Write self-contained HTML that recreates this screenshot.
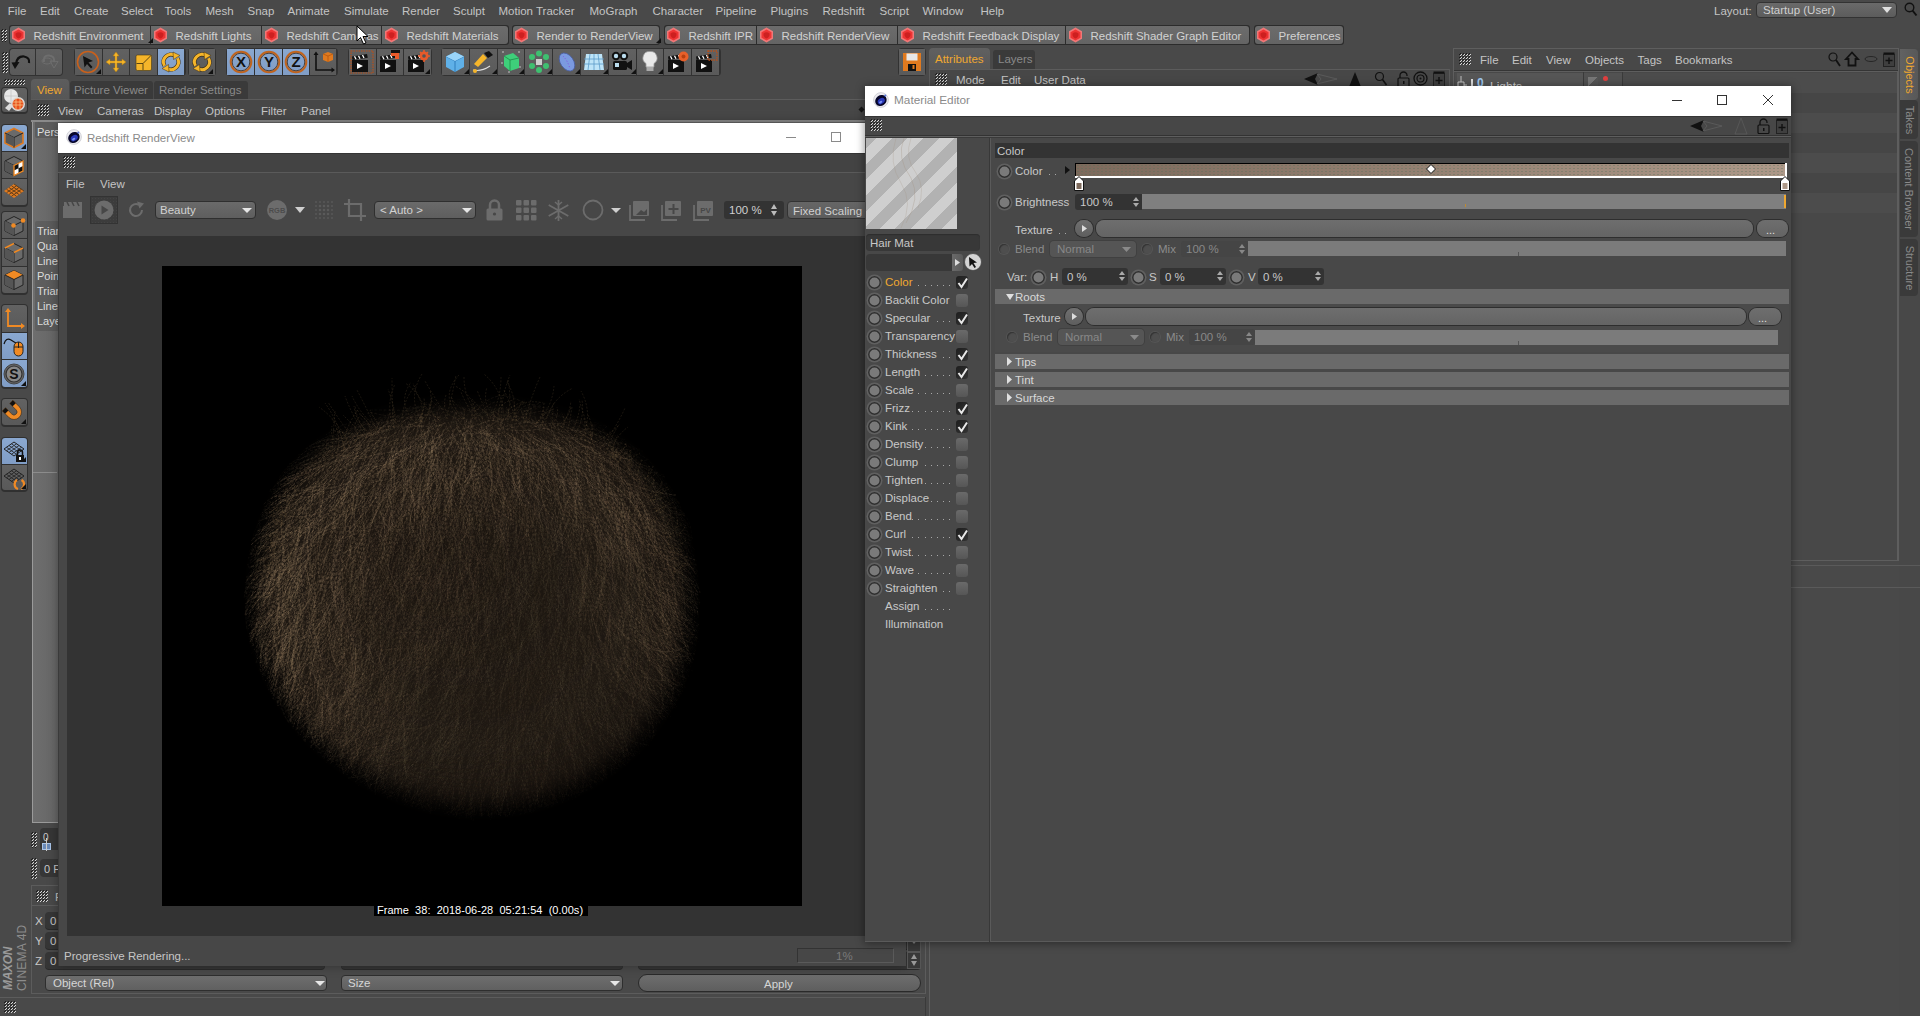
<!DOCTYPE html>
<html><head><meta charset="utf-8"><title>C4D</title><style>
*{margin:0;padding:0}
html,body{width:1920px;height:1016px;overflow:hidden;background:#494949;}
body{position:relative;font-family:"Liberation Sans",sans-serif;font-size:11.5px;color:#c4c4c4;}
.a{position:absolute;}
.t{position:absolute;line-height:1;white-space:pre;}
svg.a{overflow:visible;}
.grip{background-color:transparent;}
</style></head><body><svg width="0" height="0" style="position:absolute"><defs><pattern id="gp" width="3" height="3" patternUnits="userSpaceOnUse"><rect x="1" y="0" width="1" height="1" fill="#1c1c1c"/><rect x="0" y="1" width="1" height="1" fill="#1c1c1c"/><rect x="2" y="1" width="1" height="1" fill="#d8d8d8"/><rect x="1" y="2" width="1" height="1" fill="#d8d8d8"/></pattern></defs></svg>
<div class="t" style="left:7.800000000000001px;top:6.27px;font-size:11.5px;color:#c4c4c4;">File</div>
<div class="t" style="left:40.0px;top:6.27px;font-size:11.5px;color:#c4c4c4;">Edit</div>
<div class="t" style="left:74.0px;top:6.27px;font-size:11.5px;color:#c4c4c4;">Create</div>
<div class="t" style="left:121.0px;top:6.27px;font-size:11.5px;color:#c4c4c4;">Select</div>
<div class="t" style="left:164.5px;top:6.27px;font-size:11.5px;color:#c4c4c4;">Tools</div>
<div class="t" style="left:205.5px;top:6.27px;font-size:11.5px;color:#c4c4c4;">Mesh</div>
<div class="t" style="left:247.5px;top:6.27px;font-size:11.5px;color:#c4c4c4;">Snap</div>
<div class="t" style="left:287.5px;top:6.27px;font-size:11.5px;color:#c4c4c4;">Animate</div>
<div class="t" style="left:344.0px;top:6.27px;font-size:11.5px;color:#c4c4c4;">Simulate</div>
<div class="t" style="left:402.0px;top:6.27px;font-size:11.5px;color:#c4c4c4;">Render</div>
<div class="t" style="left:453.0px;top:6.27px;font-size:11.5px;color:#c4c4c4;">Sculpt</div>
<div class="t" style="left:498.5px;top:6.27px;font-size:11.5px;color:#c4c4c4;">Motion Tracker</div>
<div class="t" style="left:589.5px;top:6.27px;font-size:11.5px;color:#c4c4c4;">MoGraph</div>
<div class="t" style="left:652.5px;top:6.27px;font-size:11.5px;color:#c4c4c4;">Character</div>
<div class="t" style="left:715.5px;top:6.27px;font-size:11.5px;color:#c4c4c4;">Pipeline</div>
<div class="t" style="left:770.5px;top:6.27px;font-size:11.5px;color:#c4c4c4;">Plugins</div>
<div class="t" style="left:822.5px;top:6.27px;font-size:11.5px;color:#c4c4c4;">Redshift</div>
<div class="t" style="left:879.5px;top:6.27px;font-size:11.5px;color:#c4c4c4;">Script</div>
<div class="t" style="left:922.5px;top:6.27px;font-size:11.5px;color:#c4c4c4;">Window</div>
<div class="t" style="left:980.5px;top:6.27px;font-size:11.5px;color:#c4c4c4;">Help</div>
<div class="t" style="left:1714px;top:6.27px;font-size:11.5px;color:#c4c4c4;">Layout:</div>
<div class="a" style="left:1756px;top:2px;width:141px;height:16px;background:linear-gradient(#6a6a6a,#5c5c5c);border:1px solid #333;border-radius:4px;box-sizing:border-box;"></div>
<div class="t" style="left:1763px;top:5.27px;font-size:11.5px;color:#d0d0d0;">Startup (User)</div>
<svg class="a" style="left:1882px;top:7px;" width="10" height="6" viewBox="0 0 10 6"><path d="M0 0H10L5 6Z" fill="#e0e0e0"/></svg>
<svg class="a" style="left:1904px;top:2px;" width="14" height="16" viewBox="0 0 14 16"><circle cx="5.5" cy="5.5" r="4.3" fill="none" stroke="#111" stroke-width="1.4"/><path d="M8.5 8.5L12.5 13.5" stroke="#111" stroke-width="2"/></svg>
<svg class="a" style="left:1px;top:29px" width="6" height="13"><rect width="6" height="13" fill="url(#gp)"/></svg>
<div class="a" style="left:9px;top:25px;width:500px;height:20px;background:#2c2c2c;border-radius:3px;"></div>
<div class="a" style="left:10px;top:26px;width:140px;height:18px;background:linear-gradient(#6c6c6c,#646464);border-top-left-radius:3px;border-bottom-left-radius:3px;"></div>
<svg class="a" style="left:11px;top:27px" width="15" height="16" viewBox="0 0 15 16"><path d="M7.5 0.5L14 4.2V11.8L7.5 15.5L1 11.8V4.2Z" fill="#f07878"/><path d="M7.5 2.5L12.5 5.3V10.7L7.5 13.5L2.5 10.7V5.3Z" fill="#e33"/><path d="M4.5 6.5Q7.5 4 10.5 6.5Q11 10 7.5 11.5Q4 10 4.5 6.5Z" fill="#c41c1c" opacity="0.8"/></svg>
<div class="t" style="left:33.5px;top:31.27px;font-size:11.5px;color:#d2d2d2;">Redshift Environment</div>
<div class="a" style="left:151px;top:26px;width:110px;height:18px;background:linear-gradient(#6c6c6c,#646464);"></div>
<svg class="a" style="left:153px;top:27px" width="15" height="16" viewBox="0 0 15 16"><path d="M7.5 0.5L14 4.2V11.8L7.5 15.5L1 11.8V4.2Z" fill="#f07878"/><path d="M7.5 2.5L12.5 5.3V10.7L7.5 13.5L2.5 10.7V5.3Z" fill="#e33"/><path d="M4.5 6.5Q7.5 4 10.5 6.5Q11 10 7.5 11.5Q4 10 4.5 6.5Z" fill="#c41c1c" opacity="0.8"/></svg>
<div class="t" style="left:175.5px;top:31.27px;font-size:11.5px;color:#d2d2d2;">Redshift Lights</div>
<div class="a" style="left:262px;top:26px;width:119px;height:18px;background:linear-gradient(#6c6c6c,#646464);"></div>
<svg class="a" style="left:264px;top:27px" width="15" height="16" viewBox="0 0 15 16"><path d="M7.5 0.5L14 4.2V11.8L7.5 15.5L1 11.8V4.2Z" fill="#f07878"/><path d="M7.5 2.5L12.5 5.3V10.7L7.5 13.5L2.5 10.7V5.3Z" fill="#e33"/><path d="M4.5 6.5Q7.5 4 10.5 6.5Q11 10 7.5 11.5Q4 10 4.5 6.5Z" fill="#c41c1c" opacity="0.8"/></svg>
<div class="t" style="left:286.5px;top:31.27px;font-size:11.5px;color:#d2d2d2;">Redshift Cameras</div>
<div class="a" style="left:382px;top:26px;width:126px;height:18px;background:linear-gradient(#6c6c6c,#646464);border-top-right-radius:3px;border-bottom-right-radius:3px;"></div>
<svg class="a" style="left:384px;top:27px" width="15" height="16" viewBox="0 0 15 16"><path d="M7.5 0.5L14 4.2V11.8L7.5 15.5L1 11.8V4.2Z" fill="#f07878"/><path d="M7.5 2.5L12.5 5.3V10.7L7.5 13.5L2.5 10.7V5.3Z" fill="#e33"/><path d="M4.5 6.5Q7.5 4 10.5 6.5Q11 10 7.5 11.5Q4 10 4.5 6.5Z" fill="#c41c1c" opacity="0.8"/></svg>
<div class="t" style="left:406.5px;top:31.27px;font-size:11.5px;color:#d2d2d2;">Redshift Materials</div>
<div class="a" style="left:512px;top:25px;width:148px;height:20px;background:#2c2c2c;border-radius:3px;"></div>
<div class="a" style="left:513px;top:26px;width:146px;height:18px;background:linear-gradient(#6c6c6c,#646464);border-top-left-radius:3px;border-bottom-left-radius:3px;border-top-right-radius:3px;border-bottom-right-radius:3px;"></div>
<svg class="a" style="left:514px;top:27px" width="15" height="16" viewBox="0 0 15 16"><path d="M7.5 0.5L14 4.2V11.8L7.5 15.5L1 11.8V4.2Z" fill="#f07878"/><path d="M7.5 2.5L12.5 5.3V10.7L7.5 13.5L2.5 10.7V5.3Z" fill="#e33"/><path d="M4.5 6.5Q7.5 4 10.5 6.5Q11 10 7.5 11.5Q4 10 4.5 6.5Z" fill="#c41c1c" opacity="0.8"/></svg>
<div class="t" style="left:536.5px;top:31.27px;font-size:11.5px;color:#d2d2d2;">Render to RenderView</div>
<div class="a" style="left:664px;top:25px;width:586px;height:20px;background:#2c2c2c;border-radius:3px;"></div>
<div class="a" style="left:665px;top:26px;width:91px;height:18px;background:linear-gradient(#6c6c6c,#646464);border-top-left-radius:3px;border-bottom-left-radius:3px;"></div>
<svg class="a" style="left:666px;top:27px" width="15" height="16" viewBox="0 0 15 16"><path d="M7.5 0.5L14 4.2V11.8L7.5 15.5L1 11.8V4.2Z" fill="#f07878"/><path d="M7.5 2.5L12.5 5.3V10.7L7.5 13.5L2.5 10.7V5.3Z" fill="#e33"/><path d="M4.5 6.5Q7.5 4 10.5 6.5Q11 10 7.5 11.5Q4 10 4.5 6.5Z" fill="#c41c1c" opacity="0.8"/></svg>
<div class="t" style="left:688.5px;top:31.27px;font-size:11.5px;color:#d2d2d2;">Redshift IPR</div>
<div class="a" style="left:757px;top:26px;width:140px;height:18px;background:linear-gradient(#6c6c6c,#646464);"></div>
<svg class="a" style="left:759px;top:27px" width="15" height="16" viewBox="0 0 15 16"><path d="M7.5 0.5L14 4.2V11.8L7.5 15.5L1 11.8V4.2Z" fill="#f07878"/><path d="M7.5 2.5L12.5 5.3V10.7L7.5 13.5L2.5 10.7V5.3Z" fill="#e33"/><path d="M4.5 6.5Q7.5 4 10.5 6.5Q11 10 7.5 11.5Q4 10 4.5 6.5Z" fill="#c41c1c" opacity="0.8"/></svg>
<div class="t" style="left:781.5px;top:31.27px;font-size:11.5px;color:#d2d2d2;">Redshift RenderView</div>
<div class="a" style="left:898px;top:26px;width:167px;height:18px;background:linear-gradient(#6c6c6c,#646464);"></div>
<svg class="a" style="left:900px;top:27px" width="15" height="16" viewBox="0 0 15 16"><path d="M7.5 0.5L14 4.2V11.8L7.5 15.5L1 11.8V4.2Z" fill="#f07878"/><path d="M7.5 2.5L12.5 5.3V10.7L7.5 13.5L2.5 10.7V5.3Z" fill="#e33"/><path d="M4.5 6.5Q7.5 4 10.5 6.5Q11 10 7.5 11.5Q4 10 4.5 6.5Z" fill="#c41c1c" opacity="0.8"/></svg>
<div class="t" style="left:922.5px;top:31.27px;font-size:11.5px;color:#d2d2d2;">Redshift Feedback Display</div>
<div class="a" style="left:1066px;top:26px;width:183px;height:18px;background:linear-gradient(#6c6c6c,#646464);border-top-right-radius:3px;border-bottom-right-radius:3px;"></div>
<svg class="a" style="left:1068px;top:27px" width="15" height="16" viewBox="0 0 15 16"><path d="M7.5 0.5L14 4.2V11.8L7.5 15.5L1 11.8V4.2Z" fill="#f07878"/><path d="M7.5 2.5L12.5 5.3V10.7L7.5 13.5L2.5 10.7V5.3Z" fill="#e33"/><path d="M4.5 6.5Q7.5 4 10.5 6.5Q11 10 7.5 11.5Q4 10 4.5 6.5Z" fill="#c41c1c" opacity="0.8"/></svg>
<div class="t" style="left:1090.5px;top:31.27px;font-size:11.5px;color:#d2d2d2;">Redshift Shader Graph Editor</div>
<div class="a" style="left:1254px;top:25px;width:90px;height:20px;background:#2c2c2c;border-radius:3px;"></div>
<div class="a" style="left:1255px;top:26px;width:88px;height:18px;background:linear-gradient(#6c6c6c,#646464);border-top-left-radius:3px;border-bottom-left-radius:3px;border-top-right-radius:3px;border-bottom-right-radius:3px;"></div>
<svg class="a" style="left:1256px;top:27px" width="15" height="16" viewBox="0 0 15 16"><path d="M7.5 0.5L14 4.2V11.8L7.5 15.5L1 11.8V4.2Z" fill="#f07878"/><path d="M7.5 2.5L12.5 5.3V10.7L7.5 13.5L2.5 10.7V5.3Z" fill="#e33"/><path d="M4.5 6.5Q7.5 4 10.5 6.5Q11 10 7.5 11.5Q4 10 4.5 6.5Z" fill="#c41c1c" opacity="0.8"/></svg>
<div class="t" style="left:1278.5px;top:31.27px;font-size:11.5px;color:#d2d2d2;">Preferences</div>
<svg class="a" style="left:148px;top:38px;" width="5" height="5" viewBox="0 0 5 5"><path d="M5 0V5H0Z" fill="#111"/></svg>
<svg class="a" style="left:656px;top:38px;" width="5" height="5" viewBox="0 0 5 5"><path d="M5 0V5H0Z" fill="#111"/></svg>
<svg class="a" style="left:2px;top:52px" width="6" height="21"><rect width="6" height="21" fill="url(#gp)"/></svg>
<div class="a" style="left:9px;top:48px;width:54px;height:28px;background:#323232;border-radius:4px;"></div>
<div class="a" style="left:10px;top:49px;width:25px;height:26px;background:linear-gradient(#616161,#5a5a5a);border-radius:3px 0 0 3px;"></div>
<div class="a" style="left:36px;top:49px;width:26px;height:26px;background:linear-gradient(#616161,#5a5a5a);border-radius:0 3px 3px 0;"></div>
<div class="a" style="left:74px;top:48px;width:112px;height:28px;background:#323232;border-radius:4px;"></div>
<div class="a" style="left:75px;top:49px;width:26.5px;height:26px;background:linear-gradient(#616161,#5a5a5a);"></div>
<div class="a" style="left:102.5px;top:49px;width:26.5px;height:26px;background:linear-gradient(#616161,#5a5a5a);"></div>
<div class="a" style="left:130px;top:49px;width:26.5px;height:26px;background:linear-gradient(#616161,#5a5a5a);"></div>
<div class="a" style="left:157.5px;top:49px;width:26.5px;height:26px;background:linear-gradient(#8aa8d0,#809dc6);"></div>
<div class="a" style="left:188px;top:48px;width:28px;height:28px;background:#323232;border-radius:4px;"></div>
<div class="a" style="left:189px;top:49px;width:26px;height:26px;background:linear-gradient(#616161,#5a5a5a);"></div>
<div class="a" style="left:226px;top:48px;width:112px;height:28px;background:#323232;border-radius:4px;"></div>
<div class="a" style="left:227px;top:49px;width:27px;height:26px;background:linear-gradient(#8aa8d0,#809dc6);"></div>
<div class="a" style="left:255px;top:49px;width:27px;height:26px;background:linear-gradient(#8aa8d0,#809dc6);"></div>
<div class="a" style="left:283px;top:49px;width:26px;height:26px;background:linear-gradient(#8aa8d0,#809dc6);"></div>
<div class="a" style="left:310px;top:49px;width:26px;height:26px;background:linear-gradient(#616161,#5a5a5a);"></div>
<div class="a" style="left:348px;top:48px;width:84px;height:28px;background:#323232;border-radius:4px;"></div>
<div class="a" style="left:349.0px;top:49px;width:26.69999999999999px;height:26px;background:linear-gradient(#616161,#5a5a5a);"></div>
<div class="a" style="left:376.7px;top:49px;width:26.69999999999999px;height:26px;background:linear-gradient(#616161,#5a5a5a);"></div>
<div class="a" style="left:404.4px;top:49px;width:26.700000000000045px;height:26px;background:linear-gradient(#616161,#5a5a5a);"></div>
<div class="a" style="left:441px;top:48px;width:280px;height:28px;background:#323232;border-radius:4px;"></div>
<div class="a" style="left:442.0px;top:49px;width:26.80000000000001px;height:26px;background:linear-gradient(#616161,#5a5a5a);"></div>
<div class="a" style="left:469.8px;top:49px;width:26.80000000000001px;height:26px;background:linear-gradient(#616161,#5a5a5a);"></div>
<div class="a" style="left:497.6px;top:49px;width:26.799999999999955px;height:26px;background:linear-gradient(#616161,#5a5a5a);"></div>
<div class="a" style="left:525.4px;top:49px;width:26.800000000000068px;height:26px;background:linear-gradient(#616161,#5a5a5a);"></div>
<div class="a" style="left:553.2px;top:49px;width:26.799999999999955px;height:26px;background:linear-gradient(#616161,#5a5a5a);"></div>
<div class="a" style="left:581.0px;top:49px;width:26.799999999999955px;height:26px;background:linear-gradient(#616161,#5a5a5a);"></div>
<div class="a" style="left:608.8px;top:49px;width:26.800000000000068px;height:26px;background:linear-gradient(#616161,#5a5a5a);"></div>
<div class="a" style="left:636.6px;top:49px;width:26.799999999999955px;height:26px;background:linear-gradient(#616161,#5a5a5a);"></div>
<div class="a" style="left:664.4px;top:49px;width:26.800000000000068px;height:26px;background:linear-gradient(#616161,#5a5a5a);"></div>
<div class="a" style="left:692.2px;top:49px;width:26.799999999999955px;height:26px;background:linear-gradient(#616161,#5a5a5a);"></div>
<div class="a" style="left:898px;top:48px;width:28px;height:28px;background:#323232;border-radius:4px;"></div>
<div class="a" style="left:899px;top:49px;width:26px;height:26px;background:linear-gradient(#616161,#5a5a5a);"></div>
<svg class="a" style="left:10px;top:50px;" width="24" height="24" viewBox="0 0 24 24"><path d="M6 14 Q7 6 14 6.5 Q20 7.5 19 13" fill="none" stroke="#111" stroke-width="2.2"/><path d="M1.5 12.5L9.5 12L5 19Z" fill="#111"/></svg>
<svg class="a" style="left:37px;top:50px;" width="24" height="24" viewBox="0 0 24 24"><path d="M7 12 Q6 5 12 5.5 Q18 6 17 12" fill="none" stroke="#6e6e6e" stroke-width="2"/><path d="M13 11L21 11.5L17 18Z" fill="none" stroke="#6e6e6e" stroke-width="1"/><ellipse cx="10" cy="11" rx="5" ry="3" fill="none" stroke="#6e6e6e"/></svg>
<svg class="a" style="left:76px;top:50px;" width="24" height="24" viewBox="0 0 24 24"><circle cx="12" cy="12" r="10.5" fill="none" stroke="#c8601c" stroke-width="1.6"/><path d="M7 6L17 11L12.5 12.5L16.5 17L15 18.5L11 14L8.5 17.5Z" fill="#111"/></svg>
<svg class="a" style="left:104px;top:50px;" width="24" height="24" viewBox="0 0 24 24"><path d="M12 2L15 6H13V11H18V9L22 12L18 15V13H13V18H15L12 22L9 18H11V13H6V15L2 12L6 9V11H11V6H9Z" fill="#f5b52a" stroke="#b07a10" stroke-width="0.5"/></svg>
<svg class="a" style="left:132px;top:50px;" width="24" height="24" viewBox="0 0 24 24"><rect x="4" y="5" width="15.5" height="15.5" rx="1.5" fill="#f5b52a" stroke="#4a3a10" stroke-width="0.6"/><path d="M4.5 13.5H11V20" fill="none" stroke="#4a3a10" stroke-width="0.9"/><path d="M11 13.5L19 5.5" stroke="#4a3a10" stroke-width="0.9"/></svg>
<svg class="a" style="left:159px;top:50px;" width="24" height="24" viewBox="0 0 24 24"><path d="M18.5 8.25A7.5 7.5 0 0 1 8.25 18.5M5.5 15.75A7.5 7.5 0 0 1 15.75 5.5" fill="none" stroke="#3a2a10" stroke-width="4.2"/><path d="M18.5 8.25A7.5 7.5 0 0 1 8.25 18.5M5.5 15.75A7.5 7.5 0 0 1 15.75 5.5" fill="none" stroke="#f5b52a" stroke-width="3"/><path d="M14 2L21 5.5L14.5 9.5Z M10 22L3 18.5L9.5 14.5Z" fill="#f5b52a" stroke="#3a2a10" stroke-width="0.5"/></svg>
<svg class="a" style="left:190px;top:50px;" width="24" height="24" viewBox="0 0 24 24"><path d="M18.5 8.25A7.5 7.5 0 0 1 8.25 18.5M5.5 15.75A7.5 7.5 0 0 1 15.75 5.5" fill="none" stroke="#3a2a10" stroke-width="4.2"/><path d="M18.5 8.25A7.5 7.5 0 0 1 8.25 18.5M5.5 15.75A7.5 7.5 0 0 1 15.75 5.5" fill="none" stroke="#f5b52a" stroke-width="3"/><path d="M14 2L21 5.5L14.5 9.5Z M10 22L3 18.5L9.5 14.5Z" fill="#f5b52a" stroke="#3a2a10" stroke-width="0.5"/></svg>
<svg class="a" style="left:229px;top:50px;" width="24" height="24" viewBox="0 0 24 24"><circle cx="12" cy="12" r="10.3" fill="none" stroke="#c0641e" stroke-width="2"/><circle cx="12" cy="12" r="8.8" fill="none" stroke="#3a2a1a" stroke-width="0.8"/><text x="12" y="17.2" text-anchor="middle" font-family="Liberation Sans" font-weight="bold" font-size="15" fill="#111">X</text></svg>
<svg class="a" style="left:257px;top:50px;" width="24" height="24" viewBox="0 0 24 24"><circle cx="12" cy="12" r="10.3" fill="none" stroke="#c0641e" stroke-width="2"/><circle cx="12" cy="12" r="8.8" fill="none" stroke="#3a2a1a" stroke-width="0.8"/><text x="12" y="17.2" text-anchor="middle" font-family="Liberation Sans" font-weight="bold" font-size="15" fill="#111">Y</text></svg>
<svg class="a" style="left:284px;top:50px;" width="24" height="24" viewBox="0 0 24 24"><circle cx="12" cy="12" r="10.3" fill="none" stroke="#c0641e" stroke-width="2"/><circle cx="12" cy="12" r="8.8" fill="none" stroke="#3a2a1a" stroke-width="0.8"/><text x="12" y="17.2" text-anchor="middle" font-family="Liberation Sans" font-weight="bold" font-size="15" fill="#111">Z</text></svg>
<svg class="a" style="left:312px;top:50px;" width="24" height="24" viewBox="0 0 24 24"><path d="M4 4V20H21" fill="none" stroke="#111" stroke-width="1.6"/><path d="M4 1.5L6.5 5H1.5Z M23 20L19.5 22.5V17.5Z" fill="#111"/><path d="M11 4L16 2L21 4V10L16 12L11 10Z" fill="#e07a1f"/><path d="M11 4L16 6L21 4 M16 6V12" stroke="#b0500a" fill="none" stroke-width="0.7"/></svg>
<svg class="a" style="left:350px;top:50px;" width="24" height="24" viewBox="0 0 24 24"><rect x="2" y="10" width="16" height="12" fill="#111"/><path d="M2 6.5L17 4L17.8 7.8L2.5 10Z" fill="#111"/><path d="M4.5 6.3L6 9.3M8.5 5.7L10 8.7M12.5 5L14 8" stroke="#fff" stroke-width="1.3"/><path d="M7 13L13 16L7 19Z" fill="#fff"/><rect x="1" y="1" width="22" height="22" fill="none" stroke="#b8501a" stroke-width="1.2" stroke-dasharray="1.5 1"/></svg>
<svg class="a" style="left:378px;top:50px;" width="24" height="24" viewBox="0 0 24 24"><rect x="2" y="10" width="16" height="12" fill="#111"/><path d="M2 6.5L17 4L17.8 7.8L2.5 10Z" fill="#111"/><path d="M4.5 6.3L6 9.3M8.5 5.7L10 8.7M12.5 5L14 8" stroke="#fff" stroke-width="1.3"/><path d="M7 13L13 16L7 19Z" fill="#fff"/><path d="M13 1H21V9H17V6H13Z" fill="#e85a2a"/><rect x="13" y="0" width="9" height="3" fill="#111"/></svg>
<svg class="a" style="left:406px;top:50px;" width="24" height="24" viewBox="0 0 24 24"><rect x="2" y="10" width="16" height="12" fill="#111"/><path d="M2 6.5L17 4L17.8 7.8L2.5 10Z" fill="#111"/><path d="M4.5 6.3L6 9.3M8.5 5.7L10 8.7M12.5 5L14 8" stroke="#fff" stroke-width="1.3"/><path d="M7 13L13 16L7 19Z" fill="#fff"/><circle cx="18" cy="6" r="4.5" fill="#e85a2a"/><circle cx="18" cy="6" r="1.8" fill="#555"/><path d="M18 0V2M18 10V12M12 6H14M22 6H24M14 2L15.3 3.3M22 2L20.7 3.3" stroke="#e85a2a" stroke-width="1.6"/></svg>
<svg class="a" style="left:443px;top:50px;" width="24" height="24" viewBox="0 0 24 24"><path d="M12 2L21 6.5V17L12 22L3 17V6.5Z" fill="#5fb0e8"/><path d="M3 6.5L12 11L21 6.5M12 11V22" fill="none" stroke="#2a78b8" stroke-width="0.9"/><path d="M12 2L21 6.5L12 11L3 6.5Z" fill="#9ad4f8"/></svg>
<svg class="a" style="left:471px;top:50px;" width="24" height="24" viewBox="0 0 24 24"><path d="M3 14L12 4L16 8L7 17Z" fill="#f5b52a"/><path d="M13 3L18 1L22 5L17 8Z" fill="#111"/><path d="M2 20Q10 22 19 16" fill="none" stroke="#ddd" stroke-width="1.2"/><circle cx="4" cy="21" r="2" fill="#f5b52a"/></svg>
<svg class="a" style="left:499px;top:50px;" width="24" height="24" viewBox="0 0 24 24"><path d="M5 6L14 3L20 8V18L11 21L5 16Z" fill="#3ecf7a"/><path d="M5 6L11 10L20 8M11 10V21" fill="none" stroke="#1f8a48" stroke-width="0.8"/><rect x="3" y="2" width="18" height="20" fill="none" stroke="#ddd" stroke-width="0.8" stroke-dasharray="2 14"/></svg>
<svg class="a" style="left:527px;top:50px;" width="24" height="24" viewBox="0 0 24 24"><g fill="#3ec070"><circle cx="12" cy="3.5" r="3"/><circle cx="19" cy="7" r="3"/><circle cx="19" cy="16" r="3"/><circle cx="12" cy="20" r="3"/><circle cx="5" cy="16" r="3"/><circle cx="5" cy="7" r="3"/></g><rect x="9" y="9" width="6" height="6" fill="#ccc"/></svg>
<svg class="a" style="left:555px;top:50px;" width="24" height="24" viewBox="0 0 24 24"><ellipse cx="12" cy="12" rx="6.5" ry="10" transform="rotate(-35 12 12)" fill="#7b9ae0" stroke="#4a5ea0" stroke-width="0.8"/><path d="M8 6Q13 11 15 19" fill="none" stroke="#8a2be2" stroke-width="0.7" stroke-dasharray="1 2"/></svg>
<svg class="a" style="left:582px;top:50px;" width="24" height="24" viewBox="0 0 24 24"><path d="M4 4H20L22 20H2Z" fill="#bde4f8"/><path d="M2 9H22M2 14H22M8 4L6 20M12 4V20M16 4L18 20" stroke="#5a9ac8" stroke-width="0.8"/></svg>
<svg class="a" style="left:610px;top:50px;" width="24" height="24" viewBox="0 0 24 24"><circle cx="6" cy="6" r="4.2" fill="#111"/><circle cx="14" cy="6" r="4.2" fill="#111"/><circle cx="6" cy="6" r="2.2" fill="#bde"/><circle cx="14" cy="6" r="2.2" fill="#bde"/><rect x="3" y="11" width="14" height="9" rx="1.5" fill="#111"/><rect x="5" y="13" width="4" height="4" fill="#bde"/><path d="M17 13L22 10V20L17 17Z" fill="#111"/></svg>
<svg class="a" style="left:638px;top:50px;" width="24" height="24" viewBox="0 0 24 24"><path d="M12 1.5A6.5 6.5 0 0 1 16 13.5V17H8V13.5A6.5 6.5 0 0 1 12 1.5Z" fill="#e8e8e8" stroke="#999" stroke-width="0.8"/><rect x="8.5" y="17" width="7" height="4" fill="#aaa"/></svg>
<svg class="a" style="left:666px;top:50px;" width="24" height="24" viewBox="0 0 24 24"><rect x="2" y="10" width="16" height="12" fill="#111"/><path d="M2 6.5L17 4L17.8 7.8L2.5 10Z" fill="#111"/><path d="M4.5 6.3L6 9.3M8.5 5.7L10 8.7M12.5 5L14 8" stroke="#fff" stroke-width="1.3"/><path d="M7 13L13 16L7 19Z" fill="#fff"/><circle cx="17.5" cy="6.5" r="5" fill="#e8602a"/><circle cx="17.5" cy="6.5" r="2" fill="#b84010"/></svg>
<svg class="a" style="left:694px;top:50px;" width="24" height="24" viewBox="0 0 24 24"><rect x="2" y="10" width="16" height="12" fill="#111"/><path d="M2 6.5L17 4L17.8 7.8L2.5 10Z" fill="#111"/><path d="M4.5 6.3L6 9.3M8.5 5.7L10 8.7M12.5 5L14 8" stroke="#fff" stroke-width="1.3"/><path d="M7 13L13 16L7 19Z" fill="#fff"/><rect x="14" y="1" width="9" height="9" fill="none" stroke="#b8501a" stroke-width="1.3" stroke-dasharray="1.5 1"/></svg>
<svg class="a" style="left:463.8px;top:69px;" width="5" height="5" viewBox="0 0 5 5"><path d="M5 0V5H0Z" fill="#111"/></svg>
<svg class="a" style="left:491.6px;top:69px;" width="5" height="5" viewBox="0 0 5 5"><path d="M5 0V5H0Z" fill="#111"/></svg>
<svg class="a" style="left:519.4px;top:69px;" width="5" height="5" viewBox="0 0 5 5"><path d="M5 0V5H0Z" fill="#111"/></svg>
<svg class="a" style="left:547.2px;top:69px;" width="5" height="5" viewBox="0 0 5 5"><path d="M5 0V5H0Z" fill="#111"/></svg>
<svg class="a" style="left:575.0px;top:69px;" width="5" height="5" viewBox="0 0 5 5"><path d="M5 0V5H0Z" fill="#111"/></svg>
<svg class="a" style="left:602.8px;top:69px;" width="5" height="5" viewBox="0 0 5 5"><path d="M5 0V5H0Z" fill="#111"/></svg>
<svg class="a" style="left:630.6px;top:69px;" width="5" height="5" viewBox="0 0 5 5"><path d="M5 0V5H0Z" fill="#111"/></svg>
<svg class="a" style="left:658.4px;top:69px;" width="5" height="5" viewBox="0 0 5 5"><path d="M5 0V5H0Z" fill="#111"/></svg>
<svg class="a" style="left:96px;top:69px;" width="5" height="5" viewBox="0 0 5 5"><path d="M5 0V5H0Z" fill="#111"/></svg>
<svg class="a" style="left:208px;top:69px;" width="5" height="5" viewBox="0 0 5 5"><path d="M5 0V5H0Z" fill="#111"/></svg>
<svg class="a" style="left:425px;top:69px;" width="5" height="5" viewBox="0 0 5 5"><path d="M5 0V5H0Z" fill="#111"/></svg>
<svg class="a" style="left:900px;top:50px;" width="24" height="24" viewBox="0 0 24 24"><path d="M3 3H21V21H3Z" fill="#e07a1f"/><rect x="6.5" y="3.5" width="11" height="7" fill="#e8e8e8"/><rect x="8" y="14" width="8" height="7" fill="#111"/><rect x="12.5" y="15" width="2" height="4" fill="#e07a1f"/></svg>
<svg class="a" style="left:4px;top:79px" width="21" height="6"><rect width="21" height="6" fill="url(#gp)"/></svg>
<div class="a" style="left:1px;top:87px;width:27px;height:27px;background:#303030;border-radius:4px;"></div>
<div class="a" style="left:2px;top:88.0px;width:25px;height:24.0px;background:linear-gradient(#626262,#595959);border-top-left-radius:3px;border-top-right-radius:3px;border-bottom-left-radius:3px;border-bottom-right-radius:3px;"></div>
<svg class="a" style="left:2px;top:88px;" width="24" height="24" viewBox="0 0 24 24"><circle cx="9" cy="8" r="7" fill="#e8e8e8"/><path d="M2 8H16M9 1V15" stroke="#bbb" stroke-width="0.6"/><path d="M3 20L8 15L11 18L7 23Z" fill="#ddd"/><circle cx="16" cy="16" r="7" fill="#ddd"/><circle cx="16" cy="16" r="5.5" fill="#e8501c"/><path d="M11 14H21M11 17H21M14 10V22M18 10V22" stroke="#f8c080" stroke-width="0.8"/></svg>
<div class="a" style="left:1px;top:124px;width:27px;height:83px;background:#303030;border-radius:4px;"></div>
<div class="a" style="left:2px;top:125.0px;width:25px;height:26.0px;background:linear-gradient(#8aa8d0,#809dc6);border-top-left-radius:3px;border-top-right-radius:3px;"></div>
<div class="a" style="left:2px;top:152.0px;width:25px;height:26.0px;background:linear-gradient(#626262,#595959);"></div>
<div class="a" style="left:2px;top:179.0px;width:25px;height:26.0px;background:linear-gradient(#626262,#595959);border-bottom-left-radius:3px;border-bottom-right-radius:3px;"></div>
<svg class="a" style="left:2px;top:126px;" width="24" height="24" viewBox="0 0 24 24"><path d="M12 2.5L21 7V17L12 21.5L3 17V7Z" fill="#6a6a6a" stroke="#e07a1f" stroke-width="1.6"/><path d="M3 7L12 11.5L21 7M12 11.5V21.5" fill="none" stroke="#222" stroke-width="1"/><path d="M3.8 7.5L12 11.5V20.5L3.8 16.5Z" fill="#555"/></svg>
<svg class="a" style="left:21px;top:144px;" width="5" height="5" viewBox="0 0 5 5"><path d="M5 0V5H0Z" fill="#111"/></svg>
<svg class="a" style="left:2px;top:154px;" width="24" height="24" viewBox="0 0 24 24"><path d="M12 2.5L21 7V17L12 21.5L3 17V7Z" fill="#6a6a6a" stroke="#222" stroke-width="1"/><path d="M3 7L12 11.5L21 7M12 11.5V21.5" fill="none" stroke="#222" stroke-width="1"/><path d="M3 7L12 11.5V21.5L3 17Z" fill="#555"/><path d="M12 11.5L21 7V17L12 21.5Z" fill="#fff"/><path d="M12 11.5L16.5 9.25V14.25L12 16.5Z M16.5 14.25L21 12V17L16.5 19.25Z" fill="#111"/><path d="M12 11.5L21 7V17L12 21.5Z" fill="none" stroke="#f08a24" stroke-width="1.3"/></svg>
<svg class="a" style="left:2px;top:180px;" width="24" height="24" viewBox="0 0 24 24"><path d="M12 4L22 11L12 18L2 11Z" fill="#e07a1f"/><path d="M7 7.5L17 14.5M12 4L22 11M9.5 5.75L19.5 12.75M4.5 9.25L14.5 16.25M17 7.5L7 14.5M14.5 5.75L4.5 12.75M19.5 9.25L9.5 16.25" stroke="#5a3a1a" stroke-width="0.9"/></svg>
<div class="a" style="left:1px;top:211px;width:27px;height:84px;background:#303030;border-radius:4px;"></div>
<div class="a" style="left:2px;top:212.0px;width:25px;height:26.3px;background:linear-gradient(#626262,#595959);border-top-left-radius:3px;border-top-right-radius:3px;"></div>
<div class="a" style="left:2px;top:239.3px;width:25px;height:26.3px;background:linear-gradient(#626262,#595959);"></div>
<div class="a" style="left:2px;top:266.7px;width:25px;height:26.3px;background:linear-gradient(#626262,#595959);border-bottom-left-radius:3px;border-bottom-right-radius:3px;"></div>
<svg class="a" style="left:2px;top:214px;" width="24" height="24" viewBox="0 0 24 24"><path d="M12 2.5L21 7V17L12 21.5L3 17V7Z" fill="#6a6a6a" stroke="#222" stroke-width="1"/><path d="M3 7L12 11.5L21 7M12 11.5V21.5" fill="none" stroke="#222" stroke-width="1"/><path d="M3 7L12 11.5V21.5L3 17Z" fill="#555"/><circle cx="21" cy="6.5" r="2.3" fill="#f08a24"/><circle cx="11.5" cy="11.5" r="2.3" fill="#f08a24"/></svg>
<svg class="a" style="left:2px;top:241px;" width="24" height="24" viewBox="0 0 24 24"><path d="M12 2.5L21 7V17L12 21.5L3 17V7Z" fill="#6a6a6a" stroke="#222" stroke-width="1"/><path d="M3 7L12 11.5L21 7M12 11.5V21.5" fill="none" stroke="#222" stroke-width="1"/><path d="M3 7L12 11.5V21.5L3 17Z" fill="#555"/><path d="M3 7L12 2.5" stroke="#f08a24" stroke-width="1.8"/><path d="M12 11.5L21 7" stroke="#f08a24" stroke-width="1.8"/></svg>
<svg class="a" style="left:2px;top:268px;" width="24" height="24" viewBox="0 0 24 24"><path d="M12 2.5L21 7V17L12 21.5L3 17V7Z" fill="#6a6a6a" stroke="#222" stroke-width="1"/><path d="M3 7L12 11.5V21.5L3 17Z" fill="#555"/><path d="M12 2.5L21 7L12 11.5L3 7Z" fill="#f08a24"/><path d="M3 7L12 11.5L21 7M12 11.5V21.5" fill="none" stroke="#222" stroke-width="1"/></svg>
<div class="a" style="left:1px;top:304px;width:27px;height:85px;background:#303030;border-radius:4px;"></div>
<div class="a" style="left:2px;top:305.0px;width:25px;height:26.7px;background:linear-gradient(#626262,#595959);border-top-left-radius:3px;border-top-right-radius:3px;"></div>
<div class="a" style="left:2px;top:332.7px;width:25px;height:26.7px;background:linear-gradient(#8aa8d0,#809dc6);"></div>
<div class="a" style="left:2px;top:360.3px;width:25px;height:26.7px;background:linear-gradient(#8aa8d0,#809dc6);border-bottom-left-radius:3px;border-bottom-right-radius:3px;"></div>
<svg class="a" style="left:2px;top:307px;" width="24" height="24" viewBox="0 0 24 24"><path d="M6 4V19H20" fill="none" stroke="#f08a24" stroke-width="1.8"/><path d="M6 1L9 5H3Z M23 19L19 22V16Z" fill="#f08a24"/></svg>
<svg class="a" style="left:2px;top:334px;" width="24" height="24" viewBox="0 0 24 24"><path d="M2 10Q4 3 9 6Q12 8 14 9" fill="none" stroke="#111" stroke-width="1.2"/><rect x="12" y="8" width="9" height="14" rx="4.5" fill="#f08a24" stroke="#222" stroke-width="1"/><path d="M16.5 8V14M12 13H21" stroke="#222" stroke-width="1"/></svg>
<svg class="a" style="left:2px;top:362px;" width="24" height="24" viewBox="0 0 24 24"><circle cx="12" cy="12" r="10" fill="#666" stroke="#444" stroke-width="1"/><circle cx="12" cy="12" r="8" fill="#888" stroke="#333" stroke-width="1.2"/><text x="12" y="17" text-anchor="middle" font-family="Liberation Sans" font-weight="bold" font-size="14" fill="#111">S</text></svg>
<svg class="a" style="left:21px;top:381px;" width="5" height="5" viewBox="0 0 5 5"><path d="M5 0V5H0Z" fill="#111"/></svg>
<div class="a" style="left:1px;top:398px;width:27px;height:29px;background:#303030;border-radius:4px;"></div>
<div class="a" style="left:2px;top:399.0px;width:25px;height:26.0px;background:linear-gradient(#626262,#595959);border-top-left-radius:3px;border-top-right-radius:3px;border-bottom-left-radius:3px;border-bottom-right-radius:3px;"></div>
<svg class="a" style="left:2px;top:400px;" width="24" height="24" viewBox="0 0 24 24"><g transform="rotate(-45 12 12)"><path d="M4.5 3V12A7.5 7.5 0 0 0 19.5 12V3H15V12A3 3 0 0 1 9 12V3Z" fill="#f08a24" stroke="#3a2a1a" stroke-width="0.6"/><rect x="4.5" y="3" width="4.5" height="4" fill="#111"/><rect x="15" y="3" width="4.5" height="4" fill="#111"/></g></svg>
<svg class="a" style="left:21px;top:419px;" width="5" height="5" viewBox="0 0 5 5"><path d="M5 0V5H0Z" fill="#111"/></svg>
<div class="a" style="left:1px;top:437px;width:27px;height:55px;background:#303030;border-radius:4px;"></div>
<div class="a" style="left:2px;top:438.0px;width:25px;height:25.5px;background:linear-gradient(#8aa8d0,#809dc6);border-top-left-radius:3px;border-top-right-radius:3px;"></div>
<div class="a" style="left:2px;top:464.5px;width:25px;height:25.5px;background:linear-gradient(#626262,#595959);border-bottom-left-radius:3px;border-bottom-right-radius:3px;"></div>
<svg class="a" style="left:2px;top:439px;" width="24" height="24" viewBox="0 0 24 24"><path d="M12 3L22 10L12 17L2 10Z" fill="none" stroke="#222" stroke-width="1"/><path d="M7 6.5L17 13.5M9.5 4.75L19.5 11.75M4.5 8.25L14.5 15.25M17 6.5L7 13.5M14.5 4.75L4.5 11.75M19.5 8.25L9.5 15.25" stroke="#222" stroke-width="0.8"/><rect x="14" y="16" width="8" height="7" fill="#111"/><path d="M15.5 16V13.5A2.5 2.5 0 0 1 20.5 13.5V16" fill="none" stroke="#111" stroke-width="1.5"/><rect x="17" y="18" width="2" height="3" fill="#fff"/></svg>
<svg class="a" style="left:2px;top:466px;" width="24" height="24" viewBox="0 0 24 24"><path d="M12 3L22 10L12 17L2 10Z" fill="none" stroke="#222" stroke-width="1"/><path d="M7 6.5L17 13.5M9.5 4.75L19.5 11.75M4.5 8.25L14.5 15.25M17 6.5L7 13.5M14.5 4.75L4.5 11.75M19.5 8.25L9.5 15.25" stroke="#222" stroke-width="0.8"/><path d="M15 14A5 5 0 0 0 16 23M19.5 14A5 5 0 0 1 19 23" fill="none" stroke="#f08a24" stroke-width="2.2"/></svg>
<svg class="a" style="left:21px;top:457px;" width="5" height="5" viewBox="0 0 5 5"><path d="M5 0V5H0Z" fill="#111"/></svg>
<svg class="a" style="left:21px;top:484px;" width="5" height="5" viewBox="0 0 5 5"><path d="M5 0V5H0Z" fill="#111"/></svg>
<div class="a" style="left:31px;top:79px;width:38px;height:21px;background:linear-gradient(#5d5d5d,#565656);border-radius:4px 4px 0 0;"></div>
<div class="t" style="left:37px;top:85.27px;font-size:11.5px;color:#f0a830;">View</div>
<div class="a" style="left:70px;top:81px;width:83px;height:18px;background:#3a3a3a;border-radius:3px 3px 0 0;"></div>
<div class="t" style="left:74px;top:85.27px;font-size:11.5px;color:#8a8a8a;">Picture Viewer</div>
<div class="a" style="left:154px;top:81px;width:94px;height:18px;background:#3a3a3a;border-radius:3px 3px 0 0;"></div>
<div class="t" style="left:159px;top:85.27px;font-size:11.5px;color:#8a8a8a;">Render Settings</div>
<div class="a" style="left:31px;top:99px;width:898px;height:1px;background:#5c5c5c;"></div>
<div class="a" style="left:31px;top:100px;width:898px;height:21px;background:#474747;"></div>
<svg class="a" style="left:37px;top:104px" width="12" height="12"><rect width="12" height="12" fill="url(#gp)"/></svg>
<div class="t" style="left:58px;top:106.27px;font-size:11.5px;color:#c4c4c4;">View</div>
<div class="t" style="left:97px;top:106.27px;font-size:11.5px;color:#c4c4c4;">Cameras</div>
<div class="t" style="left:154px;top:106.27px;font-size:11.5px;color:#c4c4c4;">Display</div>
<div class="t" style="left:205px;top:106.27px;font-size:11.5px;color:#c4c4c4;">Options</div>
<div class="t" style="left:261px;top:106.27px;font-size:11.5px;color:#c4c4c4;">Filter</div>
<div class="t" style="left:301px;top:106.27px;font-size:11.5px;color:#c4c4c4;">Panel</div>
<div class="a" style="left:31px;top:120px;width:898px;height:2px;background:#8a8a8a;"></div>
<div class="a" style="left:32px;top:122px;width:896px;height:701px;background:linear-gradient(90deg,#6e6e6e 0px,#6a6a6a 12px,#676767 26px,#666);border-left:1px solid #9a9a9a;border-bottom:1px solid #9a9a9a;box-sizing:border-box;"></div>
<div class="a" style="left:33px;top:472px;width:24px;height:1px;background:#8c8c8c;"></div>
<div class="a" style="left:35px;top:122px;width:40px;height:16px;background:#5c5c5c;border-radius:0 0 2px 2px;"></div>
<div class="t" style="left:37px;top:127.19px;font-size:11px;color:#dedede;">Pers</div>
<div class="a" style="left:35px;top:221px;width:40px;height:110px;background:rgba(70,70,70,0.35);border-radius:2px;"></div>
<div class="t" style="left:37px;top:225.69px;font-size:11px;color:#dcdcdc;">Triangles</div>
<div class="t" style="left:37px;top:240.74px;font-size:11px;color:#dcdcdc;">Quads</div>
<div class="t" style="left:37px;top:255.79px;font-size:11px;color:#dcdcdc;">Lines</div>
<div class="t" style="left:37px;top:270.84px;font-size:11px;color:#dcdcdc;">Points</div>
<div class="t" style="left:37px;top:285.89px;font-size:11px;color:#dcdcdc;">Triangles</div>
<div class="t" style="left:37px;top:300.94px;font-size:11px;color:#dcdcdc;">Lines</div>
<div class="t" style="left:37px;top:315.99px;font-size:11px;color:#dcdcdc;">Layers</div>
<svg class="a" style="left:31px;top:832px" width="6" height="16"><rect width="6" height="16" fill="url(#gp)"/></svg>
<div class="a" style="left:40px;top:828px;width:30px;height:22px;background:#363636;border-radius:4px;"></div>
<div class="t" style="left:43px;top:832.53px;font-size:10px;color:#c8c8c8;">0</div>
<div class="a" style="left:42px;top:843px;width:9px;height:7px;background:#6a8ab8;border:1px solid #a8c4e8;box-sizing:border-box;"></div>
<div class="a" style="left:46px;top:838px;width:1px;height:13px;background:#ccc;"></div>
<svg class="a" style="left:31px;top:858px" width="6" height="21"><rect width="6" height="21" fill="url(#gp)"/></svg>
<div class="a" style="left:40px;top:859px;width:30px;height:18px;background:#363636;border-radius:4px;"></div>
<div class="t" style="left:44px;top:863.69px;font-size:11px;color:#c8c8c8;">0 F</div>
<div class="a" style="left:31px;top:885px;width:895px;height:109px;border:1px solid #5c5c5c;box-sizing:border-box;"></div>
<svg class="a" style="left:36px;top:890px" width="12" height="12"><rect width="12" height="12" fill="url(#gp)"/></svg>
<div class="a" style="left:32px;top:905px;width:893px;height:1px;background:#5c5c5c;"></div>
<div class="t" style="left:55px;top:892.27px;font-size:11.5px;color:#c4c4c4;">Position</div>
<div class="t" style="left:35px;top:916.27px;font-size:11.5px;color:#c8c8c8;">X</div>
<div class="a" style="left:45px;top:912px;width:280px;height:17px;background:#363636;border-radius:4px;box-shadow:0 1px 0 #2a2a2a;"></div>
<div class="t" style="left:50px;top:916.27px;font-size:11.5px;color:#c8c8c8;">0 cm</div>
<div class="a" style="left:341px;top:912px;width:282px;height:17px;background:#363636;border-radius:4px;box-shadow:0 1px 0 #2a2a2a;"></div>
<div class="a" style="left:638px;top:912px;width:283px;height:17px;background:#363636;border-radius:4px;box-shadow:0 1px 0 #2a2a2a;"></div>
<div class="t" style="left:35px;top:936.27px;font-size:11.5px;color:#c8c8c8;">Y</div>
<div class="a" style="left:45px;top:932px;width:280px;height:17px;background:#363636;border-radius:4px;box-shadow:0 1px 0 #2a2a2a;"></div>
<div class="t" style="left:50px;top:936.27px;font-size:11.5px;color:#c8c8c8;">0 cm</div>
<div class="a" style="left:341px;top:932px;width:282px;height:17px;background:#363636;border-radius:4px;box-shadow:0 1px 0 #2a2a2a;"></div>
<div class="a" style="left:638px;top:932px;width:283px;height:17px;background:#363636;border-radius:4px;box-shadow:0 1px 0 #2a2a2a;"></div>
<div class="t" style="left:35px;top:956.27px;font-size:11.5px;color:#c8c8c8;">Z</div>
<div class="a" style="left:45px;top:952px;width:280px;height:17px;background:#363636;border-radius:4px;box-shadow:0 1px 0 #2a2a2a;"></div>
<div class="t" style="left:50px;top:956.27px;font-size:11.5px;color:#c8c8c8;">0 cm</div>
<div class="a" style="left:341px;top:952px;width:282px;height:17px;background:#363636;border-radius:4px;box-shadow:0 1px 0 #2a2a2a;"></div>
<div class="a" style="left:638px;top:952px;width:283px;height:17px;background:#363636;border-radius:4px;box-shadow:0 1px 0 #2a2a2a;"></div>
<div class="a" style="left:45px;top:975px;width:282px;height:16px;background:linear-gradient(#6e6e6e,#606060);border:1px solid #2e2e2e;border-radius:4px;box-sizing:border-box;"></div>
<div class="t" style="left:53px;top:978.27px;font-size:11.5px;color:#d6d6d6;">Object (Rel)</div>
<svg class="a" style="left:315px;top:981px;" width="10" height="5" viewBox="0 0 10 5"><path d="M0 0H10L5 5Z" fill="#e8e8e8"/></svg>
<div class="a" style="left:341px;top:975px;width:282px;height:16px;background:linear-gradient(#6e6e6e,#606060);border:1px solid #2e2e2e;border-radius:4px;box-sizing:border-box;"></div>
<div class="t" style="left:348px;top:978.27px;font-size:11.5px;color:#d6d6d6;">Size</div>
<svg class="a" style="left:610px;top:981px;" width="10" height="5" viewBox="0 0 10 5"><path d="M0 0H10L5 5Z" fill="#e8e8e8"/></svg>
<div class="a" style="left:638px;top:974px;width:283px;height:18px;background:linear-gradient(#6e6e6e,#5e5e5e);border:1px solid #2a2a2a;border-radius:9px;box-sizing:border-box;"></div>
<div class="t" style="left:764px;top:979.27px;font-size:11.5px;color:#d6d6d6;">Apply</div>
<div class="a" style="left:-20.5px;top:947px;width:70px;height:26px;transform:rotate(-90deg);"><div class="t" style="left:5px;top:0px;font-size:12px;font-weight:bold;font-style:italic;color:#9a9a9a;line-height:12px;letter-spacing:-0.3px;">MAXON</div><div class="t" style="left:4px;top:14px;font-size:12px;color:#8c8c8c;line-height:12px;letter-spacing:0.2px;">CINEMA 4D</div></div>
<div class="a" style="left:0px;top:997px;width:926px;height:1px;background:#5c5c5c;"></div>
<div class="a" style="left:925px;top:997px;width:1px;height:19px;background:#3a3a3a;"></div>
<svg class="a" style="left:4px;top:1001px" width="12" height="12"><rect width="12" height="12" fill="url(#gp)"/></svg>
<svg class="a" style="left:858px;top:106px;" width="7" height="7" viewBox="0 0 7 7"><path d="M3.5 0.5L6.5 3.5L3.5 6.5L0.5 3.5Z" fill="#151515"/></svg>
<div class="a" style="left:58px;top:123px;width:848px;height:843px;background:#474747;border-left:1px solid #3a3a3a;box-sizing:border-box;box-shadow:0 0 10px rgba(0,0,0,0.35);"></div>
<div class="a" style="left:58px;top:123px;width:848px;height:30px;background:#fff;"></div>
<svg class="a" style="left:66px;top:129px;" width="16" height="16" viewBox="0 0 16 16"><circle cx="8" cy="8" r="7.4" fill="#ececf0" stroke="#c4c4cc" stroke-width="0.7"/><ellipse cx="7.6" cy="8.4" rx="6" ry="5.2" transform="rotate(-35 8 8)" fill="#06062a"/><ellipse cx="7.6" cy="9" rx="3.8" ry="2.8" transform="rotate(-35 8 8)" fill="#2838b8"/><ellipse cx="6.5" cy="9.5" rx="1.8" ry="1.1" transform="rotate(-35 8 8)" fill="#7a90f0"/><circle cx="12.3" cy="3.6" r="1.1" fill="#5a78d8"/></svg>
<div class="t" style="left:87px;top:132.77px;font-size:11.5px;color:#8a8a8a;">Redshift RenderView</div>
<div class="a" style="left:786px;top:137px;width:10px;height:1px;background:#8a8a8a;"></div>
<div class="a" style="left:831px;top:132px;width:10px;height:10px;border:1px solid #8a8a8a;box-sizing:border-box;"></div>
<div class="a" style="left:58px;top:153px;width:848px;height:20px;background:#434343;border-top:1px solid #353535;box-sizing:border-box;"></div>
<svg class="a" style="left:63px;top:156px" width="12" height="12"><rect width="12" height="12" fill="url(#gp)"/></svg>
<div class="a" style="left:58px;top:172px;width:848px;height:1px;background:#5a5a5a;"></div>
<div class="t" style="left:66px;top:178.77px;font-size:11.5px;color:#c4c4c4;">File</div>
<div class="t" style="left:100px;top:178.77px;font-size:11.5px;color:#c4c4c4;">View</div>
<svg class="a" style="left:62px;top:201px;" width="21" height="18" viewBox="0 0 21 18"><path d="M1 5H20V17H1Z" fill="#6c6c6c"/><path d="M2 1H20V5H2Z" fill="#6c6c6c"/><path d="M5 1L7 5M10 1L12 5M15 1L17 5" stroke="#474747" stroke-width="1.6"/></svg>
<div class="a" style="left:90px;top:196px;width:28px;height:28px;background:#3c3c3c;border:1px solid #333;box-sizing:border-box;background-image:radial-gradient(#444 0.6px, transparent 0.6px);background-size:3px 3px;"></div>
<svg class="a" style="left:94px;top:200px;" width="20" height="20" viewBox="0 0 20 20"><circle cx="10" cy="10" r="9.5" fill="#6c6c6c"/><path d="M7.5 5.5L14.5 10L7.5 14.5Z" fill="#474747"/></svg>
<svg class="a" style="left:127px;top:201px;" width="18" height="18" viewBox="0 0 18 18"><path d="M15 9A6 6 0 1 1 12 3.8" fill="none" stroke="#6c6c6c" stroke-width="2"/><path d="M10 0.5L17 2.5L12.5 7.5Z" fill="#6c6c6c"/></svg>
<div class="a" style="left:155px;top:201px;width:101px;height:18px;background:linear-gradient(#6a6a6a,#5e5e5e);border:1px solid #2f2f2f;border-radius:4px;box-sizing:border-box;"></div>
<div class="t" style="left:160px;top:205.27px;font-size:11.5px;color:#d2d2d2;">Beauty</div>
<svg class="a" style="left:242px;top:208px;" width="10" height="5" viewBox="0 0 10 5"><path d="M0 0H10L5 5Z" fill="#e6e6e6"/></svg>
<svg class="a" style="left:267px;top:200px;" width="20" height="20" viewBox="0 0 20 20"><circle cx="10" cy="10" r="10" fill="#6c6c6c"/><text x="10" y="13" text-anchor="middle" font-family="Liberation Sans" font-weight="bold" font-size="7.5" fill="#4c4c4c">RGB</text></svg>
<svg class="a" style="left:295px;top:207px;" width="10" height="6" viewBox="0 0 10 6"><path d="M0 0H10L5 6Z" fill="#cfcfcf"/></svg>
<svg class="a" style="left:314px;top:200px;" width="20" height="20" viewBox="0 0 20 20"><circle cx="2" cy="2" r="0.9" fill="#5a5a5a"/><circle cx="2" cy="6" r="0.9" fill="#5a5a5a"/><circle cx="2" cy="10" r="0.9" fill="#5a5a5a"/><circle cx="2" cy="14" r="0.9" fill="#5a5a5a"/><circle cx="2" cy="18" r="0.9" fill="#5a5a5a"/><circle cx="6" cy="2" r="0.9" fill="#5a5a5a"/><circle cx="6" cy="6" r="1.3" fill="#5a5a5a"/><circle cx="6" cy="10" r="1.3" fill="#5a5a5a"/><circle cx="6" cy="14" r="1.3" fill="#5a5a5a"/><circle cx="6" cy="18" r="0.9" fill="#5a5a5a"/><circle cx="10" cy="2" r="0.9" fill="#5a5a5a"/><circle cx="10" cy="6" r="1.3" fill="#5a5a5a"/><circle cx="10" cy="10" r="1.3" fill="#5a5a5a"/><circle cx="10" cy="14" r="1.3" fill="#5a5a5a"/><circle cx="10" cy="18" r="0.9" fill="#5a5a5a"/><circle cx="14" cy="2" r="0.9" fill="#5a5a5a"/><circle cx="14" cy="6" r="1.3" fill="#5a5a5a"/><circle cx="14" cy="10" r="1.3" fill="#5a5a5a"/><circle cx="14" cy="14" r="1.3" fill="#5a5a5a"/><circle cx="14" cy="18" r="0.9" fill="#5a5a5a"/><circle cx="18" cy="2" r="0.9" fill="#5a5a5a"/><circle cx="18" cy="6" r="0.9" fill="#5a5a5a"/><circle cx="18" cy="10" r="0.9" fill="#5a5a5a"/><circle cx="18" cy="14" r="0.9" fill="#5a5a5a"/><circle cx="18" cy="18" r="0.9" fill="#5a5a5a"/></svg>
<svg class="a" style="left:344px;top:199px;" width="23" height="23" viewBox="0 0 23 23"><path d="M5 0V17H22M0 5H17V22" fill="none" stroke="#6c6c6c" stroke-width="2.2"/></svg>
<div class="a" style="left:374px;top:201px;width:102px;height:18px;background:linear-gradient(#6a6a6a,#5e5e5e);border:1px solid #2f2f2f;border-radius:4px;box-sizing:border-box;"></div>
<div class="t" style="left:380px;top:205.27px;font-size:11.5px;color:#d2d2d2;">&lt; Auto &gt;</div>
<svg class="a" style="left:462px;top:208px;" width="10" height="5" viewBox="0 0 10 5"><path d="M0 0H10L5 5Z" fill="#e6e6e6"/></svg>
<svg class="a" style="left:486px;top:199px;" width="17" height="22" viewBox="0 0 17 22"><path d="M4 10V6A4.5 4.5 0 0 1 13 6V10" fill="none" stroke="#6c6c6c" stroke-width="2.5"/><rect x="0.5" y="9.5" width="16" height="12" rx="1.5" fill="#6c6c6c"/><circle cx="8.5" cy="15" r="1.6" fill="#474747"/></svg>
<svg class="a" style="left:516px;top:200px;" width="21" height="21" viewBox="0 0 21 21"><rect x="0.0" y="0.0" width="5.5" height="5.5" rx="1" fill="#6c6c6c"/><rect x="0.0" y="7.5" width="5.5" height="5.5" rx="1" fill="#6c6c6c"/><rect x="0.0" y="15.0" width="5.5" height="5.5" rx="1" fill="#6c6c6c"/><rect x="7.5" y="0.0" width="5.5" height="5.5" rx="1" fill="#6c6c6c"/><rect x="7.5" y="7.5" width="5.5" height="5.5" rx="1" fill="#6c6c6c"/><rect x="7.5" y="15.0" width="5.5" height="5.5" rx="1" fill="#6c6c6c"/><rect x="15.0" y="0.0" width="5.5" height="5.5" rx="1" fill="#6c6c6c"/><rect x="15.0" y="7.5" width="5.5" height="5.5" rx="1" fill="#6c6c6c"/><rect x="15.0" y="15.0" width="5.5" height="5.5" rx="1" fill="#6c6c6c"/></svg>
<svg class="a" style="left:548px;top:200px;" width="21" height="21" viewBox="0 0 21 21"><path d="M10.5 0V21M0.7 5L20.3 16M0.7 16L20.3 5" stroke="#6c6c6c" stroke-width="1.8"/><path d="M7 2L10.5 5L14 2M7 19L10.5 16L14 19" fill="none" stroke="#6c6c6c" stroke-width="1.5"/></svg>
<svg class="a" style="left:582px;top:199px;" width="22" height="22" viewBox="0 0 22 22"><circle cx="11" cy="11" r="9.5" fill="none" stroke="#6c6c6c" stroke-width="1.8"/></svg>
<svg class="a" style="left:611px;top:208px;" width="10" height="5" viewBox="0 0 10 5"><path d="M0 0H10L5 5Z" fill="#cfcfcf"/></svg>
<svg class="a" style="left:629px;top:200px;" width="21" height="21" viewBox="0 0 21 21"><path d="M1 5V20H16" fill="none" stroke="#6c6c6c" stroke-width="1.8"/><rect x="4" y="1" width="16" height="15" rx="1" fill="#6c6c6c"/><path d="M9 13L12 10L15 12L18 9V15H7Z" fill="#474747"/></svg>
<svg class="a" style="left:661px;top:200px;" width="21" height="21" viewBox="0 0 21 21"><path d="M1 5V20H16" fill="none" stroke="#6c6c6c" stroke-width="1.8"/><rect x="4" y="1" width="16" height="15" rx="1" fill="#6c6c6c"/><path d="M12.5 4V14M7.5 9H17.5" stroke="#474747" stroke-width="2"/></svg>
<svg class="a" style="left:693px;top:200px;" width="21" height="21" viewBox="0 0 21 21"><path d="M1 5V20H16" fill="none" stroke="#6c6c6c" stroke-width="1.8"/><rect x="4" y="1" width="16" height="15" rx="1" fill="#6c6c6c"/><text x="12.5" y="12.5" text-anchor="middle" font-family="Liberation Sans" font-weight="bold" font-size="8" fill="#474747">PV</text></svg>
<div class="a" style="left:724px;top:201px;width:60px;height:18px;background:#333;border-radius:3px;"></div>
<div class="t" style="left:729px;top:205.27px;font-size:11.5px;color:#d0d0d0;">100 %</div>
<svg class="a" style="left:771px;top:204px;" width="6" height="12" viewBox="0 0 6 12"><path d="M0 5L3 0L6 5Z M0 7L3 12L6 7Z" fill="#bbb"/></svg>
<div class="a" style="left:787px;top:201px;width:90px;height:18px;background:linear-gradient(#666,#5c5c5c);border:1px solid #333;border-radius:4px;box-sizing:border-box;"></div>
<div class="t" style="left:793px;top:205.77px;font-size:11.5px;color:#d0d0d0;">Fixed Scaling</div>
<div class="a" style="left:67px;top:236px;width:829px;height:700px;background:#333333;"></div>
<div class="a" style="left:162px;top:266px;width:640px;height:640px;background:#000;overflow:hidden;"><svg width="640" height="640" viewBox="0 0 640 640" style="position:absolute;left:0;top:0"><defs><radialGradient id="hb" cx="0.5" cy="0.5" r="0.55" fx="0.4" fy="0.35"><stop offset="0" stop-color="#19130e"/><stop offset="0.75" stop-color="#1e1812"/><stop offset="1" stop-color="#140f0b"/></radialGradient><filter id="hbl" x="-10%" y="-10%" width="120%" height="120%" color-interpolation-filters="sRGB"><feGaussianBlur stdDeviation="9"/></filter></defs><path d="M521 341L521 355L520 368L518 382L514 395L510 408L505 420L499 432L492 444L484 455L476 466L466 476L456 485L445 494L434 502L422 510L409 516L396 522L383 527L369 531L355 534L340 536L326 537L311 537L296 536L282 534L267 531L253 527L239 522L226 516L213 510L200 502L188 494L176 485L165 476L155 466L146 455L137 444L129 432L122 420L116 408L110 395L106 382L102 368L100 355L99 341L99 327L100 314L101 300L104 286L107 272L111 259L117 245L123 233L131 220L140 209L150 198L161 188L174 179L187 171L200 164L214 159L229 154L243 151L258 148L273 146L288 145L303 145L317 145L332 145L347 146L362 148L377 151L391 154L406 159L420 164L433 171L446 179L459 188L470 198L480 209L489 220L497 233L503 245L509 259L513 272L516 286L519 300L520 314L521 327Z" fill="url(#hb)" filter="url(#hbl)"/><path d="M87 326Q84 327 82 329M428 490Q425 507 420 523M304 440Q303 458 301 475M527 396Q529 396 530 397M443 499Q450 500 453 506M443 482Q444 497 444 513M361 330Q356 354 368 376M289 521Q279 527 274 537M402 312Q421 335 410 364M405 146Q418 164 437 175M346 445Q337 461 332 479M366 310Q368 324 368 337M248 530Q244 534 245 539M183 159Q188 178 176 192M391 531Q392 534 395 537M325 544Q325 547 326 550M301 506Q302 521 297 536M120 435Q119 437 117 440M396 498Q402 515 419 523M316 378Q312 395 300 407M395 351Q396 363 394 375M348 453Q337 478 341 505M399 487Q396 503 406 515M497 228Q499 246 502 263M308 541Q306 546 304 552M256 528Q253 533 248 537M374 141Q374 159 371 176M431 510Q434 514 432 519M362 467Q358 478 351 488M387 306Q373 320 380 337M317 521Q324 533 322 547M283 521Q282 529 283 537M402 440Q397 455 381 455M131 455Q132 458 131 460M383 452Q383 478 384 505M420 343Q413 369 429 391M447 458Q454 477 464 494M381 291Q380 307 386 322M384 376Q375 394 381 412M471 189Q485 208 499 227M334 538Q330 544 331 551M225 495Q216 502 212 513M107 416Q107 419 105 422M514 251Q528 274 534 301M359 380Q357 404 340 422M526 335Q526 347 536 354M371 423Q367 442 359 459M409 429Q421 449 412 471M295 531Q297 537 297 544M365 427Q344 441 329 460M275 519Q259 525 247 536M142 464Q140 467 138 469M391 350Q394 362 393 373M108 246Q87 261 91 287M447 432Q455 444 455 458M322 448Q323 469 328 489M361 518Q363 529 370 538M240 449Q223 471 223 498M516 267Q520 273 527 275M308 531Q309 539 312 546M305 532Q278 533 251 535M511 388Q520 392 525 401M510 406Q516 419 517 433M412 315Q414 337 434 346M409 529Q410 531 411 534M493 463Q493 465 495 465M265 136Q249 155 224 156M339 423Q323 433 317 451M410 490Q416 502 413 516M314 475Q312 497 310 519M230 143Q215 159 200 174M427 485Q426 503 442 514M349 523Q350 534 346 544M473 485Q476 486 478 488M411 305Q424 316 427 332M531 301Q534 305 535 309M346 520Q337 528 341 539M395 475Q413 492 425 514M524 322Q529 326 532 330M437 454Q443 480 442 506M419 524Q419 526 420 528M313 510Q303 519 298 532M522 259Q525 267 528 275M450 482Q456 484 459 491M433 402Q442 428 450 454M389 375Q377 393 382 414M331 545Q331 549 329 552M392 427Q396 448 391 470M360 444Q344 466 323 484M348 385Q346 402 335 414M364 261Q353 282 350 305M386 330Q385 350 372 366M499 444Q504 448 504 454M283 401Q276 427 283 453M348 544Q349 546 347 549M403 344Q397 369 377 385M326 476Q324 493 310 504M162 173Q156 177 150 179M486 444Q488 454 495 463M511 241Q517 256 524 272M434 498Q439 501 445 505M486 449Q492 453 499 455M495 416Q504 426 516 434M88 319Q86 327 85 335M328 536Q326 542 327 549M186 499Q183 500 181 503M414 154Q425 159 436 156M391 527Q391 533 389 538M491 442Q498 440 504 441M154 479Q154 482 156 486M255 476Q246 497 237 518M275 538Q274 542 272 546M447 470Q452 479 458 487M334 517Q337 530 344 542M480 454Q484 458 486 463M474 186Q474 213 501 212M496 451Q498 454 498 458M353 339Q346 362 332 382M317 527Q311 534 307 543M503 236Q497 253 507 268M411 422Q412 440 414 457M251 508Q258 523 264 538M150 466Q149 477 157 484M361 445Q362 468 354 490M435 380Q441 405 427 427M348 518Q351 530 352 542M266 494Q251 508 244 527M405 483Q403 496 409 508M361 529Q359 539 351 547M441 165Q457 173 458 190M162 478Q161 482 160 486M405 512Q406 518 409 524M446 168Q465 180 478 198M375 485Q383 501 369 512M280 541Q281 543 282 546M417 520Q420 523 420 526M341 525Q338 533 345 539M104 401Q103 404 100 406M356 464Q354 480 347 494M352 545Q353 546 353 548M293 539Q293 544 289 546M264 541Q264 542 265 544M424 445Q439 460 455 474M275 514Q267 525 269 538M272 420Q278 445 283 470M360 469Q364 486 374 500M287 501Q273 519 256 534M403 497Q409 509 405 522M510 416Q511 421 516 422M497 443Q501 447 502 452M476 455Q478 463 486 467M128 433Q125 446 130 458M188 499Q185 503 181 505M349 417Q344 428 340 441M101 388Q99 390 97 393M89 328Q86 328 85 331M462 473Q468 478 465 485M331 432Q323 455 332 478M384 141Q399 163 424 155M396 523Q401 527 401 532M297 497Q303 521 297 546M314 372Q306 391 313 410M367 415Q363 429 356 442M216 510Q213 515 209 519M355 500Q358 523 349 543M243 413Q224 430 221 455M373 398Q369 414 362 429M352 415Q351 428 354 440M512 240Q500 256 510 274M358 521Q358 537 350 550M172 484Q167 489 169 496M436 494Q436 504 436 513M87 311Q86 313 84 313M388 520Q375 531 366 544M377 524Q374 530 377 537M323 502Q325 527 319 551M420 380Q406 390 402 406M375 402Q382 421 385 440M455 490Q458 494 460 499M522 278Q527 283 529 289M525 317Q530 321 536 325M387 465Q406 472 403 492M382 370Q379 383 375 395M89 346Q86 347 86 351M191 498Q186 497 182 500M368 480Q368 507 371 534M297 536Q294 542 295 548M407 397Q409 423 420 446M506 440Q509 441 511 443M384 478Q377 488 376 500M497 426Q507 435 507 448M248 422Q246 434 240 444M409 315Q405 328 404 341M427 516Q427 519 429 522M507 436Q509 439 511 442M190 501Q191 505 190 509M197 496Q197 504 196 511M369 494Q366 507 375 516M502 224Q490 247 497 272M376 494Q373 519 378 544M430 467Q417 486 430 506M477 432Q481 444 488 455M468 415Q468 428 472 440M437 500Q441 503 443 507M269 519Q266 531 265 544M361 529Q359 535 358 541M463 449Q475 454 488 456M519 420Q520 421 522 423M122 211Q113 220 115 233M351 401Q337 424 319 444M364 517Q360 530 362 544M332 463Q327 475 324 488M222 516Q220 520 218 523M421 153Q444 167 443 194M284 475Q262 489 272 514M422 353Q419 378 425 402M440 504Q444 506 444 511M364 375Q364 402 360 429M514 407Q520 408 523 412M526 394Q528 395 530 396M384 452Q398 475 387 500M298 483Q293 495 282 501M246 521Q236 525 235 536M285 466Q287 477 286 489M377 376Q384 387 379 399M340 539Q339 544 339 549M434 487Q441 496 439 507M462 178Q469 181 476 184M321 508Q330 535 306 552M298 137Q300 162 291 186M381 419Q377 438 365 452M179 168Q160 179 150 197M516 394Q519 397 524 398M399 322Q404 346 393 367M333 351Q331 366 331 381M380 431Q382 450 379 470M260 524Q255 529 249 532M370 451Q373 462 377 472M332 477Q316 490 307 509M216 508Q215 516 212 523M401 500Q409 515 424 522M361 514Q358 525 355 537M265 389Q268 409 259 426M369 524Q374 530 370 538M343 416Q332 435 344 454M335 535Q336 541 333 547M273 531Q273 536 269 540M480 460Q484 465 485 471M326 507Q330 534 303 536M383 534Q383 538 385 541M341 528Q338 539 342 549M286 457Q279 478 289 498M510 421Q517 421 518 428M315 470Q310 489 306 508M174 480Q167 481 167 489M264 136Q257 153 238 157M398 512Q398 519 402 525M522 376Q527 382 532 388M514 377Q520 379 525 384M294 447Q280 452 266 457M462 473Q465 480 471 484M372 319Q377 346 393 368M426 390Q445 397 458 412M451 498Q452 502 456 503M372 138Q379 140 384 137M515 413Q517 417 519 421M255 527Q255 532 253 536M262 524Q260 532 255 539M294 521Q277 504 256 515M520 254Q522 256 525 257M445 406Q454 430 463 455M396 144Q407 156 419 168M343 497Q340 515 351 531M343 511Q357 520 348 534M169 493Q166 495 164 497M260 540Q260 541 259 543M484 205Q488 221 503 228M381 292Q400 306 405 329M227 519Q226 526 230 532M124 445Q129 449 129 456M427 509Q427 516 430 522M381 504Q393 516 392 534M511 414Q513 417 516 419M350 393Q354 417 347 440M526 390Q527 393 529 394M318 453Q321 468 311 480M522 334Q524 340 530 341M239 523Q236 528 230 531M262 535Q258 538 256 542M264 540Q263 542 264 545M293 382Q286 408 264 422M314 393Q323 417 320 441M309 408Q300 430 293 452M361 462Q373 485 385 508M99 257Q96 259 95 262M410 448Q417 470 407 492M175 486Q171 490 167 493M250 502Q233 510 220 524M272 382Q258 402 252 425M240 513Q237 520 236 528M503 238Q515 245 524 255M341 138Q341 158 356 171M115 424Q115 427 111 429M521 368Q524 371 529 370M333 313Q338 339 328 363M458 494Q460 495 461 498M410 443Q411 466 424 485M270 534Q267 537 266 542M335 399Q329 411 330 423M407 415Q401 440 399 465M425 504Q430 510 438 508M379 428Q376 440 379 453M393 434Q402 453 417 468M516 408Q515 414 519 419M222 512Q223 521 215 525M138 453Q134 459 137 465M294 485Q285 510 292 536M290 396Q287 407 284 418M519 405Q521 408 523 411M251 520Q240 525 241 537M386 418Q378 432 370 446M330 527Q332 539 339 550M441 445Q448 468 428 481M515 417Q518 418 521 419M350 414Q364 438 390 446M368 413Q356 417 345 426M312 548Q312 552 311 555M424 476Q433 495 434 516M337 504Q328 516 333 531M378 466Q370 486 376 506M356 406Q353 428 341 447M517 379Q520 389 531 391M306 470Q300 488 289 504M93 368Q94 374 90 379M361 517Q365 524 365 533M509 407Q514 415 518 424M444 428Q460 441 471 459M367 425Q367 441 351 444M303 365Q304 377 311 387M431 499Q438 501 441 508M319 306Q297 316 300 339M339 415Q336 437 321 453M275 521Q263 528 259 541M506 414Q512 412 517 417M376 507Q372 519 368 530M187 489Q188 499 182 507M375 464Q368 486 355 504M371 525Q367 531 370 537M444 498Q450 500 455 503M415 517Q415 521 416 524M322 497Q323 521 304 536M522 396Q525 396 528 396M377 281Q395 300 382 324M149 466Q143 466 140 470M279 455Q270 474 258 491M487 446Q490 458 494 469M358 395Q345 419 354 445M328 368Q310 370 298 383M392 419Q386 446 379 472M392 502Q399 514 404 526M306 522Q312 531 312 542M388 348Q388 361 387 373M195 155Q183 179 156 187M387 485Q395 493 399 504M145 464Q143 466 142 469M442 489Q439 498 442 507M455 496Q457 499 460 500M379 535Q384 537 386 542M457 492Q460 494 462 495M421 501Q419 514 422 528M412 381Q411 397 410 413M363 518Q359 529 363 541M488 435Q493 439 500 440M328 517Q325 528 319 538M324 512Q309 532 288 546M462 489Q463 492 464 496M458 448Q457 460 464 470M269 505Q251 514 234 526M368 512Q371 520 370 529M297 472Q298 490 292 506M488 449Q494 452 500 448M329 547Q327 549 326 551M390 377Q403 396 394 418M188 506Q186 507 184 509M193 496Q189 502 191 509M508 414Q512 419 518 422M433 501Q434 510 441 513M347 454Q360 462 366 476M150 470Q150 473 147 476M270 529Q266 534 261 538M506 243Q509 263 522 279M343 411Q331 429 339 449M391 482Q403 501 384 513M91 371Q97 387 101 404M458 423Q480 430 489 451M292 495Q286 507 281 520M399 517Q407 518 409 525M182 489Q181 494 177 496M412 471Q412 497 428 516M519 360Q528 366 535 374M416 504Q422 513 422 524M337 435Q327 443 316 451M528 296Q533 300 535 305M381 445Q371 463 364 483M326 386Q335 398 335 413M452 494Q448 500 450 506M281 135Q276 157 279 180M377 458Q380 469 383 481M350 500Q343 514 336 529M228 529Q226 530 226 533M165 478Q164 483 162 486M305 440Q286 448 273 464M464 489Q466 491 468 494M307 463Q296 488 298 516M473 463Q474 474 482 481M185 502Q185 506 182 507M425 518Q424 522 425 525M507 397Q521 403 518 418M432 514Q434 517 436 518M402 156Q420 158 430 173M312 532Q302 539 293 547M218 518Q216 521 215 524M268 412Q250 433 258 460M419 395Q409 419 415 445M326 540Q325 544 327 548M407 429Q423 439 416 457M442 510Q443 511 445 512M436 466Q435 481 447 489M436 511Q437 514 438 516M246 518Q244 528 243 537M197 154Q193 154 188 154M379 467Q377 487 374 507M463 187Q474 193 477 205M329 462Q334 482 339 503M320 434Q305 445 298 463M352 325Q350 340 363 347M403 356Q394 375 409 392M304 430Q294 438 281 437M339 446Q345 463 346 481M205 500Q202 504 200 510M374 401Q367 417 362 433M414 438Q416 458 429 474M88 353Q88 360 85 365M344 526Q349 537 349 548M376 324Q383 342 379 361M280 523Q276 532 273 542M443 475Q444 489 454 497M295 136Q324 139 341 162M388 535Q389 538 390 541M320 393Q337 411 330 435M206 514Q206 519 210 523M403 496Q404 507 407 517M309 386Q291 406 283 432M503 445Q505 447 507 449M247 524Q246 530 242 535M502 217Q511 244 500 270M383 425Q384 438 372 445M348 513Q345 531 333 547M487 204Q497 212 501 223M378 511Q380 527 387 542M315 526Q320 533 315 540M435 513Q436 515 437 516M339 533Q336 540 336 547M314 483Q317 495 313 507M527 294Q530 295 533 296M328 436Q330 448 326 459M101 250Q100 255 95 256M303 367Q313 388 315 412M339 517Q347 533 359 546M424 494Q434 501 439 513M355 497Q345 511 343 529M398 442Q404 467 423 485M276 523Q276 531 270 536M340 370Q347 386 340 403M275 528Q266 532 268 541M390 495Q392 507 392 519M355 409Q345 416 339 426M473 411Q477 424 490 426M481 435Q490 443 499 451M393 518Q398 524 401 531M296 433Q291 451 301 465M423 448Q429 466 440 482M189 492Q193 497 190 504M394 453Q408 474 402 498M326 135Q345 143 356 160M379 390Q367 404 351 413M270 541Q269 544 268 548M317 457Q295 461 285 480M499 422Q506 426 513 432M418 483Q420 508 403 526M362 539Q362 542 363 544M391 408Q385 421 374 432M351 311Q356 329 355 348M303 538Q306 544 304 550M297 484Q283 497 276 515M313 429Q305 444 289 451M476 444Q479 455 482 466M373 533Q374 537 377 539M282 466Q270 483 262 502M335 481Q363 506 338 534M530 310Q533 315 537 318M421 501Q422 513 426 524M488 206Q494 228 513 241M129 451Q130 456 131 462M496 433Q499 440 502 447M391 434Q388 448 394 462M492 448Q495 452 500 450M225 509Q225 516 223 522M390 441Q378 470 398 493M404 317Q391 339 394 365M296 416Q299 428 300 440M402 530Q402 533 402 535M376 398Q384 413 394 426M176 489Q173 493 173 498M396 374Q395 399 376 415M522 261Q526 262 529 261M518 270Q519 293 529 313M507 426Q512 430 515 436M416 521Q416 524 418 525M482 463Q486 466 489 469M390 536Q390 538 392 540M287 461Q275 469 264 477M386 464Q397 479 407 494M129 441Q126 444 126 447M183 497Q180 500 177 500M402 325Q401 352 389 377M286 528Q286 535 284 542M315 403Q317 423 305 439M530 335Q533 336 535 338M386 380Q387 398 392 414M323 444Q326 459 325 474M311 544Q310 546 311 549M406 476Q413 489 424 499M370 359Q377 381 368 401M367 471Q374 480 382 489M527 292Q529 295 532 295M371 413Q359 431 354 452M319 394Q342 420 319 446M386 281Q392 293 398 305M354 396Q339 417 323 436M441 484Q446 491 452 497M306 534Q303 539 300 544M265 540Q262 540 260 543M262 463Q247 469 239 483M409 407Q425 431 420 459M321 432Q324 458 333 481M532 362Q534 363 537 365M345 467Q336 488 332 511M98 258Q95 273 87 286M319 139Q297 148 291 171M162 487Q163 490 161 493M308 538Q304 544 299 550M350 449Q354 469 341 485M463 464Q465 475 476 480M397 525Q397 529 397 533M429 489Q438 498 444 508M521 411Q522 416 523 422M132 453Q131 455 130 456M391 536Q392 538 391 540M350 437Q340 444 336 456M213 522Q215 525 213 529M531 341Q533 342 535 343M373 466Q373 491 384 513M294 459Q293 476 280 487M412 352Q401 369 408 388M287 411Q285 422 282 433M392 527Q392 532 391 538M173 488Q171 493 166 495M396 339Q389 356 400 372M335 440Q320 456 313 477M90 312Q85 315 85 320M393 392Q391 407 387 422M233 494Q222 500 216 512M144 468Q142 470 140 473M254 434Q246 459 229 479M324 499Q315 524 319 551M245 525Q241 528 241 532M379 498Q374 521 365 542M92 325Q91 332 87 338M402 513Q405 518 409 523M407 528Q405 531 407 534M307 500Q293 511 298 529M320 531Q316 538 319 545M457 402Q449 429 461 454M146 451Q141 456 135 458M313 539Q312 545 312 550M214 146Q206 163 187 159M491 455Q494 457 495 460M526 279Q529 280 531 282M398 478Q401 496 401 513M380 482Q398 501 415 521M227 526Q226 529 225 532M267 478Q254 491 239 501M522 410Q524 413 523 416M492 209Q504 214 511 225M272 509Q274 521 272 533M391 414Q398 429 403 446M417 407Q431 428 428 453M518 265Q520 274 528 278M529 322Q534 325 534 331M519 292Q524 301 533 306M239 506Q237 521 223 528M351 298Q347 309 344 320M274 412Q266 426 266 442M380 530Q383 534 383 538M379 445Q377 462 384 477M368 384Q372 403 358 416M289 538Q290 544 292 550M199 155Q183 172 160 176M409 149Q426 167 426 191M347 535Q344 542 344 550M336 490Q329 505 317 515M379 391Q397 410 396 436M442 468Q447 485 457 499M358 447Q356 474 341 497M354 510Q359 519 364 529M479 443Q491 449 503 451M183 167Q177 167 171 165M493 438Q496 447 503 451M302 438Q293 456 290 477M466 180Q473 194 483 207M532 374Q534 375 537 376M288 497Q271 514 248 510M319 538Q319 543 317 547M210 504Q202 505 198 511M230 529Q228 531 225 531M441 486Q443 495 444 505M466 459Q474 461 480 467M437 487Q434 501 444 509M362 543Q363 545 363 547M373 511Q381 519 382 531M256 512Q247 522 235 527M506 430Q508 436 512 441M147 187Q128 194 117 212M427 446Q433 470 432 495M250 446Q244 465 235 482M398 366Q388 386 368 398M509 438Q511 440 513 442M376 528Q374 534 376 538M504 400Q511 408 516 418M326 485Q326 501 336 515M298 518Q292 525 289 534M464 179Q471 179 476 184M421 445Q436 456 452 467M404 372Q401 386 398 399M281 490Q260 505 238 517M280 513Q269 522 256 526M292 521Q281 527 280 540M285 516Q281 528 292 535M519 382Q523 388 525 395M334 485Q330 498 330 511M422 458Q412 481 416 506M317 139Q333 164 364 162M490 212Q498 233 511 252M359 295Q349 319 334 341M389 325Q373 347 379 375M490 212Q501 218 510 226M369 498Q359 512 360 529M141 459Q142 464 139 468M399 146Q411 155 419 167M512 434Q515 434 517 435M192 484Q191 497 184 506M284 518Q275 529 261 532M295 546Q295 549 293 551M317 340Q309 356 299 371M391 371Q381 395 371 419M302 508Q289 521 274 532M242 516Q245 525 238 532M315 515Q316 527 314 540M356 138Q367 138 378 141M320 532Q319 541 319 550M440 486Q446 493 448 502M309 429Q311 447 304 464M415 357Q416 384 401 407M401 330Q385 344 374 361M351 136Q358 134 365 134M406 494Q405 510 401 525M524 335Q528 341 532 347M332 495Q336 511 348 521M459 174Q474 193 495 207M404 428Q401 449 406 469M155 467Q150 471 144 474M530 333Q532 337 536 337M425 519Q427 520 430 523M340 321Q318 339 324 367M366 140Q381 145 394 153M337 533Q337 539 339 545M375 491Q371 514 351 526M490 434Q498 436 506 438M267 524Q262 534 251 538M287 414Q293 426 288 437M402 339Q392 360 397 383M373 380Q361 389 357 404M404 361Q405 380 407 400M410 432Q403 457 414 480M311 421Q307 439 298 456M368 494Q374 517 362 536M255 522Q252 527 250 532M500 219Q504 219 506 221M300 518Q302 530 299 542M428 511Q430 515 429 520M398 415Q404 429 401 445M254 139Q237 145 232 162M418 520Q420 523 421 526M341 526Q337 534 335 543M381 355Q369 362 365 375M294 510Q289 520 279 526M466 431Q477 445 487 459M407 468Q404 480 407 492M521 384Q524 386 527 389M335 523Q329 530 328 539M332 521Q333 529 337 537M237 143Q221 156 206 170M288 532Q283 537 282 544M514 413Q516 416 519 416M398 522Q399 528 404 533M527 286Q530 288 532 290M266 537Q261 540 256 543M294 503Q288 513 280 522M154 480Q153 482 153 484M432 409Q455 423 467 448M419 446Q414 465 412 484M369 486Q358 496 347 504M502 440Q504 446 506 452M350 338Q339 356 338 377M354 503Q341 504 332 514M316 499Q311 525 306 550M300 501Q302 516 291 527M335 434Q327 443 319 451M403 528Q402 531 402 534M513 396Q522 401 527 411M364 437Q361 458 355 479M290 535Q291 539 290 543M98 257Q97 264 93 269M335 484Q335 506 323 525M294 499Q278 508 276 525M463 185Q470 201 478 216M415 293Q423 302 424 314M343 467Q345 493 336 518M318 363Q323 383 332 401M429 377Q442 404 424 428M511 422Q514 427 520 428M502 402Q509 409 518 412M485 474Q484 477 487 480M386 536Q383 538 383 541M387 373Q389 385 385 396M349 386Q347 399 344 412M109 235Q103 240 101 246M309 519Q311 534 297 539M419 339Q422 350 425 362M343 404Q325 414 322 434M266 524Q256 530 249 539M165 176Q159 173 152 177M345 540Q347 546 345 551M310 494Q311 510 317 526M366 504Q364 515 362 527M407 462Q409 474 412 486M406 368Q408 389 426 399M179 497Q177 498 176 501M285 508Q265 518 261 541M220 516Q220 522 216 528M350 436Q352 455 354 474M459 176Q466 195 472 214M320 403Q301 417 304 441M331 541Q331 544 331 547M383 463Q371 481 373 503M421 488Q435 496 433 513M426 455Q426 467 432 477M205 511Q207 514 205 517M392 450Q388 464 392 478M301 516Q305 532 297 547M305 484Q296 500 289 518M238 511Q245 527 229 534M366 399Q366 422 360 444M392 514Q388 523 387 534M388 466Q384 480 386 495M412 525Q413 529 414 532M417 402Q425 419 438 432M397 405Q397 420 395 435M454 482Q453 491 457 499M389 502Q393 515 406 520M296 528Q298 538 298 548M411 501Q414 512 413 524M432 379Q448 402 453 429M433 459Q447 476 457 496M371 502Q365 524 347 539M378 144Q395 161 410 181M325 476Q300 488 279 505M446 494Q448 499 453 503M316 483Q319 510 295 524M368 388Q372 411 367 435M376 528Q374 533 376 539M117 421Q114 424 113 428M318 384Q309 406 302 430M516 400Q521 401 526 405M363 370Q359 386 375 390M385 510Q394 519 399 531M488 212Q496 225 507 234M284 441Q277 462 263 480M369 422Q384 439 375 460M366 522Q362 533 369 542M467 180Q472 184 478 183M143 470Q141 470 141 472M499 219Q514 227 515 244M454 489Q456 494 462 497M513 420Q517 423 521 425M353 382Q364 393 362 408M434 402Q448 415 453 432M394 519Q388 526 388 535M435 393Q439 419 454 441M441 490Q443 503 440 516M375 525Q375 532 377 538M457 483Q465 487 473 491M423 454Q434 466 433 481M382 485Q395 507 392 532M318 420Q307 434 304 452M408 352Q418 361 423 374M357 388Q346 410 327 425M384 538Q385 540 383 541M402 500Q410 508 417 516M456 184Q465 203 473 223M529 375Q532 377 534 380M523 401Q524 404 527 406M288 462Q291 489 275 511M258 506Q252 515 250 525M490 453Q493 455 495 458M226 526Q225 528 223 529M507 225Q517 234 520 246M177 483Q173 490 169 497M280 428Q278 448 270 465M88 346Q85 351 85 358M253 396Q239 415 234 438M362 388Q350 411 338 433M480 462Q484 468 484 476M339 476Q344 492 339 507M290 498Q280 513 292 527M383 486Q372 499 374 516M457 486Q460 492 463 497M360 453Q364 478 355 501M343 546Q344 548 344 550M100 254Q98 253 96 253M383 498Q372 509 374 525M102 407Q101 411 101 414M261 447Q243 471 257 498M181 495Q178 497 177 502M292 521Q290 529 286 536M120 215Q107 231 100 251M353 435Q334 456 327 483M291 508Q287 520 285 533M278 504Q272 525 291 535M526 277Q527 278 529 277M332 488Q343 507 339 529M527 365Q531 369 534 374M289 545Q286 546 282 548M235 516Q228 522 220 528M307 140Q299 149 290 154M356 444Q336 465 342 493M379 485Q381 501 385 517M404 426Q400 441 396 457M502 436Q506 440 509 446M292 404Q279 416 274 433M375 501Q382 512 388 523M94 384Q91 385 89 388M305 468Q283 481 276 506M124 211Q121 212 117 212M488 466Q491 468 491 472M502 405Q508 413 514 421M169 481Q165 486 160 490M364 499Q366 517 366 534M490 466Q491 467 492 467M295 435Q291 459 274 477M395 274Q393 286 390 298M256 482Q240 491 228 505M455 402Q457 413 462 423M407 363Q414 375 425 382M361 527Q362 533 361 538M364 522Q377 529 376 544M462 460Q474 461 486 460M316 403Q316 416 305 424M418 424Q422 445 439 458M360 412Q361 441 333 450M512 251Q518 255 523 258M320 412Q315 423 319 434M124 212Q119 215 115 217M311 530Q303 540 309 552M524 371Q528 370 531 372M414 155Q438 166 464 174M237 528Q236 531 233 532M106 412Q105 418 107 423M340 379Q325 395 308 410M313 371Q311 393 296 409M375 360Q368 382 370 405M352 540Q349 546 344 551M401 343Q403 358 394 370M242 405Q244 430 229 451M462 454Q466 465 474 475M505 446Q507 449 509 451M458 177Q464 202 483 220M208 512Q205 513 203 516M375 415Q367 429 380 438M467 486Q469 487 471 489M525 383Q530 390 527 399M268 516Q267 530 266 543M401 500Q405 513 413 523M465 442Q473 455 482 468M327 548Q327 552 329 554M124 440Q124 443 123 446M386 363Q381 381 379 399M423 347Q425 365 420 382M251 413Q233 421 223 439M381 387Q389 414 370 435M379 401Q367 420 347 430M259 498Q253 510 249 522M423 495Q426 502 428 510M441 471Q448 482 458 490M403 521Q401 525 402 530M110 410Q110 414 107 416M380 519Q387 523 391 531M348 441Q346 454 340 466M528 371Q531 371 532 373M90 366Q89 369 86 371M395 363Q393 375 386 386M316 534Q311 537 309 544M313 502Q304 510 292 513M475 483Q475 486 475 488M209 519Q208 523 205 523M196 512Q195 515 195 518M351 356Q349 367 345 378M510 234Q513 236 517 237M472 423Q484 437 493 453M271 521Q265 529 259 536M359 469Q372 494 370 522M349 487Q352 500 357 513M329 537Q339 541 344 550M525 370Q530 372 536 371M413 388Q413 399 418 410M296 535Q299 540 296 545M416 309Q425 326 430 344M377 532Q380 536 381 541M406 450Q415 466 408 484M514 243Q515 263 523 281M133 448Q131 452 132 456M119 430Q117 432 114 433M451 479Q463 483 469 494M425 431Q431 442 437 453M339 511Q325 519 330 534M350 538Q349 542 350 545M256 424Q251 442 253 461M338 496Q340 515 328 529M367 491Q361 511 364 533M318 534Q314 538 312 544M359 484Q350 496 347 511M172 482Q168 488 161 490M115 422Q115 427 113 432M326 371Q305 389 298 416M270 139Q261 139 253 134M528 306Q531 317 535 328M228 524Q229 528 226 529M334 521Q335 529 336 537M308 533Q304 541 307 550M172 166Q167 178 157 186M315 531Q317 539 314 548M519 252Q523 264 531 273M417 456Q416 476 432 486M393 144Q407 154 421 165M369 470Q348 483 341 506M399 501Q399 516 401 531M322 466Q297 488 310 519M401 494Q405 507 411 518M425 447Q428 463 440 475M417 433Q430 444 428 460M438 450Q448 468 458 485M444 479Q455 479 465 485M163 475Q161 478 159 482M471 462Q477 464 483 468M395 374Q402 393 412 410M441 506Q443 509 442 513M405 494Q399 509 390 524M321 412Q306 422 294 435M387 487Q399 504 384 517M90 367Q88 373 88 378M391 531Q390 533 391 536M323 478Q314 501 302 523M412 156Q432 176 459 168M292 136Q314 151 329 173M307 419Q302 444 306 470M424 517Q426 519 428 520M263 539Q262 541 262 545M90 337Q87 341 83 346M346 515Q341 530 349 544M495 443Q497 448 496 454M371 506Q371 518 377 527M423 505Q425 511 430 515M404 405Q385 423 369 443M363 379Q372 398 362 416M287 434Q277 448 279 465M208 515Q205 516 203 520M476 416Q470 438 484 456M378 427Q381 441 376 455M518 263Q524 275 533 284M472 485Q474 488 474 490M367 323Q362 341 363 359M499 418Q505 421 512 419M381 492Q372 508 372 527M284 503Q279 514 277 525M301 434Q309 445 308 458M446 493Q452 498 453 505M354 472Q358 486 355 499M320 440Q326 467 333 493M120 428Q118 439 126 448M505 244Q514 245 520 250M376 431Q384 446 387 462M245 496Q239 513 229 528M433 456Q441 477 445 499M208 506Q206 511 202 515M249 407Q228 415 222 438M162 475Q160 483 159 490M520 258Q527 277 523 296M463 464Q472 472 483 475M90 366Q89 372 90 379M249 484Q231 498 220 518M388 478Q388 501 372 518M334 338Q334 355 331 372M340 307Q332 329 325 352M319 419Q301 436 285 455M511 404Q515 407 519 410M398 301Q408 317 410 335M385 534Q386 536 387 539M368 427Q349 440 350 463M503 241Q512 247 522 249M478 478Q478 480 479 482M289 461Q287 476 280 490M393 372Q379 391 379 414M249 479Q251 504 261 526M523 388Q524 392 527 395M362 528Q363 537 365 547M377 520Q375 527 374 533M387 472Q387 487 399 497M252 513Q245 521 248 531M328 503Q332 520 333 537M367 448Q352 466 341 486M353 533Q355 538 354 543M326 506Q341 531 320 550M283 420Q279 449 258 468M167 170Q157 174 147 181M464 462Q472 473 478 486M378 521Q378 531 376 541M321 461Q328 475 322 489M328 527Q330 534 335 540M515 256Q521 267 515 278M370 523Q372 532 373 541M230 146Q215 155 199 161M289 472Q280 486 288 500M531 373Q532 374 533 376M496 213Q507 238 525 258M441 479Q441 493 454 498M183 503Q180 504 177 505M123 424Q122 430 121 435M442 383Q440 394 444 405M503 407Q507 415 514 419M281 503Q265 511 270 528M421 482Q429 491 440 494M278 447Q267 458 255 469M465 463Q471 473 473 485M398 513Q404 517 408 523M373 540Q372 543 371 546M350 392Q343 419 338 445M254 473Q234 481 236 503M368 489Q371 508 366 526M331 405Q325 419 316 430M412 387Q416 412 404 434M459 416Q459 432 463 447M305 427Q296 437 286 447M495 438Q496 445 499 452M446 466Q459 470 468 481M447 412Q461 425 472 441M509 434Q511 434 513 436M303 528Q303 534 303 541M410 486Q414 498 422 508M396 502Q405 511 407 523M333 523Q329 533 329 545M453 463Q465 478 466 497M228 526Q227 529 225 532M306 513Q311 525 307 537M287 422Q282 444 268 462M456 500Q456 503 456 505M440 506Q443 507 446 509M181 483Q175 487 174 493M250 523Q245 528 240 532M417 399Q414 425 408 451M131 451Q131 455 130 458M257 533Q256 536 254 539M290 422Q289 443 277 461M518 254Q526 260 526 269M367 503Q368 528 348 544M349 418Q340 443 321 464M371 142Q382 142 393 140M366 529Q371 537 366 544M390 480Q382 493 374 506M329 507Q352 523 342 549M343 544Q342 546 342 548M311 408Q311 429 298 446M256 525Q249 531 249 540M240 517Q235 525 229 533M460 175Q468 185 481 185M439 511Q440 513 439 514M190 488Q183 497 184 508M358 435Q359 452 361 469M342 417Q333 436 315 446M257 525Q252 529 249 535M533 346Q535 347 537 347M113 420Q111 439 126 450M457 466Q460 480 471 490M427 509Q429 515 428 521M326 474Q312 495 314 520M389 522Q396 527 400 534M337 536Q337 541 339 547M312 529Q315 538 308 545M369 414Q387 435 383 462M284 136Q274 163 288 188M406 511Q400 521 407 530M533 361Q535 362 538 363M418 505Q426 512 435 517M418 472Q432 480 429 496M376 290Q377 317 387 342M146 188Q136 195 127 203M316 479Q306 494 289 499M441 430Q442 447 450 463M460 466Q468 474 473 484M264 515Q267 529 277 538M274 536Q272 542 267 546M195 500Q190 504 190 509M134 448Q131 450 131 454M518 253Q523 257 527 261M300 411Q293 437 296 464M479 461Q487 464 491 471M416 524Q417 527 417 530M175 492Q172 493 170 495M439 351Q444 365 447 380M527 367Q533 370 535 376M382 484Q383 502 389 519M514 254Q519 257 523 262M376 504Q391 514 395 532M447 477Q449 488 454 499M313 544Q312 546 310 548M103 260Q99 276 89 288M328 430Q334 441 331 453M399 320Q388 341 382 364M314 513Q311 525 314 537M338 355Q337 371 329 386M356 472Q347 486 350 502M386 467Q389 494 381 520M208 508Q204 511 202 516M325 525Q320 536 311 544M261 524Q254 532 244 536M334 429Q339 443 335 458M499 451Q500 453 502 454M372 144Q390 157 412 157M356 532Q353 539 356 545M150 182Q142 191 140 203M353 531Q354 537 355 542M480 461Q488 463 486 471M377 410Q368 425 368 443M391 379Q384 392 390 405M246 530Q246 535 243 539M389 408Q401 423 401 443M330 346Q313 355 302 370M388 394Q383 406 379 419M438 469Q452 480 457 497M310 426Q302 442 291 456M286 134Q278 138 272 133M371 537Q372 540 374 541M495 444Q497 447 501 448M375 318Q382 342 390 367M396 450Q399 475 418 489M496 225Q495 240 503 253M325 419Q316 436 299 447M487 455Q484 463 492 466M501 405Q514 412 521 426M300 537Q300 542 297 546M358 363Q364 383 355 403M93 331Q88 332 85 336M141 192Q136 204 122 204M319 542Q319 545 319 548M499 218Q504 219 508 223M304 436Q288 460 303 484M290 509Q271 518 268 539M315 419Q299 429 296 447M418 162Q419 188 432 211M515 409Q517 410 521 411M339 518Q330 533 326 550M416 324Q420 335 423 346M270 428Q268 439 264 449M419 401Q419 427 435 449M509 435Q510 438 513 440M273 452Q267 462 259 469M160 482Q158 484 156 486M112 423Q111 425 109 428M321 518Q317 548 287 549M474 470Q477 477 476 483M130 455Q130 457 130 459M332 479Q331 497 314 504M213 520Q213 524 209 525M483 436Q493 444 498 457M380 437Q378 456 389 472M413 299Q402 308 394 319M385 480Q383 494 386 508M459 176Q463 186 469 196M294 514Q299 530 301 547M421 515Q425 520 432 522M206 518Q205 519 203 520M344 461Q333 470 328 483M182 481Q180 487 175 490M461 434Q469 447 473 461M313 537Q313 541 312 545M502 412Q513 418 518 429M341 469Q348 495 339 521M410 410Q411 429 419 445M529 297Q533 301 536 306M347 385Q347 398 343 411M454 417Q470 428 484 440M321 401Q330 418 333 436M377 493Q382 517 377 541M529 315Q530 340 531 365M350 135Q359 153 372 169M401 461Q408 475 409 490M361 460Q358 482 351 502M457 478Q464 485 473 490M254 520Q253 527 253 533M295 546Q295 549 293 551M369 510Q383 522 388 539M418 506Q415 515 411 524M415 502Q419 512 422 522M307 419Q333 436 329 467M100 396Q99 399 98 402M392 324Q409 345 410 372M249 467Q236 480 238 498M393 398Q400 412 399 429M320 505Q315 525 328 542M303 419Q285 421 269 427M419 347Q407 362 419 376M287 545Q286 546 285 547M507 241Q511 258 520 273M114 225Q110 226 107 225M102 399Q100 403 98 406M132 202Q123 201 121 211M333 396Q319 420 297 437M307 543Q304 547 302 550M311 533Q308 540 301 544M400 530Q401 532 402 534M412 518Q413 525 419 527M382 517Q385 526 388 536M500 418Q502 426 506 433M408 471Q399 490 406 509M339 529Q336 535 334 542M158 177Q149 179 141 184M263 526Q257 535 248 540M402 518Q409 525 418 529M286 403Q296 430 282 455M314 514Q314 529 320 542M306 518Q298 530 295 543M351 503Q372 527 347 547M413 521Q414 524 415 526M338 521Q342 535 332 546M225 517Q222 523 219 529M343 406Q354 427 349 451M375 500Q371 512 376 523M380 405Q388 427 391 451M410 499Q411 511 415 522M491 215Q486 234 495 251M151 181Q146 182 141 185M414 157Q430 156 444 165M393 394Q389 415 380 435M314 463Q310 474 312 486M272 487Q265 497 257 504M300 439Q294 451 293 464M345 270Q345 298 357 322M400 423Q414 443 437 448M303 527Q300 535 296 543M92 370Q90 376 89 381M367 444Q363 456 369 468M285 545Q286 547 284 549M415 506Q417 513 424 516M376 535Q379 538 379 543M487 207Q498 232 515 253M291 519Q286 530 278 538M417 488Q421 506 424 525M291 474Q274 491 278 514M111 233Q107 236 103 238M464 183Q484 198 496 221M223 143Q218 160 203 168M478 464Q482 468 484 474M267 479Q264 496 251 507M308 370Q296 388 290 409M113 424Q113 427 110 430M370 402Q365 420 369 438M330 546Q329 549 327 551M406 482Q414 501 416 521M175 494Q175 498 172 501M418 432Q429 437 440 442M341 530Q337 537 342 543M188 492Q182 497 184 505M524 364Q528 366 532 367M410 429Q402 447 409 465M292 434Q285 454 268 467M392 511Q396 519 399 527M354 531Q351 535 352 541M526 335Q532 335 535 341M412 505Q423 511 434 517M231 512Q226 522 214 523M311 540Q310 544 311 547M329 334Q330 353 321 369M512 410Q513 417 516 424M369 138Q381 145 395 146M351 427Q357 447 355 468M362 497Q381 511 393 532M473 193Q482 202 487 213M321 528Q322 540 320 551M376 379Q383 393 385 408M276 395Q277 416 262 431M338 460Q316 479 324 507M378 395Q372 413 365 431M397 341Q391 358 404 370M498 437Q502 441 507 441M303 409Q272 415 268 446M359 408Q352 418 350 431M392 436Q395 453 388 468M281 493Q282 513 282 532M504 422Q505 428 509 432M293 531Q287 535 284 541M488 449Q493 454 492 461M335 490Q326 503 327 519M526 313Q530 317 534 321M371 514Q366 527 374 538M316 404Q303 409 291 416M249 506Q239 515 232 526M410 517Q415 522 416 529M222 514Q219 519 216 524M129 443Q131 457 137 469M244 515Q238 522 234 530M307 134Q290 131 278 145M241 530Q239 532 240 535M393 409Q407 432 407 458M322 372Q311 387 294 397M419 414Q424 430 425 446M347 402Q347 421 333 434M302 401Q278 405 267 427M321 134Q326 146 328 160M436 161Q455 174 476 186M374 400Q379 414 385 428M331 521Q327 534 322 547M128 441Q125 443 123 446M367 456Q355 469 356 486M306 460Q293 472 283 486M473 452Q471 465 471 478M190 160Q177 163 166 171M486 454Q488 461 487 468M141 465Q136 466 136 470M216 501Q213 507 210 513M290 542Q289 545 290 548M286 134Q280 150 264 155M199 495Q196 501 192 506M278 137Q262 144 249 154M235 532Q235 533 234 535M531 328Q532 332 536 335M328 540Q332 544 335 549M334 383Q327 398 331 414M287 521Q281 530 283 540M270 442Q248 452 239 473M327 448Q304 457 299 480M343 544Q343 548 344 551M274 136Q276 161 280 186M508 415Q514 419 521 419M161 479Q160 484 159 488M271 397Q256 414 234 422M350 418Q357 428 358 441M216 499Q204 502 208 514M278 538Q275 543 269 545M310 547Q310 548 311 550M301 540Q296 545 291 549M369 359Q363 386 376 409M386 391Q384 411 382 431M422 455Q422 480 436 502M510 234Q517 248 527 260M433 478Q440 487 444 497M481 464Q488 463 494 467M387 474Q405 482 409 501M207 499Q203 504 198 509M295 543Q290 544 288 549M422 344Q430 357 441 367M491 433Q499 442 506 451M401 367Q393 386 401 405M258 392Q241 400 235 418M388 528Q397 529 401 537M355 447Q358 464 358 482M387 342Q389 364 382 386M185 503Q184 504 183 506M388 334Q396 353 388 370M379 445Q370 465 374 486M228 518Q222 521 216 523M241 414Q237 431 232 447M181 497Q179 500 177 502M289 529Q286 537 282 545M426 317Q418 340 427 363M450 498Q453 499 455 501M434 512Q439 512 442 515M279 420Q270 435 274 452M298 525Q298 538 294 551M406 340Q405 352 399 362M351 330Q348 348 345 365M276 515Q264 520 257 530M288 458Q279 470 269 479M504 425Q507 432 511 437M455 489Q461 492 460 498M510 407Q512 416 520 420M248 432Q243 444 243 457M387 524Q391 531 396 537M529 341Q533 345 537 349M447 165Q451 167 454 165M529 303Q533 306 535 310M201 500Q197 506 191 508M327 435Q325 458 325 481M256 502Q238 520 213 526M350 137Q351 133 355 134M226 504Q226 515 216 520M378 425Q365 437 365 455M402 147Q407 164 414 180M400 502Q411 510 414 524M419 441Q424 452 429 463M377 506Q372 520 376 533M229 147Q222 162 220 178M395 319Q403 333 411 347M307 542Q303 545 306 548M399 388Q399 413 406 438M286 527Q286 533 283 539M348 315Q349 334 351 353M382 509Q379 526 392 536M364 391Q359 405 357 420M451 468Q446 480 457 489M521 411Q523 412 525 413M397 360Q390 386 386 413M355 509Q350 524 350 539M359 477Q366 496 359 515M264 497Q259 523 269 546M99 393Q99 399 97 405M531 318Q534 320 537 321M469 452Q478 461 489 465M453 464Q462 471 471 476M399 391Q395 411 385 429M448 460Q456 477 463 494M370 384Q374 401 370 418M354 409Q340 434 353 459M509 440Q511 442 514 442M512 412Q516 415 519 418M441 166Q456 190 483 200M360 536Q364 540 365 546M365 140Q370 152 371 164M460 476Q460 483 466 486M447 483Q456 490 464 500M462 460Q463 469 472 471M344 525Q357 532 357 547M363 485Q387 504 380 534M353 536Q355 542 361 544M456 474Q467 481 467 495M484 470Q489 468 489 473M464 460Q471 467 480 471M469 450Q476 459 482 469M351 138Q366 146 382 148M192 501Q192 505 189 508M270 535Q269 539 269 542M391 345Q386 359 386 373M276 511Q280 522 276 534M251 531Q247 535 242 539M293 545Q294 547 295 550M530 331Q534 331 536 332M335 290Q340 314 341 338M268 542Q269 543 269 545M333 494Q335 507 326 515M531 310Q533 311 535 313M316 141Q325 166 350 175M89 304Q87 308 85 313M403 312Q395 337 380 358M406 377Q398 404 389 429M358 424Q352 447 334 462M369 405Q355 422 342 440M519 299Q525 303 532 302M469 489Q471 491 473 492M533 341Q537 346 536 352M497 433Q500 438 502 443M376 412Q363 429 346 442M313 335Q339 360 309 380M178 487Q175 491 170 494M497 397Q493 418 514 426M479 448Q475 461 479 475M442 486Q450 493 460 498M331 441Q318 453 310 469M330 394Q322 402 312 409M516 388Q521 393 526 395M359 272Q365 297 376 321M286 494Q281 519 258 529M307 509Q301 520 302 533M402 330Q409 356 408 383M409 510Q417 512 422 518M406 443Q412 465 410 487M251 448Q235 465 234 489M417 395Q421 406 423 418M302 518Q296 530 288 540M258 512Q257 524 260 537M428 157Q437 160 447 160M494 427Q499 439 499 452M354 325Q363 338 364 354M422 453Q431 472 423 490M311 342Q297 348 291 360M270 530Q261 533 255 540M408 514Q411 518 414 522M221 518Q218 521 219 526M481 463Q482 470 488 471M440 502Q443 507 445 513M324 511Q317 526 308 541M507 386Q510 394 518 395M405 511Q414 513 422 520M358 508Q354 530 335 541M486 205Q487 229 504 246M293 436Q297 462 281 483M325 502Q307 516 299 537M297 502Q280 514 275 534M508 428Q509 435 512 440M503 420Q507 427 509 435M318 427Q307 440 295 452M410 490Q424 499 416 514M268 524Q269 530 265 535M326 466Q310 488 322 512M166 484Q166 487 164 489M334 460Q344 480 345 503M506 232Q524 253 517 280M379 377Q370 398 365 419M393 308Q392 331 395 354M364 460Q355 478 336 483M316 140Q330 151 343 164M504 223Q509 232 518 238M372 300Q374 315 377 329M369 298Q378 316 367 333M478 446Q482 454 490 456M411 371Q411 400 391 422M385 410Q381 423 377 437M326 452Q309 459 297 473M527 356Q532 364 536 373M361 522Q369 532 370 545M275 366Q259 379 244 393M372 523Q373 534 374 545M88 337Q81 350 86 363M455 483Q458 488 462 493M242 506Q239 519 242 531M533 322Q533 331 538 339M528 358Q531 363 536 367M375 342Q374 358 383 371M378 412Q387 425 385 441M301 459Q291 483 293 510M108 242Q103 245 99 250M308 542Q307 545 306 548M450 469Q457 475 462 484M384 462Q374 488 366 514M439 486Q436 498 439 510M383 398Q379 423 372 446M410 389Q407 406 402 421M373 371Q376 396 365 418M332 536Q333 543 335 549M349 348Q348 360 344 372M521 260Q526 265 527 271M352 138Q365 162 360 189M388 469Q403 476 421 476M449 488Q448 499 450 509M105 240Q102 245 98 249M431 514Q433 516 435 519M313 500Q298 520 281 537M333 541Q332 546 333 551M261 532Q256 536 250 537M343 390Q343 418 330 443M389 346Q376 366 374 389M391 372Q391 395 376 414M265 494Q262 506 257 518M421 377Q429 403 413 426M525 403Q528 404 531 405M465 471Q468 477 472 482M406 511Q410 517 413 523M240 523Q237 526 233 529M211 503Q200 506 189 511M420 491Q416 511 406 530M411 510Q411 520 409 530M364 542Q364 545 362 548M401 460Q409 479 410 500M375 497Q376 512 388 522M338 535Q337 540 340 544M190 158Q185 183 160 190M407 147Q418 153 425 164M413 326Q445 327 449 358M327 472Q327 485 325 497M338 528Q340 538 338 548M198 509Q193 512 188 512M150 467Q149 471 146 473M525 296Q528 303 534 308M96 268Q94 271 90 273M363 399Q360 416 358 433M530 292Q532 302 536 311M158 179Q153 191 149 202M512 431Q515 431 516 435M133 203Q126 204 120 208M345 370Q313 383 318 416M413 432Q410 452 410 472M414 355Q417 380 431 401M408 428Q413 443 412 458M352 345Q347 367 340 388M307 537Q310 544 307 550M434 447Q457 449 452 471M463 462Q474 464 483 472M126 447Q126 450 127 453M510 236Q515 241 519 246M474 450Q488 449 498 457M411 517Q411 524 416 528M328 439Q342 463 320 480M253 529Q248 531 243 534M512 393Q516 406 523 417M351 362Q359 378 355 396M345 507Q348 524 361 537M146 185Q145 212 135 237M132 202Q127 201 124 205M455 479Q458 489 457 499M279 422Q269 444 250 459M413 373Q423 382 423 395M385 538Q386 540 387 542M511 404Q516 413 521 420M140 447Q141 458 139 469M402 506Q406 517 405 528M477 188Q483 192 489 195M259 536Q256 540 252 542M285 524Q288 533 283 542M324 445Q308 454 307 472M347 339Q349 357 339 373M500 430Q508 435 509 444M323 455Q324 470 323 485M527 351Q523 371 527 390M412 374Q409 399 388 414M420 503Q422 511 428 518M348 450Q348 478 337 502M309 510Q303 522 311 534M281 527Q270 532 266 545M420 519Q422 522 421 525M335 463Q336 478 331 493M495 446Q502 444 507 449M341 535Q341 541 339 545M510 422Q516 425 518 432M348 490Q357 510 347 530M348 487Q335 501 327 519M334 527Q335 533 336 540M329 432Q341 446 334 463M470 469Q471 485 464 500M409 526Q409 528 410 530M319 410Q315 428 300 440M348 430Q339 440 326 443M198 514Q200 518 196 520M313 406Q296 422 290 445M469 190Q482 206 502 209M407 354Q417 370 413 389M239 509Q226 510 217 520M403 506Q404 520 414 530M137 449Q136 453 134 458M417 150Q423 165 438 173M393 467Q392 479 391 491M447 166Q462 174 475 183M269 385Q255 383 246 395M314 524Q303 531 294 541M395 503Q387 512 387 525M530 360Q532 363 534 367M312 543Q313 546 313 549M325 401Q303 410 282 423M491 447Q494 453 498 458M369 449Q360 470 346 487M406 150Q403 175 422 191M355 270Q356 293 356 316M441 499Q445 506 440 513M350 443Q361 459 361 478M291 409Q276 420 260 431M483 428Q488 438 492 448M354 476Q354 502 340 525M396 144Q386 157 375 169M523 272Q524 288 532 302M267 496Q250 505 231 511M527 379Q530 377 533 378M213 497Q221 506 222 517M383 504Q380 515 388 524M188 159Q172 172 153 182M348 437Q360 457 370 479M266 533Q266 538 262 541M366 418Q369 443 361 468M431 495Q441 496 444 505M372 331Q370 348 360 363M401 528Q405 528 409 532M157 179Q152 180 148 177M315 547Q314 548 313 550M314 385Q315 404 311 423M518 376Q525 378 530 382M391 146Q395 167 407 184M389 519Q384 530 382 542M378 280Q382 301 387 323M87 312Q85 328 85 345M393 405Q395 431 384 454M370 533Q372 537 375 540M204 499Q198 507 197 517M423 495Q420 510 430 521M424 508Q426 512 428 515M389 521Q388 529 395 535M329 513Q332 527 321 535M486 205Q498 225 518 237M294 487Q283 496 285 510M275 415Q263 433 262 455M526 308Q530 314 537 314M505 435Q505 438 509 439M376 323Q386 348 397 373M370 299Q366 316 379 328M296 539Q295 542 293 545M342 448Q322 454 310 472M408 485Q418 497 423 512M148 188Q141 188 135 189M379 317Q367 341 377 366M352 398Q353 424 332 439M362 358Q348 376 329 388M355 407Q340 422 323 435M517 389Q518 399 525 406M385 493Q376 513 370 534M341 491Q338 514 340 537M265 528Q261 534 261 540M214 499Q204 509 206 523M165 481Q162 483 161 486M300 490Q294 506 295 523M298 547Q298 550 297 553M413 515Q415 519 417 523M320 459Q320 479 313 497M386 508Q383 524 370 534M192 505Q192 509 190 513M426 159Q431 159 437 157M305 499Q304 513 312 524M495 447Q498 451 503 453M394 342Q402 363 409 384M96 390Q103 401 108 413M269 467Q250 485 235 506M344 515Q349 527 350 540M499 217Q504 220 508 225M446 459Q444 474 454 485M328 135Q339 149 345 165M301 454Q298 473 297 492M289 523Q295 533 292 544M375 350Q365 376 373 402M397 474Q414 490 408 512M375 430Q381 449 383 470M332 522Q329 529 331 537M294 447Q292 467 275 477M263 495Q261 514 243 522M301 409Q300 435 278 447M304 453Q304 470 298 485M299 501Q284 515 277 535M251 406Q257 430 254 454M382 512Q387 524 395 534M219 509Q221 519 221 530M371 524Q373 530 374 536M407 510Q414 514 422 515M360 280Q355 296 360 312M497 430Q503 428 509 432M519 264Q525 268 528 275M469 454Q470 467 476 479M260 531Q257 537 253 541M340 526Q335 535 336 545M359 388Q353 401 350 415M509 432Q511 432 514 434M530 320Q539 328 537 340M252 535Q250 537 250 540M339 547Q336 548 337 550M366 535Q368 541 373 545M291 501Q281 512 276 527M303 523Q301 536 292 545M429 513Q431 515 435 516M343 416Q346 439 330 455M513 408Q517 413 522 417M421 452Q428 465 430 480M87 328Q88 335 84 342M529 290Q531 293 535 295M517 412Q520 414 520 417M415 327Q445 339 431 369M317 411Q308 423 298 435M192 493Q187 495 184 500M457 458Q462 471 464 485M340 531Q335 538 329 544M368 516Q367 525 369 533M309 446Q308 458 309 470M183 487Q181 493 177 499M530 324Q535 329 536 336M377 521Q373 529 373 537M402 327Q403 340 411 349M91 330Q86 332 84 337M476 188Q492 195 496 211M510 410Q515 416 521 422M265 136Q262 158 257 180M92 313Q87 315 86 320M324 471Q295 482 295 514M361 473Q349 480 349 495M145 454Q146 461 141 466M378 508Q388 518 387 532M130 203Q127 202 124 203M89 306Q86 307 85 310M254 527Q251 531 248 536M426 490Q429 503 441 508M499 428Q499 436 504 443M269 392Q257 408 244 423M511 240Q532 251 529 275M455 463Q464 471 472 478M303 487Q296 509 287 530M327 517Q319 533 317 551M425 447Q429 467 431 487M246 417Q235 425 225 436M294 527Q294 534 294 541M471 426Q478 435 486 444M382 531Q382 536 384 539M500 432Q499 440 506 442M200 507Q197 509 193 511M280 379Q264 395 243 403M396 449Q393 466 388 481M513 240Q515 246 520 249M178 163Q165 181 148 195M372 437Q377 455 376 473M525 396Q526 399 529 401M391 306Q396 322 396 338M156 478Q154 479 153 481M273 528Q264 535 253 540M379 317Q367 325 358 337M409 498Q420 507 426 519M321 367Q328 378 335 389M391 383Q377 398 364 415M452 497Q453 501 456 503M388 524Q393 530 393 538M289 513Q288 527 279 538M349 286Q355 298 347 310M297 533Q302 539 301 546M359 536Q361 542 364 547M448 504Q450 507 454 507M389 511Q389 524 386 537M382 537Q385 538 387 540M358 454Q350 472 332 478M212 505Q204 506 199 511M408 403Q410 429 407 454M292 537Q291 542 292 547M414 397Q416 412 413 427M403 488Q407 506 418 520M364 441Q355 449 346 457M309 430Q303 450 308 470M387 477Q379 487 384 500M529 340Q530 346 534 350M112 227Q110 230 108 230M305 547Q304 549 304 551M408 403Q406 428 404 454M365 530Q361 539 358 549M235 508Q223 516 213 525M295 434Q290 447 288 462M455 480Q461 482 466 484M397 507Q398 519 405 529M221 491Q215 501 206 510M362 336Q355 353 338 359M433 437Q449 454 445 477M417 472Q438 482 442 505M319 536Q318 543 320 551M326 504Q328 518 319 529M394 505Q400 515 405 525M526 294Q529 296 532 297M309 528Q308 536 308 545M487 441Q494 442 501 444M315 506Q310 523 320 538M349 454Q346 468 352 480M410 526Q411 528 412 530M90 294Q87 297 86 300M494 424Q502 432 512 436M228 495Q221 502 216 511M394 396Q404 417 426 421M513 392Q518 398 526 400M508 229Q513 233 518 237M262 460Q252 480 246 502M471 181Q485 207 465 229M523 301Q531 301 534 308M368 462Q352 467 349 484M506 408Q509 418 517 425M418 519Q420 523 421 527M110 409Q108 421 115 431M233 526Q228 529 225 533M241 506Q247 519 240 532M532 341Q536 364 521 383M99 394Q98 397 98 400M378 420Q372 442 351 450M184 480Q174 482 171 493M500 452Q502 453 504 454M512 434Q513 436 515 437M478 458Q483 463 487 469M325 538Q321 542 322 547M509 236Q506 266 528 284M377 330Q371 350 378 370M133 447Q132 452 132 457M501 430Q507 434 510 439M363 423Q345 442 351 467M352 464Q353 484 362 501M365 458Q364 472 369 484M440 420Q447 430 447 442M411 422Q429 439 443 460M247 435Q237 452 245 470M241 513Q228 515 223 527M291 441Q291 463 286 484M403 485Q413 493 419 505M342 317Q341 332 330 342M529 381Q531 384 533 386M380 375Q393 398 391 423M505 426Q512 427 517 430M472 474Q474 478 476 482M377 481Q391 507 374 532M330 259Q322 274 311 287M92 327Q93 349 99 369M245 493Q247 505 243 515M282 378Q278 398 273 418M392 442Q380 463 387 487M519 410Q523 411 525 415M260 522Q262 528 257 533M324 494Q318 507 314 520M353 418Q341 440 346 464M278 487Q301 501 288 525M393 494Q387 515 381 535M455 427Q475 445 500 452M484 444Q490 457 484 471M530 328Q534 329 536 333M125 443Q126 446 124 448M381 514Q379 525 375 535M526 393Q528 395 531 397M223 520Q223 525 222 530M316 530Q317 536 316 542M415 458Q428 479 448 494M384 465Q396 483 398 504M332 497Q309 515 310 546M415 150Q424 157 435 163M316 502Q303 522 296 545M299 134Q291 147 289 162M176 498Q176 501 175 503M458 481Q460 487 466 490M355 390Q345 416 348 443M95 275Q91 280 89 286M479 466Q483 472 490 475M265 390Q259 406 253 421M205 492Q193 495 181 490M427 500Q431 506 437 510M520 267Q524 268 527 270M351 267Q336 284 321 301M172 476Q166 482 168 490M510 437Q513 439 515 441M273 483Q266 498 259 515M200 491Q206 507 209 524M390 468Q383 491 380 514M502 419Q513 424 515 437M347 533Q345 539 346 546M266 538Q266 540 267 543M510 247Q523 249 527 261M441 504Q443 507 445 509M336 411Q332 427 335 444M383 141Q385 161 392 181M393 531Q394 534 396 537M501 428Q510 426 519 429M533 326Q536 325 539 326M377 503Q376 517 385 529M119 216Q114 219 109 224M308 548Q311 550 309 554M396 421Q399 435 393 448M395 481Q390 507 374 528M385 449Q412 458 402 484M221 148Q212 161 201 172M505 440Q505 443 508 445M264 526Q261 534 255 539M336 522Q331 535 337 547M350 420Q353 442 357 465M355 525Q356 537 360 548M368 542Q368 544 370 547M256 516Q254 529 245 539M249 505Q250 519 242 531M251 515Q248 522 243 527M205 505Q204 510 200 514M507 241Q516 242 522 247M94 282Q90 284 88 288M501 225Q503 237 513 244M368 532Q366 539 360 542M320 446Q299 464 278 481M401 387Q401 409 396 431M230 525Q227 528 228 532M395 465Q385 487 380 511M270 541Q267 543 267 546M308 540Q311 543 310 546M451 487Q455 493 453 499M432 490Q439 499 446 508M300 526Q302 537 304 548M294 521Q290 528 286 536M393 520Q392 526 393 532M402 500Q403 514 410 526M434 382Q450 396 468 407M378 429Q377 454 370 477M366 146Q371 163 366 180M293 458Q274 481 286 509M383 398Q380 419 368 438M521 267Q525 270 531 272M168 167Q158 189 142 206M523 319Q528 325 531 332M399 523Q400 530 402 536M386 538Q389 538 391 540M321 423Q313 442 302 460M135 449Q134 452 130 454M388 376Q381 390 390 403M253 505Q243 516 243 530M413 519Q418 522 419 527M323 539Q328 545 326 552M191 158Q176 178 152 187M364 278Q357 293 368 307M488 457Q493 466 490 475M359 531Q362 536 361 542M379 427Q375 440 369 452M372 494Q388 516 373 538M390 143Q410 159 435 160M506 408Q510 421 510 434M272 139Q264 156 246 162M401 524Q401 528 403 531M377 328Q361 346 365 371M506 237Q510 249 520 255M528 376Q530 381 534 385M496 437Q501 441 505 445M416 436Q429 447 440 461M374 142Q362 154 372 167M456 473Q458 485 465 494M314 468Q309 478 299 485M308 546Q308 549 310 552" fill="none" stroke="#9c8264" stroke-opacity="0.060" stroke-width="0.6" stroke-dasharray="3 1.5"/><path d="M368 445Q343 461 352 489M329 418Q331 446 304 455M496 254Q507 263 514 275M216 385Q203 396 190 406M461 333Q479 348 483 372M322 460Q310 483 286 493M331 260Q335 272 333 285M89 338Q85 342 83 348M372 465Q370 479 363 491M388 453Q400 464 401 481M437 423Q464 432 461 460M485 422Q477 440 474 460M517 331Q523 343 535 345M375 436Q370 454 364 471M363 380Q368 393 357 401M205 302Q199 320 181 327M461 306Q455 324 464 340M355 369Q334 371 316 384M251 312Q252 340 237 364M355 237Q349 254 344 271M293 281Q286 292 290 304M300 362Q300 376 300 389M182 479Q171 485 169 497M357 337Q350 346 345 357M198 363Q204 385 188 401M114 413Q112 418 109 423M179 175Q167 176 155 178M369 278Q375 300 367 320M251 292Q244 305 240 320M295 247Q287 261 295 275M268 145Q284 157 304 159M498 337Q505 351 513 364M261 151Q258 168 245 179M219 319Q212 330 210 343M461 260Q466 274 469 289M276 374Q271 396 260 416M429 365Q416 386 416 410M283 478Q268 502 286 524M200 476Q197 487 191 498M340 279Q334 296 337 313M475 392Q494 409 507 430M401 414Q410 429 423 440M412 156Q425 184 455 189M493 217Q511 229 521 249M418 305Q435 326 443 351M206 386Q200 396 194 406M340 386Q336 406 323 424M400 440Q396 464 385 487M224 492Q214 507 223 522M471 331Q476 344 477 358M454 433Q438 450 438 473M251 323Q244 336 251 348M331 287Q327 305 314 317M114 246Q109 246 104 248M259 461Q263 487 257 513M273 242Q278 264 281 285M378 287Q389 305 389 327M301 430Q286 439 270 447M423 367Q424 392 424 417M291 405Q279 409 272 420M255 400Q244 415 242 433M412 302Q411 318 411 334M497 344Q505 357 506 372M280 243Q291 258 308 266M477 411Q500 412 518 426M290 314Q276 330 276 351M450 456Q462 476 485 479M476 392Q472 419 463 445M105 272Q100 276 94 278M399 219Q414 230 422 246M289 456Q271 476 281 500M101 385Q97 390 97 396M508 388Q515 393 523 398M316 328Q317 343 315 359M229 421Q235 432 236 444M366 491Q369 508 361 523M427 439Q436 450 442 462M288 249Q276 267 258 280M310 376Q320 397 331 419M234 389Q231 403 216 405M414 337Q407 361 400 385M418 441Q411 457 412 475M259 262Q256 289 275 308M350 224Q348 238 346 253M388 377Q396 391 389 406M360 408Q363 427 356 445M309 252Q305 266 300 278M240 425Q233 438 228 452M389 436Q401 457 411 478M363 145Q371 142 379 139M382 358Q369 368 374 384M325 413Q316 438 332 458M224 341Q213 365 199 387M299 267Q302 278 297 289M212 397Q209 416 206 435M422 475Q423 494 423 512M522 330Q530 331 534 338M393 271Q399 290 394 309M98 309Q90 312 87 319M306 463Q293 491 264 491M423 450Q432 472 450 487M238 303Q248 323 235 341M96 323Q94 333 86 337M521 315Q519 328 532 333M243 313Q231 338 249 358M348 403Q361 425 345 445M296 368Q291 379 292 392M349 384Q330 400 313 419M308 307Q313 330 316 354M136 441Q135 447 133 453M419 313Q422 328 430 341M266 240Q263 252 267 264M243 421Q230 444 233 469M327 495Q314 516 308 540M309 451Q309 468 302 484M491 419Q505 423 509 438M372 146Q376 161 381 175M447 374Q454 399 475 414M496 388Q494 407 507 421M435 432Q446 445 455 459M419 292Q429 303 438 316M507 238Q513 244 518 250M245 486Q232 491 220 498M513 329Q515 349 528 366M432 284Q421 300 422 319M399 421Q415 448 444 439M108 272Q100 274 96 281M280 470Q273 483 269 497M255 367Q252 386 251 406M372 364Q377 382 370 399M423 285Q436 314 418 340M408 296Q396 319 385 343M369 290Q381 312 389 336M251 462Q258 478 252 494M359 255Q337 264 328 286M406 450Q413 465 416 483M220 315Q213 326 210 339M234 439Q238 458 236 478M266 143Q254 141 241 143M472 337Q484 340 497 343M429 355Q439 380 433 407M377 274Q374 297 383 320M315 284Q325 300 331 319M348 244Q346 268 359 288M291 455Q264 464 259 492M293 228Q281 236 286 250M398 404Q387 420 382 438M269 479Q259 492 252 507M377 444Q370 469 358 491M380 472Q388 485 384 499M370 394Q360 407 357 422M221 489Q223 510 206 521M194 434Q190 444 185 454M338 144Q317 149 304 166M261 448Q257 467 263 485M461 318Q462 346 486 360M341 306Q333 318 334 332M441 172Q448 181 449 194M345 268Q340 279 340 292M284 371Q285 396 261 404M511 324Q521 333 530 342M365 402Q343 412 328 431M332 349Q322 369 310 387M287 490Q297 514 288 539M328 240Q357 252 355 284M397 394Q400 409 398 424M432 307Q443 332 454 356M348 370Q370 388 379 414M469 378Q478 387 484 399M389 295Q386 309 391 323M262 385Q275 405 277 429M223 351Q226 368 227 385M379 278Q378 301 367 321M247 351Q240 364 233 376M421 309Q422 321 423 333M290 505Q274 508 265 523M188 314Q170 323 166 342M410 330Q419 352 439 362M489 402Q494 418 507 429M427 365Q425 390 432 414M342 356Q341 376 325 389M316 392Q297 408 275 421M369 288Q367 315 354 339M298 499Q290 518 280 537M497 400Q498 418 501 436M295 433Q271 454 281 484M521 306Q526 310 531 314M368 237Q374 260 373 284M292 320Q304 345 295 372M398 432Q415 452 401 474M372 274Q383 289 371 303M468 185Q488 198 501 217M282 268Q274 290 269 313M276 435Q252 446 228 456M240 424Q237 452 212 464M429 424Q416 450 437 471M395 395Q400 411 414 421M280 231Q286 252 293 273M274 447Q264 458 250 463M244 389Q231 403 231 423M396 419Q395 432 385 441M268 435Q251 445 249 464M420 330Q400 342 396 365M356 302Q348 321 338 339M409 154Q434 153 444 177M316 143Q335 155 351 169M372 293Q363 304 359 317M258 365Q246 382 247 403M394 416Q394 443 391 469M426 317Q438 337 441 360M332 322Q337 341 341 360M373 273Q374 285 370 298M356 143Q370 157 384 172M433 327Q439 337 445 347M240 493Q224 501 214 515M341 323Q329 335 317 347M470 327Q473 338 468 349M240 394Q242 424 217 440M354 361Q355 377 346 392M416 318Q409 344 427 364M237 382Q227 394 219 408M381 331Q386 347 389 364M223 470Q218 499 193 516M311 329Q317 343 318 357M197 455Q181 469 180 490M375 337Q377 358 367 377M521 309Q525 327 535 343M385 465Q394 485 398 507M444 362Q444 379 444 396M263 464Q249 478 231 485M375 255Q365 262 360 273M389 430Q396 457 387 484M412 282Q416 301 428 317M328 286Q333 303 343 319M356 372Q356 387 356 403M242 259Q243 276 239 293M295 316Q278 337 252 344M244 144Q231 166 207 176M471 421Q480 434 492 446M405 419Q407 431 407 444M347 435Q357 459 355 484M300 300Q292 326 275 348M292 409Q290 425 278 436M314 469Q295 491 294 520M384 446Q386 460 388 473M305 450Q289 466 270 480M155 448Q145 457 145 471M284 275Q283 298 283 322M463 183Q470 194 479 204M362 437Q357 463 338 481M476 426Q477 446 491 460M259 341Q257 369 272 392M287 291Q288 318 270 338M354 478Q367 500 358 524M273 379Q255 390 250 410M438 403Q436 430 418 450M431 267Q441 283 439 302M354 469Q358 487 368 503M514 367Q519 372 526 370M365 439Q361 458 362 478M127 218Q119 223 113 230M262 358Q272 380 287 399M429 448Q419 467 419 488M362 148Q383 163 407 173M450 405Q446 424 455 441M249 480Q244 490 240 501M484 289Q492 302 503 313M267 388Q262 410 252 430M362 454Q357 475 358 496M444 378Q437 406 459 425M254 402Q245 420 234 436M115 414Q110 417 110 423M348 276Q333 287 329 305M271 343Q259 362 244 378M388 333Q375 355 357 372M278 347Q270 364 267 383M367 464Q380 471 389 482M348 459Q324 470 312 495M333 255Q332 277 332 300M396 457Q421 467 437 489M399 373Q388 402 407 427M398 297Q381 306 377 325M407 408Q420 435 404 461M386 420Q380 437 385 455M326 401Q325 420 312 434M506 256Q518 268 528 280M287 476Q275 501 264 525M253 476Q247 499 226 509M321 341Q307 363 309 388M459 391Q456 405 456 419M336 367Q325 391 330 416M154 454Q151 466 141 474M424 338Q433 346 440 355M227 366Q223 382 227 398M234 301Q234 317 219 326M231 496Q227 509 218 518M241 419Q233 442 243 463M507 365Q518 369 528 373M377 368Q379 395 370 421M214 323Q220 342 234 357M457 429Q475 443 468 465M325 386Q313 398 306 413M296 145Q302 163 308 182M318 244Q318 256 317 267M446 389Q460 394 472 404M425 301Q431 327 438 354M404 446Q406 466 400 485M433 419Q438 432 429 443M386 157Q411 165 437 168M344 315Q338 335 331 355M285 404Q272 426 260 448M287 136Q296 157 297 179M344 389Q346 405 352 420M323 340Q308 363 302 390M382 315Q380 336 399 347M235 499Q234 514 230 528M270 370Q256 392 248 417M372 287Q374 298 376 309M342 373Q354 394 357 419M437 291Q440 318 440 344M307 510Q304 527 301 544M262 431Q252 456 257 483M230 244Q245 257 244 277M340 380Q316 384 299 401M423 326Q429 347 417 366M374 288Q382 304 387 320M459 387Q468 405 484 418M341 369Q343 388 332 405M284 387Q293 414 280 439M255 396Q228 394 213 417M233 462Q219 473 213 490M250 255Q250 279 251 302M315 318Q314 330 308 341M439 425Q456 451 437 475M281 406Q262 416 251 435M315 371Q312 386 312 402M265 348Q255 370 232 374M411 422Q401 450 416 475M201 439Q195 452 183 460M370 492Q377 513 375 536M521 329Q527 333 530 339M393 423Q399 448 405 472M242 460Q241 487 245 514M396 432Q388 448 377 462M376 469Q369 495 356 518M421 311Q421 328 418 346M517 280Q515 298 518 314M341 326Q330 341 331 360M341 479Q339 491 339 503M406 388Q405 407 397 425M357 335Q371 356 371 381M390 446Q381 472 369 496M332 269Q334 286 322 299M205 154Q189 166 174 178M455 341Q462 358 468 375M460 189Q477 202 486 221M499 231Q493 259 520 268M469 443Q471 455 478 464M392 314Q391 333 405 345M312 502Q308 530 286 549M357 361Q357 374 355 386M99 365Q103 390 115 412M367 340Q374 363 372 387M416 259Q431 270 444 284M301 384Q295 396 294 409M493 229Q498 252 511 270M268 364Q272 377 269 390M304 142Q295 152 288 164M420 446Q442 460 455 481M317 485Q303 508 309 535M291 421Q299 430 304 442M414 425Q436 440 459 452M450 407Q472 417 481 441M325 334Q332 364 304 377M330 503Q335 522 335 542M455 371Q448 394 465 411M244 405Q238 416 237 428M319 388Q317 408 307 426M352 374Q374 395 362 423M332 305Q336 323 319 332M465 379Q465 402 471 424M233 477Q215 501 225 529M400 356Q396 368 388 378M479 428Q481 440 486 451M517 386Q522 395 522 406M474 361Q488 375 505 382M176 474Q161 472 151 484M463 435Q464 447 466 460M398 458Q405 476 415 493M342 497Q342 524 348 550M351 508Q343 529 336 550M413 322Q403 344 423 358M293 278Q281 301 284 328M367 290Q366 315 352 335M293 237Q302 258 288 276M317 335Q293 354 299 385M458 427Q465 439 471 451M349 247Q344 257 337 266M292 274Q300 292 320 292M291 253Q282 272 272 292M128 430Q129 437 124 441M262 237Q262 254 264 270M438 406Q439 429 440 452M240 458Q235 470 224 475M455 297Q466 318 478 340M171 464Q164 472 156 478M354 256Q354 268 347 278M330 501Q342 516 332 532M331 478Q319 495 299 502M298 509Q280 512 275 529M195 309Q189 324 196 339M420 163Q443 170 458 189M352 356Q339 367 338 383M231 417Q206 432 204 461M228 148Q216 153 214 166M209 429Q202 441 189 447M332 407Q333 419 330 430M249 266Q251 284 236 295M254 399Q247 410 235 414M454 467Q461 475 462 485M268 139Q254 157 238 174M334 255Q322 268 319 287M516 311Q521 314 528 314M206 363Q195 370 188 380M419 361Q422 376 429 389M270 138Q235 141 231 176M257 379Q263 397 264 415M214 373Q193 389 179 412M244 473Q236 482 228 491M338 295Q330 305 335 317M227 433Q224 455 211 472M353 481Q351 507 341 530M253 435Q238 451 243 473M317 379Q301 394 301 415M271 486Q259 493 247 501M370 348Q370 371 385 388M283 376Q277 392 282 409M328 284Q328 307 329 330M390 278Q396 302 388 325M511 398Q517 398 522 400M245 361Q258 385 256 413M413 382Q426 405 430 430M279 141Q263 162 236 162M285 379Q291 393 295 408M514 383Q520 391 528 398M425 314Q438 330 435 349M307 401Q297 418 287 435M280 304Q268 326 258 348M345 261Q339 280 329 297M189 483Q190 497 177 502M394 148Q395 175 418 190M435 279Q439 295 446 309M396 310Q399 327 391 343M251 268Q267 277 274 294M265 437Q265 458 273 478M337 483Q333 497 331 511M380 295Q389 314 397 333M332 443Q334 464 323 483M355 252Q362 265 373 274M289 316Q286 328 284 340M260 395Q263 409 260 422M374 267Q353 290 360 320M318 254Q324 265 326 276M221 457Q216 472 207 484M478 356Q466 374 479 391M422 398Q422 411 425 423M450 312Q467 333 474 359M203 476Q195 483 191 494M378 249Q383 275 390 300M282 343Q271 360 256 373M516 305Q522 317 530 327M260 390Q255 417 238 438M241 264Q222 269 211 287M228 477Q207 489 183 493M221 274Q233 292 236 314M251 463Q239 484 244 509M324 305Q326 321 336 334M296 454Q294 473 279 484M485 209Q498 227 509 246M470 450Q465 461 464 473M267 330Q261 349 248 366M295 409Q272 435 298 459M388 281Q395 294 398 309M310 243Q300 261 303 281M352 481Q352 497 357 513M219 292Q198 308 179 326M217 425Q206 440 203 457M252 333Q237 355 226 380M416 318Q424 333 414 346M274 376Q260 394 253 416M353 258Q357 273 353 288M293 376Q296 393 280 401M439 325Q447 348 460 368M258 357Q252 368 247 379M420 303Q407 326 408 352M394 285Q395 297 401 308M363 337Q349 366 367 391M441 314Q420 328 412 353M326 329Q304 340 302 364M390 428Q401 442 407 459M235 327Q231 353 208 367M198 331Q178 346 175 371M454 183Q463 210 492 213M355 491Q365 497 370 508M380 343Q375 355 378 368M291 283Q284 302 296 317M302 428Q285 449 259 455M328 355Q318 367 311 381M383 280Q389 290 388 302M248 373Q252 391 246 410M433 289Q450 294 448 312M473 437Q490 439 501 454M282 368Q279 380 278 392M314 139Q302 163 305 190M341 234Q341 253 342 273M224 508Q218 515 215 524M466 248Q478 271 485 296M416 420Q428 442 436 465M352 475Q350 495 354 515M411 350Q411 376 425 398M414 279Q433 298 444 322M116 242Q118 267 93 269M222 361Q233 378 245 395M384 267Q389 292 381 316M520 315Q529 318 537 320M453 373Q454 386 460 397M420 465Q428 479 436 493M285 364Q277 384 266 403M305 324Q296 336 298 351M345 346Q339 361 337 377M379 337Q399 355 410 379M128 418Q124 429 120 441M347 312Q349 336 335 356M466 298Q461 317 471 333M311 353Q299 365 292 381M229 417Q210 431 188 439M353 434Q347 451 349 468M359 316Q367 333 363 352M361 421Q354 438 359 455M358 144Q375 137 391 145M241 409Q240 431 235 452M277 355Q257 377 271 403M167 454Q165 464 157 471M481 421Q492 435 506 448M299 443Q284 449 272 459M306 473Q311 496 298 515M266 301Q260 316 262 332M334 255Q333 266 329 277M283 468Q276 483 266 496M329 140Q321 148 311 153M363 247Q357 257 360 269M231 313Q238 330 236 349M395 315Q371 311 358 330M390 350Q397 378 384 403M322 373Q320 401 331 427M436 246Q439 271 451 294M258 289Q253 302 250 315M406 269Q410 287 411 305M270 375Q282 393 265 407M302 283Q285 302 272 323M332 432Q323 453 310 471M261 443Q246 461 233 480M470 372Q475 400 489 423M468 188Q475 217 505 218M205 377Q188 390 171 403M371 447Q372 469 380 490M107 397Q111 409 105 420M288 353Q289 370 274 379M254 445Q249 459 241 471M351 473Q356 500 348 525M181 474Q172 480 164 488M492 338Q500 360 518 376M459 316Q463 343 471 369M378 323Q370 338 358 351M260 512Q235 499 218 521M412 460Q410 473 419 483M432 396Q443 397 454 401M244 368Q251 386 240 401M458 390Q469 409 477 429M401 448Q385 465 384 489M466 430Q473 440 484 445M483 284Q480 306 486 327M326 462Q315 486 305 510M244 254Q259 270 266 290M239 446Q234 458 228 470M249 472Q239 485 240 502M248 401Q243 420 241 439M297 482Q298 503 298 523M494 419Q501 423 504 429M368 467Q367 482 368 497M285 317Q295 336 300 358M167 176Q153 200 137 221M499 414Q505 419 512 423M249 326Q268 341 256 362M423 404Q421 423 426 440M302 285Q298 297 296 310M313 257Q316 273 326 286M466 368Q470 383 484 389M299 290Q285 305 285 327M272 291Q277 305 279 319M235 406Q219 428 223 455M286 363Q282 381 273 397M359 287Q354 301 353 315M282 286Q281 300 292 309M110 400Q112 412 112 423M227 482Q227 496 226 509M202 331Q193 351 198 373M318 274Q312 297 307 321M367 269Q372 286 370 303M441 425Q457 445 465 469M259 400Q247 412 238 427M260 415Q250 433 251 453M388 272Q386 288 381 303M203 156Q181 155 164 169M264 424Q273 445 262 464M221 457Q209 463 204 475M183 477Q183 491 175 502M223 423Q219 442 214 460M492 220Q500 243 496 267M202 439Q192 448 193 461M201 421Q200 433 190 441M173 473Q171 479 165 482M429 465Q433 477 440 488M482 421Q494 424 502 433M217 492Q207 499 198 508M307 284Q299 304 290 324M457 190Q473 199 485 213M508 339Q512 356 527 366M359 221Q379 237 377 262M176 167Q166 191 141 195M479 369Q494 391 510 412M257 478Q241 489 223 493M350 356Q366 375 375 397M359 324Q326 321 317 353M405 265Q412 291 414 317M357 348Q354 362 343 371M258 317Q250 329 242 342M390 435Q384 459 368 479M463 200Q457 218 458 236M239 470Q229 491 206 493M228 481Q216 487 203 482M255 273Q241 294 221 311M247 273Q259 278 266 287M339 322Q342 348 346 375M461 182Q477 204 503 211M291 312Q304 329 299 350M317 297Q328 311 330 329M253 512Q257 520 255 528M372 334Q365 351 375 367M289 280Q292 300 286 320M252 290Q249 304 242 316M389 275Q383 292 378 309M291 408Q273 410 260 422M251 469Q247 486 236 499M303 256Q291 279 293 304M346 267Q344 281 337 293M379 411Q366 438 393 452M295 231Q297 245 305 257M319 373Q300 390 295 414M349 273Q347 294 330 306M97 330Q109 354 99 379M431 382Q422 397 429 413M101 372Q98 384 100 397M328 330Q331 350 318 364M328 317Q318 330 322 346M268 301Q258 309 253 321M373 366Q359 385 370 405M385 453Q387 472 389 491M429 353Q439 369 441 387M413 304Q422 327 416 352M409 278Q420 294 425 313M343 253Q341 264 341 276M362 463Q380 478 378 501M308 322Q315 342 312 362M412 326Q421 351 419 377M293 471Q296 488 284 502M240 354Q234 376 220 393M386 479Q387 504 376 527M335 414Q308 402 297 430M400 405Q414 428 417 454M493 370Q502 382 515 390M301 493Q296 506 296 520M165 464Q165 472 162 480M331 387Q327 405 314 420M441 291Q430 317 449 338M352 313Q372 327 374 350M258 313Q237 319 219 332M320 383Q330 403 322 423M510 251Q517 257 525 260M310 336Q296 353 303 373M462 367Q461 380 463 393M323 469Q321 486 312 502M313 514Q309 532 309 551M428 264Q436 274 445 283M250 413Q239 438 250 463M279 375Q274 387 263 394M263 300Q253 324 242 347M386 224Q392 244 399 264M276 309Q280 328 271 346M333 351Q331 365 329 379M184 168Q170 166 161 177M248 406Q239 432 217 449M321 336Q304 342 287 347M378 261Q404 264 412 288M316 301Q314 325 313 349M395 342Q391 360 396 377M395 384Q376 407 399 425M370 457Q375 477 386 495M296 409Q289 435 271 455M329 146Q345 147 348 162M361 256Q339 275 337 304M467 284Q480 305 476 330M248 395Q247 410 232 411M480 411Q480 425 490 436M313 245Q310 270 307 294M98 281Q92 284 88 288M302 387Q302 398 303 409M216 372Q185 384 191 417M250 482Q248 508 232 529M236 472Q220 482 203 487M414 382Q413 401 416 419M266 415Q252 433 245 456M279 313Q277 328 280 342M213 266Q208 277 211 289M326 350Q321 366 327 381M298 469Q294 494 279 515M480 422Q485 434 495 442M345 464Q354 492 333 513M251 500Q243 516 229 529M245 470Q243 484 240 498M495 405Q506 412 505 426M405 395Q401 407 403 420M96 291Q93 295 88 296M422 450Q434 463 442 480M332 334Q332 356 323 375M355 411Q353 431 354 451M339 357Q331 381 327 406M95 296Q92 300 88 301M438 287Q460 302 464 329M298 344Q277 354 290 373M347 301Q357 322 343 340M414 250Q420 267 413 283M516 282Q526 294 529 310M401 253Q391 276 386 301M119 429Q121 435 117 439M295 449Q282 466 270 484M297 492Q286 498 274 501M331 290Q304 299 287 322M253 471Q236 484 222 501M331 236Q322 249 325 265M521 366Q524 372 532 372M440 382Q452 386 457 398M277 505Q271 527 288 543M490 237Q504 260 519 282M146 190Q138 193 130 196M265 364Q258 383 240 390M412 402Q428 422 425 448M354 276Q351 288 350 300M235 491Q214 503 213 527M428 376Q415 393 405 411M456 408Q460 424 475 430M501 260Q515 260 522 271M438 264Q439 288 453 307M335 388Q321 405 330 426M255 433Q234 449 237 476M451 172Q462 185 469 199M313 254Q303 272 297 292M282 215Q269 229 272 248M491 234Q483 253 475 272M277 299Q274 322 272 345M460 386Q467 407 483 423M357 493Q349 509 355 526M361 324Q348 343 340 364M319 231Q323 244 329 257M96 298Q89 301 89 309M178 457Q161 454 145 462M203 408Q199 419 201 431M283 404Q264 417 250 436M247 500Q234 510 223 523M428 438Q441 457 462 465M365 285Q362 296 363 308M216 306Q214 324 208 340M294 451Q295 474 275 486M473 416Q488 430 499 448M384 307Q394 328 387 350M286 491Q294 516 290 543M437 451Q439 464 444 476M227 361Q215 366 208 376M451 300Q469 319 462 344M351 315Q367 329 357 348M240 420Q231 438 231 458M499 412Q508 418 519 420M318 382Q315 405 310 428M422 423Q436 435 450 445M391 346Q386 369 392 392M386 431Q413 446 406 477M303 357Q316 376 312 398M194 439Q205 453 200 470M390 257Q389 273 401 284M395 432Q391 455 397 478M294 501Q283 515 275 531M519 348Q502 365 497 389M234 464Q217 471 216 490M273 143Q273 157 269 171M235 501Q230 513 217 513M434 375Q429 396 428 417M136 441Q134 447 131 452M409 274Q397 297 409 321M259 258Q252 281 262 302M425 309Q419 319 412 329M344 470Q342 488 335 504M386 323Q387 345 373 362M460 415Q473 429 490 440M446 311Q450 333 464 351M330 328Q337 337 344 346M93 313Q89 318 84 323M446 321Q448 347 460 370M289 459Q294 474 289 489M241 511Q232 520 221 527M519 331Q525 333 530 338M381 253Q378 278 389 301M462 439Q462 453 472 462M261 292Q259 305 261 318M454 391Q462 404 462 419M441 427Q435 449 452 464M332 367Q331 379 327 391M251 148Q243 169 232 188M241 274Q243 289 234 301M349 461Q339 476 327 489M257 435Q247 454 255 473M359 327Q357 352 350 376M374 267Q376 286 388 299M325 366Q313 372 311 385M409 333Q402 344 409 355M434 369Q457 394 434 419M372 248Q380 262 390 274M422 316Q424 330 431 342M292 334Q284 353 279 373M151 456Q155 465 156 476M406 159Q418 166 424 179M387 370Q365 382 346 397M405 475Q414 484 416 498M276 266Q279 285 264 299M336 248Q335 273 334 299M458 379Q473 385 489 388M423 448Q440 466 465 473M468 365Q474 376 470 388M254 401Q244 407 241 420M388 310Q388 332 398 352M434 388Q441 411 435 435M402 236Q410 246 411 259M294 141Q293 169 268 184M240 264Q243 292 238 318M388 270Q408 282 425 298M253 349Q267 373 255 399M479 215Q490 233 502 251M259 358Q251 376 250 395M448 458Q451 469 452 480M368 363Q363 388 369 413M268 433Q243 440 228 461M350 282Q349 309 361 333M292 445Q288 456 290 468M222 263Q223 291 212 317M508 315Q514 332 518 350M476 403Q490 415 506 422M314 258Q296 272 296 295M280 406Q261 420 250 440M494 400Q509 414 512 434M261 505Q264 519 256 531M298 270Q298 286 298 301M503 319Q520 343 519 371M411 360Q411 374 415 389M355 443Q339 466 316 481M314 293Q318 305 314 317M388 150Q394 179 377 202M303 146Q294 169 281 190M243 362Q234 379 233 398M245 380Q239 391 227 393M261 478Q248 498 234 519M335 304Q329 319 319 332M337 325Q322 341 334 359M478 387Q491 405 485 427M368 300Q347 305 341 325M374 398Q378 410 388 418M245 142Q245 154 241 165M423 404Q433 420 436 438M337 142Q334 159 339 175M246 294Q260 319 253 347M358 293Q355 306 351 320M437 387Q449 412 469 431M325 339Q323 360 324 381M242 382Q227 386 216 397M303 336Q277 343 256 360M350 363Q338 386 325 409M407 291Q407 316 386 329M341 255Q345 281 359 302M487 369Q507 378 527 389M248 396Q246 423 244 451M270 329Q281 351 281 376M495 263Q509 266 514 280M347 284Q361 299 372 317M249 391Q233 410 234 435M214 497Q211 505 206 511M518 297Q523 317 518 338M428 340Q431 351 430 362M404 383Q388 409 407 433M292 416Q283 428 276 442M406 319Q394 336 396 356M259 267Q254 289 244 310M191 432Q179 453 184 477M338 396Q329 412 331 430M388 464Q406 479 393 498M408 483Q412 496 415 509M320 143Q332 151 343 160M414 330Q424 337 432 344M222 462Q190 462 176 491M404 397Q398 416 401 435M464 293Q473 313 475 335M488 236Q486 255 492 273M302 324Q290 343 287 365M415 480Q417 493 423 504M446 460Q460 466 468 479M289 379Q273 396 253 408M402 310Q402 335 393 359M338 231Q343 250 348 269M439 277Q458 286 477 297M369 421Q371 436 375 451M326 400Q322 413 319 426M231 474Q211 486 197 506M336 476Q336 498 336 521M295 455Q294 477 273 486M451 371Q457 393 464 414M465 359Q484 377 497 400M317 258Q321 274 312 289M367 276Q367 305 386 326M278 371Q263 393 264 419M291 485Q292 511 273 530M395 359Q382 382 394 406M397 274Q391 296 384 319M262 483Q255 503 234 505M97 313Q88 327 89 343M108 391Q107 398 100 400M493 360Q507 373 526 377M207 412Q211 437 212 462M349 308Q357 333 378 349M304 433Q301 454 281 464M417 440Q422 450 426 462M218 495Q212 505 203 513M274 230Q266 243 262 258M453 371Q461 387 466 403M333 426Q329 447 331 468M394 333Q385 344 389 358M143 440Q135 440 133 448M287 428Q284 444 278 459M349 426Q333 445 315 463M158 450Q158 462 153 472M206 449Q191 463 173 473M258 377Q275 391 286 409M406 252Q419 273 418 297M241 464Q227 481 211 495M328 364Q330 381 319 395M386 399Q400 421 403 447M285 397Q287 411 291 424M221 363Q218 384 219 405M390 359Q400 378 418 388M257 472Q236 471 222 486M157 465Q153 469 152 474M442 429Q447 441 443 454M243 500Q237 519 219 524M362 294Q349 312 344 334M305 139Q326 150 331 173M193 157Q183 171 169 181M373 286Q372 300 377 313M258 143Q250 164 248 187M408 478Q428 491 442 510M279 257Q273 266 269 277M176 181Q163 184 151 181M94 291Q94 298 88 303M414 216Q415 242 439 254M352 319Q358 330 358 342M460 424Q441 443 447 469M426 298Q442 319 455 343M293 489Q275 491 266 507M321 446Q319 473 308 497M371 350Q390 374 371 398M411 335Q414 348 407 361M252 302Q249 316 240 327M393 349Q407 375 386 395M319 475Q309 487 305 502M261 449Q238 466 243 495M420 368Q435 387 445 408M491 220Q517 229 515 257M203 480Q196 493 190 507M424 327Q440 340 458 349M439 352Q442 373 460 385M328 264Q308 282 296 306M446 414Q472 409 489 428M236 309Q233 322 239 334M225 294Q204 311 183 327M286 484Q277 492 275 504M209 396Q186 406 165 421M510 286Q525 296 533 312M303 265Q290 286 292 311M476 426Q484 435 488 447M180 475Q181 487 176 497M372 364Q349 381 354 410M439 299Q439 313 440 327M262 341Q266 352 266 364M514 264Q516 276 523 286M471 448Q475 459 474 470M200 485Q188 492 193 504M349 320Q345 343 336 364M352 440Q348 452 335 456M295 419Q286 441 279 465M358 430Q362 451 367 471M430 228Q425 257 442 281M301 313Q291 331 299 349M482 374Q497 384 503 401M368 415Q353 438 361 465M466 291Q470 312 477 333M306 446Q281 459 275 487M344 482Q347 501 337 518M389 215Q404 233 421 248M261 398Q256 424 255 450M274 457Q262 484 233 489M301 300Q292 319 294 339M517 274Q523 271 529 275M256 446Q237 443 223 457M214 477Q203 495 189 511M222 375Q226 395 214 412M299 456Q284 466 274 480M417 340Q407 365 430 380M437 428Q455 435 464 452M320 363Q314 382 300 396M361 339Q356 356 354 374M203 471Q193 480 183 489M493 229Q506 243 521 255M211 391Q191 404 171 415M94 300Q90 301 87 302M386 438Q390 450 396 461M382 403Q390 417 393 433M90 325Q99 344 108 363M260 474Q247 482 242 496M363 426Q368 450 347 459M411 296Q428 306 430 324M311 252Q307 272 293 287M375 420Q366 438 348 449M95 361Q93 364 90 367M244 244Q235 260 242 277M285 427Q279 440 284 454M283 363Q247 368 249 404M482 208Q494 226 513 235M373 304Q373 325 373 347M349 496Q347 512 341 526M410 304Q417 329 418 356M286 502Q255 496 247 527M225 410Q217 423 215 437M363 288Q381 311 364 336M419 394Q418 410 430 420M294 460Q288 472 282 482M489 213Q498 226 514 230M420 467Q409 491 414 517M401 483Q407 494 410 507M398 297Q388 314 389 335M235 357Q240 367 245 378M295 407Q285 428 276 451M325 149Q331 168 327 187M398 418Q408 427 409 440M238 324Q229 343 218 360M360 242Q361 260 356 277M397 382Q392 398 400 413M258 468Q247 486 231 500M319 396Q308 415 303 436M416 383Q399 401 393 425M377 337Q369 364 379 391M313 475Q294 493 280 515M493 361Q517 372 529 396M353 363Q344 379 350 396M218 493Q206 497 202 510M121 418Q112 423 112 434M367 359Q369 374 372 389M291 397Q284 406 279 417M501 375Q501 387 506 398M271 396Q273 409 276 422M399 363Q407 379 417 393M290 489Q272 502 255 515M379 327Q374 341 364 351M427 295Q443 305 448 324M418 334Q428 347 429 362M275 339Q266 350 274 361M371 357Q355 371 361 391M388 280Q397 291 404 303M240 297Q260 322 234 340M98 285Q95 294 85 299M463 185Q477 204 490 224M254 347Q264 361 251 371M344 338Q336 360 321 376M207 386Q208 404 197 419M428 399Q426 413 432 425M346 485Q341 498 342 511M289 251Q284 264 291 276M469 294Q474 308 473 324M336 332Q326 352 318 372M466 418Q441 430 431 456M499 231Q499 249 507 266M364 390Q369 417 357 442M501 387Q512 392 518 402M437 171Q457 185 454 210M340 247Q348 273 349 300M359 501Q367 512 366 525M381 439Q396 457 400 479M433 429Q425 448 441 460M332 318Q330 344 340 368M228 424Q213 435 197 446M279 149Q277 165 264 174M311 404Q299 415 301 430M257 344Q265 368 275 392M252 349Q259 368 257 388M423 391Q426 404 424 417M360 328Q374 349 373 374M462 358Q467 369 479 374M332 427Q323 446 330 466M446 393Q458 410 468 430M241 307Q257 312 260 329M439 415Q436 428 447 436M472 317Q490 318 501 333M410 313Q422 335 417 359M447 338Q465 352 481 368M169 480Q165 484 162 488M404 323Q381 338 388 364M429 427Q440 437 446 451M350 319Q366 333 373 353M368 431Q363 448 361 465M379 237Q379 256 390 271M249 264Q250 279 261 289M213 412Q206 430 205 449M382 302Q368 316 365 336M395 429Q386 443 387 460M355 453Q356 466 358 479M280 414Q276 441 263 463M303 307Q293 319 284 331M407 474Q413 489 422 501M347 330Q351 344 348 357M345 458Q336 472 328 486M347 504Q345 517 352 528M345 398Q337 420 339 443M312 235Q318 255 319 275M173 469Q171 481 170 494M401 321Q392 341 377 356M291 468Q282 477 274 486M266 354Q249 374 249 400M340 410Q328 429 333 451M460 450Q480 458 482 479M284 252Q257 262 244 287M241 442Q232 454 219 462M281 425Q278 439 269 449M441 426Q452 433 461 444M505 290Q507 315 527 331M473 398Q492 417 512 435M277 493Q257 514 250 541M481 415Q489 425 500 430M410 315Q405 330 408 345M448 332Q454 344 459 355M463 381Q464 401 471 421M332 308Q323 328 308 345M261 418Q256 431 243 438M326 257Q337 273 346 289M504 278Q515 293 530 303M254 354Q245 365 236 375M459 355Q478 366 500 368M419 370Q420 383 427 395M331 506Q326 518 326 531M259 482Q251 505 248 529M432 353Q440 369 439 387M128 207Q125 208 122 206M504 362Q490 375 489 393M384 353Q371 377 367 404M224 488Q215 501 219 516M292 363Q280 367 270 373M232 349Q214 361 214 382M443 411Q449 425 458 437M142 195Q137 201 129 200M376 350Q376 363 379 375M404 408Q394 426 382 442M343 248Q342 263 338 277M301 300Q310 323 310 348M459 412Q450 429 443 446M402 335Q390 360 404 385M143 200Q129 206 117 216M442 346Q443 361 450 375M489 398Q498 406 507 414M240 458Q233 478 245 495M347 349Q334 375 306 369M470 306Q497 318 505 346M313 380Q328 391 326 409M251 500Q239 513 236 530M330 429Q321 441 312 453M274 341Q253 361 259 390M371 273Q359 293 369 314M313 241Q307 263 309 286M503 332Q512 352 529 364M398 159Q423 167 450 173M276 425Q268 439 258 452M299 382Q290 403 285 425M347 296Q350 309 352 322M504 404Q515 408 525 413M206 434Q199 453 180 461M296 380Q297 394 296 409M501 403Q511 412 509 425M406 477Q394 503 398 531M229 488Q208 490 191 503M242 393Q225 399 212 411M317 406Q317 424 304 438M319 245Q306 262 293 280M346 142Q348 157 359 167M278 401Q267 412 260 425M243 357Q232 382 224 407M211 501Q202 513 187 511M460 448Q458 465 465 481M468 311Q481 309 489 320M477 425Q482 444 495 458M519 343Q523 350 530 353M385 324Q371 347 376 373M373 310Q367 325 364 342M466 421Q456 446 467 471M289 280Q291 300 304 316M389 344Q389 357 393 368M290 371Q292 384 289 396M324 227Q320 244 307 256M302 416Q291 427 278 435M93 356Q101 371 99 387M373 468Q363 479 351 483M385 295Q369 314 361 338M258 403Q247 419 246 439M134 442Q134 448 132 454M385 317Q382 337 382 358M476 411Q481 426 496 428M280 329Q278 342 267 349M297 463Q289 473 290 486M435 304Q441 323 455 337M357 471Q348 492 349 515M508 244Q516 246 523 248M98 376Q100 388 107 399M246 478Q239 489 231 499M375 355Q373 373 384 386M404 327Q417 329 421 342M177 171Q167 190 148 202M353 308Q354 324 361 339M374 462Q382 482 389 502M443 471Q449 482 458 491M182 434Q167 456 156 479M437 402Q439 428 430 453M313 261Q318 273 319 287M516 344Q523 351 530 357M404 380Q409 395 415 409M356 221Q357 241 351 261M415 246Q416 257 417 268M466 448Q479 450 490 459M391 321Q398 333 401 346M409 238Q415 254 432 261M254 298Q242 306 234 318M370 317Q377 343 361 364M259 140Q240 155 216 158M398 401Q399 423 399 444M330 239Q312 253 310 276M468 362Q484 375 504 383M277 259Q270 276 274 293M300 411Q293 426 280 436M367 391Q376 411 387 430M373 279Q375 301 365 321M218 449Q208 473 199 498M517 305Q520 319 531 328M505 304Q504 315 507 326M427 399Q426 411 421 421M409 415Q412 427 418 437M207 433Q203 445 193 452M393 264Q390 282 394 300M347 497Q338 510 337 526M443 344Q439 359 439 374M361 466Q354 483 352 501M241 478Q223 498 201 513M242 472Q222 475 208 489M325 403Q329 418 320 430M239 469Q227 481 213 491M496 243Q503 259 510 275M294 280Q305 301 297 324M440 323Q434 352 461 363M335 292Q340 316 349 338M394 294Q395 323 418 342M156 191Q143 192 133 202M399 328Q392 346 377 358M276 265Q254 278 237 297M284 149Q279 161 276 174M343 481Q331 484 321 492M381 355Q365 369 355 389M318 346Q320 366 315 386M279 359Q277 374 266 384M397 299Q379 312 366 329M324 326Q318 346 300 357M367 474Q370 488 369 502M518 345Q527 355 534 367M389 456Q394 482 404 507M515 323Q517 349 536 366M411 341Q417 352 426 359M288 452Q268 465 244 462M433 326Q434 347 444 366M259 390Q240 401 226 418M364 474Q358 487 364 499M295 261Q284 268 275 278M135 440Q143 453 136 467M274 416Q256 434 257 460M113 399Q109 406 103 410M347 144Q345 162 345 180M255 502Q242 505 233 516M213 151Q195 169 175 184M295 251Q289 266 290 283M358 310Q340 330 335 356M215 483Q203 489 205 503M364 422Q363 437 371 451M250 356Q258 373 260 392M441 427Q430 442 433 460M497 230Q501 255 516 274M371 159Q385 166 394 179M469 203Q478 223 498 234M260 301Q255 332 282 349M278 377Q266 397 246 406M457 255Q445 278 443 304M415 416Q429 440 435 467M219 496Q208 498 197 501M293 342Q266 352 260 379M502 409Q506 417 510 426M399 290Q418 291 434 302M453 454Q463 472 461 493M416 453Q417 471 430 485M417 321Q434 339 443 363M205 394Q198 417 196 440M374 390Q354 401 366 422M472 442Q474 454 479 465M380 416Q373 430 384 441M388 423Q390 444 399 465M250 493Q228 498 213 515M499 399Q509 401 514 409M440 448Q432 459 424 470M267 392Q264 405 256 414M379 386Q359 405 369 431M242 483Q233 497 231 514M415 314Q428 323 418 336M410 249Q405 261 399 272M403 449Q412 469 398 486M262 392Q249 399 236 406M291 426Q301 452 293 479M405 413Q402 435 415 453M313 392Q302 407 289 422M248 499Q235 503 226 513M401 468Q410 486 418 505M403 239Q399 254 408 266M487 436Q494 446 504 452M398 336Q409 348 416 364M297 471Q289 495 264 498M423 310Q421 326 415 340M371 154Q367 168 360 179M432 385Q429 396 430 408M224 152Q213 163 200 170M428 436Q447 454 427 472M312 322Q314 334 308 344M263 281Q242 293 247 316M357 450Q327 465 339 498M200 439Q186 448 176 461M304 284Q302 313 319 336M358 284Q345 296 344 313M241 494Q245 506 244 520M196 416Q196 432 184 442M354 387Q340 411 339 439M319 246Q321 273 298 286M371 355Q355 372 335 386M399 268Q407 286 400 305M152 460Q151 467 147 471M458 327Q460 349 462 371M464 315Q462 334 467 352M498 402Q485 426 478 452M432 377Q421 391 430 406M320 335Q298 350 281 371M204 306Q207 330 192 348M310 405Q302 423 287 437M343 385Q338 411 338 436M457 273Q454 288 457 302M355 317Q353 343 351 369M247 328Q235 354 207 360M263 494Q265 512 254 528M376 462Q378 475 368 483M238 397Q222 412 219 434M513 318Q522 321 526 330M298 474Q290 500 273 520M263 264Q271 290 257 314M382 300Q386 318 370 327M303 323Q297 334 299 347M216 309Q222 325 216 340M284 511Q258 512 235 523M465 368Q461 384 470 397M269 424Q245 437 223 452M417 265Q421 289 426 314M262 339Q261 362 253 382M410 282Q417 298 416 315M354 269Q352 293 334 310M96 295Q89 312 82 328M436 358Q454 376 453 400M394 431Q396 443 404 452M243 451Q223 466 222 492M299 302Q301 314 304 325M266 431Q263 455 253 476M347 238Q356 248 355 262M248 455Q235 478 212 489M233 309Q239 327 225 341M332 373Q334 389 329 404M135 422Q132 430 125 431M444 304Q435 328 439 353M254 423Q247 442 234 457M254 348Q244 373 223 391M359 401Q358 416 361 430M99 260Q96 266 92 271M244 469Q223 478 199 480M300 458Q303 473 293 484M383 201Q393 212 404 222M384 319Q366 333 370 354M506 402Q500 423 502 445M287 405Q283 416 282 428M403 250Q408 263 415 275M419 420Q413 443 419 466M208 423Q209 445 196 463M502 243Q503 269 516 291M489 413Q499 427 503 443M259 410Q252 431 262 451M413 377Q404 390 400 405M357 245Q369 255 382 265M374 323Q368 333 356 335M313 136Q304 148 304 162M500 414Q510 417 513 427M491 413Q501 427 514 439M329 477Q327 499 316 520M422 163Q436 177 454 182M501 386Q516 386 526 398M407 475Q411 488 413 502M275 474Q279 485 280 496M366 311Q352 334 332 350M211 149Q208 149 205 147M253 491Q242 501 231 512M402 329Q402 343 400 356M222 357Q222 372 220 386M520 375Q523 380 527 385M185 398Q180 409 175 419M283 374Q274 395 272 418M138 202Q127 207 119 216M364 472Q368 499 360 525M278 456Q281 470 275 483M317 394Q305 409 286 412M204 334Q182 340 176 362M421 369Q412 391 407 415M244 473Q236 483 223 484M447 316Q440 329 432 342M475 416Q480 435 492 451M455 186Q463 204 481 213M102 266Q97 279 95 293M520 330Q528 335 534 342M346 367Q349 393 341 418M449 183Q463 190 467 204M451 332Q454 347 461 361M283 300Q274 319 258 331M246 459Q230 461 230 477M509 400Q513 404 519 404M441 308Q441 332 449 355M170 169Q156 174 144 183M334 506Q336 520 335 534M319 450Q309 465 298 479M161 180Q147 197 125 201M154 186Q144 191 134 194M395 226Q392 237 387 247M382 262Q379 279 388 294M402 336Q394 359 386 381M404 326Q396 346 413 361M254 148Q231 160 214 179M286 462Q274 484 264 505M232 276Q226 290 219 303M381 393Q378 408 380 423M337 452Q342 477 335 502M465 309Q474 321 473 335M204 378Q186 392 179 413M404 418Q390 436 373 453M407 422Q406 444 413 464M486 421Q493 428 502 434M416 472Q425 486 434 500M380 486Q376 499 372 512M261 478Q257 493 246 503M409 303Q419 323 405 340M397 243Q406 256 395 266M370 340Q368 355 372 371M444 309Q434 336 452 359M108 241Q103 241 101 245M518 302Q525 316 530 330M94 279Q89 283 88 289M355 397Q346 410 342 426M511 392Q510 402 519 407M263 436Q258 448 248 456M354 228Q361 239 371 248M275 483Q266 497 258 512M256 506Q244 508 240 521M415 407Q424 424 421 443M219 489Q212 499 202 506M430 385Q429 397 430 408M206 327Q201 348 192 367M459 400Q466 413 471 429M451 460Q452 475 462 485M406 372Q397 388 406 404M256 506Q254 517 252 529M315 320Q299 333 284 346M416 282Q423 291 427 303M213 339Q211 361 211 383M141 453Q137 455 134 458M126 436Q125 440 123 443M199 479Q187 482 179 493M307 442Q284 460 282 488M198 457Q204 481 214 504M280 503Q267 509 263 522M292 366Q290 383 284 399M297 226Q293 247 297 268M389 253Q391 275 408 291M275 137Q266 150 252 159M510 386Q515 397 516 409M184 481Q188 494 180 506M301 246Q304 263 298 279M375 230Q382 244 383 260M403 429Q409 438 412 449M222 478Q219 502 197 513M251 489Q231 500 217 519M302 408Q282 421 275 444M485 212Q490 224 498 234M264 467Q260 486 253 504M225 405Q204 417 196 440M512 361Q522 361 531 367M123 232Q115 244 102 249M392 274Q403 293 395 315M184 474Q169 472 156 479M274 292Q278 320 267 345M281 270Q282 289 274 307M248 487Q234 511 206 514M518 346Q524 352 531 357M266 411Q257 420 257 433M217 484Q216 495 212 505M351 271Q354 284 356 298M236 476Q230 488 223 499M407 359Q398 374 403 391M500 245Q510 264 511 286M352 288Q358 300 363 311M419 408Q419 428 436 440M374 366Q364 374 353 380M322 469Q329 491 320 511M268 302Q266 320 269 338M245 248Q231 267 221 289M439 322Q444 345 446 370M391 414Q394 438 400 462M411 347Q417 363 425 378M382 422Q372 445 360 467M335 459Q319 466 317 483M279 468Q272 483 257 491M389 440Q377 459 358 471M291 458Q289 470 281 480M368 277Q364 291 373 303M432 420Q435 438 438 456M235 434Q227 445 214 449M349 387Q347 411 353 435M311 508Q299 516 296 530M301 404Q294 419 288 434M347 295Q354 322 356 349M238 412Q232 425 223 437M380 299Q358 305 357 328M119 240Q113 249 102 252M189 478Q195 491 188 504M247 259Q237 285 234 311M98 378Q106 405 122 427M266 352Q263 373 253 392M377 301Q357 315 346 337M150 203Q138 213 132 227M287 374Q274 382 258 382M453 331Q474 347 490 367M415 414Q420 434 420 455M397 330Q396 345 398 360M387 326Q385 342 393 356M249 448Q247 462 244 475M381 476Q388 496 396 514M472 389Q499 393 522 407M362 248Q377 271 399 286M419 440Q438 455 454 474M226 484Q212 502 207 524M445 472Q452 482 462 489M381 474Q372 483 374 495M313 451Q319 463 316 477M373 331Q377 352 375 374M311 423Q293 443 272 461M511 290Q522 297 529 309M333 397Q324 406 317 416M326 494Q336 512 336 534M201 480Q188 487 179 500M481 354Q488 376 503 393M364 142Q367 169 373 196M279 321Q268 337 266 356M330 284Q320 298 316 314M379 315Q374 332 370 350M423 424Q423 436 431 445M237 409Q225 433 228 460M231 360Q227 372 218 381M95 334Q97 348 103 361M467 378Q463 405 441 421M328 257Q325 284 340 307M427 444Q441 466 459 486M283 363Q287 375 281 385M395 339Q387 352 372 358M395 432Q393 451 399 469M425 390Q416 409 422 430M218 391Q234 407 233 430M366 350Q365 366 370 380M312 506Q306 518 299 528M370 446Q364 459 355 471M396 324Q403 351 393 377M286 444Q282 455 276 466M234 306Q236 330 239 353M211 490Q208 502 201 512M401 159Q415 180 416 204M325 378Q317 397 308 414M217 360Q188 364 176 391M414 314Q425 333 424 356M475 420Q492 435 495 457M431 457Q460 457 460 486M323 331Q322 345 322 359M332 331Q325 349 310 360M98 289Q100 315 83 334M455 273Q453 294 469 308M226 156Q218 164 209 170M250 156Q241 170 232 185M334 331Q320 351 299 363M217 158Q200 161 187 172M99 326Q96 331 90 333M300 453Q287 470 275 488M350 469Q360 487 356 506M232 452Q223 464 209 467M467 443Q461 469 473 491M365 420Q356 430 346 438M374 275Q372 293 385 306M465 454Q468 464 469 475M291 381Q295 403 273 411M303 434Q294 446 280 451M95 300Q84 315 82 333M282 316Q248 325 251 360M368 476Q370 499 388 514M396 361Q386 379 379 398M350 290Q366 303 365 324M507 260Q513 268 523 271M388 373Q398 397 381 418M277 267Q285 288 278 309M159 182Q142 190 127 201M273 480Q268 495 267 512M276 380Q262 402 279 420M299 322Q311 344 310 369M377 382Q391 398 385 418M254 404Q239 420 221 432M412 274Q410 294 420 312M245 247Q224 263 226 290M395 392Q391 408 399 422M463 187Q474 210 497 221M216 346Q198 357 188 376M392 393Q376 413 365 436M382 394Q390 419 404 442M402 284Q395 297 395 312M423 230Q415 253 421 276M232 313Q214 318 210 337M276 482Q256 489 249 508M237 293Q237 321 242 348M283 458Q276 472 287 483M448 445Q461 466 467 489M519 307Q521 314 528 315M98 372Q110 380 108 394M244 276Q238 292 227 303M386 366Q382 379 374 389M307 448Q312 467 300 483M232 493Q229 512 229 531M100 375Q94 374 90 378M413 438Q416 455 424 470M438 167Q457 184 478 199M345 488Q355 501 352 518M287 436Q266 437 261 457M404 377Q403 401 399 424M386 340Q385 366 389 393M372 446Q377 463 393 471M281 350Q281 361 279 373M328 289Q333 304 338 319M301 456Q293 473 274 472M253 288Q258 313 257 339M268 397Q250 414 252 439M494 384Q497 398 500 412M418 470Q421 486 433 498M333 493Q338 510 328 525M322 145Q332 171 353 189M253 338Q247 364 230 383M296 408Q284 427 277 449M353 292Q349 302 344 313M421 226Q426 242 429 259M399 312Q412 335 438 343M433 346Q419 363 421 385M106 386Q103 391 102 397M420 308Q430 329 428 352M455 458Q459 473 467 487M314 480Q320 498 325 517M350 306Q336 319 349 333M445 300Q457 318 445 336M375 253Q380 280 391 305M259 373Q257 393 238 396M415 344Q399 363 396 388M441 450Q453 458 464 466M302 452Q308 462 312 474M422 339Q399 359 408 389M162 473Q156 478 154 484M416 368Q431 380 432 399M178 484Q174 491 175 499M296 281Q305 297 307 316M465 189Q477 197 490 204M383 280Q391 302 410 315M407 313Q406 339 417 362M305 422Q303 434 310 444M510 279Q518 288 530 291M470 211Q464 225 469 239M342 396Q332 416 317 432M317 429Q299 438 283 449M305 384Q281 393 269 417M453 302Q462 309 469 318M471 374Q465 386 469 398M304 371Q291 394 285 420M466 344Q454 366 453 391M375 270Q376 296 366 319M259 438Q260 458 256 477M477 211Q489 219 491 233M427 301Q433 312 430 325M199 486Q189 494 180 503M296 430Q278 442 275 463M463 337Q468 360 491 369M426 309Q439 323 438 341M233 492Q229 504 217 509M488 423Q494 435 506 441M284 508Q270 515 261 528M264 476Q250 494 233 510M210 430Q193 444 188 466M498 226Q501 242 511 254M425 415Q425 427 421 437M357 253Q353 265 352 277M434 370Q442 385 452 400M194 380Q194 398 183 412M342 307Q329 311 322 323M405 267Q395 280 391 296M291 438Q280 447 277 460M323 210Q336 235 327 262M364 310Q367 335 355 357M351 391Q339 417 317 433M107 250Q102 252 99 255M274 419Q244 423 238 452M226 322Q215 340 211 361M364 298Q365 318 361 339M519 321Q529 326 533 336M425 397Q427 413 424 430M157 463Q155 468 153 473M477 199Q481 214 495 223M336 334Q331 348 333 363M273 141Q258 143 243 149M435 317Q436 345 423 369M265 413Q252 430 244 448M442 394Q443 411 439 428M468 391Q485 399 477 416M503 397Q508 405 516 402M242 303Q248 328 236 351M428 342Q434 359 436 376M474 400Q495 405 514 413M263 408Q265 427 250 438M249 506Q243 520 249 533M118 222Q114 225 109 226M351 385Q345 411 336 436M448 259Q415 271 426 304M407 162Q421 178 443 180M397 312Q388 326 387 344M281 266Q294 288 300 314M477 309Q496 324 501 348M398 261Q398 274 393 286M125 219Q122 240 114 259M344 326Q339 343 341 361M517 281Q518 306 536 322M313 319Q287 349 321 370M104 384Q100 391 98 399M299 327Q286 338 274 350M313 231Q329 247 337 268M225 478Q228 493 218 505M400 320Q400 344 381 360M441 426Q448 446 459 463M340 479Q320 493 299 505M257 255Q253 271 255 287M342 503Q339 518 343 534M384 357Q374 361 362 363M247 423Q262 444 245 463M321 250Q337 263 343 282M244 489Q241 505 239 521M313 286Q313 299 312 311M238 494Q236 508 240 522M393 253Q393 269 397 285M297 290Q312 305 298 320M286 329Q278 349 287 369M480 204Q483 216 493 223M420 371Q430 392 442 412M216 467Q209 496 228 519M485 372Q500 380 502 397M463 390Q478 415 469 443M355 264Q342 270 337 284M415 278Q423 304 411 330M193 464Q181 486 193 508M374 274Q383 300 363 319M432 413Q442 434 450 456M219 421Q210 430 205 442M451 345Q454 369 450 392M322 475Q320 490 315 505M379 322Q375 340 369 359M267 288Q262 313 251 337M450 392Q455 415 471 432M292 484Q286 496 277 506M443 380Q446 405 459 428M312 407Q304 433 324 452M216 365Q206 389 190 409M225 493Q223 503 214 508M401 433Q414 458 411 486M237 403Q233 415 225 425M435 391Q447 404 463 413M100 313Q98 326 93 337M269 454Q263 474 262 494M337 284Q340 299 336 314M421 316Q419 338 398 347M474 275Q473 300 464 323M162 454Q157 463 152 472M114 420Q122 429 115 438M474 258Q479 269 485 279M193 167Q187 179 182 191M504 390Q511 391 518 391M179 344Q179 367 182 390M249 140Q234 153 217 162M436 477Q446 486 454 497M368 347Q378 370 392 390M316 270Q337 285 349 309M167 472Q164 483 162 494M409 212Q416 241 443 253M317 391Q321 405 319 419M224 445Q202 455 195 478M515 392Q518 398 522 403M355 321Q351 339 343 357M416 260Q420 274 417 287M275 308Q264 319 262 334M417 398Q427 421 435 445M346 331Q345 344 345 357M400 406Q401 418 403 430M254 398Q244 404 232 409M408 336Q406 364 392 388M350 383Q342 395 334 407M242 471Q223 481 213 499M435 279Q430 294 435 309M380 285Q392 303 383 324M202 156Q188 175 166 184M391 209Q406 224 412 243M453 359Q469 372 474 392M355 333Q361 344 357 356M508 350Q500 364 506 379M445 403Q456 427 473 448M325 285Q338 296 337 314M251 322Q242 341 237 361M242 392Q223 409 232 434M295 287Q274 284 258 299M352 391Q354 406 361 420M307 318Q291 342 299 371M423 300Q419 317 421 336M218 404Q225 413 230 423M454 426Q471 445 496 453M431 342Q439 364 460 374M305 330Q298 347 297 364M188 492Q186 496 181 499M281 142Q262 149 243 158M365 297Q363 325 338 337M408 280Q418 291 417 306M355 481Q359 497 351 510M327 393Q311 416 311 445M376 370Q370 392 376 414M354 271Q356 293 363 313M223 420Q199 433 185 456M281 462Q270 484 249 497M379 449Q382 472 376 494M234 314Q226 328 222 343M207 332Q211 358 207 384M387 448Q377 461 374 477M341 247Q336 267 333 287M405 373Q402 389 401 406M492 395Q499 405 511 408M486 215Q492 225 503 228M277 474Q260 490 236 490M359 342Q355 357 361 372M293 419Q287 437 300 451M355 253Q355 279 346 304M488 427Q498 427 508 429M368 304Q359 314 361 328M416 398Q418 409 421 421M414 426Q404 454 423 477M316 484Q327 496 327 513M366 268Q372 282 371 297M305 346Q308 365 302 383M359 453Q348 478 332 500M437 299Q429 319 432 339M293 419Q271 438 268 467M271 496Q283 516 295 537M256 370Q254 389 249 407M388 211Q378 223 382 238M247 261Q242 279 237 298M289 426Q291 456 266 473M506 401Q510 406 516 409M100 388Q95 391 94 397M307 383Q285 393 281 417M334 255Q316 271 329 292M290 233Q288 248 278 261M133 431Q145 445 160 455M332 299Q339 316 344 333M479 404Q490 417 497 434M365 325Q362 336 355 346M442 326Q462 342 482 358M407 157Q420 163 433 167M191 168Q168 170 147 180M227 345Q221 359 221 375M206 354Q192 371 193 393M240 413Q228 428 218 444M304 275Q309 300 307 324M447 180Q457 190 463 202M361 285Q366 307 361 328M233 438Q242 461 241 484M242 417Q230 432 219 448M226 319Q211 338 215 361M374 305Q355 317 352 339M373 459Q335 468 345 506M301 463Q285 476 275 494M359 276Q358 299 359 322M378 470Q392 485 391 506M257 346Q244 350 236 361M269 380Q286 400 296 423M463 346Q462 361 458 375M276 141Q281 156 274 169M421 159Q435 181 448 204M470 439Q478 454 474 470M354 261Q346 278 345 296M355 273Q357 293 340 302M370 207Q368 222 379 233M286 292Q272 315 274 341M258 141Q242 144 231 157M307 343Q295 361 278 375M302 384Q280 393 263 409M416 327Q409 341 407 356M306 255Q306 267 310 278M347 386Q354 402 344 416M288 332Q274 349 268 370M402 266Q398 278 404 290M249 311Q241 325 239 340M443 431Q448 448 453 465M235 489Q237 505 231 519M402 391Q398 411 410 427M292 466Q286 480 285 496M385 365Q400 388 395 414M219 309Q234 332 238 359M307 378Q324 403 298 420M345 403Q345 422 351 441M349 256Q354 278 364 297M410 315Q415 333 432 342M238 385Q228 404 217 424M458 442Q453 465 450 488M102 270Q97 273 91 273M104 276Q98 299 109 319M315 391Q307 409 294 423M230 490Q211 500 216 521M418 378Q425 396 445 401M362 310Q352 335 348 361M420 303Q417 332 437 353M284 246Q297 264 292 285M447 414Q447 429 456 441M411 378Q415 400 411 421M464 393Q462 415 477 433M362 461Q355 470 347 477M468 444Q479 448 489 454M297 232Q308 253 309 277M468 329Q477 335 484 344M283 413Q269 435 266 461M414 436Q413 461 414 486M384 336Q392 349 383 362M161 184Q152 185 144 188M364 471Q361 500 378 524M245 381Q234 394 234 412M363 397Q377 417 372 442M126 419Q119 425 121 434M268 274Q260 288 261 304M307 396Q309 422 304 448M395 301Q400 320 389 337M416 324Q426 350 419 377M478 279Q491 304 513 320M266 401Q251 407 240 419M275 214Q255 230 247 254M243 395Q227 408 220 427M297 461Q280 478 280 502M244 468Q230 485 221 506M346 312Q352 340 338 365M293 451Q284 465 273 476M288 451Q282 469 268 483M277 421Q268 435 256 447M316 139Q299 154 283 172M301 361Q286 365 288 381M380 279Q382 305 382 331M313 283Q331 303 330 329M430 434Q441 452 451 471M375 377Q369 394 383 405M226 472Q213 474 205 485M514 387Q520 388 525 390M141 196Q123 204 112 221M450 335Q455 347 455 360M429 402Q440 414 447 428M458 434Q474 449 477 470M95 317Q90 322 87 328M429 486Q436 500 451 503M405 451Q394 458 393 471M308 350Q310 361 309 372M223 485Q221 499 213 510M214 345Q191 362 194 391M419 300Q445 301 453 326M307 365Q282 358 272 382M313 405Q294 417 299 438M289 434Q281 442 274 451M362 372Q355 390 342 404M256 145Q232 144 208 144M191 486Q187 497 177 504M171 430Q169 447 164 464M162 453Q154 463 152 475M465 344Q468 360 473 376M127 416Q120 425 124 437M211 346Q189 368 200 396M281 458Q276 475 269 491M344 246Q337 257 332 269M309 387Q302 412 322 429M407 382Q410 396 417 409M235 316Q237 346 214 366M415 329Q409 357 425 381M291 471Q285 483 280 496M209 458Q214 486 202 512M439 173Q450 182 460 190M393 393Q392 411 387 429M317 301Q318 327 309 352M490 229Q496 260 526 265M169 444Q159 459 144 468M254 360Q261 385 248 407M311 447Q297 468 286 489M403 397Q425 417 421 448M350 144Q368 167 363 196M343 372Q346 384 342 396M256 453Q239 468 231 489M207 362Q226 386 217 415M330 141Q331 155 340 165M305 452Q290 472 275 492M444 169Q464 180 471 201M201 479Q201 490 192 497M455 370Q454 394 456 417M428 355Q409 368 398 388M302 141Q301 156 306 169M311 242Q310 264 315 286M349 442Q340 451 333 462M129 218Q117 233 113 252M495 232Q501 251 520 259M490 403Q495 413 505 417M245 474Q238 485 231 496M298 440Q294 456 293 472M196 158Q187 167 176 172M338 493Q335 512 336 531M412 380Q408 395 416 408M363 291Q363 320 382 342M397 399Q394 427 378 450M161 469Q155 478 159 488M244 457Q221 474 230 502M403 273Q408 297 410 321M286 393Q284 411 280 428M168 476Q162 480 157 483M408 397Q429 411 447 430M249 449Q233 471 218 493M354 441Q340 461 326 480M240 398Q246 421 239 443M339 146Q351 152 362 159M126 435Q133 450 144 463M418 486Q418 497 421 507M223 360Q232 383 218 403M443 355Q448 380 438 402M148 449Q145 467 156 482M491 216Q499 219 505 225M209 437Q201 463 182 484M221 391Q204 395 199 412M257 468Q255 484 244 496M420 313Q426 329 417 344M259 400Q261 414 249 422M299 465Q289 481 278 496M508 375Q518 380 527 388M453 435Q465 447 461 463M95 312Q92 317 88 321M339 225Q348 249 339 273M391 322Q391 335 383 346M490 423Q500 433 512 439M245 457Q240 470 242 483M415 294Q409 311 401 327M176 475Q176 488 168 498M255 457Q249 467 249 479M342 417Q336 435 340 454M348 347Q342 362 343 378M458 462Q475 464 473 481M209 432Q189 448 164 456M320 269Q326 292 316 314M250 426Q245 449 237 472M342 421Q330 435 323 450M357 254Q359 266 355 277M352 370Q352 387 357 403M193 285Q185 294 179 305M297 486Q283 498 277 515M198 482Q201 502 207 521M506 240Q511 256 512 272M469 451Q469 464 468 476M105 402Q103 407 100 411M250 480Q240 489 230 500M371 356Q356 377 356 403M259 431Q255 442 254 453M270 392Q247 415 259 445M255 465Q249 481 243 498M500 385Q505 397 517 404M234 419Q223 432 207 439M219 361Q212 375 199 384M378 291Q393 313 402 338M326 461Q330 478 334 495M223 408Q217 424 212 439M340 316Q337 333 347 348M349 338Q358 349 356 363M433 482Q449 489 463 499M232 440Q230 465 209 479M511 397Q516 404 517 413M437 250Q435 262 436 274M392 366Q392 394 412 413M410 373Q410 388 417 400M326 463Q322 490 332 514M479 346Q476 362 478 378M349 267Q342 276 337 286M445 344Q454 363 453 383M344 478Q333 496 327 516M509 280Q524 303 519 330M385 437Q408 454 421 479M337 316Q322 323 313 338M293 509Q284 519 276 530M228 401Q220 428 193 433M476 429Q490 440 507 445M231 157Q239 185 218 205M489 225Q500 236 511 247M262 491Q258 504 258 518M316 399Q305 421 296 445M288 484Q273 497 268 516M439 375Q453 392 459 414M385 439Q371 449 361 463M276 282Q275 297 266 310M358 303Q345 328 362 351M418 348Q415 361 413 374M330 243Q327 266 319 288M282 361Q279 380 268 397M402 379Q412 404 405 430M235 475Q228 492 213 501M490 429Q498 435 505 442M136 450Q132 456 131 463M393 338Q403 355 398 374M460 331Q466 352 466 375M333 360Q344 377 348 397M253 453Q254 469 243 480M463 192Q470 201 474 212M263 412Q239 426 214 416M234 355Q226 378 218 401M383 213Q400 233 415 254M498 364Q512 380 519 400M154 450Q148 454 142 458M414 213Q418 226 431 230M401 291Q403 309 405 327M243 276Q242 300 247 324M423 278Q429 297 422 315M390 303Q398 322 404 342M367 350Q372 371 379 391M358 396Q358 420 372 439M327 388Q328 403 332 418M275 310Q278 332 263 348M450 242Q496 247 477 289M456 379Q469 398 461 420M501 291Q515 305 528 319M354 328Q342 350 350 373M259 336Q239 353 239 379M246 437Q256 455 249 474M436 417Q438 442 452 463M467 205Q470 230 494 242M239 340Q214 351 196 373M356 312Q355 330 357 348M371 454Q366 476 380 494M148 446Q143 458 149 469M258 387Q246 406 231 422M168 468Q172 479 174 490M422 390Q443 403 462 419M510 289Q525 313 538 337M254 281Q245 299 251 317M421 167Q410 185 412 205M396 435Q385 447 381 462M522 326Q523 341 524 356M315 434Q302 446 298 464M257 437Q241 445 228 456M333 219Q326 242 319 266M217 294Q205 317 200 343M437 415Q454 436 470 456M368 335Q361 363 377 387M283 472Q270 496 264 521M123 426Q121 432 117 437M199 163Q184 176 166 187M233 292Q230 304 229 316M310 137Q311 150 310 164M378 469Q368 486 356 502M504 347Q509 361 523 364M510 311Q519 329 536 339M267 421Q253 428 244 439M314 466Q323 486 313 506M430 385Q442 407 432 429M281 305Q269 326 272 350M387 417Q393 435 395 453M260 471Q245 490 233 512M310 504Q291 509 283 528M473 444Q486 444 499 448M231 440Q231 457 214 461M258 351Q255 375 236 389M313 233Q312 246 309 259M461 379Q476 387 486 401M399 449Q399 470 406 489M397 281Q402 293 409 303M285 400Q280 425 268 447M208 408Q201 425 195 443M367 147Q379 177 412 179M416 247Q435 275 414 301M355 304Q343 316 344 332M331 290Q322 313 313 335M326 430Q305 424 291 440M326 331Q320 344 323 358M259 423Q252 433 252 445M415 321Q418 346 430 368M368 453Q369 474 375 494M344 378Q345 393 332 400M265 422Q263 435 251 443M355 195Q362 219 351 240M408 239Q413 260 410 282M100 372Q94 384 95 397M429 469Q440 474 447 483M304 374Q297 384 291 396M391 304Q393 318 397 332M410 285Q419 305 428 324M221 439Q201 448 183 461M153 455Q148 464 141 472M224 470Q213 478 201 483M220 426Q229 453 204 465M328 456Q327 470 317 481M180 174Q151 177 139 204M326 314Q317 344 341 365M371 259Q388 273 410 278M175 473Q166 478 157 483M327 253Q341 263 342 280M420 327Q399 350 411 379M292 353Q286 378 290 405M364 347Q361 374 356 400M447 361Q450 373 448 385M469 287Q480 291 485 302M465 388Q482 406 504 415M231 489Q214 511 186 512M498 271Q516 280 514 300M256 430Q249 441 241 451M457 176Q451 194 460 209M403 238Q393 247 393 260M200 396Q197 408 187 417M339 479Q335 494 335 509M331 337Q327 361 323 386M363 338Q368 349 361 360M169 459Q166 468 158 473M396 290Q384 315 402 336M263 297Q270 314 266 332M153 189Q147 188 142 191M402 425Q398 442 391 457M478 194Q481 195 485 194M371 395Q362 403 352 410M252 427Q240 436 228 444M475 314Q476 329 480 343M430 389Q441 405 433 423M101 378Q95 392 106 403M297 282Q273 298 280 326M403 370Q403 385 393 397M314 314Q294 333 301 358M291 341Q289 365 283 388M292 362Q286 374 276 385M295 455Q307 476 308 501M427 343Q426 359 432 373M429 314Q425 333 439 346M425 370Q432 386 435 404M266 391Q265 406 268 420M451 400Q459 417 473 429M325 270Q325 285 332 298M94 312Q81 336 85 364M465 422Q478 440 490 459M358 335Q362 359 345 378M310 442Q317 462 307 480M380 361Q375 385 379 410M384 324Q376 343 382 361M201 160Q187 167 175 177M241 397Q224 411 223 433M281 411Q267 433 251 455M414 321Q427 349 409 375M304 396Q296 421 276 438M156 463Q153 470 150 477M231 353Q240 374 230 394M462 406Q475 427 480 452M97 295Q93 299 88 301M271 415Q250 435 221 429M413 164Q425 181 445 191M258 303Q253 319 251 334M269 319Q272 343 249 350M325 507Q334 528 329 550M280 443Q255 453 228 459M205 427Q203 439 199 451M425 285Q451 289 463 313M213 303Q206 316 203 331M465 425Q468 437 468 450M205 296Q214 319 214 343M220 443Q222 468 202 482M478 313Q486 333 486 354M323 411Q325 439 314 465M241 392Q238 410 225 422M322 307Q316 318 315 330M264 392Q262 411 260 429M139 202Q127 219 109 229M296 372Q293 391 281 406M256 361Q257 373 252 384M389 256Q390 282 394 307M428 443Q442 459 437 481M179 165Q169 175 160 187M92 305Q82 314 84 328M355 311Q355 335 352 359M318 480Q307 500 294 518M492 405Q504 417 519 426M397 370Q384 395 403 416M344 142Q350 157 352 173M352 359Q354 379 346 397M454 339Q459 359 455 379M285 290Q284 313 294 333M426 299Q413 311 415 329M239 505Q230 514 220 521M213 282Q201 296 209 313M245 470Q229 490 224 514M120 424Q119 428 116 432M323 355Q322 370 313 383M315 457Q299 462 296 479M348 485Q344 512 352 538M437 314Q416 329 423 355M395 494Q378 512 374 536M266 415Q264 428 263 442M410 310Q403 337 420 360M523 313Q527 320 532 324M236 420Q233 440 226 458M228 447Q217 459 204 469M419 165Q434 174 445 160M396 355Q408 371 419 386M351 352Q343 377 321 391M380 386Q380 403 387 418M445 316Q458 340 471 363M268 369Q280 387 267 404M249 280Q247 301 261 317M427 403Q445 414 461 426M483 418Q474 437 476 458M459 446Q462 458 469 468M375 312Q358 331 345 353M336 438Q339 466 317 483M509 315Q519 333 530 350M228 468Q219 483 212 499M399 311Q411 325 422 340M331 330Q314 341 298 353M273 278Q267 304 255 328M322 483Q313 496 308 511M324 339Q309 357 305 380M192 486Q195 498 191 510M410 438Q406 463 425 480M292 478Q282 496 264 507M384 440Q373 452 366 468M318 458Q304 473 288 483M320 232Q321 254 315 276M274 315Q261 333 248 350M342 374Q336 393 316 396M315 439Q300 448 292 463M264 326Q253 337 244 351M257 509Q250 522 240 534M246 423Q244 434 240 444M344 470Q340 485 339 501M274 477Q272 494 273 510M237 286Q238 308 241 330M297 457Q275 460 268 481M421 446Q429 455 430 468M217 443Q196 447 182 461M105 399Q105 405 102 410M297 370Q293 381 288 393M499 353Q502 376 518 394M253 389Q241 407 241 428M403 260Q408 276 415 291M274 352Q272 364 271 376M113 418Q118 426 113 434M194 387Q188 405 187 424M134 205Q127 212 117 214M225 151Q206 157 200 177M323 334Q304 346 282 348M374 479Q384 496 393 514M365 313Q361 327 368 340M457 408Q462 420 474 425M267 333Q253 336 248 348M322 408Q302 403 288 417M278 436Q258 447 245 466M139 448Q135 450 131 452M331 302Q311 318 317 343M341 334Q360 348 379 362M354 343Q333 360 309 373M507 264Q518 272 524 284M451 442Q463 458 466 478M256 431Q244 447 236 465M123 418Q115 427 115 438M306 421Q297 442 279 455M326 509Q326 521 321 533M363 450Q370 462 379 472M373 268Q375 280 375 291M303 382Q299 395 288 404M197 472Q185 476 173 483M306 341Q305 366 290 386M105 292Q100 297 94 298M477 421Q486 430 496 436M380 409Q378 422 369 431M377 351Q374 372 361 389M293 472Q291 483 289 494M236 442Q244 465 250 488M100 357Q98 374 99 392M488 234Q496 248 509 255M284 475Q272 497 272 522M370 286Q377 303 372 322M245 427Q257 439 252 455M259 148Q257 169 244 186M383 159Q393 182 403 205M211 291Q209 302 211 313M410 366Q414 386 430 399M317 409Q327 426 315 441M272 458Q253 467 235 476M321 420Q306 443 302 470M139 197Q133 196 127 198M424 455Q428 474 432 494M271 340Q262 348 252 355M448 353Q451 366 456 379M238 368Q242 384 234 398M425 287Q431 302 442 313M354 359Q350 371 348 383M356 472Q348 491 330 504M378 336Q371 353 366 371M508 390Q509 400 516 408M498 240Q508 253 509 269M335 378Q343 397 347 417M244 294Q245 310 233 321M277 406Q268 417 260 428M423 450Q417 475 402 494M310 229Q315 252 302 272M312 280Q302 300 313 319M279 498Q245 503 243 537M219 347Q222 361 218 374M275 365Q265 373 255 382M388 291Q362 296 362 322M105 382Q104 392 98 400M366 366Q354 385 354 408M351 453Q339 468 336 487M300 238Q300 261 311 280M247 448Q245 479 218 493M434 382Q448 398 466 407M221 489Q202 496 205 517M309 272Q297 294 291 318M359 264Q344 283 335 304M290 235Q271 252 254 271M397 260Q381 267 382 284M285 286Q279 310 272 334M214 468Q211 482 211 495M234 420Q226 433 212 438M437 463Q442 476 452 485M226 497Q221 504 219 513M490 403Q487 426 485 450M404 388Q391 410 378 431M435 400Q442 413 436 425M400 461Q409 482 412 504M330 304Q320 312 314 323M496 388Q503 402 514 412M342 148Q353 157 368 155M414 366Q413 383 413 400M278 272Q268 295 263 320M451 355Q458 382 460 410M488 412Q497 420 503 431M483 369Q479 396 484 423M263 321Q255 336 249 351M427 377Q423 389 429 401M225 465Q208 484 212 509M299 341Q288 354 287 370M135 427Q134 439 128 449M468 316Q458 330 461 348M442 420Q447 443 438 464M253 423Q278 436 275 465M408 420Q403 435 396 449M364 281Q359 296 368 310M254 482Q242 492 228 500M485 220Q500 242 518 261M300 424Q298 436 291 444M249 232Q245 249 246 268M416 301Q419 312 422 323M306 280Q308 297 307 314M399 266Q403 286 398 305M280 379Q281 399 289 418M221 476Q218 493 203 504M444 427Q459 438 478 443M184 470Q180 480 180 491M292 413Q287 438 292 462M390 406Q401 429 386 449M331 342Q300 348 293 380M419 337Q413 361 414 386M339 280Q330 292 332 306M92 352Q88 354 85 355M330 292Q340 314 337 338M270 442Q258 451 247 461M93 339Q87 344 86 353M241 381Q230 394 229 410M164 180Q156 180 148 181M250 498Q254 514 240 523M448 407Q461 423 478 437M237 449Q228 461 220 474M422 229Q447 232 446 258M455 443Q466 465 464 489M297 276Q298 292 298 308M452 287Q440 300 444 317M191 166Q177 185 159 199M358 505Q361 519 368 532M410 488Q412 501 416 514M386 473Q384 492 397 506M229 391Q215 410 202 430M294 147Q287 161 278 174M319 350Q304 365 291 382M324 383Q318 404 306 422M487 383Q500 384 511 389M342 235Q342 253 346 270M465 324Q463 336 468 347M400 260Q393 274 387 289M447 281Q459 298 447 314M406 168Q418 176 430 184M229 354Q234 370 230 387M303 421Q312 429 316 441M386 312Q380 324 387 335M315 463Q317 479 306 490M278 316Q279 344 264 367M359 324Q374 331 377 348M310 483Q308 506 295 525M357 475Q354 486 352 497M379 346Q367 357 376 369M435 450Q454 468 464 491M233 326Q225 349 224 374M299 483Q290 495 291 510M381 295Q394 309 396 327M360 483Q360 501 365 518M287 403Q287 417 276 426M126 430Q124 434 122 439M249 304Q269 325 268 354M476 383Q470 399 478 414M252 465Q244 476 244 489M222 398Q211 413 203 430M309 367Q318 393 297 410M261 487Q261 509 243 521M428 385Q411 406 402 432M512 281Q519 289 529 295M322 466Q317 489 296 500M356 450Q355 467 350 484M409 292Q397 305 393 322M372 443Q373 459 375 474M277 450Q264 461 271 476M331 347Q324 366 313 383M251 353Q225 361 210 384M158 463Q163 472 160 482M397 338Q391 355 381 370M479 214Q484 228 496 239M117 422Q126 439 131 458M215 434Q207 445 198 456M330 336Q327 349 327 362M370 445Q362 464 372 483M218 398Q209 412 208 429M367 142Q380 160 381 182M187 484Q179 493 167 490M499 277Q512 297 535 299M305 430Q311 454 300 477M363 378Q342 388 337 411M310 473Q303 484 295 494M426 392Q421 408 420 424M402 435Q402 454 408 471M438 457Q456 469 463 491M375 292Q386 306 384 323M452 300Q452 326 462 351M359 336Q362 347 361 359M289 257Q288 279 286 300M422 379Q420 403 436 422M340 485Q342 510 336 533M91 315Q90 320 86 322M277 479Q278 493 275 506M437 352Q453 373 472 391M233 386Q229 402 233 419M428 317Q437 332 428 348M420 478Q424 489 430 499M358 253Q373 275 371 301M228 382Q215 407 191 421M102 259Q99 282 94 304M264 460Q266 473 266 485M305 325Q299 341 282 345M452 431Q459 442 469 450M364 292Q357 318 336 334M277 379Q279 403 262 421M212 401Q191 410 181 431M327 409Q323 434 310 455M343 283Q333 296 330 311M244 147Q232 171 214 191M195 464Q192 475 185 484M324 446Q316 462 310 478M93 346Q92 353 86 356M285 291Q275 308 263 325M297 412Q280 430 274 454M300 381Q290 393 285 407M401 250Q415 270 408 294M401 408Q403 428 392 445M269 369Q254 393 225 397M233 398Q220 409 227 423M257 140Q234 145 224 166M337 263Q337 282 335 302M299 485Q303 507 297 529M388 239Q386 260 386 281M275 331Q242 342 245 376M128 423Q129 436 128 448M310 293Q304 319 282 335M279 454Q271 464 262 472M354 296Q362 306 370 315M172 432Q166 459 149 481M393 264Q382 284 371 305M358 315Q365 330 355 343M388 480Q393 491 401 499M345 437Q338 456 345 475M331 400Q327 417 331 433M260 506Q251 524 261 542M437 389Q445 416 434 442M162 473Q160 477 160 482M278 279Q252 291 241 317M300 277Q286 290 285 308M244 380Q228 397 230 421M413 367Q409 391 406 415M279 352Q276 365 273 378M332 149Q337 166 339 183M269 361Q267 374 262 387M416 363Q435 376 440 398M309 338Q305 356 302 374M227 416Q212 429 203 447M496 228Q508 237 509 252M304 390Q319 415 303 440M290 268Q292 291 288 314M289 434Q287 451 282 468M252 507Q249 516 243 522M331 391Q326 406 328 421M390 417Q384 442 373 464M376 213Q381 224 384 237M184 489Q181 495 177 499M298 297Q297 324 321 335M213 459Q209 485 195 507M257 351Q252 364 237 364M223 398Q226 418 242 431M464 308Q461 329 471 348M335 331Q334 352 340 372M251 382Q239 400 233 419M330 331Q330 356 325 381M437 469Q443 489 460 502M367 406Q343 420 348 447M360 280Q346 297 351 318M307 237Q303 249 301 262M449 448Q453 461 464 470M297 362Q300 375 300 388M378 300Q369 312 363 325M277 331Q289 351 279 371M447 282Q450 300 465 311M279 361Q277 373 272 385M278 444Q268 469 252 491M359 424Q358 443 353 462M357 360Q355 379 357 399M244 356Q241 385 256 409M416 414Q417 432 415 450M241 150Q227 170 214 191M327 333Q323 347 323 361M250 146Q238 163 217 168M350 443Q336 463 327 487M305 396Q292 406 292 422M337 464Q334 482 343 496M359 372Q362 398 367 423M309 423Q304 447 311 471M394 260Q407 280 419 300M492 336Q502 349 514 360M311 389Q321 398 321 411M235 361Q242 376 232 388M307 294Q309 320 301 346M239 326Q233 337 233 348M247 457Q244 479 237 501M135 425Q129 429 128 437M208 159Q199 173 184 183M263 254Q266 271 259 287M427 306Q442 324 447 347M295 316Q284 330 288 348M389 153Q399 166 413 175M383 255Q390 276 377 294M359 323Q349 345 370 358M408 407Q417 424 421 442M213 412Q196 425 179 436M265 327Q241 342 235 370M235 285Q224 302 223 322M475 421Q469 434 472 448M273 261Q255 266 242 280M333 487Q326 498 324 510M290 377Q276 390 260 402M223 352Q212 376 205 401M243 456Q232 466 217 470M450 371Q462 385 464 403M329 377Q308 397 315 424M389 496Q402 502 413 513M319 444Q301 461 294 483M455 458Q458 471 467 481M300 231Q297 244 295 256M238 472Q222 488 204 503M441 426Q448 450 445 475M326 275Q320 289 327 303M343 345Q339 363 335 382M418 297Q429 319 444 339M313 348Q320 384 286 396M275 308Q286 339 263 362M392 467Q387 479 392 491M131 205Q124 222 126 239M324 422Q321 443 331 462M246 403Q242 422 231 438M196 399Q196 417 191 435M446 184Q463 211 495 206M281 319Q277 344 263 365M286 382Q282 409 261 424M400 407Q399 425 388 439M98 379Q97 385 95 390M498 398Q506 409 510 422M125 224Q129 241 127 258M429 394Q418 423 437 448M393 253Q411 276 440 276M336 452Q340 473 324 487M322 367Q310 386 303 406M273 446Q275 473 299 485M222 473Q216 487 220 502M209 487Q199 499 195 514M405 295Q367 319 400 349M478 202Q492 214 505 228M334 456Q312 473 309 500M315 340Q330 360 335 385M256 472Q259 487 253 500M136 445Q138 452 132 455M306 381Q295 399 286 419M383 147Q400 151 416 157M357 385Q358 414 333 431M409 442Q408 466 406 490M502 341Q512 348 524 347M415 468Q427 475 432 487M342 273Q340 288 348 301M469 195Q492 210 496 237M289 457Q273 467 266 484M352 505Q341 523 327 539M188 349Q172 360 171 380M408 293Q415 316 428 337M309 312Q305 335 292 355M500 349Q483 382 516 400M237 391Q240 402 244 413M464 390Q481 405 493 424M431 265Q414 286 423 311M361 365Q357 386 360 406M294 334Q291 362 289 389M394 160Q406 154 419 155M296 264Q293 286 286 308M392 470Q393 489 392 509M303 407Q291 422 274 434M214 288Q197 298 196 317M442 358Q455 372 463 390M278 430Q252 437 247 464M260 372Q252 391 236 404M304 459Q306 487 286 507M428 258Q435 270 441 282M384 327Q370 349 363 373M385 249Q387 268 392 286M413 364Q426 380 423 401M513 372Q519 374 524 379M433 466Q446 475 458 487M299 221Q286 244 304 264M398 439Q393 450 389 462M327 352Q302 361 307 387M376 469Q384 488 388 508M180 477Q170 482 161 490M463 344Q474 356 477 372M240 425Q229 444 211 457M483 397Q489 419 481 439M416 296Q417 320 395 331M449 396Q456 426 485 437M506 394Q504 413 509 432M276 473Q267 485 254 495M518 310Q531 311 535 324M305 339Q298 352 295 366M421 418Q439 428 435 449M252 398Q246 419 236 439M402 442Q398 457 405 471M298 300Q296 316 295 333M475 341Q483 359 492 376M301 272Q288 288 281 306M219 505Q214 511 214 518M428 288Q437 306 443 326M254 405Q245 414 240 425M415 241Q414 264 417 287M309 276Q321 290 336 302M289 449Q285 460 275 468M425 315Q428 331 425 347M341 372Q333 387 333 404M258 287Q246 304 255 322M309 473Q281 475 271 501M439 443Q448 456 450 472M323 298Q322 317 329 335M181 483Q178 489 179 496M383 356Q378 369 381 383M346 314Q340 340 353 363M343 380Q351 399 346 418M240 427Q225 436 219 452M307 445Q281 460 274 489M225 475Q222 497 208 514M206 486Q191 488 176 487M520 333Q529 332 537 337M430 296Q448 316 447 343M342 418Q335 443 324 468M360 437Q340 455 343 481M422 404Q405 408 400 424M401 397Q411 405 414 418M246 404Q238 430 231 456M294 243Q285 252 277 261M252 439Q251 460 237 476M133 205Q124 218 111 228M436 426Q459 442 461 471M278 279Q269 301 275 324M256 501Q244 510 240 523M498 258Q511 281 529 300M406 285Q420 312 393 328M506 400Q498 412 500 427M267 418Q256 427 261 439M298 224Q304 237 316 247M343 455Q335 469 341 484M224 479Q212 485 209 498M410 415Q421 437 428 461M262 461Q251 468 241 476M340 410Q331 421 316 422M277 483Q273 493 265 502M479 345Q497 365 496 392M187 466Q175 484 154 487M247 360Q251 372 248 384M489 216Q495 229 503 241M510 373Q513 382 522 385M403 415Q415 425 421 441M379 272Q393 289 384 309M438 165Q459 177 467 200M292 150Q285 171 269 186M255 147Q269 164 256 182M490 422Q504 425 511 437M381 429Q379 445 380 461M324 461Q308 479 297 499M263 254Q266 278 246 293M127 438Q126 445 121 449M451 451Q455 462 459 472M370 472Q382 493 385 517M157 457Q153 462 151 468M399 292Q394 316 413 330M284 242Q280 265 276 289M389 315Q389 331 386 347M501 251Q515 262 529 272M493 229Q502 233 509 239M300 353Q273 371 283 402M153 448Q141 461 155 472M199 160Q183 165 183 182M271 145Q272 168 267 191M179 180Q152 179 144 205M123 435Q124 440 121 445M355 481Q349 494 335 501M366 146Q380 157 383 174M410 450Q428 474 418 502M439 421Q442 433 440 445M428 470Q427 487 428 505M242 462Q225 474 205 481M272 472Q262 493 256 517M491 213Q504 224 509 240M299 388Q290 414 297 441M408 302Q398 321 403 342M243 388Q236 401 238 416M366 313Q371 336 376 359M472 429Q484 436 494 445M375 503Q384 521 379 541M270 390Q268 402 259 409M244 496Q225 494 206 495M153 457Q150 463 145 468M300 359Q300 371 294 382M426 289Q425 312 422 334M305 274Q300 285 295 295M369 498Q380 519 369 540M297 410Q281 422 277 443M273 413Q257 426 253 446M351 388Q347 407 339 425M299 244Q302 263 289 278M449 374Q446 401 463 422M347 470Q336 490 319 506M202 461Q183 480 160 491M294 261Q296 287 281 308M422 369Q423 389 422 409M380 358Q374 370 378 384M382 146Q401 161 424 169M217 500Q215 506 210 511M478 376Q497 387 511 403M257 360Q248 385 258 409M91 328Q89 334 84 338M291 284Q275 307 285 333M231 255Q222 275 208 293M276 476Q270 489 272 502M299 380Q291 399 290 421M447 368Q466 382 486 395M404 466Q407 482 399 495M329 146Q333 157 334 169M286 444Q279 459 268 471M299 321Q291 344 272 359M205 452Q199 476 189 498M196 463Q186 473 185 488M129 213Q119 210 116 220M112 264Q110 278 116 290M362 331Q364 353 353 371M387 461Q392 477 385 492M242 479Q247 493 247 508M464 304Q476 320 474 340M420 334Q418 346 419 358M297 495Q302 511 299 527M511 384Q513 398 522 409M94 352Q92 357 86 360M257 233Q243 247 230 262M361 422Q343 434 327 448M254 230Q259 245 260 260M515 371Q511 385 521 395M267 396Q259 412 242 417M454 368Q458 379 464 389M478 202Q483 202 489 203M128 421Q123 433 124 446M218 418Q187 427 193 458M243 501Q232 507 225 518M270 277Q273 292 272 306M212 311Q207 332 198 351M334 501Q316 523 320 550M375 333Q376 344 374 355M291 329Q281 350 297 367M224 469Q225 485 214 498M342 355Q349 381 327 399M387 145Q409 155 431 162M382 367Q377 385 380 403M408 355Q397 365 400 380M335 441Q339 455 336 470M226 159Q229 174 230 189M290 314Q278 338 252 330M190 447Q203 473 193 500M312 434Q305 460 290 483M247 457Q237 471 222 480M516 317Q518 340 528 361M342 309Q325 330 336 355M267 330Q266 344 263 357M236 381Q233 403 213 413M269 420Q255 429 244 441M371 371Q351 382 343 403M412 343Q412 367 420 389M268 148Q274 164 281 180M299 273Q309 290 302 308M184 415Q180 437 174 460M344 369Q351 391 352 413M460 355Q484 355 485 379M400 293Q399 315 396 338M189 166Q174 171 167 185M372 315Q362 331 357 349M383 481Q380 495 391 504M343 337Q329 356 326 379M329 292Q332 312 316 323M341 280Q343 295 341 310M327 355Q313 362 300 369M292 474Q283 482 280 493M474 198Q472 220 486 238M342 373Q332 394 333 417M487 222Q509 240 517 267M421 317Q431 334 416 348M100 390Q98 395 98 400M299 280Q307 294 305 309M389 395Q382 421 384 447M382 445Q375 466 370 488M286 507Q280 525 277 543M401 329Q373 330 355 351M323 146Q335 153 348 156M358 337Q370 346 374 361M99 311Q99 324 91 332M303 423Q300 446 292 467M388 325Q402 342 412 362M346 450Q341 470 323 479M404 235Q395 258 400 282M403 291Q391 315 390 342M295 372Q295 392 300 411M356 463Q346 474 347 489M91 339Q87 342 84 346M247 474Q239 495 246 516M312 392Q320 423 298 445M348 387Q341 414 344 442M103 249Q100 256 94 259M489 217Q506 238 500 265M280 390Q267 406 265 426M322 391Q311 406 300 420M395 377Q377 397 368 421M238 308Q236 321 237 334M479 434Q488 452 488 472M402 495Q407 513 404 531M195 464Q191 478 177 486M246 352Q246 372 257 388M243 436Q240 456 243 477M405 375Q403 388 410 398M323 300Q315 313 326 323M281 258Q270 269 268 284M412 285Q426 293 423 309M246 411Q236 429 225 447M322 143Q313 153 303 162M314 386Q306 396 299 407M183 372Q182 385 177 397M243 463Q241 487 247 510M409 288Q415 301 423 313M443 371Q450 386 465 395M181 451Q187 468 183 486M331 250Q342 272 337 296M281 361Q277 380 258 385M173 484Q170 489 168 494M271 238Q256 256 263 279M265 480Q261 494 248 500M275 353Q285 372 279 393M378 370Q376 386 372 401M464 405Q472 416 483 423M166 459Q166 468 163 476M202 361Q200 373 196 385M341 284Q346 306 347 329M412 437Q406 455 412 473M290 415Q297 438 279 453M327 349Q324 375 308 396M406 409Q411 421 413 435M411 162Q432 167 453 176M360 302Q359 318 354 333M472 206Q483 209 494 213M460 446Q470 454 477 464M491 225Q494 241 507 250M321 321Q318 340 327 357M300 418Q281 430 279 452M223 413Q219 436 201 450M352 319Q350 335 349 351M228 479Q205 489 186 504M403 349Q391 376 417 391M257 406Q255 427 238 440M351 306Q347 323 337 339M338 510Q324 530 339 550M379 427Q377 438 375 449M294 438Q298 464 292 490M385 479Q386 491 385 504M288 420Q281 441 262 451M265 392Q261 414 267 434M412 334Q409 354 410 375M508 242Q515 248 522 255M511 276Q523 284 527 297M176 480Q173 486 166 487M418 291Q420 318 436 340M361 379Q345 403 354 429M397 400Q404 418 397 436M374 239Q377 263 370 286M117 414Q112 419 113 427M334 143Q347 145 358 152M336 322Q318 336 308 357M352 385Q366 396 369 413M251 418Q241 426 234 435M107 250Q103 254 96 255M460 320Q467 339 477 357M257 421Q254 442 256 463M473 204Q481 223 495 239M277 350Q269 370 267 391M324 492Q315 507 319 524M228 341Q235 361 230 381M220 336Q219 358 204 375M242 280Q249 301 261 320M221 503Q209 510 198 517M469 329Q469 342 472 354M346 510Q346 523 341 536M255 279Q250 297 253 315M261 382Q256 401 252 420M437 389Q442 401 455 406M274 475Q271 495 255 508M210 349Q209 368 209 388M387 270Q378 283 373 297M477 409Q492 414 494 429M347 143Q342 156 340 171M285 279Q280 298 287 315M495 425Q503 427 506 435M449 180Q460 199 481 207M226 283Q223 298 231 310M321 484Q324 497 330 508M371 267Q372 288 370 309M335 272Q329 283 329 296M186 469Q183 480 177 489M299 400Q298 411 295 423M277 246Q272 261 266 274M407 340Q396 364 380 386M333 307Q328 325 324 343M507 253Q523 267 527 287M369 273Q371 299 349 314M281 308Q259 323 252 349M361 333Q348 357 355 382M214 356Q217 370 211 382M265 288Q253 299 245 312M297 425Q296 445 296 464M264 402Q254 415 242 427M273 458Q276 483 259 502M254 309Q236 325 235 348M448 281Q457 290 464 301M482 407Q492 413 501 421M466 361Q467 381 467 401M371 298Q379 320 377 344M361 144Q360 182 398 184M357 486Q369 495 374 509M419 437Q424 459 427 481M304 313Q302 336 291 357M388 292Q385 307 387 322M219 297Q202 301 188 311M397 417Q406 433 410 451M480 366Q505 374 528 389M259 334Q248 350 249 369M447 337Q449 362 439 386M272 449Q256 457 243 469M423 437Q427 450 430 464M341 371Q337 386 337 402M381 279Q408 294 400 323M308 361Q303 377 292 390M499 378Q510 384 514 397M149 195Q138 202 131 213M400 469Q410 492 433 502M439 312Q451 323 468 324M352 502Q368 521 368 546M291 425Q266 433 245 449M379 425Q396 447 403 474M259 312Q249 327 237 340M307 478Q293 499 301 523M232 346Q222 358 211 369M373 400Q363 415 358 431M334 360Q334 374 333 388M224 349Q232 366 229 385M338 464Q336 491 321 514M241 388Q241 412 234 435M200 339Q182 359 182 385M300 283Q291 298 283 312M380 384Q375 409 357 426M457 355Q463 378 462 401M348 294Q359 318 374 339M200 441Q182 456 183 480M304 320Q296 335 297 351M270 478Q271 492 272 506M279 407Q284 422 285 437M278 298Q264 308 249 313M398 357Q389 367 389 381M349 224Q336 237 329 254M417 427Q418 443 424 459M182 466Q175 480 171 496M238 455Q224 474 211 495M343 471Q337 488 323 499M442 422Q457 440 463 462M202 157Q193 173 176 182M436 359Q437 372 439 384M432 372Q417 392 432 412M118 235Q122 264 104 288M452 340Q453 360 460 379M449 343Q453 362 467 377M214 347Q202 362 206 380M427 454Q433 477 435 499M308 458Q298 469 285 478M387 395Q384 414 374 430M276 372Q270 383 266 396M359 352Q346 380 363 404M364 324Q370 333 372 344M297 436Q293 457 288 477M494 401Q500 410 509 416M239 328Q259 345 265 370M493 241Q515 259 525 285M282 422Q259 441 265 470M346 319Q346 346 335 371M432 409Q438 421 437 435M337 315Q343 344 325 367M281 462Q267 468 253 474M432 418Q436 446 452 468M399 285Q399 307 408 328M423 326Q431 339 438 353M321 315Q326 333 329 351M336 370Q344 384 335 398M241 410Q237 424 245 437M383 386Q390 403 388 420M375 291Q364 309 364 330M268 341Q254 350 247 364M363 285Q376 305 386 328M336 307Q335 319 327 328M205 317Q181 326 167 349M408 366Q404 380 397 393M453 413Q460 440 474 464M408 399Q413 424 429 444M220 475Q214 486 205 495M284 455Q283 481 271 504M300 293Q311 315 316 339M425 296Q427 319 411 335M431 389Q450 397 459 415M369 319Q362 337 346 349M219 489Q217 502 210 512M351 374Q345 388 338 403M172 177Q162 181 155 173M169 178Q154 187 146 201M361 445Q372 473 353 496M282 439Q286 461 273 479M362 402Q360 425 339 434M434 308Q440 335 426 359M377 272Q376 287 378 302M460 425Q486 430 503 451M224 482Q209 487 210 502M205 486Q200 495 197 505M260 412Q253 435 232 446M241 369Q225 374 223 391M398 254Q397 268 402 281M323 478Q319 503 318 528M290 466Q278 486 262 502M396 317Q398 337 395 358M229 418Q218 437 220 459M429 335Q428 353 433 370M250 395Q240 401 228 400M235 330Q219 347 226 369M192 478Q179 485 174 499M474 262Q479 282 472 301M240 476Q233 486 225 495M95 324Q84 332 85 347M341 510Q343 529 339 547M394 236Q398 248 398 261M266 325Q267 340 267 355M473 412Q479 432 493 447M287 470Q274 491 260 512M495 221Q500 232 512 236M385 378Q380 395 381 412M482 407Q487 419 497 427M364 145Q372 145 379 140M281 441Q275 452 268 462M191 397Q195 418 193 440M509 352Q517 368 535 372M320 337Q330 356 324 377M368 353Q373 385 344 399M340 401Q321 417 312 440M445 344Q455 355 448 368M316 346Q323 364 332 382M229 360Q210 373 204 396" fill="none" stroke="#9c8264" stroke-opacity="0.118" stroke-width="0.6" stroke-dasharray="3 1.5"/><path d="M295 232Q299 242 305 252M436 194Q443 214 457 231M167 451Q149 451 135 463M266 228Q267 247 281 261M213 321Q190 336 168 351M238 403Q222 415 226 435M443 376Q446 398 462 414M177 421Q171 439 167 457M209 331Q203 350 188 361M443 231Q459 254 466 281M433 255Q441 269 451 281M276 374Q263 390 267 411M256 294Q248 308 245 324M476 349Q490 368 512 378M129 414Q134 426 126 436M304 372Q312 395 305 418M198 417Q192 440 182 461M276 282Q275 302 271 323M417 166Q437 178 457 188M254 251Q264 273 274 295M214 271Q204 279 202 291M186 413Q180 424 171 433M436 281Q435 300 433 318M318 148Q330 170 309 184M357 184Q385 202 374 234M188 371Q192 395 177 415M214 319Q208 339 223 353M324 293Q313 310 307 330M240 160Q244 182 238 203M438 270Q440 296 428 319M341 250Q339 278 324 300M294 170Q288 189 289 209M457 354Q466 379 470 405M195 328Q185 339 188 354M130 213Q126 212 123 212M421 286Q427 304 444 315M449 305Q452 332 475 349M177 412Q171 434 168 457M319 161Q333 182 358 179M473 371Q493 380 509 393M112 396Q116 408 108 418M249 463Q231 462 215 471M514 299Q533 307 538 327M444 235Q449 246 449 259M197 323Q193 337 186 351M237 330Q243 345 252 359M378 183Q392 187 404 195M497 316Q514 328 518 348M248 391Q239 418 249 444M307 338Q302 350 307 362M215 475Q213 498 193 510M218 161Q214 180 204 196M123 228Q118 229 113 230M211 433Q189 447 162 452M238 274Q236 294 225 311M217 387Q219 409 221 432M399 267Q401 278 401 290M209 392Q200 405 200 421M435 292Q437 308 427 321M403 243Q396 266 389 289M178 388Q167 397 159 407M293 216Q280 221 268 229M211 235Q205 253 195 268M201 305Q205 316 203 327M489 286Q506 300 525 311M142 419Q145 439 133 455M292 226Q276 247 288 271M306 296Q310 314 312 333M453 184Q462 200 481 201M494 233Q496 247 506 258M433 271Q425 293 430 316M444 344Q439 359 450 370M169 185Q150 187 144 205M478 379Q460 410 492 425M306 322Q302 342 311 360M350 150Q325 159 318 184M415 176Q431 186 448 193M107 313Q102 329 91 341M375 210Q384 218 391 226M324 364Q331 388 341 410M376 220Q370 240 375 259M467 330Q462 353 482 366M194 272Q201 298 202 326M210 358Q228 384 209 411M103 299Q94 304 90 313M208 445Q205 463 201 482M107 254Q99 265 93 276M332 270Q333 292 335 314M170 427Q169 440 167 453M230 284Q218 302 211 322M98 370Q93 372 93 377M160 450Q153 458 149 467M221 443Q204 452 185 453M205 466Q188 472 175 484M165 327Q168 349 154 368M467 375Q479 385 474 400M263 290Q247 316 259 343M195 389Q186 401 193 415M185 387Q188 399 189 412M190 464Q181 471 179 481M274 392Q282 416 299 434M469 335Q485 356 500 378M508 379Q516 381 523 384M206 378Q204 398 205 418M490 399Q506 408 511 425M231 364Q229 389 226 413M329 210Q347 219 342 239M515 315Q521 317 527 320M113 402Q107 407 107 415M269 459Q245 466 221 476M269 351Q276 374 261 393M436 382Q451 394 442 411M329 240Q341 249 354 256M247 343Q241 354 242 367M516 347Q523 358 536 360M373 158Q393 168 415 172M399 241Q406 253 418 261M492 341Q506 353 514 369M461 192Q484 198 476 221M410 161Q425 167 424 183M286 225Q285 243 285 261M431 365Q433 391 425 417M423 245Q433 270 453 287M343 171Q356 187 361 206M162 444Q149 460 156 480M209 387Q197 396 196 411M306 305Q295 321 292 340M498 353Q503 374 515 392M317 266Q326 286 321 308M220 157Q215 170 209 184M484 260Q481 279 479 298M97 307Q85 316 84 331M496 358Q506 362 516 366M444 268Q451 278 452 289M98 361Q95 366 91 370M186 182Q178 191 170 199M215 477Q195 489 181 508M276 192Q257 201 237 206M291 324Q292 338 288 351M372 247Q361 267 366 289M507 330Q512 341 522 348M240 449Q247 471 236 492M326 378Q320 402 304 420M152 248Q144 264 144 282M223 167Q209 184 209 206M341 258Q317 272 328 298M495 306Q500 323 507 339M258 149Q263 174 252 196M302 249Q299 262 307 272M246 428Q230 436 215 447M98 320Q91 320 84 324M290 235Q301 245 308 257M220 347Q214 371 223 394M300 334Q291 357 271 371M234 422Q229 446 217 467M469 256Q479 274 497 285M296 278Q278 297 252 302M461 206Q478 211 480 229M244 330Q229 346 216 363M474 384Q477 397 473 410M424 300Q430 317 442 330M463 247Q473 258 486 266M166 422Q159 434 154 447M464 330Q485 345 486 371M233 379Q216 393 216 415M305 379Q302 391 298 402M97 333Q89 341 87 352M277 195Q295 199 306 214M241 376Q240 387 235 397M227 166Q226 190 232 214M263 270Q253 296 240 320M188 284Q185 298 181 312M148 411Q149 427 140 441M358 245Q358 262 347 274M331 255Q320 274 315 295M458 342Q451 359 459 376M240 428Q227 433 218 443M214 464Q201 484 179 493M136 205Q126 224 124 245M462 278Q476 296 484 317M260 191Q250 204 236 212M472 205Q484 220 490 239M203 290Q187 291 170 296M183 457Q174 481 181 505M435 276Q457 284 479 290M482 228Q475 238 479 250M472 224Q449 250 469 277M411 212Q408 228 416 243M146 301Q124 316 116 342M346 268Q347 284 337 297M180 276Q194 293 189 315M465 241Q458 250 454 261M413 212Q418 224 426 236M478 395Q480 425 507 438M411 260Q407 273 410 285M513 329Q518 347 526 364M109 383Q102 394 106 406M140 304Q132 315 138 328M211 273Q223 302 200 323M172 453Q186 468 179 487M154 345Q150 368 130 380M99 349Q94 360 88 371M456 252Q465 272 474 292M222 427Q214 453 202 478M271 329Q254 350 240 374M279 211Q268 231 281 250M438 328Q439 344 439 360M225 194Q220 214 217 234M198 441Q174 452 149 458M181 310Q185 325 177 338M287 287Q287 299 284 311M436 335Q439 352 452 364M274 286Q267 308 259 329M352 150Q363 165 373 179M374 198Q387 226 370 252M213 307Q223 321 219 338M231 287Q217 289 210 301M485 356Q509 367 521 390M222 162Q202 170 181 178M366 275Q352 300 358 328M313 238Q314 251 316 264M103 275Q100 288 87 295M172 459Q166 472 154 480M414 259Q415 277 413 295M249 434Q251 456 230 462M259 310Q243 317 239 335M420 266Q424 282 427 298M356 197Q373 217 389 238M226 428Q215 449 204 469M249 315Q252 332 247 349M182 324Q167 343 166 368M371 167Q362 184 373 200M506 294Q503 310 509 326M261 316Q269 330 261 343M374 181Q390 201 412 217M366 250Q367 274 368 299M206 413Q206 442 179 452M485 362Q498 371 505 386M218 155Q208 179 191 199M268 296Q250 318 249 347M192 433Q179 454 161 471M457 251Q466 275 474 300M104 333Q96 353 89 374M298 338Q298 364 290 389M498 364Q512 372 519 387M433 322Q445 343 448 368M501 326Q515 343 510 364M318 322Q324 335 322 350M356 172Q364 182 372 192M294 341Q285 359 271 373M258 273Q262 287 273 297M176 396Q174 414 162 427M314 225Q326 236 325 253M486 382Q509 385 516 407M170 275Q156 283 159 299M426 250Q429 281 460 281M223 440Q215 454 212 469M482 266Q487 279 498 288M447 256Q460 272 468 291M140 433Q147 452 138 469M219 253Q208 264 206 280M292 249Q299 273 298 298M407 263Q415 289 397 310M454 403Q469 405 472 420M498 305Q511 313 517 328M496 399Q508 409 507 424M359 251Q368 271 358 290M209 214Q194 238 193 265M184 432Q174 449 171 468M185 406Q164 421 168 446M181 340Q179 352 178 364M317 186Q320 211 301 229M145 271Q150 295 136 315M231 456Q223 477 225 498M502 275Q503 293 502 311M319 186Q342 182 365 185M197 225Q191 239 184 254M490 267Q499 293 519 312M454 301Q468 312 473 329M389 156Q404 172 407 193M289 258Q295 269 304 278M191 308Q176 322 173 343M317 143Q298 149 289 131M292 366Q295 378 295 391M107 318Q98 322 94 332M108 329Q83 350 92 381M284 204Q264 223 246 244M181 259Q161 266 139 270M285 357Q280 371 275 385M455 399Q468 411 473 428M185 336Q181 363 169 387M142 438Q136 447 127 453M440 214Q458 231 461 256M245 473Q228 494 235 520M232 397Q221 414 220 435M153 434Q165 446 159 462M453 248Q472 264 470 288M480 351Q478 381 505 393M432 268Q442 280 447 294M248 367Q245 393 233 416M169 431Q161 443 167 457M193 377Q196 398 191 419M506 286Q524 290 533 307M222 480Q193 481 181 507M336 158Q347 171 362 179M476 346Q476 369 486 390M421 200Q419 219 420 237M238 263Q230 278 225 294M511 317Q517 328 529 332M274 311Q272 335 255 352M491 322Q498 344 509 363M224 423Q225 437 223 451M513 340Q510 358 503 376M446 178Q467 192 483 211M216 439Q204 462 196 487M434 270Q457 285 459 312M458 201Q463 227 456 251M210 239Q195 245 196 261M480 354Q485 366 483 379M182 462Q172 466 166 474M284 379Q285 394 292 407M302 154Q325 168 349 178M336 192Q361 203 371 228M445 272Q440 287 448 300M311 360Q290 382 299 411M270 385Q260 395 254 407M473 364Q485 379 495 394M290 237Q297 258 285 275M299 344Q290 365 272 379M181 407Q184 428 194 447M516 311Q529 318 530 332M490 372Q512 365 534 369M412 258Q410 280 415 302M247 441Q233 447 226 461M104 261Q97 268 89 275M344 248Q344 259 346 271M200 440Q200 451 199 462M440 210Q448 226 453 244M516 312Q520 321 527 327M479 303Q475 316 479 329M157 459Q154 465 150 470M225 155Q215 167 213 183M226 457Q212 459 198 462M194 416Q184 436 167 449M497 389Q518 408 509 435M256 345Q244 363 235 383M337 208Q333 230 331 252M440 266Q453 285 451 308M319 163Q335 182 339 206M184 345Q178 368 171 390M98 292Q99 304 100 315M434 387Q450 401 466 415M100 336Q96 339 90 342M261 332Q249 348 246 368M266 365Q264 382 258 398M171 459Q164 470 161 484M223 391Q202 410 176 418M193 315Q184 326 173 336M144 283Q141 295 137 306M143 298Q121 309 98 317M311 334Q309 355 311 376M312 222Q313 244 317 266M178 243Q176 268 169 291M203 422Q194 429 187 438M97 327Q92 332 90 339M331 322Q323 339 316 357M406 262Q408 287 405 311M237 409Q230 425 226 442M205 465Q196 483 189 502M221 424Q205 445 184 461M320 212Q334 229 347 247M230 427Q212 429 207 446M214 163Q203 172 188 170M444 241Q462 253 460 274M449 187Q467 207 481 227M426 340Q427 364 436 387M438 211Q464 217 489 224M393 213Q400 234 411 254M259 200Q252 211 248 223M263 306Q264 320 264 334M206 360Q224 384 214 412M306 204Q295 212 289 225M192 228Q192 240 185 250M109 306Q97 310 95 322M192 186Q192 201 202 212M450 403Q463 412 472 424M196 383Q194 398 192 413M344 286Q354 313 334 333M297 243Q290 262 271 270M245 306Q228 313 234 331M408 215Q413 233 417 251M196 334Q201 353 207 371M301 182Q299 200 291 217M161 459Q162 474 148 480M144 293Q149 320 140 347M447 350Q448 364 458 376M187 422Q178 429 172 438M429 316Q427 337 422 358M336 176Q332 203 345 227M436 217Q452 231 474 230M147 387Q155 397 161 409M512 353Q525 356 530 369M177 466Q167 473 165 485M462 194Q478 216 471 242M170 180Q158 198 146 216M236 290Q228 307 229 325M317 297Q310 307 305 318M121 414Q116 414 113 419M449 289Q445 307 448 325M256 284Q263 301 255 318M326 271Q344 289 338 314M499 333Q516 332 516 349M504 285Q509 311 523 334M246 258Q228 278 226 305M195 357Q190 369 177 374M109 375Q102 387 106 399M230 328Q215 345 200 362M242 218Q231 234 223 252M511 364Q526 375 526 393M276 210Q273 235 279 259M311 289Q328 299 344 310M153 345Q154 357 153 368M446 188Q458 211 456 237M479 365Q494 381 510 395M233 441Q217 452 219 471M181 351Q181 374 174 397M135 334Q140 352 142 372M295 243Q286 266 271 285M221 337Q217 354 213 371M191 264Q185 278 180 293M319 289Q330 301 336 316M178 395Q173 420 154 436M379 259Q372 276 384 291M165 410Q153 427 158 447M355 279Q358 292 363 305M236 329Q234 349 219 363M447 250Q447 269 452 288M420 273Q415 284 411 295M207 406Q189 422 182 444M229 291Q213 306 216 326M432 235Q443 259 456 282M372 237Q376 264 388 288M217 427Q216 453 195 468M428 282Q424 298 422 314M315 144Q336 119 363 138M217 424Q217 441 225 457M381 189Q394 206 409 220M474 249Q472 267 470 285M225 376Q223 388 219 399M287 238Q268 251 252 267M389 274Q416 279 419 307M399 173Q424 179 448 188M135 427Q138 441 147 453M293 252Q296 270 314 271M307 331Q293 345 283 362M120 388Q113 404 109 422M150 451Q143 460 133 464M227 322Q231 337 224 351M267 301Q262 315 260 329M235 363Q253 376 261 397M227 344Q216 354 212 368M282 365Q278 378 266 384M477 229Q490 230 497 240M463 355Q470 365 478 374M273 309Q267 331 268 355M429 168Q443 178 459 177M230 203Q220 212 208 219M301 236Q288 258 295 282M463 250Q472 267 472 286M282 229Q283 241 286 253M189 449Q175 456 174 472M477 375Q495 389 509 406M255 390Q253 413 261 433M325 282Q304 302 320 327M440 204Q445 226 461 240M159 448Q147 450 150 462M236 486Q230 496 224 506M505 362Q521 386 521 414M141 426Q131 439 125 454M96 357Q94 364 88 368M265 266Q264 281 265 296M439 296Q456 314 453 339M328 337Q323 361 328 386M263 394Q254 402 245 408M382 242Q369 258 359 276M198 463Q189 472 177 478M128 226Q120 240 105 243M197 419Q191 434 198 450M458 223Q458 235 457 248M416 214Q415 228 418 242M334 332Q337 354 335 377M304 323Q296 342 303 362M314 280Q321 299 323 320M445 364Q454 379 467 389M493 247Q496 259 509 263M464 275Q486 287 510 295M177 445Q178 457 172 467M496 236Q489 254 490 274M208 345Q203 367 208 389M334 144Q329 164 320 182M515 359Q527 366 531 379M157 445Q153 464 157 483M286 336Q289 363 281 388M288 229Q286 244 298 253M123 414Q118 420 115 428M281 331Q273 343 272 357M360 152Q366 149 367 142M483 247Q487 274 515 278M500 387Q512 392 524 390M434 365Q444 386 448 408M208 303Q219 324 202 339M253 343Q246 369 245 395M267 157Q279 179 269 202M252 427Q246 452 233 476M452 247Q456 277 484 288M259 151Q238 169 220 190M261 199Q273 217 268 237M180 474Q184 483 177 490M437 176Q455 191 472 206M497 404Q503 417 517 420M244 398Q234 403 227 412M449 349Q441 365 451 381M305 346Q283 348 265 359M426 369Q426 387 436 403M363 221Q365 234 369 247M448 272Q440 302 469 314M177 393Q189 416 188 442M237 334Q232 353 229 373M506 266Q510 278 521 286M376 233Q373 259 356 279M258 239Q263 257 267 275M124 228Q116 228 108 233M417 308Q431 329 444 351M498 332Q508 338 517 347M195 163Q185 188 169 209M116 410Q109 416 108 425M207 303Q198 327 190 352M463 392Q469 419 496 420M377 266Q379 280 377 293M143 428Q149 440 156 450M240 288Q226 309 218 333M191 289Q195 299 201 309M356 216Q364 242 371 269M274 365Q278 382 269 397M206 337Q180 346 176 372M174 179Q171 194 160 204M502 357Q509 367 510 379M359 196Q377 217 387 243M454 189Q467 203 482 216M461 245Q458 263 449 278M166 433Q172 449 163 462M343 271Q333 287 334 305M272 393Q253 411 256 436M215 336Q212 358 209 379M274 271Q283 294 276 318M130 425Q125 430 121 434M281 158Q268 173 266 191M250 357Q256 381 239 400M274 455Q266 463 257 469M263 353Q247 378 271 395M225 490Q230 513 208 519M308 245Q307 259 301 273M108 326Q112 348 108 370M487 394Q498 401 510 407M300 227Q311 252 316 278M190 365Q200 377 196 393M307 282Q302 308 282 325M466 324Q475 339 483 355M293 305Q280 325 290 346M227 366Q216 387 215 412M454 198Q461 213 471 225M491 284Q510 300 513 325M228 290Q225 310 221 330M433 289Q442 311 457 331M224 262Q218 284 198 296M253 443Q229 456 229 484M277 229Q268 244 273 261M193 225Q184 239 184 257M97 347Q94 358 93 369M194 391Q188 408 181 423M395 157Q400 173 391 187M318 301Q308 316 306 334M154 387Q137 394 132 412M167 385Q165 400 160 414M382 208Q390 224 399 239M498 277Q512 300 521 324M108 376Q105 382 100 386M444 277Q451 291 464 299M460 349Q452 365 462 380M336 208Q364 218 369 248M168 426Q157 449 131 449M289 240Q278 266 278 294M139 203Q129 223 109 233M439 340Q426 363 445 381M382 162Q403 168 422 179M292 242Q306 264 317 289M411 183Q423 197 429 214M496 268Q507 276 517 286M116 269Q100 291 91 317M194 474Q187 491 169 496M346 252Q343 267 337 282M192 408Q180 422 190 438M306 239Q307 268 333 281M287 309Q284 323 287 337M439 180Q435 193 443 205M437 284Q440 296 448 305M457 220Q466 228 475 236M283 299Q281 320 266 333M226 432Q225 450 225 468M284 291Q278 302 281 315M108 326Q99 338 101 353M299 146Q302 158 312 166M244 335Q236 356 234 379M186 364Q182 377 188 390M434 278Q455 297 455 325M453 269Q449 289 459 308M506 381Q513 384 521 386M232 459Q206 467 181 480M238 243Q228 252 217 258M128 348Q116 365 121 385M406 297Q404 325 417 349M436 203Q437 219 446 231M199 480Q189 493 185 509M405 271Q412 293 407 316M297 261Q318 279 316 307M513 299Q522 309 532 316M249 301Q242 316 245 333M273 250Q269 267 264 283M101 332Q97 344 90 354M236 472Q217 484 198 498M164 360Q155 373 145 386M227 310Q219 321 215 333M473 383Q462 405 480 422M268 355Q272 386 244 401M288 308Q288 330 290 353M295 306Q295 333 295 360M200 414Q186 427 172 439M470 308Q484 321 495 336M441 338Q427 360 442 381M437 191Q455 195 470 206M250 286Q246 315 226 335M298 277Q302 294 289 304M372 163Q396 167 410 186M382 197Q392 205 392 218M242 407Q240 435 226 459M491 415Q492 430 501 443M423 220Q425 237 438 248M292 158Q293 182 274 194M490 355Q500 376 507 399M267 243Q273 252 278 262M131 421Q125 430 121 441M156 448Q147 460 151 475M441 191Q456 182 471 190M295 353Q291 368 297 383M217 433Q221 459 230 484M185 383Q175 400 164 416M266 164Q257 177 248 191M321 176Q341 195 360 214M446 274Q439 289 444 305M292 348Q290 371 280 391M512 365Q518 375 527 383M210 454Q208 465 203 476M500 348Q508 361 521 369M314 340Q318 362 312 383M306 239Q312 260 298 276M195 419Q192 433 191 446M502 272Q512 293 529 308M211 328Q206 346 195 360M276 153Q286 161 289 175M247 226Q254 240 252 255M328 181Q346 190 366 187M198 259Q193 269 183 274M194 439Q196 452 188 462M392 153Q393 174 397 194M305 248Q313 265 308 283M427 246Q434 259 440 272M269 276Q268 291 276 303M267 275Q257 296 242 314M427 339Q434 360 438 382M424 204Q424 218 414 229M434 276Q445 295 465 302M447 353Q445 371 440 388M454 273Q466 289 483 300M439 242Q440 258 429 270M285 253Q264 264 253 286M377 252Q378 264 382 275M449 340Q444 357 454 371M513 337Q520 344 525 352M307 220Q345 227 336 264M273 374Q253 387 230 397M434 172Q450 186 468 194M234 148Q210 162 199 187M312 269Q311 289 295 301M221 458Q197 468 180 487M295 323Q298 349 315 369M227 423Q226 448 218 472M229 395Q206 408 194 430M340 310Q326 334 328 362M199 435Q185 439 182 452M141 337Q146 353 149 370M365 244Q357 266 362 289M219 261Q205 282 213 306M438 276Q445 297 440 319M514 345Q518 371 532 395M246 320Q227 338 237 362M327 249Q340 260 343 276M336 244Q342 262 345 280M243 367Q230 380 234 398M472 335Q457 349 451 370M288 203Q304 219 305 242M482 386Q497 407 521 419M228 258Q203 268 177 264M341 254Q336 270 346 283M515 349Q520 363 528 375M447 216Q464 230 486 229M400 191Q396 209 400 227M457 363Q470 374 462 389M101 294Q110 316 98 338M419 167Q434 179 451 187M270 270Q261 284 253 299M244 371Q250 391 242 410M312 378Q305 390 292 393M243 158Q249 171 256 184M484 253Q491 264 495 277M362 241Q369 261 365 282M489 349Q482 375 489 400M436 398Q448 419 470 426M119 415Q114 438 127 457M490 339Q502 349 502 365M512 297Q517 305 526 306M162 432Q156 448 153 464M362 252Q364 274 357 295M437 310Q444 324 440 339M275 346Q271 363 258 375M500 308Q515 332 536 349M165 277Q183 299 174 325M368 235Q371 258 359 277M449 186Q467 196 488 201M281 186Q286 202 279 217M191 379Q197 399 189 418M506 336Q514 345 524 354M425 245Q442 258 432 278M197 166Q187 176 175 183M221 287Q219 304 209 319M413 259Q425 281 428 307M306 240Q290 259 271 274M299 234Q299 247 301 261M256 377Q245 394 237 413M190 285Q194 299 188 312M198 465Q181 480 165 496M296 274Q298 291 292 306M185 473Q181 486 178 500M446 354Q449 373 443 391M488 402Q480 415 478 429M221 318Q232 337 224 358M138 443Q134 452 131 461M497 272Q507 288 507 308M284 158Q290 175 293 193M191 417Q176 437 173 463M299 369Q297 388 281 397M278 329Q266 343 270 360M477 377Q494 391 503 411M199 363Q198 391 201 418M287 281Q274 302 278 327M425 279Q421 303 421 327M97 351Q93 356 89 360M426 174Q434 199 454 215M291 383Q298 407 292 431M354 150Q367 152 375 162M464 275Q464 294 468 313M456 205Q468 215 481 222M350 318Q341 334 340 351M214 341Q208 363 193 380M210 419Q198 432 184 441M245 297Q240 314 249 328M178 435Q172 448 164 460M269 245Q256 263 234 264M246 338Q235 364 239 392M212 278Q206 287 203 298M275 402Q263 413 260 429M242 408Q232 429 217 444M447 261Q445 281 448 301M494 254Q490 266 495 278M171 180Q149 177 135 193M417 272Q415 298 431 319M398 184Q396 207 412 222M450 271Q436 284 422 296M272 372Q265 393 246 404M256 477Q236 492 248 514M179 340Q179 367 160 385M191 397Q189 420 167 427M190 458Q187 471 181 483M200 399Q197 415 185 427M284 199Q275 209 261 213M298 215Q287 232 286 252M444 203Q444 220 442 237M497 259Q506 272 513 287M491 253Q503 259 507 273M253 229Q241 248 227 266M285 318Q288 335 281 351M117 375Q111 397 114 419M151 317Q155 342 170 361M223 346Q206 367 199 393M267 240Q259 254 262 270M234 406Q214 423 191 436M180 278Q168 288 173 303M319 245Q307 260 292 272M515 332Q530 332 533 346M242 440Q232 459 230 480M255 364Q248 378 244 394M139 426Q137 435 132 443M403 209Q408 223 421 231M254 277Q254 301 239 320M406 255Q421 278 407 300M298 301Q299 325 315 342M446 298Q425 322 443 348M402 200Q415 212 420 229M177 428Q181 446 174 463M308 385Q302 412 278 423M200 361Q197 372 194 384M397 194Q397 219 411 240M315 170Q335 186 360 186M235 355Q226 371 219 388M182 318Q178 333 175 348M265 269Q271 286 263 301M177 298Q179 324 166 348M236 202Q222 233 249 254M206 411Q190 425 172 435M260 231Q268 254 276 278M259 351Q256 372 252 392M145 198Q136 200 128 204M318 218Q311 247 331 269M478 312Q487 328 500 339M255 377Q252 390 261 399M484 311Q475 324 477 339M166 300Q177 325 184 352M449 353Q456 363 459 375M486 272Q463 292 469 321M445 391Q466 395 481 411M123 238Q112 237 102 241M297 389Q285 408 283 430M148 197Q136 201 127 208M314 299Q313 326 301 350M219 420Q209 441 206 463M170 463Q160 470 147 471M448 338Q458 352 464 367M151 447Q147 461 142 475M393 186Q384 196 380 208M339 179Q340 197 343 216M477 417Q490 442 492 470M253 352Q269 360 283 371M477 262Q485 278 499 288M232 363Q221 374 218 388M198 413Q185 427 177 443M167 331Q161 347 152 362M170 464Q158 462 152 472M301 382Q298 401 307 417M202 331Q201 359 181 378M252 456Q246 473 238 488M198 220Q184 227 168 233M334 167Q326 191 325 216M203 360Q184 377 182 403M498 276Q515 286 531 298M182 381Q180 402 190 420M337 180Q326 185 318 193M284 252Q284 274 273 292M332 178Q344 191 350 209M252 275Q246 293 246 313M322 234Q324 252 329 270M337 262Q350 284 345 309M237 400Q220 415 212 437M207 383Q212 410 201 435M290 366Q272 381 249 387M161 443Q146 456 143 476M265 297Q251 315 266 333M244 362Q237 377 238 393M395 155Q404 170 419 178M283 271Q256 294 281 319M319 375Q318 390 321 404M271 285Q282 304 278 327M254 178Q254 190 252 202M147 432Q144 444 138 455M436 171Q450 174 465 179M431 242Q417 263 418 289M106 370Q98 383 103 397M466 202Q485 216 487 241M114 369Q115 388 100 400M460 280Q468 298 477 315M209 463Q202 475 202 489M236 149Q223 161 216 176M325 279Q311 297 295 313M264 476Q245 497 217 501M346 217Q354 243 333 262M128 232Q123 247 110 256M210 327Q208 351 188 366M184 465Q188 483 185 500M124 225Q111 247 98 268M287 241Q282 256 275 271M162 393Q162 408 163 423M493 386Q505 396 518 389M249 371Q237 379 235 393M164 383Q156 398 148 413M210 300Q200 325 222 342M240 315Q241 330 241 345M283 323Q259 336 254 363M102 346Q95 355 86 363M291 259Q291 286 308 307M209 435Q205 446 201 457M130 217Q123 218 117 219M444 272Q442 296 455 318M199 474Q195 485 195 497M192 390Q188 401 184 411M487 334Q490 357 505 374M461 204Q480 212 494 228M233 323Q228 335 224 347M140 400Q140 426 134 451M352 199Q364 203 371 215M98 354Q103 373 93 389M339 254Q343 268 336 281M459 392Q463 419 473 444M516 314Q522 328 527 343M450 186Q453 202 460 218M508 358Q517 363 525 369M110 401Q105 414 110 428M160 321Q145 336 152 356M502 279Q509 291 518 302M472 213Q489 222 506 230M245 213Q247 238 237 261M313 236Q303 249 306 264M249 282Q241 307 231 331M392 205Q392 224 399 240M323 142Q327 138 333 136M369 185Q388 203 396 228M173 180Q160 182 147 185M328 290Q317 310 325 333M195 454Q198 468 186 476M310 254Q304 269 294 282M151 412Q132 423 114 437M123 228Q113 230 108 240M424 254Q443 271 449 297M151 258Q129 272 115 294M434 320Q424 347 439 372M191 448Q164 454 148 477M208 456Q196 474 188 494M292 308Q289 325 278 337M340 241Q318 257 308 282M474 408Q469 435 470 461M184 289Q175 311 173 334M405 289Q402 316 407 342M465 209Q450 229 457 253M243 429Q227 446 213 464M258 144Q231 157 225 186M369 215Q366 231 376 245M173 453Q171 464 165 473M276 287Q277 312 293 332M258 426Q242 434 231 448M213 429Q222 438 223 450M465 380Q476 396 487 413M172 428Q167 450 156 471M349 225Q350 245 348 266M423 244Q439 261 444 283M318 202Q335 216 346 236M305 359Q298 384 300 410M221 369Q211 376 201 385M173 177Q154 193 153 218M332 233Q338 255 339 277M255 285Q248 305 233 320M348 234Q344 247 340 260M246 355Q257 372 255 392M263 291Q255 306 242 316M502 392Q509 403 512 415M272 343Q265 357 259 371M331 304Q333 317 326 328M428 168Q441 169 451 178M261 252Q263 264 262 276M304 264Q310 285 324 303M500 347Q508 369 530 377M422 243Q427 261 429 279M269 278Q265 302 244 318M448 355Q447 380 457 403M220 269Q216 287 204 300M207 298Q204 320 185 330M173 364Q165 374 162 386M498 369Q496 386 511 397M402 155Q414 162 416 175M320 314Q310 320 307 332M489 374Q505 383 511 400M325 143Q304 154 312 177M424 303Q425 319 420 334M182 434Q183 461 186 488M210 267Q211 296 190 316M296 338Q284 356 284 377M312 284Q299 315 328 334M178 294Q161 313 151 337M449 241Q469 256 464 280M292 361Q300 375 304 391M272 262Q263 279 256 296M223 455Q207 480 220 507M362 208Q352 226 364 243M508 298Q511 326 531 347M270 288Q250 300 250 324M489 379Q491 400 505 416M495 389Q507 397 522 395M441 377Q461 398 454 426M339 185Q339 197 345 208M513 281Q520 289 526 298M250 374Q244 395 228 409M498 338Q507 346 514 355M163 302Q156 317 167 329M423 167Q433 190 445 212M319 254Q314 279 305 303M203 408Q169 407 160 439M251 425Q245 436 234 441M440 175Q441 193 458 198M433 215Q441 233 443 253M416 216Q419 231 431 240M195 311Q215 326 205 350M282 344Q279 360 276 376M177 412Q167 429 159 446M362 215Q373 239 395 254M195 460Q174 470 165 491M200 455Q190 475 198 495M228 204Q220 221 207 235M204 304Q203 317 206 329M446 344Q436 368 431 394M414 234Q397 249 398 272M250 339Q260 346 264 357M273 223Q273 241 268 258M105 275Q99 283 91 290M489 388Q505 404 498 425M207 168Q195 172 183 178M273 273Q262 296 270 320M492 414Q502 416 511 412M388 225Q407 236 419 254M372 241Q381 253 390 265M453 184Q474 197 478 221M227 450Q227 475 214 496M310 358Q315 378 302 395M487 234Q504 249 519 268M260 151Q233 153 207 146M231 257Q219 282 197 299M106 383Q106 394 102 403M303 199Q299 220 298 242M311 270Q315 283 305 293M292 283Q282 302 288 323M218 193Q228 207 221 223M496 369Q508 386 520 404M294 350Q312 369 300 393M184 411Q180 438 190 465M382 233Q385 254 394 272M227 337Q231 353 225 369M183 469Q187 482 193 493M294 302Q280 319 277 340M196 170Q187 186 174 199M499 340Q510 347 513 360M469 395Q482 404 489 417M266 149Q254 156 255 170M259 146Q260 174 234 187M152 203Q146 213 148 225M346 282Q342 297 348 311M254 319Q228 327 201 334M312 297Q295 313 294 336M439 314Q438 331 450 344M423 298Q442 310 437 332M241 294Q250 315 258 336M267 376Q252 391 257 411M104 361Q99 371 97 382M345 237Q348 262 346 287M156 422Q143 421 131 424M331 330Q310 346 316 371M232 230Q240 254 235 278M436 332Q444 356 466 370M218 472Q211 491 195 504M324 168Q347 177 357 200M232 388Q226 404 222 420M268 278Q268 290 264 302M160 331Q166 355 163 380M199 319Q200 339 188 355M206 278Q187 295 179 319M150 441Q143 452 135 462M239 221Q241 243 240 265M268 462Q263 488 243 506M278 197Q282 217 273 235M451 410Q445 426 454 441M173 454Q165 461 164 471M281 294Q275 310 262 322M221 321Q224 348 206 369M275 297Q272 319 288 334M437 327Q446 344 454 360M510 349Q523 361 536 373M346 229Q349 243 350 257M241 306Q232 316 228 330M345 186Q364 203 380 221M326 154Q337 162 349 171M117 416Q135 427 127 447M196 424Q174 430 162 450M175 323Q180 350 156 363M252 147Q257 162 256 177M254 224Q251 238 262 248M423 315Q427 341 407 357M185 226Q173 233 163 243M409 203Q406 229 408 256M432 249Q427 277 430 304M393 243Q389 258 392 273M471 276Q473 302 486 323M320 150Q322 163 322 175M389 225Q401 247 416 267M163 459Q178 476 165 495M226 379Q224 391 216 401M292 307Q288 327 280 346M451 385Q458 405 473 420M356 236Q345 254 346 276M342 293Q345 309 336 322M207 231Q202 241 198 252M168 467Q172 481 164 493M302 196Q294 208 284 219M317 239Q320 254 329 266M276 347Q278 363 273 379M166 376Q186 391 191 416M202 360Q186 373 180 393M500 270Q509 286 526 295M200 374Q193 393 189 413M242 456Q231 471 225 489M207 378Q200 403 204 428M255 385Q246 401 234 414M456 316Q445 340 435 366M261 381Q236 382 213 391M414 184Q420 195 430 202M257 300Q239 322 238 350M120 239Q111 242 105 250M200 450Q192 468 193 487M206 384Q199 394 201 406M146 361Q155 385 145 409M214 345Q198 369 171 375M315 364Q305 386 320 405M171 407Q155 414 148 430M208 207Q211 224 207 242M386 233Q403 248 419 264M195 291Q177 311 152 317M390 218Q406 237 425 256M192 445Q188 459 191 474M237 458Q217 469 196 478M512 336Q524 343 530 356M95 308Q90 311 84 311M417 231Q414 247 430 252M460 346Q475 366 492 384M281 146Q265 163 273 184M164 390Q160 405 151 419M200 483Q205 496 196 508M235 240Q219 264 227 291M330 288Q345 296 343 312M431 230Q468 242 455 279M314 315Q300 321 296 336M99 355Q95 365 95 376M460 327Q464 342 464 358M212 282Q199 307 173 317M364 239Q360 262 352 283M155 423Q171 445 162 471M446 178Q454 188 456 201M236 207Q257 226 252 253M196 362Q204 376 194 389M306 334Q301 353 293 371M259 339Q271 360 259 380M244 382Q253 397 243 411M223 420Q213 442 203 465M310 252Q313 268 305 281M335 236Q329 256 319 275M200 421Q191 440 176 456M178 471Q178 495 195 512M171 376Q160 390 150 405M480 289Q491 303 497 319M485 396Q476 427 500 449M470 284Q483 293 493 304M403 259Q415 272 421 288M101 309Q94 310 90 315M276 296Q267 317 256 338M356 254Q360 266 368 274M222 471Q221 488 216 504M217 490Q214 507 202 518M431 209Q442 230 453 251M231 353Q231 368 241 380M243 154Q234 170 228 187M260 310Q263 335 253 358M331 253Q328 270 321 286M190 360Q172 379 173 406M285 293Q273 306 272 324M178 174Q174 196 171 217M428 186Q425 212 433 238M179 416Q161 425 163 445M493 255Q486 276 496 296M194 446Q182 450 173 459M143 385Q141 410 139 436M232 411Q228 433 214 451M351 236Q344 257 341 278M286 294Q300 314 296 337M491 321Q502 338 502 358M329 232Q320 247 327 262M132 407Q127 419 123 430M225 332Q223 347 230 361M351 238Q349 250 346 261M273 154Q277 167 268 177M206 401Q198 420 206 438M261 331Q260 343 258 355M427 187Q444 204 463 218M198 298Q218 316 217 343M251 298Q246 316 256 332M204 158Q190 162 176 167M348 204Q364 224 358 248M153 442Q140 454 142 471M506 378Q513 386 520 393M303 198Q316 222 341 230M211 301Q205 315 194 325M427 314Q443 324 444 343M342 267Q327 285 325 308M254 356Q258 380 253 405M488 269Q493 280 498 291M167 265Q155 292 164 320M302 372Q286 392 278 416M142 421Q129 431 133 447M364 199Q359 211 359 225M395 190Q419 196 438 211M224 247Q220 272 211 296M318 380Q312 399 321 416M239 370Q233 389 232 409M201 457Q187 465 187 481M219 459Q218 482 202 497M245 328Q230 347 210 360M426 317Q418 329 423 342M319 259Q323 279 317 299M227 444Q216 458 204 472M420 347Q420 370 408 390M295 230Q284 245 269 255M196 271Q187 284 180 298M109 256Q95 266 100 282M439 264Q448 274 446 286M203 344Q205 372 197 398M373 262Q373 282 381 299M234 153Q216 173 190 178M506 349Q519 356 520 371M499 251Q511 245 523 250M190 324Q186 352 171 375M281 381Q262 388 246 400M267 347Q246 348 230 361M447 185Q453 196 459 206M111 322Q99 326 94 338M485 251Q501 255 502 272M180 430Q171 448 182 465M297 284Q308 307 316 332M254 454Q250 467 242 476M326 327Q325 347 322 368M509 281Q506 294 514 306M183 468Q190 481 180 491M249 252Q239 270 252 285M231 371Q230 398 214 420M147 381Q139 399 127 416M210 465Q218 490 204 512M336 265Q344 290 343 316M122 273Q110 295 115 320M419 297Q421 313 427 327M268 315Q261 329 245 330M455 198Q450 217 448 235M390 267Q388 286 389 305M192 170Q180 181 173 196M313 157Q318 171 320 186M251 235Q255 253 249 270M268 458Q252 480 226 486M240 407Q243 433 240 459M199 255Q189 267 177 278M117 260Q108 286 92 308M126 224Q116 225 109 233M383 158Q396 176 413 190M293 300Q291 325 274 343M289 233Q304 245 309 264M425 264Q436 278 449 290M249 277Q256 296 245 312M268 307Q263 322 257 336M218 351Q221 369 212 385M171 389Q149 403 137 425M380 248Q389 270 387 293M230 389Q234 414 228 440M196 473Q185 476 177 483M394 272Q378 290 380 314M472 353Q490 366 503 384M490 354Q497 365 503 378M340 220Q343 237 347 253M441 367Q448 378 458 387M463 243Q462 263 466 283M287 280Q279 294 286 308M266 355Q281 374 274 397M196 222Q179 244 185 271M195 430Q171 438 159 461M302 240Q292 249 288 261M226 334Q210 356 188 372M193 243Q191 267 181 288M471 225Q489 241 514 242M149 200Q139 210 125 213M276 265Q277 276 276 288M307 293Q312 310 311 328M463 237Q465 250 474 259M401 213Q409 239 423 262M369 245Q390 258 391 283M454 326Q467 348 472 373M244 426Q233 432 223 439M426 216Q430 230 427 244M478 376Q492 388 511 385M256 236Q243 251 227 262M425 245Q436 270 440 297M497 336Q501 347 509 356M267 311Q256 323 247 336M448 321Q450 337 460 349M325 200Q332 218 319 231M96 298Q91 300 86 301M444 314Q457 319 467 329M509 319Q529 330 520 352M504 281Q512 292 523 301M424 317Q435 335 429 356M460 281Q452 291 451 304M448 347Q447 373 443 398M275 236Q259 252 248 272M200 318Q180 338 171 364M485 278Q497 283 507 292M271 339Q257 347 247 361M313 303Q307 314 301 324M170 292Q147 297 134 318M199 412Q206 436 189 453M131 386Q142 411 134 438M102 354Q93 361 87 370M122 250Q112 265 109 284M186 380Q196 404 184 427M244 363Q226 369 213 384M212 355Q218 382 206 406M484 384Q489 399 488 414M202 424Q195 435 195 448M316 256Q292 276 293 306M98 299Q90 307 83 317M256 283Q245 292 238 305M254 307Q260 320 270 330M225 416Q214 428 200 434M287 311Q284 322 279 333M257 146Q259 169 269 189M323 292Q314 303 302 309M488 362Q498 374 508 385M445 335Q451 347 465 348M314 315Q313 330 307 344M254 273Q248 283 249 295M293 202Q313 213 330 229M250 454Q243 469 229 480M304 305Q292 315 292 332M221 374Q212 394 203 414M231 423Q214 439 211 461M317 345Q308 354 304 367M440 327Q431 349 428 373M365 237Q375 264 367 292M378 150Q386 167 400 178M166 425Q161 441 175 451M194 178Q175 191 158 206M428 226Q426 241 436 253M451 262Q461 268 468 279M305 290Q301 311 291 329M149 278Q145 301 136 322M408 162Q432 181 429 211M185 364Q178 379 173 394M467 250Q478 257 488 264M301 363Q284 383 266 403M200 474Q192 483 189 495M191 321Q185 346 176 370M271 334Q268 361 293 372M218 331Q220 355 202 369M310 143Q308 158 315 171M407 244Q407 260 395 271M256 415Q250 431 251 449M132 432Q129 436 125 439M456 367Q479 377 502 385M350 188Q356 200 363 211M476 291Q478 302 483 312M269 369Q265 394 262 419M319 195Q342 208 361 225M244 231Q247 249 235 262M472 290Q462 299 466 312M167 253Q181 268 169 286M283 357Q273 364 264 371M278 349Q295 364 292 386M443 224Q452 236 450 251M206 365Q210 381 205 396M259 279Q254 295 259 311M218 482Q209 490 200 498M513 278Q506 293 518 304M182 296Q180 307 181 318M358 215Q345 233 340 255M504 315Q514 342 537 359M509 374Q518 387 533 388M498 352Q512 374 529 394M201 460Q188 480 190 504M194 331Q179 351 167 374M331 176Q345 202 330 228M228 408Q219 416 218 428M435 308Q459 323 472 349M286 322Q293 344 290 367M480 313Q500 327 522 339M439 192Q442 206 437 219M112 392Q111 404 104 413M345 303Q347 324 339 344M476 224Q479 241 493 253M316 240Q301 261 289 283M274 406Q260 412 256 426M200 392Q201 409 188 421M94 307Q89 311 84 314M260 254Q263 275 263 296M138 227Q126 240 110 249M283 308Q274 322 263 335M459 217Q471 237 493 243M248 245Q250 269 239 290M291 145Q273 161 249 160M224 229Q208 242 200 261M500 398Q500 415 506 431M310 220Q302 240 298 260M469 384Q478 404 478 427M350 334Q349 353 352 371M335 225Q331 240 327 255M172 443Q170 466 165 488M303 269Q308 287 303 305M249 276Q245 304 269 319M120 235Q110 242 100 249M500 355Q502 378 516 396M198 415Q187 425 181 439M407 173Q414 187 424 200M213 266Q216 277 213 288M256 206Q259 226 256 246M501 333Q495 363 518 385M202 372Q189 386 194 405M449 380Q450 393 453 405M345 157Q367 170 358 194M452 316Q453 328 452 339M396 229Q400 246 403 264M422 304Q406 319 412 340M184 313Q184 332 179 349M252 381Q246 397 245 414M460 391Q475 413 486 438M465 333Q455 347 448 363M477 225Q471 244 485 258M346 246Q339 261 333 277M416 305Q427 325 418 345M486 372Q490 398 483 424M240 282Q242 304 245 325M239 316Q237 329 241 341M344 302Q365 320 372 347M329 300Q318 323 314 349M367 148Q382 142 396 150M462 327Q474 352 466 378M445 249Q453 274 473 290M267 371Q267 391 252 406M292 369Q277 389 283 413M250 235Q238 260 210 261M167 446Q164 461 175 470M236 400Q229 418 223 436M298 227Q289 246 288 267M440 382Q425 396 431 416M209 356Q204 379 214 401M275 146Q278 168 278 190M336 202Q340 219 341 235M232 299Q229 318 220 336M287 342Q281 356 273 369M233 396Q234 420 222 439M260 377Q255 401 254 425M266 445Q256 453 253 465M374 221Q372 239 372 257M386 244Q370 251 359 262M265 198Q266 220 272 242M248 296Q262 318 244 336M173 437Q157 453 160 476M497 273Q507 283 513 296M214 393Q213 407 213 422M294 200Q282 206 278 219M103 298Q100 317 97 335M497 279Q502 293 514 299M515 288Q523 294 530 302M195 396Q184 411 170 423M515 336Q524 344 533 351M446 233Q441 248 441 264M404 173Q421 182 432 198M215 480Q206 489 201 499M196 319Q198 331 190 341M281 346Q272 366 261 385M176 247Q182 261 175 275M287 301Q277 316 275 334M158 369Q152 389 141 407M286 308Q262 325 256 353M338 186Q348 194 360 199M487 251Q501 275 500 303M353 348Q351 374 327 385M322 203Q317 217 317 232M335 174Q356 186 379 183M427 232Q432 244 441 255M111 276Q104 279 96 283M340 174Q333 191 326 209M245 211Q237 219 230 228M440 292Q436 317 449 338M492 240Q504 253 520 260M221 459Q200 477 188 501M229 465Q221 486 216 508M352 212Q360 223 355 235M386 245Q385 261 382 276M359 147Q370 143 378 136M293 261Q281 277 262 274M474 313Q483 324 495 329M183 183Q176 201 161 215M370 154Q385 163 395 177M228 236Q220 248 213 261M490 405Q504 424 499 448M425 221Q433 236 450 239M200 447Q189 463 175 478M487 343Q503 364 520 384M493 225Q499 236 508 246M254 289Q246 305 240 321M225 470Q223 482 218 493M194 457Q188 470 197 481M250 307Q248 323 242 339M264 186Q258 215 230 225M484 387Q494 394 499 403M271 265Q270 281 271 297M335 217Q330 230 318 239M204 456Q200 483 174 492M189 350Q184 363 184 376M136 387Q141 400 133 411M213 442Q198 460 180 475M133 212Q123 222 108 224M135 411Q125 430 127 451M120 411Q132 432 129 456M141 316Q127 331 123 353M455 321Q471 336 481 355M182 413Q164 433 139 440M481 358Q507 373 511 401M487 253Q489 271 496 287M193 284Q219 294 228 321M254 301Q259 316 245 324M178 349Q172 367 172 386M464 221Q477 226 489 233M209 218Q220 226 223 240M505 326Q512 335 524 335M239 382Q225 383 211 387M275 309Q263 330 247 347M480 318Q494 336 508 354M177 453Q163 464 153 479M415 273Q431 295 423 322M297 264Q294 280 279 287M109 378Q106 390 101 400M111 328Q123 351 102 365M256 331Q250 350 251 370M267 304Q270 322 267 341M420 319Q401 343 408 373M465 371Q477 383 493 392M470 370Q485 388 500 405M248 219Q246 230 248 242M375 263Q364 281 355 301M476 204Q478 226 487 247M232 397Q207 408 185 423M442 328Q460 341 458 363M444 327Q455 351 442 374M437 220Q439 234 435 247M451 288Q449 300 453 312M171 401Q167 416 164 432M229 426Q222 442 216 459M456 352Q462 363 473 369M267 292Q268 304 269 315M447 354Q448 369 449 384M504 289Q510 316 531 336M475 410Q473 437 499 445M159 437Q161 451 161 465M216 293Q214 306 211 318M445 258Q458 281 466 306M477 396Q504 391 530 395M439 264Q436 286 454 299M206 330Q194 346 185 363M311 204Q316 222 315 240M189 173Q164 184 145 204M208 458Q205 475 207 493M232 270Q226 290 222 310M172 465Q158 468 150 479M309 297Q294 316 271 322M474 288Q489 310 498 336M309 238Q301 264 302 291M460 239Q470 247 475 259M455 256Q453 271 461 284M128 343Q133 357 137 371M239 473Q237 484 229 493M429 266Q448 277 467 290M332 143Q332 158 327 171M97 344Q92 353 91 364M260 330Q258 344 260 358M105 353Q99 363 98 375M432 207Q446 212 454 224M370 253Q370 266 361 275M245 366Q236 384 226 402M419 302Q421 319 420 335M360 239Q362 260 357 280M234 272Q226 291 212 306M476 281Q475 302 487 320M151 452Q151 459 146 463M157 330Q157 344 160 359M381 238Q395 261 403 287M198 351Q193 375 190 400M429 236Q455 246 481 254M169 312Q161 324 151 334M296 321Q294 334 299 347M446 368Q448 388 446 407M467 387Q454 403 446 423M230 338Q232 352 218 359M258 280Q252 300 249 320M220 340Q203 357 185 372M438 309Q447 317 454 328M260 168Q245 173 237 187M234 377Q228 405 239 431M140 318Q107 327 105 360M485 229Q492 254 502 278M221 304Q211 319 215 336M310 327Q299 342 299 362M271 376Q252 402 223 391M231 454Q225 476 219 498M231 296Q232 313 222 326M438 187Q454 209 480 215M229 317Q218 337 208 358M481 376Q498 385 505 402M273 258Q274 272 265 281M305 322Q298 348 319 364M435 236Q429 256 427 277M322 199Q318 218 324 236M178 324Q163 326 154 339M418 332Q416 355 419 377M100 330Q96 335 91 339M452 185Q460 210 465 236M236 230Q229 243 227 257M215 381Q217 393 220 405M461 293Q481 308 477 332M510 272Q522 290 534 309M364 234Q385 251 380 278M173 348Q170 367 170 386M368 154Q351 177 355 206M208 275Q202 294 186 306M180 389Q178 407 173 426M519 352Q526 354 532 358M427 371Q433 387 422 400M205 258Q197 281 191 304M166 394Q155 412 139 425M134 211Q126 222 118 233M255 303Q243 313 235 327M193 319Q213 331 219 354M172 393Q161 412 162 434M219 326Q215 339 226 348M429 170Q444 193 468 208M227 423Q215 434 205 447M445 307Q439 328 432 348M319 230Q327 243 319 257M455 398Q467 414 472 434M167 267Q158 285 150 304M280 293Q266 302 255 314M221 251Q207 273 200 298M483 348Q492 359 505 367M258 211Q258 237 264 262M230 276Q237 292 234 309M225 294Q221 306 219 318M165 442Q165 455 162 469M236 307Q230 331 209 346M462 295Q465 309 466 323M255 315Q245 333 226 340M279 361Q272 382 261 400M458 260Q478 262 480 282M302 309Q291 322 296 339M151 329Q155 358 135 379M292 243Q278 264 290 287M377 154Q385 168 393 182M400 223Q409 233 411 245M490 410Q497 416 504 423M257 326Q251 345 262 362M505 276Q511 295 527 305M484 328Q487 341 483 354M449 323Q442 346 417 345M240 279Q237 303 227 326M229 456Q218 474 199 480M224 330Q220 345 218 360M151 440Q147 452 146 466M337 270Q323 291 338 312M199 327Q196 349 176 360M242 340Q234 349 231 361M250 221Q247 246 248 272M290 263Q308 282 324 303M413 239Q415 251 417 263M118 404Q117 417 106 424M239 257Q248 274 232 286M266 335Q261 355 245 370M282 272Q260 290 261 319M162 239Q167 258 151 268M365 146Q359 156 353 165M221 154Q203 163 202 183M230 408Q216 427 229 446M122 265Q111 269 102 276M497 312Q501 325 505 338M213 386Q227 405 219 427M367 194Q363 213 379 224M453 227Q454 250 457 274M341 213Q341 229 347 244M181 398Q192 412 200 427M111 273Q115 286 107 296M189 220Q180 242 158 251M120 229Q109 230 101 239M323 224Q316 234 314 246M237 472Q219 492 214 519M301 323Q304 347 316 369M221 377Q218 396 209 413M461 397Q450 414 465 427M467 250Q466 271 465 293M370 254Q375 281 363 305M442 180Q450 178 460 179M217 258Q213 270 209 282M372 242Q373 258 365 272M116 233Q111 238 104 238M342 194Q331 214 327 237M253 364Q245 387 221 383M346 220Q337 239 335 260M412 164Q433 174 452 188M395 237Q417 248 441 255M195 337Q186 352 182 369M489 244Q489 258 493 270M217 369Q201 388 212 411M243 184Q221 200 210 223M438 255Q454 275 450 301M347 213Q340 231 342 251M334 246Q351 268 354 295M162 294Q153 308 157 324M196 214Q194 230 188 245M176 473Q175 486 165 492M189 428Q176 440 176 458M127 416Q117 426 119 441M283 282Q265 299 264 324M243 453Q234 466 235 482M279 334Q268 357 247 371M339 275Q334 292 337 310M248 274Q224 295 236 325M498 314Q495 335 501 355M202 412Q188 426 191 446M428 314Q422 333 408 349M196 307Q197 321 201 334M439 259Q441 286 455 310M468 237Q477 261 482 287M393 245Q398 263 407 281M211 209Q198 219 188 233M243 328Q231 346 220 366M226 409Q233 430 237 451M439 312Q446 321 449 332M402 230Q405 257 415 282M262 209Q244 221 235 241M278 271Q259 290 257 316M404 161Q431 172 435 201M235 361Q240 378 238 396M250 216Q239 238 225 257M359 337Q349 345 350 358M174 284Q184 302 196 318M321 287Q307 312 313 341M181 430Q170 444 166 460M242 441Q236 451 225 456M318 283Q316 294 314 306M433 214Q452 231 471 248M460 253Q464 277 447 294M104 326Q102 344 100 362M459 287Q457 318 481 336M252 202Q233 215 233 237M325 308Q331 328 314 340M143 203Q132 218 121 232M450 353Q456 364 465 372M449 182Q466 192 468 211M451 185Q449 211 445 237M446 289Q440 301 446 312M452 393Q478 403 473 431M334 341Q329 359 317 373M109 347Q100 353 92 360M477 269Q471 292 471 315M279 354Q272 379 274 404M311 371Q306 397 320 419M211 225Q199 242 196 263M300 329Q283 343 297 361M247 348Q245 366 240 383M336 235Q329 255 334 277M282 256Q283 271 291 285M296 259Q301 274 304 290M161 340Q175 350 167 365M431 253Q425 265 421 277M226 311Q208 331 205 357M201 475Q191 482 192 494M327 335Q304 350 304 377M249 314Q232 332 217 353M199 302Q198 314 201 325M492 314Q505 317 518 318M396 231Q403 247 404 264M294 230Q284 239 270 243M268 327Q279 338 284 354M462 197Q474 210 475 229M228 320Q217 324 208 330M350 261Q368 285 360 314M306 165Q306 185 303 205M377 226Q382 237 385 249M257 333Q257 354 254 374M223 393Q220 410 223 426M411 304Q426 329 423 357M94 325Q81 335 84 350M236 403Q218 408 217 426M267 301Q273 322 275 343M229 159Q210 168 198 151M343 230Q361 253 351 281M471 394Q473 417 491 433M503 335Q494 363 514 386M219 162Q210 179 197 193M255 367Q243 366 231 367M363 233Q368 246 364 260M426 280Q428 301 418 319M297 255Q286 277 283 301M113 242Q109 248 102 246M291 285Q302 310 302 338M236 320Q235 341 232 362M272 187Q260 202 245 215M302 224Q311 246 328 264M253 225Q246 251 236 276M297 271Q301 292 301 312M334 146Q344 158 335 171M479 373Q481 400 479 427M180 326Q196 350 179 373M262 380Q268 405 251 423M209 457Q203 468 193 475M462 286Q470 307 457 326M447 255Q453 273 470 282M204 403Q195 419 183 431M276 271Q266 292 265 315M263 370Q263 382 262 394M418 239Q435 254 444 275M478 375Q476 402 490 425M199 438Q201 458 202 478M436 185Q458 203 467 229M310 208Q311 228 317 247M224 420Q219 436 203 441M429 360Q423 380 440 392M507 377Q513 390 527 391M301 252Q302 276 305 300M379 215Q398 235 414 258M375 207Q363 224 375 242M249 442Q231 454 219 471M339 191Q344 204 354 214M305 208Q286 222 288 245M450 242Q452 271 437 295M395 158Q409 166 419 180M402 232Q423 250 425 277M162 182Q151 203 128 210M109 284Q94 304 90 330M420 226Q425 240 423 255M196 229Q178 249 182 276M480 381Q491 406 515 419M252 308Q265 316 272 328M189 448Q194 474 197 501M439 280Q429 307 442 332M190 298Q178 312 169 328M210 299Q203 312 193 322M465 279Q477 301 468 323M369 153Q387 167 386 190M340 264Q338 280 348 294M231 239Q222 247 219 258M259 240Q269 254 268 271M488 411Q500 417 508 429M266 257Q255 277 256 299M259 345Q243 361 228 379M450 323Q458 333 457 345M365 166Q387 176 407 189M420 286Q443 300 465 313M222 271Q222 299 236 323M103 363Q97 385 99 408M262 273Q260 286 248 292M465 379Q455 405 435 425M483 294Q476 321 502 330M484 405Q484 422 496 434M263 355Q263 372 257 388M341 352Q350 360 354 372M151 272Q141 285 144 301M454 351Q462 377 487 384M192 477Q188 485 189 495M423 234Q434 246 439 261M439 333Q439 350 446 364M287 329Q274 350 269 374M472 334Q480 348 486 363M118 241Q108 245 99 251M264 202Q264 218 270 233M219 151Q202 160 183 166M248 447Q234 455 225 467M300 146Q281 148 269 134M317 206Q322 234 342 255M476 311Q500 325 496 352M254 244Q257 257 255 271M199 349Q193 365 181 378M450 186Q460 193 471 198M517 304Q533 323 536 349M383 244Q385 260 395 273M99 285Q93 290 86 292M423 163Q441 163 454 174M237 259Q233 281 228 303M287 277Q298 293 310 308M197 304Q202 318 199 332M229 194Q233 218 221 240M292 183Q297 200 306 216M212 475Q210 489 204 502M352 328Q335 341 321 357M309 243Q304 270 309 297M213 481Q189 483 167 493M185 435Q192 458 177 475M304 227Q297 237 298 249M238 347Q222 364 218 388M127 250Q146 288 106 300M384 247Q391 276 374 299M316 307Q312 322 315 337M266 304Q262 327 259 350M263 214Q260 242 238 260M334 264Q329 283 316 298M157 439Q156 450 151 460M300 251Q308 268 304 287M506 298Q511 321 515 344M257 427Q239 441 223 456M263 311Q266 322 267 333M269 218Q274 231 279 244M349 152Q366 164 380 180M304 279Q308 292 321 297M291 277Q286 302 306 317M246 454Q235 462 225 472M459 350Q469 368 485 381M277 307Q276 321 288 327M188 180Q165 194 139 200M457 391Q469 400 483 406M173 318Q162 327 163 341M346 284Q342 296 342 309M200 337Q201 349 206 360M277 250Q266 261 267 277M456 300Q459 312 459 325M212 306Q213 334 224 359M407 172Q418 188 435 179M307 255Q313 278 309 301M268 143Q259 164 251 186M220 363Q212 380 195 388M442 178Q455 183 468 184M279 236Q253 260 276 286M257 279Q255 297 255 316M160 353Q147 370 161 386M204 310Q189 330 186 354M326 267Q305 284 302 310M507 367Q509 383 516 398M317 335Q318 355 307 371M206 376Q214 402 206 428M380 248Q397 268 417 284M313 285Q308 295 305 306M452 268Q453 286 458 304M467 332Q455 352 456 375M169 443Q164 457 149 463M276 259Q282 280 281 302M193 475Q198 486 193 498M433 185Q432 203 437 221M515 350Q521 356 530 354M263 212Q264 227 256 241M314 212Q309 227 312 242M266 272Q245 292 247 321M175 368Q162 381 150 395M100 362Q95 365 90 369M173 437Q171 460 176 483M232 264Q228 281 214 291M362 239Q360 258 355 278M334 223Q345 231 347 245M169 450Q180 464 176 481M382 200Q403 212 409 235M220 291Q224 306 231 321M433 179Q425 194 432 210M177 327Q186 336 194 345M338 228Q352 241 363 256M240 276Q242 291 239 305M234 198Q240 224 239 250M199 477Q194 489 188 500M351 245Q367 260 369 282M240 304Q251 333 229 355M472 211Q474 238 496 253M124 410Q116 417 111 426M369 192Q358 210 369 228M437 321Q416 337 402 360M420 169Q419 187 430 202M294 309Q303 320 306 333M457 272Q465 283 463 297M498 268Q509 281 522 293M395 257Q413 276 400 299M169 268Q160 278 149 286M450 274Q460 286 453 299M511 344Q517 353 528 354M215 308Q207 321 203 334M437 181Q455 190 472 202M409 289Q411 318 426 341M448 255Q465 260 474 277M404 197Q412 214 415 233M278 142Q267 165 247 180M293 147Q287 170 270 186M284 288Q282 306 271 322M322 378Q322 393 324 407M139 281Q131 307 111 326M224 253Q226 268 224 283M308 179Q321 203 343 221M200 262Q199 279 191 295M340 321Q346 336 350 351M179 447Q178 461 173 474M272 316Q257 317 251 332M286 306Q279 328 274 351M279 365Q300 385 298 413M342 282Q361 305 356 333M238 433Q218 448 201 466M347 217Q346 233 334 245M347 298Q324 313 313 338M141 403Q138 416 136 430M113 407Q116 420 115 434M492 370Q503 384 520 385M477 283Q492 295 493 313M397 181Q406 189 408 201M172 451Q161 465 151 480M434 266Q438 280 433 293M293 347Q295 359 299 370M448 346Q459 366 447 385M258 365Q266 391 265 419M244 451Q231 466 222 483M304 311Q280 319 282 344M199 378Q197 392 197 406M199 262Q195 284 197 306M281 331Q283 357 290 383M223 446Q215 460 200 469M240 433Q226 446 209 457M467 370Q461 383 462 397M374 194Q386 214 409 218M492 250Q504 253 512 263M443 304Q447 324 453 343M228 233Q222 258 211 281M115 243Q108 243 102 244M437 371Q439 389 449 403M176 372Q178 396 155 405M452 419Q453 435 451 451M365 258Q364 271 361 283M476 339Q479 362 486 383M299 230Q298 252 289 272M250 344Q263 365 256 388M349 147Q340 155 333 164M514 348Q519 368 526 386M222 291Q204 311 177 313M431 336Q439 347 434 361M255 227Q246 252 247 277M164 325Q154 349 143 372M314 287Q318 308 316 329M235 454Q227 467 220 479M243 369Q243 389 242 410M323 189Q328 216 346 236M196 276Q192 287 192 299M222 227Q222 250 206 268M294 208Q296 221 297 234M327 206Q340 213 348 225M209 287Q209 299 210 311M258 257Q248 271 258 284M200 299Q201 323 203 347" fill="none" stroke="#9c8264" stroke-opacity="0.176" stroke-width="0.6" stroke-dasharray="3 1.5"/><path d="M192 415Q202 435 205 456M269 195Q267 208 266 220M488 333Q501 336 505 348M158 345Q163 357 161 369M221 290Q229 306 234 323M146 349Q135 356 126 365M424 238Q417 256 426 273M190 239Q168 254 155 277M352 176Q356 199 376 211M430 237Q438 259 446 281M196 280Q182 296 175 317M207 269Q198 285 192 302M215 440Q211 466 200 491M463 224Q476 229 478 243M203 352Q191 377 175 399M487 262Q496 286 506 310M477 334Q486 358 492 383M258 179Q248 202 244 227M108 367Q99 386 101 407M170 221Q161 245 157 271M321 235Q314 261 320 286M192 180Q181 192 166 191M419 241Q431 253 439 269M447 226Q460 240 462 260M259 153Q246 180 262 205M167 316Q152 326 149 344M228 360Q226 380 228 400M403 240Q404 258 418 271M189 257Q187 271 184 286M421 252Q435 250 446 258M357 196Q366 221 392 228M200 301Q191 326 180 350M367 211Q380 225 391 241M166 191Q154 201 139 198M263 207Q256 221 257 237M139 379Q131 390 124 401M141 435Q136 441 128 444M167 351Q171 367 159 378M159 314Q148 332 150 353M195 321Q176 341 153 355M99 307Q96 313 89 314M277 178Q276 191 268 202M344 218Q346 234 334 245M376 218Q376 244 380 270M450 227Q452 238 459 247M340 219Q354 237 361 259M166 286Q165 298 164 310M362 167Q360 186 363 204M192 459Q185 469 182 480M413 186Q410 201 418 214M305 213Q302 224 303 235M267 185Q266 200 268 214M404 190Q415 195 418 207M224 239Q220 255 219 271M258 287Q246 313 217 312M191 420Q179 438 177 459M190 313Q194 341 183 366M406 232Q412 254 426 272M216 226Q211 237 212 249M421 190Q416 212 411 234M180 280Q182 303 175 324M282 199Q278 216 263 226M169 397Q162 408 166 420M203 178Q185 191 166 179M257 195Q245 212 232 229M509 301Q515 328 512 355M123 385Q116 412 131 435M247 161Q232 184 228 211M206 447Q198 465 184 479M118 254Q107 263 94 265M132 360Q125 380 126 401M470 316Q479 334 485 353M402 223Q402 245 417 261M159 371Q151 392 147 414M477 371Q493 378 510 378M400 194Q404 208 412 219M196 401Q188 419 192 437M471 373Q492 379 509 394M243 324Q234 347 251 364M189 298Q162 309 159 338M456 197Q458 221 461 245M323 221Q325 235 330 248M169 411Q161 428 174 440M198 331Q180 350 177 376M162 295Q160 314 147 328M192 395Q195 408 190 421M201 169Q182 182 160 187M353 180Q356 206 355 233M207 170Q193 182 188 200M155 445Q156 462 143 474M475 351Q467 375 485 392M333 173Q337 189 338 204M145 301Q130 310 120 324M201 223Q198 246 180 259M314 215Q320 232 320 250M242 202Q243 222 240 243M121 280Q121 300 120 320M485 312Q491 332 501 350M136 209Q125 213 117 221M117 349Q120 361 117 373M447 242Q459 251 455 266M445 191Q461 206 463 229M464 283Q481 301 481 325M457 261Q459 274 469 284M211 200Q211 213 212 225M244 288Q233 308 230 331M204 218Q196 233 204 247M292 173Q275 195 291 219M178 431Q168 438 166 451M458 311Q475 333 474 360M174 263Q164 283 163 305M194 376Q192 392 199 406M433 229Q444 241 453 255M110 287Q102 298 89 301M204 195Q195 220 179 241M265 204Q261 222 255 239M244 156Q226 168 230 190M160 216Q164 234 156 250M484 268Q494 281 502 294M112 291Q114 322 89 341M131 219Q117 234 100 247M464 301Q473 320 481 340M484 260Q498 271 515 275M202 313Q198 324 193 334M312 200Q332 203 341 221M423 181Q427 193 428 206M491 318Q505 333 516 352M375 224Q377 240 384 255M119 399Q126 412 120 425M127 308Q119 332 98 346M238 234Q217 240 216 261M440 253Q456 271 471 289M433 255Q434 275 437 294M246 163Q237 177 220 183M194 292Q174 315 191 341M202 325Q185 348 198 373M404 179Q404 192 403 206M266 212Q268 232 258 249M175 404Q172 426 165 448M188 427Q191 438 189 450M198 217Q200 230 192 240M181 175Q167 170 154 178M164 388Q155 413 155 440M394 230Q409 252 391 271M404 172Q415 174 427 174M222 278Q223 306 232 332M276 231Q266 239 263 252M165 309Q153 327 147 347M302 233Q301 246 311 254M495 327Q508 348 506 372M222 410Q237 429 250 449M319 195Q316 216 328 233M265 230Q272 247 268 265M195 219Q182 240 174 262M155 370Q147 387 147 407M216 405Q195 417 180 436M467 275Q468 289 468 303M244 238Q243 261 256 280M483 304Q497 322 483 341M241 238Q246 252 244 266M265 217Q276 229 273 245M496 307Q507 317 517 328M450 202Q465 223 490 230M444 217Q445 234 449 250M187 461Q182 473 175 485M208 392Q201 414 206 437M246 253Q232 272 220 292M200 170Q187 180 175 189M311 214Q323 239 347 252M167 182Q157 188 146 194M344 197Q344 210 346 221M180 175Q190 197 171 211M473 352Q487 369 510 371M132 421Q134 431 132 442M342 198Q352 203 358 214M174 288Q160 291 157 305M463 223Q458 239 463 254M272 243Q280 269 282 296M283 215Q303 233 306 259M418 209Q414 228 420 246M484 301Q502 307 505 326M128 244Q121 255 110 261M291 197Q288 224 290 252M248 280Q248 292 246 303M149 307Q141 323 134 339M194 328Q188 350 205 365M195 331Q191 344 190 358M462 358Q452 387 479 400M505 324Q510 336 515 349M253 217Q249 229 242 240M133 328Q138 338 139 350M191 368Q171 378 151 388M181 453Q168 463 157 476M156 319Q138 318 122 324M110 387Q105 389 101 392M237 312Q227 324 221 338M220 262Q218 273 212 283M163 346Q159 360 160 374M179 221Q168 228 160 240M456 242Q469 255 471 275M460 249Q470 271 479 293M118 313Q106 332 99 353M397 246Q392 262 400 276M454 292Q440 310 437 332M162 192Q163 216 141 226M159 288Q164 299 163 311M117 350Q104 367 92 384M352 180Q337 195 321 210M329 200Q332 216 326 231M469 282Q474 306 498 312M138 398Q126 408 110 410M199 339Q196 354 202 368M330 166Q340 177 349 188M160 413Q165 439 152 462M324 172Q343 181 350 201M266 177Q245 183 234 203M500 372Q511 385 526 393M486 384Q485 401 485 417M229 230Q222 241 217 253M476 320Q491 335 497 355M177 188Q156 202 138 220M360 223Q371 245 382 267M199 386Q191 409 176 428M211 310Q204 328 204 347M483 348Q485 360 490 370M490 260Q487 272 486 285M271 243Q287 270 271 296M425 254Q443 267 440 289M459 329Q475 348 469 372M468 317Q480 331 488 347M485 382Q498 392 505 407M249 262Q244 279 229 290M242 184Q240 198 250 209M440 268Q448 277 451 288M297 190Q292 207 279 221M222 316Q211 336 210 358M414 207Q430 225 453 229M460 253Q474 263 481 279M458 322Q467 343 485 358M216 196Q209 205 207 216M206 383Q199 399 187 411M115 386Q116 403 111 420M227 186Q227 198 234 208M220 268Q238 278 247 297M412 229Q423 247 421 267M260 150Q261 167 253 182M450 277Q442 296 432 314M474 248Q487 256 497 267M301 227Q314 241 308 260M343 195Q357 199 361 213M481 370Q489 394 502 415M212 422Q214 437 212 453M428 208Q441 220 459 226M314 147Q319 158 328 165M199 424Q196 448 184 469M339 200Q346 222 359 241M213 186Q236 201 233 229M227 259Q237 279 244 299M193 271Q190 283 178 290M108 340Q100 359 87 374M391 158Q402 179 425 181M180 248Q170 258 159 267M394 205Q386 227 377 248M338 212Q323 233 336 255M154 222Q134 237 112 250M187 457Q178 468 178 483M189 266Q191 288 182 308M175 413Q170 429 166 446M261 172Q267 186 266 201M116 256Q105 263 99 275M303 223Q315 236 329 247M474 287Q487 301 498 315M438 210Q437 228 438 245M181 323Q173 338 173 354M218 232Q215 259 223 286M461 368Q471 382 482 396M186 284Q174 293 166 306M478 272Q479 296 484 320M267 209Q262 227 260 246M488 348Q496 368 507 386M236 291Q238 313 240 335M182 222Q177 248 168 272M472 207Q470 223 479 235M418 232Q414 245 410 258M263 165Q264 189 260 212M150 448Q141 452 135 460M123 233Q130 251 121 268M103 311Q93 318 90 330M444 260Q446 272 452 282M479 341Q486 362 507 369M199 421Q190 441 167 438M409 225Q412 247 433 257M325 158Q325 171 322 183M466 273Q456 284 449 296M451 221Q483 237 469 270M387 192Q394 213 397 234M239 249Q239 264 235 279M365 215Q359 227 360 241M211 435Q201 445 190 453M296 164Q307 178 324 181M131 350Q107 354 101 377M163 289Q153 301 162 314M367 236Q367 253 364 270M234 232Q218 253 225 278M215 407Q198 426 180 444M149 436Q135 443 126 456M423 196Q441 198 447 215M301 167Q298 188 299 209M157 245Q134 260 108 268M222 160Q212 185 204 211M347 194Q355 209 359 226M403 189Q419 199 433 212M206 302Q202 315 199 329M259 257Q257 276 255 295M192 386Q189 399 181 411M196 349Q191 368 207 382M205 338Q191 350 189 368M160 430Q154 439 147 448M253 243Q253 258 245 272M180 383Q187 397 180 411M177 446Q176 460 173 474M135 423Q130 434 125 445M233 159Q217 168 211 186M384 222Q402 237 405 261M442 194Q444 224 473 230M205 239Q188 241 182 257M406 199Q423 220 434 245M228 276Q213 299 199 322M389 232Q391 246 389 259M387 178Q400 179 413 183M463 352Q456 376 469 397M330 204Q314 222 305 245M164 458Q149 465 149 482M174 328Q164 346 152 363M209 292Q202 315 203 339M405 200Q417 213 415 231M268 164Q263 180 250 191M497 382Q505 390 512 399M210 408Q206 425 200 440M115 312Q112 332 94 343M179 354Q180 373 180 391M469 283Q479 302 498 310M135 390Q144 417 126 440M363 156Q377 158 390 164M176 340Q194 365 181 393M437 201Q463 214 474 241M420 261Q398 273 386 295M322 184Q310 208 323 232M451 223Q456 240 462 256M133 228Q119 245 122 267M254 195Q239 204 247 219M326 156Q305 158 296 177M208 380Q202 405 194 429M170 428Q170 440 168 451M150 309Q151 325 138 334M110 361Q116 384 116 407M208 366Q194 385 171 385M127 237Q119 252 108 266M202 411Q218 420 226 438M335 180Q328 201 341 219M144 350Q149 363 157 375M339 174Q347 184 350 196M138 240Q117 249 108 270M481 374Q486 395 501 410M389 160Q395 180 409 196M462 339Q475 352 476 370M222 316Q206 336 208 362M161 436Q161 454 149 467M206 285Q201 297 195 310M316 221Q304 242 299 266M181 396Q180 421 170 443M203 434Q197 449 203 463M205 200Q189 218 176 238M359 226Q357 244 358 262M471 339Q458 357 457 379M433 203Q444 210 456 213M180 368Q168 385 181 401M386 239Q376 243 367 250M301 212Q299 237 296 262M447 250Q453 262 466 265M150 261Q136 270 123 279M257 204Q245 211 244 224M216 238Q210 264 192 285M139 353Q128 367 121 383M211 244Q210 259 206 274M120 277Q115 306 92 324M475 317Q486 335 498 352M203 409Q189 418 187 435M152 254Q137 276 113 286M226 218Q227 240 240 258M233 256Q234 277 229 298M195 239Q187 255 170 259M357 238Q345 244 344 257M194 173Q196 190 179 193M113 386Q104 394 98 404M229 366Q227 384 211 392M161 449Q149 461 155 477M125 361Q119 390 141 411M184 456Q195 479 186 503M421 245Q423 265 432 283M167 181Q159 196 142 198M431 256Q446 265 455 280M479 217Q482 230 493 237M143 355Q133 375 130 398M115 363Q107 372 99 382M339 169Q344 182 350 195M253 245Q244 267 228 284M228 192Q214 213 214 238M202 407Q194 417 184 426M488 345Q494 359 501 372M461 210Q476 228 485 249M162 225Q152 233 154 247M241 233Q238 254 228 271M211 169Q203 189 186 201M294 240Q293 257 288 272M332 220Q326 236 335 250M183 280Q193 293 194 309M196 305Q168 306 147 325M211 227Q200 249 203 273M114 326Q109 353 95 377M353 177Q369 188 367 208M271 237Q272 254 262 268M429 214Q446 234 471 242M247 202Q238 223 247 245M257 254Q262 278 262 303M432 253Q453 271 463 297M215 297Q194 314 186 339M290 246Q301 257 291 270M393 228Q394 243 393 258M270 212Q270 225 263 238M475 223Q481 244 494 262M143 385Q153 398 156 415M225 288Q210 301 208 321M294 218Q303 237 312 256M344 208Q354 223 368 236M507 352Q520 359 533 365M393 180Q422 196 413 226M173 370Q157 376 147 390M164 393Q163 406 153 415M414 188Q430 201 449 206M172 271Q177 283 174 295M102 342Q95 359 89 376M218 414Q221 438 211 459M484 232Q490 246 494 261M191 321Q195 332 200 342M486 279Q487 299 493 317M440 191Q439 218 459 236M252 212Q253 232 246 251M483 245Q484 272 493 297M157 427Q152 448 146 469M205 261Q215 286 212 313M500 318Q510 323 519 331M474 286Q481 296 485 308M189 181Q173 194 162 212M178 271Q174 288 164 302M211 356Q209 374 207 391M477 261Q481 273 491 282M427 277Q443 300 443 327M185 375Q163 384 145 399M429 219Q443 244 470 253M473 294Q479 318 496 336M107 331Q112 349 100 362M181 385Q177 406 163 421M348 202Q353 217 349 231M213 293Q226 313 237 334M500 349Q510 362 508 378M167 357Q153 376 141 396M262 211Q256 223 256 237M477 248Q497 259 515 272M180 322Q169 337 155 348M419 212Q428 224 426 239M186 236Q165 241 145 248M497 296Q512 308 521 326M267 146Q267 167 275 185M448 272Q455 284 460 296M497 315Q511 317 518 329M177 185Q158 187 141 197M483 299Q468 321 471 347M299 209Q285 226 272 243M207 280Q203 293 201 307M375 218Q374 239 384 257M188 459Q177 470 165 479M353 181Q376 197 389 221M143 388Q141 408 137 428M432 248Q448 261 449 281M317 153Q328 176 334 201M153 287Q132 303 117 324M159 327Q150 337 150 351M160 259Q156 273 153 287M362 155Q363 173 353 189M284 252Q279 263 273 273M427 176Q433 190 445 201M141 231Q124 241 111 256M243 228Q231 251 235 277M117 275Q119 298 100 311M283 226Q289 245 289 265M369 211Q360 224 353 238M306 215Q316 234 315 255M373 231Q376 248 382 264M461 284Q471 290 475 301M236 195Q214 204 203 224M323 202Q323 219 337 229M191 237Q191 254 181 266M167 228Q158 254 150 280M384 162Q394 170 405 177M130 221Q122 224 116 227M270 170Q272 193 284 212M392 166Q388 194 404 217M437 200Q445 224 464 242M398 214Q406 238 431 241M279 235Q269 261 286 283M388 201Q410 205 420 226M385 238Q399 260 401 287M478 245Q471 263 481 280M141 271Q119 284 98 297M444 183Q462 182 473 195M191 270Q195 297 192 324M430 183Q439 191 450 197M197 194Q184 217 167 236M411 256Q404 272 401 288M140 407Q134 417 125 425M335 220Q323 238 310 254M360 219Q360 233 372 242M190 436Q195 461 182 482M118 388Q123 410 122 433M118 254Q101 259 91 273M206 442Q210 454 204 465M108 315Q103 326 92 329M150 434Q136 445 135 463M186 191Q173 207 172 227M431 256Q435 280 447 302M228 159Q218 175 208 190M138 291Q153 315 144 342M473 276Q478 292 476 309M336 177Q348 192 361 206M340 178Q341 190 350 198M297 201Q297 227 283 248M278 170Q269 185 262 202M234 245Q222 252 214 262M206 341Q199 353 209 363M190 281Q184 304 196 326M493 270Q497 288 488 305M185 402Q174 421 180 442M349 208Q352 225 361 241M475 351Q480 363 482 377M224 359Q219 386 200 406M499 335Q500 364 527 376M322 230Q307 243 303 262M271 213Q280 226 271 239M427 235Q436 243 441 254M224 233Q206 253 188 273M186 423Q196 431 198 444M112 392Q106 401 100 409M443 292Q445 318 432 341M287 235Q275 254 284 275M422 205Q416 222 420 238M453 248Q460 272 455 295M506 328Q508 351 515 374M240 199Q250 210 242 224M186 273Q166 293 171 320M275 187Q270 202 259 213M208 162Q201 181 186 195M398 160Q414 171 427 185M215 224Q201 240 187 256M212 311Q208 331 216 350M284 242Q279 264 267 284M222 230Q212 255 200 278M207 273Q198 294 193 316M193 451Q184 466 171 479M479 364Q489 370 496 379M500 322Q522 325 536 343M379 220Q379 233 385 244M485 331Q492 339 497 349M131 404Q136 415 137 427M231 154Q218 157 206 159M205 403Q196 413 194 426M199 204Q180 213 170 231M118 251Q107 257 96 265M135 365Q117 368 103 379M127 293Q126 308 133 322M200 406Q190 420 191 437M287 202Q297 217 308 232M199 464Q184 476 166 480M219 280Q217 293 212 304M109 295Q102 322 103 349M107 346Q95 354 89 368M241 241Q227 255 228 274M219 161Q205 171 202 188M492 319Q500 330 507 341M200 219Q186 228 188 245M403 236Q405 256 425 261M157 197Q157 222 145 244M250 194Q240 218 224 239M383 220Q405 231 415 253M249 229Q256 252 256 275M227 281Q214 298 224 316M446 221Q438 233 442 248M459 246Q476 252 493 246M147 428Q143 448 146 469M492 270Q508 280 506 299M230 158Q222 181 207 201M317 201Q310 215 297 223M216 291Q225 305 226 321M198 275Q190 299 187 325M185 449Q168 464 167 486M107 359Q104 369 98 377M207 250Q201 267 183 272M161 400Q142 408 131 426M125 241Q113 250 105 263M404 205Q420 220 421 241M268 164Q261 178 248 187M455 266Q471 276 477 294M493 274Q488 291 500 304M218 270Q201 278 197 296M401 226Q407 244 419 258M185 298Q187 314 193 330M115 257Q105 265 100 275M405 219Q415 229 420 244M279 208Q285 230 291 252M210 271Q193 293 193 322M417 250Q420 275 427 299M152 207Q137 215 131 231M359 210Q369 235 394 245M468 241Q464 265 473 288M480 360Q498 376 503 401M204 163Q185 165 179 184M424 209Q431 232 447 250M457 246Q463 257 467 269M422 187Q433 195 439 206M241 324Q246 340 233 351M249 151Q238 171 225 190M312 243Q318 254 310 265M100 357Q97 371 94 386M177 326Q186 341 177 356M207 270Q212 289 205 308M450 281Q453 292 450 303M190 440Q179 457 174 476M196 354Q177 372 154 386M400 200Q407 219 419 235M285 243Q281 261 288 277M213 268Q234 292 223 321M314 196Q303 208 292 220M216 179Q212 193 215 208M163 347Q160 367 147 382M124 346Q122 371 123 396M190 242Q171 256 154 270M146 430Q143 456 154 480M158 437Q157 456 161 475M340 230Q331 256 346 280M369 226Q364 244 365 263M393 212Q420 220 427 247M361 152Q378 164 398 171M158 226Q161 250 161 274M396 187Q403 201 408 216M107 301Q107 319 93 331M393 239Q392 252 386 263M471 360Q482 382 492 404M144 369Q145 388 137 404M507 335Q516 343 525 352M415 248Q411 267 427 279M108 367Q107 379 95 378M164 356Q151 357 140 363M105 280Q93 282 93 294M297 153Q290 178 267 187M208 391Q188 408 183 433M279 261Q303 272 297 299M363 180Q373 188 380 199M154 439Q154 456 146 471M183 376Q180 395 189 413M168 459Q161 466 156 474M443 267Q452 282 457 299M168 184Q155 198 139 207M386 230Q374 249 373 270M136 358Q137 371 139 384M207 236Q196 254 187 274M187 322Q168 329 164 350M479 272Q491 284 490 301M464 204Q475 212 479 224M211 366Q216 385 202 398M467 228Q476 255 498 271M184 207Q174 216 167 228M279 245Q266 262 275 281M469 353Q476 372 495 380M110 288Q106 305 92 314M176 307Q184 328 176 349M297 196Q291 217 286 237M173 182Q161 195 146 203M501 289Q514 306 532 316M231 153Q214 163 206 180M387 159Q410 166 408 189M459 288Q458 307 475 314M213 232Q203 247 197 264M126 293Q133 313 136 333M174 319Q158 339 149 362M236 257Q239 276 246 293M369 224Q380 245 402 254M204 377Q218 401 205 426M448 190Q448 206 447 223M109 261Q101 266 95 274M369 202Q379 213 390 223M238 245Q224 268 213 292M193 359Q188 383 198 406M468 297Q472 315 482 330M123 236Q110 253 101 271M360 229Q368 251 377 273M397 165Q416 169 420 189M304 218Q318 238 299 253M310 190Q312 202 315 214M226 157Q202 173 191 199M282 233Q282 245 281 256M247 159Q224 178 230 206M201 394Q195 415 181 431M452 280Q464 301 482 319M194 429Q187 455 211 468M505 322Q510 346 517 369M202 163Q192 169 187 180M461 249Q448 268 466 282M355 171Q357 187 370 197M401 193Q400 211 396 229M367 187Q383 207 373 231M221 352Q214 379 226 404M336 179Q316 175 296 178M495 281Q507 299 529 298M200 423Q184 430 175 444M236 173Q228 190 212 201M97 342Q92 347 88 352M483 298Q498 305 504 319M447 219Q464 229 477 243M239 185Q227 194 221 207M412 258Q417 276 424 294M170 391Q150 397 129 400M191 292Q181 315 185 340M176 175Q165 177 155 181M199 417Q192 445 168 462M102 285Q96 288 90 288M194 305Q196 322 197 339M252 194Q249 211 252 228M197 399Q195 420 179 434M365 217Q372 239 371 262M496 369Q498 380 506 389M180 445Q168 454 155 462M312 175Q303 192 299 209M199 375Q200 400 202 425M180 415Q197 432 209 455M169 316Q173 335 174 355M144 425Q143 441 136 456M179 348Q183 361 175 371M219 318Q216 344 206 369M386 184Q386 211 408 227M145 248Q127 264 110 282M327 217Q332 236 350 243M477 293Q487 314 505 331M370 185Q361 208 377 226M339 171Q331 198 313 219M114 382Q120 406 110 428M157 455Q158 468 163 481M187 338Q189 364 200 388M237 336Q229 351 230 368M402 192Q409 208 422 219M174 255Q160 261 160 277M161 353Q151 363 155 377M278 235Q271 246 263 254M233 249Q230 263 220 273M334 230Q350 246 367 261M349 215Q355 241 354 268M115 288Q109 311 88 322M490 269Q503 288 511 310M349 176Q366 190 386 200M270 259Q273 271 271 283M184 293Q174 302 169 315M403 257Q436 260 444 292M308 201Q304 215 306 230M260 224Q275 232 278 249M162 330Q141 345 124 364M167 292Q169 311 171 330M346 202Q348 229 349 256M503 277Q510 294 517 312M204 297Q208 315 196 329M231 163Q214 165 198 175M166 227Q148 241 137 262M160 409Q156 430 143 448M312 198Q317 222 324 244M466 335Q487 351 506 369M492 308Q499 326 506 344M203 399Q192 409 178 411M134 224Q126 239 111 246M246 280Q242 299 252 316M185 183Q165 202 150 224M268 151Q265 163 267 176M192 318Q190 334 198 349M468 243Q462 266 464 291M173 230Q159 245 147 262M461 275Q483 289 477 315M140 339Q132 365 130 393M382 178Q384 198 380 218M150 303Q153 320 154 337M476 227Q477 239 485 249M168 405Q156 422 153 442M143 226Q127 241 124 263M465 277Q471 302 469 329M267 249Q262 261 270 271M290 176Q284 195 271 210M202 325Q196 350 187 374M149 317Q150 333 143 347M280 208Q275 231 253 242M211 172Q196 180 179 185M373 218Q398 227 417 246M203 164Q190 185 183 209M195 378Q188 402 178 425M457 349Q476 364 481 388M414 192Q422 208 433 221M152 225Q135 235 124 253M167 389Q163 405 154 418M448 192Q474 196 484 221M462 244Q462 259 475 265M382 215Q387 228 389 241M476 264Q451 283 457 314M310 239Q305 257 309 275M154 339Q138 355 149 374M312 223Q301 248 279 264M430 230Q439 241 434 254M125 290Q102 309 107 339M267 227Q237 245 255 276M436 209Q442 231 444 253M476 299Q474 320 482 340M155 235Q143 243 133 252M170 463Q163 468 155 470M181 244Q189 269 169 287M334 223Q330 238 344 243M168 198Q160 207 159 219M184 398Q189 420 176 438M123 338Q109 352 97 368M200 231Q205 264 173 274M257 149Q244 172 217 172M371 164Q376 182 385 197M429 228Q439 251 462 262M451 320Q462 344 462 371M243 170Q237 188 242 207M344 227Q353 254 335 276M201 416Q178 426 171 451M390 251Q396 269 395 289M443 264Q461 281 446 301M321 221Q327 248 336 273M379 229Q385 248 385 266M147 362Q154 383 157 404M425 263Q432 279 433 297M102 339Q95 338 88 340M458 343Q476 352 487 367M227 253Q231 277 226 300M190 357Q187 373 181 388M314 191Q332 211 339 237M238 165Q228 180 212 190M414 236Q415 252 411 267M105 360Q100 372 90 380M235 283Q239 293 240 305M438 254Q463 270 465 300M456 352Q457 373 476 377M479 313Q486 323 493 332M209 445Q197 456 190 470M487 272Q501 282 515 292M183 261Q175 280 165 298M173 413Q174 430 158 435M233 156Q223 165 221 178M136 381Q126 388 125 400M191 432Q184 446 183 461M119 333Q126 344 128 357M156 261Q159 279 163 296M386 245Q388 261 397 273M148 254Q149 279 131 297M289 186Q268 204 264 232M145 332Q129 347 108 355M198 306Q189 330 170 346M491 339Q501 349 508 361M135 259Q125 276 126 295M178 306Q161 330 178 354M476 300Q488 311 504 316M430 214Q453 226 464 249M259 255Q264 270 260 285M213 240Q203 246 195 255M432 190Q453 196 466 215M105 371Q98 383 99 396M314 217Q311 243 322 267M266 212Q280 219 276 233M179 386Q186 398 194 410M396 215Q392 240 406 262M103 312Q113 338 110 365M211 378Q188 388 176 409M283 233Q282 261 293 287M231 323Q219 334 222 350M140 310Q133 328 130 347M503 290Q513 297 523 304M487 315Q502 323 518 330M105 330Q96 339 87 348M458 219Q471 232 487 239M289 225Q296 248 313 264M196 196Q187 211 183 228M108 318Q95 338 87 360M191 308Q177 312 166 323M254 225Q259 238 252 250M120 334Q121 355 119 375M444 273Q454 280 462 290M257 214Q244 226 236 242M488 370Q500 391 500 415M469 207Q483 210 494 221M140 211Q129 216 119 221M160 318Q178 340 161 362M219 246Q228 272 218 298M237 241Q236 257 242 272M179 374Q172 395 175 416M188 297Q186 313 190 329M242 223Q242 238 242 254M499 327Q519 334 536 346M185 370Q172 376 177 390M417 236Q425 255 419 275M355 224Q361 237 365 250M391 195Q392 215 403 230M367 212Q349 226 337 246M498 306Q511 310 522 318M199 301Q207 328 194 352M124 293Q109 307 99 327M191 220Q192 236 181 247M337 206Q346 221 355 236M464 269Q471 278 479 285M100 317Q95 319 89 323M148 290Q143 303 132 311M225 218Q224 241 210 260M487 320Q490 332 492 345M243 221Q256 240 264 263M441 226Q456 236 448 253M212 423Q208 440 192 448M262 228Q257 241 255 254M162 345Q140 364 112 367M406 254Q400 275 388 292M253 229Q232 238 219 256M478 258Q487 270 502 275M368 216Q365 234 361 251M300 147Q306 158 312 170M451 207Q463 217 462 233M297 215Q299 233 313 244M339 175Q364 182 377 205M444 217Q444 231 449 244M133 217Q125 217 118 218M202 278Q202 296 194 313M190 207Q179 213 166 216M273 240Q274 259 270 279M465 313Q465 331 465 350M416 192Q434 197 437 216M163 322Q170 347 151 366M474 321Q481 337 486 353M177 328Q176 352 169 376M251 320Q238 345 243 373M147 272Q138 289 122 300M456 262Q464 285 461 309M497 257Q507 262 517 268M171 409Q161 430 155 453M285 215Q282 229 277 242M116 263Q107 269 100 276M262 206Q259 229 262 252M443 241Q462 257 450 279M216 220Q202 228 188 237M482 380Q505 392 526 379M185 365Q190 383 190 402M354 152Q358 137 373 139M467 358Q480 367 485 383M166 366Q143 376 144 401M221 233Q221 254 224 275M196 197Q187 229 153 230M134 385Q124 405 124 427M426 209Q453 212 466 235M304 214Q313 225 312 240M103 299Q90 304 84 317M494 253Q505 268 520 281M140 298Q131 322 134 348M269 234Q258 242 260 255M481 356Q489 366 494 378M502 374Q507 386 519 390M147 338Q123 344 103 360M249 191Q255 218 258 245M160 442Q166 454 155 463M143 264Q124 277 102 285M290 168Q295 186 313 193M455 230Q478 249 470 277M194 411Q183 432 183 456M199 268Q192 283 179 293M466 265Q468 288 484 305M408 194Q422 204 423 221M122 233Q114 242 104 250M362 229Q365 242 364 256M236 242Q250 254 253 272M262 252Q252 278 266 301M133 222Q127 249 102 263M322 195Q331 209 340 224M288 234Q301 253 290 274M323 213Q322 234 328 255M188 342Q182 363 171 383M127 389Q138 405 129 422M255 250Q263 267 254 283M188 346Q173 361 172 382M396 199Q416 204 435 213M207 178Q196 196 183 212M224 284Q230 301 218 315M156 285Q140 285 127 294M221 239Q213 258 195 269M159 340Q150 360 133 375M482 344Q498 343 504 359M418 235Q445 222 472 235M177 353Q176 369 170 383M482 323Q481 343 477 362M189 189Q175 190 161 189M256 178Q231 189 206 200M197 311Q171 321 158 346M157 239Q152 251 141 257M169 229Q148 242 124 247M205 363Q199 378 190 391M204 378Q217 397 208 419M142 405Q144 421 140 437M154 428Q141 439 137 455M458 247Q443 271 452 298M121 368Q126 382 125 398M493 340Q504 350 513 362M481 303Q483 327 506 332M454 249Q452 279 481 287M206 296Q191 314 194 337M494 283Q497 304 499 325M444 277Q454 291 470 298M113 385Q112 397 108 407M295 146Q293 162 277 166M428 228Q445 237 447 256M218 316Q203 335 209 357M198 246Q194 259 183 267M165 266Q147 276 148 298M400 236Q396 254 401 272M435 276Q454 298 450 326M476 336Q480 355 487 374M289 216Q282 231 285 247M248 232Q240 242 238 255M312 149Q322 170 322 194M485 252Q497 266 504 283M443 256Q431 277 443 297M368 213Q376 232 378 252M141 438Q132 439 125 446M203 294Q192 316 185 340M109 269Q102 276 96 282M216 265Q196 283 170 290M393 218Q423 236 411 270M354 224Q365 250 365 278M190 243Q178 261 177 283M179 291Q172 302 165 313M475 222Q485 235 482 250M270 257Q277 267 276 280M275 261Q261 284 240 300M211 234Q211 258 201 279M193 288Q203 310 203 334M425 171Q437 179 450 177M202 342Q218 361 209 384M423 182Q429 198 444 203M99 296Q95 300 91 304M111 368Q115 388 124 407M171 202Q162 218 146 223M275 219Q266 242 249 259M447 259Q444 278 438 296M469 288Q477 302 488 314M103 317Q97 329 86 335M259 230Q251 241 241 250M213 292Q218 307 223 321M379 178Q401 194 426 205M104 370Q99 381 98 393M319 199Q308 224 304 251M250 224Q233 234 229 252M386 223Q394 237 401 253M322 196Q309 219 284 223M315 164Q315 178 316 193M465 294Q466 321 468 348M166 338Q142 351 121 367M165 255Q154 272 137 281M352 160Q359 175 356 190M472 374Q482 382 487 393M479 314Q485 342 508 360M487 335Q490 347 494 360M218 388Q206 409 197 431M397 185Q418 192 434 205M208 428Q224 453 209 479M179 466Q173 476 168 487M374 185Q378 199 376 213M230 271Q227 288 220 304M340 215Q323 237 325 264M216 191Q201 198 198 215M128 323Q116 349 88 356M474 360Q480 372 486 385M263 224Q271 244 261 263M468 235Q476 245 486 252M320 205Q315 218 322 230M227 208Q204 214 196 236M259 196Q258 222 246 245M108 347Q102 360 88 358M210 371Q205 393 199 414M174 309Q181 332 190 355M211 307Q218 317 219 330M495 252Q507 263 510 279M304 191Q301 211 300 231M121 354Q118 373 103 383M447 191Q459 216 439 236M212 379Q216 393 224 407M165 437Q154 444 144 452M165 274Q159 301 152 327M165 452Q164 465 158 476M157 318Q146 333 139 350M177 229Q168 253 159 277M160 265Q144 280 141 301M142 435Q133 445 128 457M227 229Q232 257 229 284M201 391Q234 403 223 436M171 363Q172 375 175 387M140 438Q134 440 129 444M371 238Q380 263 399 281M167 387Q170 405 162 421M308 231Q299 244 298 260M195 387Q192 403 187 418M131 287Q125 307 107 318M413 241Q432 258 446 280M194 443Q198 461 194 479M190 344Q187 360 186 376M221 194Q207 207 196 223M476 347Q472 363 474 379M197 364Q201 378 194 391M493 343Q506 368 529 383M224 172Q209 191 199 213M465 240Q475 256 485 273M459 287Q456 314 449 339M489 351Q500 371 510 391M176 332Q162 354 146 374M464 358Q467 383 465 409M128 367Q119 380 112 393M359 212Q350 227 356 243M421 221Q424 232 430 241M220 402Q216 425 204 445M99 325Q95 338 86 349M331 237Q335 257 336 278M452 236Q441 255 456 272M469 226Q491 239 484 264M396 205Q403 217 405 231M429 210Q439 231 446 254M295 176Q302 196 292 214M314 194Q310 205 305 215M114 347Q105 355 99 364M434 285Q443 302 443 321M169 191Q159 208 142 216M400 232Q396 252 392 272M114 279Q110 291 104 302M223 272Q215 289 223 306M98 351Q96 370 99 390M370 180Q378 196 386 213M433 186Q431 201 438 215M400 205Q399 230 417 248M188 409Q184 435 170 458M189 416Q180 434 173 453M191 281Q182 294 185 310M261 151Q252 177 240 202M206 325Q175 337 174 370M253 202Q266 218 250 230M441 242Q432 259 420 274M481 301Q495 303 507 312M358 236Q351 256 340 274M312 217Q300 235 319 246M266 247Q263 265 261 282M109 298Q100 310 98 324M153 267Q129 264 109 277M209 209Q203 223 188 229M275 233Q263 246 256 263M256 233Q241 253 256 273M181 294Q169 305 157 315M460 245Q455 260 447 273M317 169Q307 196 328 215M371 207Q372 219 380 230M217 332Q230 345 236 362M258 212Q248 227 247 246M510 295Q516 313 531 324M102 291Q102 316 90 338M442 281Q442 302 453 320M108 390Q107 400 99 406M158 285Q147 309 132 331M143 401Q131 421 121 441M173 365Q170 376 165 388M340 216Q343 239 337 262M154 208Q148 222 132 224M405 234Q411 251 402 266M158 203Q152 215 144 225M217 311Q203 327 210 348M134 424Q127 431 128 439M314 235Q321 254 320 274M251 260Q262 279 270 300M178 312Q173 331 155 339M150 278Q147 292 141 304M257 153Q258 170 268 184M135 261Q104 260 94 288M192 174Q200 188 188 199M166 381Q167 404 157 425M191 298Q188 309 188 320M142 214Q133 211 124 216M436 200Q443 213 440 228" fill="none" stroke="#9c8264" stroke-opacity="0.234" stroke-width="0.6" stroke-dasharray="3 1.5"/><path d="M224 204Q217 221 207 237M410 183Q427 184 431 201M145 398Q155 415 166 432M184 285Q173 306 172 329M256 184Q233 197 227 223M494 333Q504 349 514 364M125 359Q114 366 107 377M168 249Q163 266 155 282M135 279Q110 276 97 298M258 202Q248 231 269 253M256 172Q243 193 248 217M153 398Q146 409 145 421M500 326Q510 339 514 354M283 208Q290 230 286 252M164 355Q156 365 153 378M245 187Q240 200 235 212M209 239Q195 250 191 268M275 182Q289 191 297 206M221 232Q210 257 195 281M430 223Q448 238 465 253M144 261Q123 266 123 287M104 350Q101 364 90 372M492 254Q497 279 504 305M200 303Q182 318 169 338M347 223Q337 243 339 266M229 180Q210 167 194 184M276 206Q291 230 290 258M306 182Q282 203 294 232M316 201Q308 213 300 226M124 386Q116 396 114 409M480 238Q488 256 489 275M131 253Q104 273 112 305M168 418Q164 442 153 464M123 293Q117 305 115 317M210 198Q202 208 194 219M160 198Q142 211 120 214M240 224Q232 243 228 264M222 198Q217 217 217 237M301 173Q284 182 265 176M494 301Q507 302 519 308M426 204Q447 219 459 241M212 165Q197 179 178 186M104 306Q91 307 89 320M486 341Q489 368 501 392M221 260Q215 274 218 289M251 231Q262 249 274 265M419 219Q408 242 418 266M271 214Q257 226 239 225M149 332Q144 352 128 364M270 201Q257 224 262 251M483 322Q483 334 489 345M119 394Q119 406 114 418M227 240Q213 257 194 268M375 176Q379 194 385 211M275 199Q274 214 275 229M153 248Q124 252 116 280M164 195Q148 208 128 213M250 202Q226 215 225 242M291 163Q289 181 289 199M259 194Q261 213 252 230M227 172Q215 181 216 196M163 210Q163 226 156 240M393 189Q411 204 424 223M242 176Q233 183 228 193M269 208Q262 229 253 248M116 253Q104 258 97 269M213 222Q215 248 231 268M141 315Q126 338 103 353M186 182Q172 198 154 208M315 205Q333 225 337 251M118 348Q108 370 103 393M189 259Q164 275 161 304M177 314Q176 327 165 335M196 205Q189 216 178 224M185 397Q159 403 135 412M191 382Q189 402 177 418M348 160Q367 178 391 175M186 289Q175 313 170 339M330 197Q335 208 344 217M335 214Q347 237 352 262M180 319Q174 339 156 346M154 243Q151 260 150 278M131 422Q132 430 124 434M377 201Q379 223 389 241M325 222Q326 238 316 250M376 195Q385 205 387 218M171 361Q145 379 156 408M403 214Q419 221 433 230M284 160Q290 170 298 178M174 291Q160 310 151 332M497 261Q503 270 508 281M370 185Q382 193 384 206M178 248Q175 264 163 275M427 192Q443 200 448 217M226 240Q224 256 217 270M409 189Q422 209 438 227M439 242Q425 270 443 296M130 400Q137 414 128 427M325 175Q316 198 301 218M203 181Q186 192 171 205M102 343Q123 367 104 393M196 178Q195 197 178 204M180 321Q168 331 162 345M132 261Q121 282 98 281M119 392Q113 405 103 415M254 235Q243 259 251 284M444 230Q458 255 486 262M135 404Q123 420 125 440M499 317Q519 319 536 329M300 203Q306 216 314 227M383 213Q373 236 392 254M476 222Q492 241 514 253M378 208Q390 213 400 223M170 231Q152 237 137 249M364 186Q391 178 417 187M155 251Q148 261 136 266M287 212Q274 236 267 263M312 208Q312 220 310 231M303 156Q300 171 285 171M109 316Q91 328 83 349M126 342Q130 360 124 378M252 170Q243 194 239 220M145 434Q152 451 138 463M146 276Q119 290 137 314M315 212Q311 224 319 234M439 242Q451 253 463 264M471 260Q487 281 487 307M427 234Q430 255 442 273M144 410Q144 429 130 441M163 424Q170 435 169 448M178 352Q190 373 180 394M175 417Q175 431 178 445M341 160Q348 184 342 209M227 163Q199 166 194 193M153 286Q142 299 128 308M208 233Q216 250 206 266M264 165Q265 185 254 201M282 194Q278 204 274 215M270 184Q276 211 293 233M178 265Q175 284 160 295M192 250Q182 262 176 276M253 179Q239 184 240 200M140 292Q125 313 111 334M464 245Q463 272 467 299M331 160Q314 182 302 207M286 169Q266 186 247 201M152 259Q129 265 108 275M218 205Q210 217 214 231M167 388Q154 409 156 433M384 213Q402 227 420 242M153 381Q140 401 135 424M187 186Q183 202 172 215M333 215Q339 228 343 242M369 170Q378 192 388 214M173 361Q164 378 156 396M423 186Q429 207 437 227M212 193Q204 209 190 220M127 277Q113 282 101 273M494 275Q505 287 515 299M487 310Q505 318 504 338M131 360Q126 373 128 388M173 279Q163 291 156 305M340 198Q329 210 341 222M372 175Q371 188 371 201M252 163Q247 173 241 183M325 219Q333 243 335 268M426 179Q423 203 427 227M366 164Q382 169 388 184M136 219Q129 229 123 239M392 209Q406 220 420 230M147 207Q127 214 112 228M370 176Q386 185 404 188M176 213Q186 240 171 264M219 181Q220 195 221 208M391 223Q394 240 409 248M104 347Q94 358 88 371M185 196Q176 220 188 242M466 221Q471 239 464 256M385 170Q382 187 393 199M458 211Q473 233 487 257M467 217Q474 239 482 260M169 433Q163 451 152 466M187 215Q183 231 171 244M272 175Q269 199 265 223M136 374Q122 390 126 412M434 229Q450 251 473 266M170 260Q166 286 145 300M492 295Q486 311 495 326M139 242Q129 242 119 241M439 227Q448 244 455 262M103 333Q100 351 92 368M142 399Q127 417 130 440M246 246Q265 267 261 296M168 399Q170 417 171 435M158 233Q148 247 144 264M355 201Q355 213 360 224M461 233Q474 254 458 272M377 190Q383 207 375 224M439 230Q454 234 453 250M320 183Q345 197 356 224M420 221Q411 231 414 244M482 245Q499 269 489 298M432 211Q431 228 445 237M499 308Q502 327 516 340M201 262Q204 287 216 309M184 333Q180 344 176 355M181 327Q180 352 165 371M476 249Q483 260 487 272M309 155Q302 172 296 190M212 186Q217 212 197 231M417 227Q420 253 419 278M125 289Q116 309 97 320M329 177Q330 201 339 223M185 265Q170 284 185 303M205 234Q220 251 237 265M285 172Q293 188 310 195M104 299Q101 310 92 319M162 391Q159 402 152 412M172 264Q161 280 157 300M251 244Q229 255 227 280M318 202Q312 226 322 249M446 236Q459 249 454 266M158 198Q146 203 134 202M142 237Q130 256 108 256M288 201Q287 226 292 251M162 415Q167 441 172 468M193 418Q184 442 182 467M231 259Q222 271 227 284M208 167Q191 172 174 173M294 162Q305 174 316 186M302 166Q306 188 310 210M238 223Q214 231 211 256M330 215Q328 242 314 264M505 328Q516 348 521 370M197 178Q176 186 155 193M327 203Q320 217 314 231M365 164Q384 154 405 159M162 261Q152 280 157 301M219 186Q228 202 221 220M461 243Q468 267 467 292M308 172Q307 184 313 194M341 154Q335 168 337 184M286 156Q297 176 297 198M115 386Q110 399 111 412M184 270Q174 295 160 317M237 185Q229 203 211 212M357 193Q349 210 354 228M395 173Q420 184 443 200M441 222Q452 237 465 250M168 196Q154 206 139 215M450 245Q460 256 464 269M406 200Q423 206 431 222M129 413Q125 422 121 431M177 293Q175 309 169 324M197 224Q186 236 172 244M477 318Q481 342 500 358M132 415Q128 442 149 459M163 385Q151 392 151 406M494 251Q502 270 521 278M125 331Q123 345 120 360M167 311Q145 332 157 361M273 153Q281 179 281 206M362 186Q363 201 368 216M482 325Q498 336 488 353M216 202Q194 218 178 239M154 202Q138 207 126 218M413 216Q418 236 405 251M116 388Q125 398 128 411M436 189Q440 204 454 210M397 214Q405 227 406 243M377 206Q377 219 371 231M450 207Q467 214 474 230M218 257Q239 263 248 283M500 296Q523 305 536 327M327 203Q328 217 336 228M151 300Q150 323 142 344M190 239Q188 255 173 261M181 245Q178 258 167 267M214 201Q200 209 196 225M190 372Q189 389 180 403M167 338Q163 358 150 374M170 213Q158 226 145 237M278 202Q279 223 276 243M171 311Q141 314 149 343M304 188Q317 218 293 238M299 209Q271 225 279 256M200 267Q202 290 209 312M151 207Q131 205 115 218M218 173Q205 187 190 198M497 334Q510 343 523 353M298 191Q285 213 289 239M479 316Q498 325 508 344M173 271Q165 279 157 289M250 152Q242 168 238 186M397 183Q407 191 419 196M133 246Q127 260 124 275M149 319Q135 343 108 350M358 179Q357 203 357 227M187 350Q171 366 172 388M498 292Q510 293 520 300M478 261Q480 280 481 299M174 436Q162 450 145 458M145 321Q145 346 152 371M184 220Q183 234 177 247M280 223Q260 240 250 265M464 259Q462 273 467 287M217 261Q191 269 192 296M147 421Q141 436 131 447M410 172Q431 188 458 189M323 156Q342 173 368 180M127 407Q122 426 129 444M165 439Q170 457 172 477M143 292Q120 306 94 315M278 152Q258 144 240 156M431 191Q445 197 459 202M274 157Q262 169 250 181M195 281Q187 290 179 298M138 264Q133 282 133 301M431 192Q434 214 447 231M202 267Q192 273 187 283M137 345Q136 365 127 382M222 218Q233 237 241 258M223 225Q213 247 206 270M197 286Q203 303 206 321M395 173Q417 185 442 190M156 369Q146 378 137 388M484 274Q492 285 500 295M486 321Q473 348 486 375M125 283Q130 302 124 320M157 353Q156 372 168 386M470 268Q483 277 488 292M409 230Q394 253 410 276M403 181Q414 193 420 209M171 432Q190 443 190 465M462 213Q472 231 484 247M177 413Q189 433 186 456M400 210Q404 222 401 234M159 262Q148 285 125 297M334 201Q345 223 341 247M274 214Q262 225 273 237M180 396Q170 406 163 419M157 370Q156 387 160 403M451 260Q471 275 483 297M349 208Q358 223 348 238M257 215Q248 240 231 259M164 336Q172 362 159 386M295 153Q307 168 321 182M119 377Q104 384 103 399M183 387Q166 402 163 426M318 207Q301 217 300 238M498 363Q516 367 527 381M185 355Q177 375 167 394M328 167Q329 195 345 217M220 171Q205 183 200 201M458 203Q471 214 469 232M466 255Q476 263 478 276M367 169Q386 181 396 201M174 334Q164 356 152 375M340 166Q354 177 370 184M110 311Q115 331 101 344M182 302Q168 311 152 318M360 205Q357 225 352 245M144 434Q150 447 140 456M135 407Q125 415 121 427M448 204Q444 225 456 243M163 353Q155 366 152 381M336 162Q353 183 376 195M191 207Q193 229 190 251M505 322Q508 336 506 350M405 204Q412 227 426 247M413 226Q413 244 411 261M457 263Q474 287 467 316M423 206Q428 228 440 247M458 219Q450 243 442 266M139 384Q131 394 129 406M228 177Q211 195 196 213M255 180Q235 194 213 204M195 268Q181 271 170 279M173 246Q156 268 158 295M468 225Q468 237 474 247M498 350Q514 377 498 405M282 163Q274 184 254 195M192 257Q192 282 182 305M148 408Q154 431 146 454M175 284Q176 301 168 316M175 430Q171 444 157 447M202 247Q185 266 169 285M391 174Q403 189 418 201M216 264Q220 279 221 295M312 169Q327 162 340 151M149 293Q137 307 131 324M170 184Q159 193 150 203M202 169Q183 170 164 175M216 226Q207 242 197 258M378 188Q393 206 393 230M361 180Q351 203 359 227M388 185Q402 204 418 221M144 210Q134 215 124 215M178 316Q186 346 160 364M408 210Q410 228 421 242M146 369Q148 383 145 396M187 405Q192 417 185 427M486 248Q499 260 505 278M166 428Q157 439 153 454M168 273Q161 286 163 300M202 259Q206 277 198 292M183 274Q195 294 189 317M300 198Q292 213 287 229M138 380Q135 396 141 412M174 311Q173 329 170 347M356 195Q359 207 357 218M426 181Q444 193 458 209M352 206Q350 225 363 240M148 307Q144 326 140 345M168 297Q167 320 158 341M248 220Q257 247 249 274M485 247Q482 270 489 292M393 187Q396 199 397 212M416 224Q424 249 427 276M355 165Q353 178 343 186M309 153Q305 177 321 196M475 237Q472 251 477 263M349 222Q353 240 351 259M321 179Q332 196 328 216M155 411Q145 422 140 436M212 199Q188 214 175 238M400 216Q408 227 421 233M155 404Q162 424 164 445M319 159Q319 172 312 184M479 275Q489 286 493 301M499 298Q507 310 518 318M169 376Q169 393 179 408M250 214Q226 219 212 240M254 186Q236 201 213 203M149 202Q142 223 120 226M311 197Q311 211 312 225M418 187Q435 181 452 175M209 190Q190 197 173 186M112 296Q102 301 94 308M201 255Q206 274 190 283M435 228Q429 245 439 261M184 185Q167 192 154 206M468 250Q473 262 474 274M415 213Q414 229 409 245M120 371Q120 397 123 423M452 261Q452 288 477 298M222 230Q224 250 236 267M153 397Q153 422 151 447M342 191Q359 207 361 231M482 329Q499 342 508 363M178 372Q165 384 150 394M275 208Q259 231 259 259M149 427Q138 432 136 444M497 304Q513 319 511 342M190 367Q190 387 174 398M426 215Q439 229 449 247M192 374Q189 399 185 423M284 204Q280 220 270 233M330 178Q344 191 342 210M371 199Q389 213 398 234M183 397Q175 410 167 423M377 207Q372 218 370 230M241 164Q243 179 245 194M440 245Q446 257 456 265M508 345Q515 355 526 360M157 414Q155 426 148 436M143 370Q134 392 112 402M129 309Q118 331 114 355M193 320Q195 331 198 343M346 166Q349 191 368 208M144 297Q130 317 118 339M296 207Q289 233 276 257M238 215Q225 220 219 234M158 218Q156 234 142 242M140 218Q128 233 121 250M178 332Q190 346 191 364M151 422Q136 434 138 453M110 347Q108 358 97 361M177 377Q196 390 194 413M151 386Q141 397 133 409M287 199Q276 222 271 247M114 270Q107 267 101 272M198 321Q201 332 202 344M134 312Q141 339 116 351M139 265Q121 274 111 291M313 200Q325 215 323 233M458 252Q456 265 459 278M126 244Q113 245 103 253M238 155Q218 156 210 176M255 218Q260 236 254 254M167 347Q168 359 167 371M320 163Q325 175 334 184M142 253Q145 268 141 283M181 341Q168 354 162 371M125 357Q118 374 121 393M459 246Q465 256 474 264M204 292Q191 311 176 328M241 213Q246 223 250 234M344 167Q355 176 369 179M459 228Q463 240 466 252M196 390Q197 407 190 421M183 242Q166 254 171 275M138 324Q138 356 108 369M476 332Q466 353 467 375M484 278Q509 285 533 294M190 176Q179 193 194 208M214 207Q205 221 188 224M488 308Q493 332 516 339M185 295Q178 309 167 321M147 335Q139 348 133 362M503 306Q518 325 513 348M404 185Q417 188 424 197M384 216Q406 207 418 228M144 329Q117 320 98 343M282 176Q257 192 249 220M304 160Q305 179 293 194M363 199Q367 211 378 215M400 166Q416 161 430 171M473 257Q481 266 482 278M148 399Q151 420 143 439M476 244Q484 257 492 270M156 353Q147 365 138 377M307 225Q303 246 300 268M135 422Q132 432 125 438M233 184Q229 196 223 207M484 257Q493 273 500 290M178 441Q168 456 165 474M146 345Q124 362 107 382M359 169Q382 182 397 204M362 181Q381 207 360 232M320 170Q339 184 361 192M121 381Q115 404 109 426M409 183Q409 199 421 211M156 254Q147 266 133 273M246 194Q227 213 215 237M406 190Q414 206 408 222M238 202Q220 208 203 213M110 330Q117 353 117 378M143 301Q152 324 141 345M244 218Q224 231 207 247M235 216Q232 235 217 247M351 176Q367 188 378 205M135 345Q129 364 123 382M202 231Q195 240 186 249M140 378Q136 402 129 425M189 337Q176 348 169 365M476 250Q493 252 503 266M345 163Q369 156 391 165M210 164Q208 177 203 190M239 232Q240 253 242 274M246 235Q245 257 224 265M213 255Q217 268 224 280M193 405Q185 429 164 444M474 220Q484 227 486 239M150 302Q134 322 117 343M275 210Q262 228 267 249M120 263Q117 278 102 282M195 232Q179 245 170 263M364 187Q372 212 366 238M179 385Q183 403 177 419M208 273Q205 288 199 302M124 245Q123 260 131 272M158 272Q142 290 126 308M160 446Q151 456 150 469M163 248Q150 272 152 300M473 241Q478 261 498 265M269 228Q265 253 253 276M112 304Q99 312 95 327M120 340Q125 355 119 370M443 227Q442 246 458 256M223 169Q224 183 221 198M471 281Q475 302 479 322M161 379Q155 405 150 432M458 232Q467 255 486 270M255 198Q239 217 255 235M149 333Q130 339 126 358M321 175Q330 191 329 209M140 222Q135 237 124 248M146 426Q140 436 138 448M283 156Q266 176 252 199M152 199Q135 206 130 224M491 264Q515 278 512 306M117 266Q96 269 89 289M228 199Q238 213 227 227M249 209Q242 236 224 256M183 412Q187 435 167 448M360 165Q370 176 373 191M416 212Q406 229 419 245M158 429Q159 444 161 460M117 253Q108 262 100 272M293 213Q288 228 278 241M199 390Q193 401 191 414M317 163Q336 176 340 199M289 202Q286 226 298 247M177 379Q180 394 175 409M431 217Q445 236 452 258M508 344Q516 350 523 357M183 372Q184 385 179 398M177 256Q157 269 141 287M174 384Q173 402 160 413M340 153Q337 166 329 177M165 250Q152 267 139 285M253 200Q259 219 245 233M210 279Q222 293 217 310M140 290Q120 306 108 328M239 186Q227 202 214 216M147 350Q136 374 116 392M473 242Q470 264 479 284M158 265Q141 279 148 300M502 302Q489 329 511 348M197 347Q191 362 178 372M452 225Q462 249 444 265M130 367Q115 377 102 389M163 225Q153 250 144 275M355 196Q359 221 357 246M347 169Q355 182 356 196M282 165Q263 178 262 200M489 283Q496 298 499 314M488 248Q482 277 506 295M350 159Q350 183 369 196M268 225Q261 237 251 247M108 317Q99 342 117 361M370 206Q378 215 380 228M153 370Q146 389 140 408M469 285Q469 299 475 313M116 337Q106 346 99 358M428 223Q430 240 432 256M399 187Q410 199 422 211M171 325Q175 337 174 349M333 187Q337 208 340 229M498 326Q506 336 501 349M387 182Q395 200 403 218M188 278Q187 297 179 314M229 246Q222 269 222 293M249 157Q244 174 239 191M485 344Q511 356 514 384M108 326Q94 329 83 338M467 252Q471 264 476 275M197 332Q195 359 188 385M368 176Q368 191 380 201M505 296Q508 312 524 314M115 355Q107 381 114 407M237 219Q233 231 220 232M193 382Q195 397 192 411M152 321Q153 345 151 368M179 352Q198 376 188 404M194 227Q197 247 203 266M463 235Q457 250 456 267M236 259Q235 277 226 292M232 240Q221 265 232 290M330 219Q340 232 343 249M205 219Q188 224 177 239M465 248Q473 274 479 300M109 287Q111 306 95 318M145 415Q140 437 136 459M188 253Q204 273 202 299M156 343Q160 368 151 392M268 213Q264 238 260 263M181 277Q166 296 171 319M262 231Q261 253 268 274M216 160Q194 176 181 200M404 208Q411 229 418 250M228 245Q228 270 218 294M307 155Q305 174 295 191M277 228Q269 239 273 252M250 206Q247 230 258 251M173 407Q157 417 140 428M120 392Q115 412 111 433M410 213Q424 237 451 236M304 176Q305 195 293 210M210 226Q188 227 174 246M166 315Q173 331 176 348M476 251Q479 266 475 281M503 340Q514 355 519 373M487 302Q492 319 499 336M214 190Q208 210 199 229M494 314Q499 327 511 337M483 287Q511 287 533 304M154 271Q160 296 138 310M471 254Q478 279 499 296M198 289Q200 310 197 331M330 204Q331 216 328 228M285 166Q261 179 239 194M185 342Q182 354 171 361" fill="none" stroke="#9c8264" stroke-opacity="0.292" stroke-width="0.6" stroke-dasharray="3 1.5"/><path d="M130 262Q112 269 99 282M146 391Q135 413 113 424M161 310Q166 329 153 344M139 277Q139 291 138 306M236 216Q229 227 232 241M178 322Q172 335 166 348M153 233Q144 254 129 271M367 182Q359 208 374 232M190 211Q182 236 170 260M272 177Q278 188 279 200M129 232Q119 235 110 243M174 293Q170 310 167 326M173 227Q168 238 170 250M118 286Q105 297 105 314M266 182Q274 209 259 233M152 255Q148 267 140 275M147 361Q151 377 157 393M220 219Q234 239 230 264M415 203Q427 213 433 226M253 197Q244 219 254 240M177 234Q171 244 169 255M156 353Q148 376 160 397M168 312Q173 333 176 356M449 222Q451 236 455 249M117 309Q119 330 109 350M221 188Q207 192 201 206M192 196Q176 215 154 228M339 162Q360 154 382 157M304 208Q318 211 318 226M272 182Q261 204 266 228M314 181Q323 195 328 211M256 213Q258 228 260 242M474 232Q490 247 485 268M184 192Q165 199 145 204M427 186Q449 189 470 194M166 368Q168 384 173 399M340 188Q353 205 362 223M149 210Q133 215 122 228M203 235Q180 246 164 265M153 281Q156 306 148 330M150 431Q145 447 132 458M109 328Q97 339 94 355M291 205Q300 217 315 221M121 377Q121 390 122 403M202 232Q203 247 206 262M130 303Q130 329 119 353M425 188Q452 195 473 213M162 363Q141 380 135 406M179 231Q167 244 155 257M261 165Q246 182 234 201M255 156Q231 166 212 183M240 188Q227 200 229 218M331 180Q345 196 362 209M144 261Q143 277 137 293M277 210Q272 236 263 262M177 284Q207 297 200 329M177 191Q155 194 136 207M195 237Q191 248 186 258M232 217Q231 235 222 251M175 364Q159 379 149 398M193 253Q190 272 197 289M151 407Q164 432 159 459M459 210Q470 221 468 237M273 202Q268 212 264 224M160 320Q151 335 150 353M152 217Q141 228 131 240M268 217Q247 236 236 261M122 302Q117 323 99 337M279 199Q284 221 283 245M465 228Q478 253 500 270M125 347Q116 374 95 393M158 248Q155 267 158 285M174 232Q162 246 151 260M174 194Q167 215 146 222M143 266Q128 281 112 295M335 181Q315 196 302 217M159 411Q150 426 163 439M337 177Q331 210 298 213M151 322Q159 337 143 344M151 333Q133 347 136 370M127 369Q137 389 127 410M154 386Q153 404 162 420M196 234Q185 261 157 270M439 204Q431 217 443 228M120 311Q109 318 100 327M180 283Q162 300 159 325M215 215Q207 232 197 248M214 199Q217 210 219 221M218 245Q221 258 231 266M188 260Q188 273 189 287M134 240Q131 257 119 269M284 162Q277 173 269 184M303 171Q300 195 292 217M217 200Q222 222 215 244M475 226Q479 239 470 249M127 381Q111 389 115 405M133 230Q121 230 110 231M416 193Q399 213 391 238M198 234Q205 250 195 265M144 284Q141 299 132 311M114 340Q107 357 95 370M437 197Q453 207 465 221M148 396Q137 406 128 418M305 153Q300 180 283 202M392 181Q417 191 435 212M162 251Q154 260 143 266M353 171Q351 193 340 211M447 221Q457 229 458 242M137 314Q152 329 155 349M182 236Q186 253 171 261M240 220Q226 238 219 260M305 174Q311 194 309 215M208 206Q193 212 178 220M164 337Q177 360 158 379M470 226Q475 247 484 267M176 355Q195 370 194 393M349 174Q343 200 356 223M149 390Q131 409 127 434M285 172Q273 183 261 193M197 255Q201 269 198 283M315 186Q313 211 296 229M191 263Q190 282 177 296M150 293Q141 302 131 310M440 212Q465 225 479 250M215 245Q200 265 195 288M141 349Q137 366 128 381M406 179Q420 192 417 211M207 253Q190 275 191 302M138 406Q128 412 120 421M115 302Q120 322 117 342M380 190Q388 203 400 210M389 189Q391 208 401 225M466 241Q456 267 461 294M118 317Q120 341 111 364M309 154Q311 175 309 196M187 196Q178 217 164 235M223 165Q196 172 170 164M129 362Q129 379 124 397M133 314Q122 330 120 350M240 198Q248 221 239 244M354 172Q352 186 361 197M121 323Q107 340 103 363M121 367Q122 395 108 419M230 212Q207 219 183 218M271 162Q289 183 292 210M142 242Q122 255 103 270M127 258Q119 275 121 294M200 250Q205 270 196 289M392 169Q401 188 415 204M269 172Q266 185 256 194M211 214Q213 227 207 238M152 293Q144 315 128 332M192 199Q182 223 180 249M111 369Q122 378 127 391M122 390Q108 394 106 408M169 249Q146 257 133 278M131 401Q138 418 124 432M313 189Q305 211 317 231M266 212Q264 228 269 242M139 297Q132 322 140 348M149 286Q139 301 146 317M224 229Q228 253 242 272M130 327Q132 341 126 354M110 298Q111 318 98 334M113 371Q102 380 103 394M281 197Q287 224 287 251M414 180Q419 202 429 223M362 170Q352 191 339 209M126 283Q104 296 97 320M120 374Q116 395 108 415M250 180Q240 188 229 196M164 275Q163 288 165 301M170 240Q147 255 120 249M304 166Q289 172 274 178M273 153Q267 162 262 173M415 207Q411 225 402 242M112 301Q95 307 85 323M180 302Q182 328 181 354M260 160Q240 162 220 160M273 198Q278 216 261 225M153 360Q127 374 131 402M357 187Q366 195 372 207M424 203Q431 213 440 222M153 284Q142 301 131 318M295 210Q281 228 267 246M159 200Q140 213 123 229M261 213Q256 232 255 252M265 195Q282 201 284 219M354 186Q348 204 352 221M200 224Q188 244 194 266M230 193Q219 215 233 236M113 306Q108 326 92 337M179 265Q185 277 178 289M374 178Q381 191 389 202M161 224Q142 237 144 260M258 204Q261 231 252 256M128 366Q119 375 108 383M346 173Q352 192 371 198M177 350Q161 371 173 395M178 274Q175 296 165 314M351 183Q376 191 398 203M225 221Q218 242 207 261M167 256Q157 274 156 295M225 169Q217 191 206 212M270 182Q271 205 279 226M200 182Q182 190 165 198M143 270Q154 301 129 321M246 224Q245 251 256 276M302 187Q307 214 297 239M438 203Q459 220 462 246M142 341Q159 362 149 387M146 261Q115 272 117 305M179 223Q156 229 158 253M184 218Q162 225 140 225M143 309Q134 330 125 351M182 239Q182 255 174 269M149 386Q148 413 167 433M249 201Q237 219 224 236M188 203Q182 220 187 238M404 198Q400 218 402 239M245 208Q242 222 234 233M289 178Q280 196 262 206M189 225Q172 244 163 268M229 181Q235 206 223 229M141 246Q121 256 101 265M326 159Q314 172 319 189M170 307Q177 325 172 344M172 317Q156 328 161 347M285 182Q292 204 289 228M163 200Q143 205 124 212M284 197Q292 221 289 246M239 219Q216 236 188 228M133 242Q121 258 109 273M479 245Q487 262 505 268M365 171Q369 187 372 204M247 201Q238 212 230 224M244 205Q249 231 231 252M366 168Q378 176 391 184M305 196Q296 211 282 221M130 294Q122 315 129 337M189 283Q165 297 170 324M197 219Q191 235 183 250M144 300Q132 323 119 345M150 283Q142 300 131 315M294 175Q276 179 261 191M173 255Q176 272 169 288M178 359Q183 383 173 405M230 218Q211 228 214 250M139 372Q128 389 125 409M176 327Q175 340 178 352M357 183Q375 184 392 186M113 304Q112 319 105 333M160 344Q168 368 152 387M149 243Q126 242 104 253M372 175Q386 186 393 203M149 379Q137 403 120 424M159 253Q150 265 152 281M156 296Q151 307 143 315M256 206Q242 224 238 246M384 181Q391 193 396 206M294 190Q296 214 302 237M135 349Q120 371 118 398M134 409Q128 420 121 432M228 192Q231 212 228 233M407 175Q411 190 426 195M226 227Q232 242 229 258M464 216Q488 227 514 229M125 360Q128 376 126 391M114 306Q101 330 83 350M148 298Q148 314 142 329M225 163Q215 171 204 179M141 301Q131 314 128 332M140 409Q131 432 128 456M371 192Q391 210 412 225M316 165Q331 179 329 200M117 348Q111 367 102 386M268 192Q259 203 244 204M137 280Q133 294 127 307M474 228Q486 242 491 260M138 340Q145 361 136 382M228 195Q228 213 224 231M137 300Q119 317 98 330M310 190Q314 204 317 218M146 281Q115 286 115 318M140 236Q115 238 105 261M396 178Q405 186 408 198M119 257Q120 279 116 302M192 216Q180 237 169 258M132 389Q137 401 137 414M112 339Q100 354 87 368M213 253Q211 266 223 273M168 347Q160 371 160 395M207 184Q183 204 191 233M379 179Q390 191 390 208M149 365Q143 387 135 408M150 242Q145 261 130 274M203 225Q198 244 180 253M333 178Q336 190 348 195M280 173Q269 183 261 196M294 155Q303 182 296 210M211 177Q197 199 172 205M188 261Q187 274 189 287M207 198Q204 220 187 235M172 255Q154 267 144 285M275 195Q277 212 280 229M198 174Q193 193 173 196M278 181Q290 206 305 228M147 232Q144 256 131 276M179 272Q169 289 172 308M140 240Q137 255 123 261M386 201Q385 219 390 236M216 231Q218 248 206 259M113 357Q100 377 105 401M174 302Q175 316 172 330M162 350Q151 370 159 391M218 238Q227 262 218 285M312 183Q325 206 337 229M346 182Q349 196 338 206M294 180Q284 206 285 234M136 415Q131 422 127 430M236 172Q235 184 228 195M362 180Q358 206 350 231M261 170Q245 190 230 209M359 183Q365 195 362 208M270 180Q268 196 272 211M175 321Q181 331 183 344M122 342Q101 360 100 387M415 181Q429 178 438 188M244 168Q242 189 237 210M256 214Q250 225 250 238M158 417Q164 443 157 468M236 201Q228 222 224 243M348 190Q352 207 352 225M336 195Q343 216 360 230M162 254Q150 284 118 287M165 197Q145 212 128 230M136 365Q129 385 130 406M252 186Q255 205 244 219M166 207Q163 225 147 236M142 326Q134 343 127 360M170 220Q167 233 169 247M305 177Q319 208 291 227M129 323Q121 340 121 359M147 346Q151 366 134 378M141 416Q134 429 136 443M200 277Q197 297 212 311M328 187Q316 207 312 230M180 294Q181 308 177 322M137 329Q138 352 143 375M113 312Q110 328 104 343M148 301Q128 311 126 332M300 168Q319 167 338 168M151 268Q146 289 150 311M164 354Q156 377 150 400M172 404Q158 428 174 450M474 235Q480 260 494 283M115 287Q104 290 94 294M193 206Q183 228 173 250M308 195Q312 210 325 219M172 374Q171 387 174 399M114 377Q120 392 109 403M308 182Q295 183 288 193M149 354Q157 378 161 404M216 168Q192 171 172 185M168 338Q158 359 143 375M447 226Q456 246 475 258M142 305Q131 328 121 352M236 176Q219 199 216 227M140 334Q138 346 132 355M123 310Q111 317 101 329M369 198Q376 214 389 226M154 306Q148 326 149 346M182 248Q179 270 170 291M261 195Q253 203 243 210M382 177Q394 179 406 183M162 332Q145 355 147 382M246 171Q242 191 244 213M175 250Q163 264 147 274M225 178Q205 188 196 209M436 212Q441 226 455 229M265 162Q275 172 269 186M392 178Q411 196 415 221M146 368Q145 380 140 391M187 282Q193 310 185 337M322 174Q341 183 361 192M155 416Q143 422 133 430M120 341Q114 352 111 364M243 190Q239 219 217 238M125 336Q128 356 130 377M163 346Q170 370 172 396M270 178Q251 181 236 193M124 372Q113 388 113 407M335 162Q359 167 384 162M160 303Q141 318 125 334M173 338Q163 349 155 362M110 363Q103 371 99 381M133 404Q115 417 116 440M439 198Q450 220 440 243M391 173Q422 166 444 188M290 171Q271 185 276 207M144 294Q133 304 118 304M163 217Q154 226 146 237M249 220Q252 244 238 264M274 188Q270 201 273 214M205 243Q192 260 177 275M133 265Q130 278 126 291M142 283Q132 305 112 319M184 234Q182 259 196 281M413 175Q434 187 454 199M284 157Q268 162 256 173M177 295Q181 315 172 333M281 168Q273 189 278 211M264 180Q252 190 244 203M182 188Q178 200 168 208M257 187Q249 196 250 208M153 275Q146 287 135 294M172 360Q176 373 181 386M149 220Q130 240 123 267M161 367Q147 385 148 408M129 330Q130 344 137 357M436 206Q435 232 446 255M126 288Q115 297 103 305M379 184Q399 204 407 231M207 202Q195 215 179 225M196 260Q176 260 157 267M312 173Q314 189 329 197M127 391Q119 417 138 436M110 318Q104 342 109 366M400 169Q422 187 435 211M319 178Q313 203 301 227M154 354Q145 368 138 384M135 382Q137 398 132 414M140 281Q126 297 117 315M117 322Q118 337 114 352M171 408Q156 420 142 434" fill="none" stroke="#9c8264" stroke-opacity="0.350" stroke-width="0.6" stroke-dasharray="3 1.5"/><path d="M117 272Q108 289 117 306M364 166Q382 176 402 183M154 323Q141 346 123 364M216 197Q204 211 194 226M235 187Q224 198 214 210M142 241Q137 266 131 291M116 318Q111 332 119 345M123 376Q124 388 117 398M150 269Q132 289 133 316M200 214Q181 230 166 249M296 160Q304 173 308 187M141 354Q130 378 130 404M122 269Q125 299 104 320M127 347Q118 360 114 375M221 192Q207 198 193 204M162 225Q145 237 128 250M371 172Q391 181 395 203M135 330Q128 348 115 363M140 309Q134 325 130 340M241 185Q219 186 198 193M141 339Q133 360 146 378M139 265Q137 279 130 292M152 212Q150 235 146 258M248 195Q243 206 233 213M134 364Q125 381 120 399M110 322Q104 334 94 344M349 167Q363 189 371 213M136 346Q134 371 117 388M172 247Q171 267 166 287M323 165Q338 178 349 195M150 254Q134 262 121 275M210 193Q189 184 178 204M175 201Q170 211 166 221M129 352Q129 378 122 404M259 178Q268 204 261 231M117 341Q119 354 109 363M127 286Q111 307 95 328M233 197Q222 199 211 201M327 158Q323 185 307 207M315 171Q330 182 348 188M219 223Q213 237 200 244M234 174Q220 178 207 185M308 165Q312 180 320 193M137 380Q124 388 127 402M138 308Q137 324 129 337M182 221Q176 237 172 252M124 313Q111 332 88 331M275 180Q272 203 261 223M284 182Q281 195 279 209M130 266Q115 271 108 285M292 172Q307 195 295 219M117 343Q105 353 93 363M126 386Q114 391 113 404M320 160Q317 182 327 201M112 352Q96 360 88 376M235 182Q229 207 235 231M323 164Q340 182 335 206M312 166Q329 168 340 180M153 339Q149 350 144 360M138 300Q127 312 117 325M163 268Q145 288 125 307M140 376Q118 402 143 426M157 217Q158 236 159 255M130 395Q119 398 112 407M160 226Q143 220 127 228M243 169Q218 196 242 223M278 158Q266 182 272 207M113 290Q103 292 94 296M211 178Q197 191 178 190M200 179Q178 194 160 213M153 253Q146 263 135 269M129 394Q128 407 124 419M263 166Q256 184 262 203M304 178Q307 206 284 223M274 188Q279 203 266 212M378 173Q387 181 399 184M137 307Q134 324 126 340M206 179Q199 200 191 220M223 171Q202 185 182 201M240 183Q229 199 212 208M127 359Q117 382 111 407M293 163Q286 175 278 187M123 257Q113 266 102 274M187 234Q183 261 177 287M151 298Q146 318 147 338M266 177Q272 201 268 226M112 304Q99 302 88 310M326 172Q329 198 330 224M113 304Q114 320 103 332M139 309Q141 330 142 351M188 240Q176 256 158 264M366 173Q378 181 391 186M358 178Q382 192 382 218M162 204Q150 209 144 221M120 259Q105 272 96 289M150 300Q153 315 146 329M143 314Q139 330 123 334M135 237Q142 261 133 284M199 181Q185 203 189 229M303 168Q303 180 299 192M121 280Q127 308 106 328M136 260Q127 284 128 310M137 294Q119 307 124 329M174 194Q152 209 130 223M149 324Q130 340 111 358M128 291Q122 309 105 320M171 224Q157 228 146 238M324 160Q326 173 331 186M113 290Q121 302 115 316M280 159Q263 162 245 158M158 357Q143 377 131 399M199 216Q194 233 192 251M253 162Q231 181 229 209M157 287Q155 304 159 322M139 253Q123 271 103 285M223 206Q213 221 199 232M189 237Q192 253 199 269M310 168Q307 182 303 196M286 181Q283 204 284 227M129 392Q131 408 135 424M235 172Q228 187 222 202M331 169Q324 182 324 196M416 188Q410 205 419 220M137 345Q133 366 134 388M115 292Q115 304 108 313M161 233Q155 249 151 265M295 177Q308 191 320 207M262 163Q251 190 271 211M215 184Q206 201 188 210M225 206Q216 219 213 235M294 161Q304 169 304 182M187 226Q177 233 172 244M122 337Q131 356 148 370M169 200Q162 210 153 218M154 343Q149 355 141 366M302 182Q302 201 304 220M124 299Q91 310 97 344M128 317Q128 335 119 351M152 252Q141 269 139 290M128 254Q123 275 111 292M123 381Q121 392 112 399M129 260Q111 270 107 290M212 225Q208 238 196 244M185 223Q161 228 158 252M267 161Q264 175 257 187M202 211Q190 225 191 243M134 357Q127 388 97 397M128 320Q128 349 107 369M202 205Q194 225 174 235M114 304Q105 316 102 331M114 350Q108 360 99 366M136 371Q130 394 127 418M126 292Q126 309 110 314M139 262Q117 275 93 282M151 309Q134 315 124 331M211 214Q203 224 202 236M157 337Q147 359 139 382M138 274Q127 284 126 299M317 159Q330 150 343 159M168 200Q160 222 141 236M151 256Q141 263 128 262M124 297Q121 310 116 323M121 349Q104 370 119 393M200 205Q191 216 196 228M113 292Q109 310 92 320M114 366Q109 376 101 385M171 205Q158 220 140 227M139 264Q138 285 121 296M167 283Q157 304 161 326M312 160Q293 162 288 180M138 283Q133 308 122 329M270 175Q270 202 255 224M136 293Q122 313 106 331M308 161Q321 167 334 171M211 226Q199 234 195 248M116 327Q118 344 110 359M170 251Q157 261 151 276M220 197Q205 206 192 217M306 164Q321 182 331 204M142 291Q129 295 125 307M152 389Q150 416 132 436M154 215Q138 230 117 237M335 169Q332 183 325 195M263 190Q274 210 279 233M157 215Q147 228 142 244M191 237Q190 256 185 274M141 338Q128 365 138 393M137 302Q130 318 128 337M157 359Q148 371 146 385M423 190Q430 208 431 226M166 306Q160 332 163 358M135 385Q125 409 117 433M115 275Q105 282 99 292M198 177Q196 188 190 197M176 232Q164 253 146 270M124 300Q114 309 117 322M235 207Q217 224 205 246M221 190Q211 204 194 209M155 293Q149 309 156 323M199 176Q188 188 175 195M347 169Q369 180 390 195M120 263Q120 276 122 288M146 280Q129 295 116 314M116 290Q117 308 102 320M130 287Q121 297 116 309M121 348Q118 362 115 377M144 265Q131 275 118 285M136 274Q127 293 112 308M177 228Q186 246 183 267M152 339Q152 352 151 364M233 200Q219 205 206 212" fill="none" stroke="#9c8264" stroke-opacity="0.408" stroke-width="0.6" stroke-dasharray="3 1.5"/><path d="M173 218Q157 220 142 223M125 369Q119 390 119 412M150 249Q147 261 136 268M214 176Q207 198 198 220M139 337Q129 356 133 378M130 381Q117 398 126 419M166 220Q149 241 129 259M136 316Q130 327 128 340M137 270Q130 291 131 313M270 175Q268 195 278 213M114 298Q101 313 101 334M248 171Q249 195 248 220M141 370Q136 395 127 418M178 194Q165 218 145 236M151 230Q144 240 135 248M163 235Q151 250 137 263M130 309Q120 326 101 332M201 187Q180 199 166 218M137 291Q120 306 105 324M116 323Q114 351 128 376M133 275Q116 289 93 295M132 340Q135 366 119 388M262 181Q251 205 239 227M236 187Q244 210 241 235M183 190Q172 209 171 230M136 365Q119 377 115 397M138 363Q116 369 97 382M151 228Q133 238 117 250M192 186Q183 196 184 209M125 377Q119 392 113 406M151 297Q167 320 151 343M174 197Q159 206 151 222M124 370Q112 382 98 392M257 178Q254 189 258 200M145 252Q152 274 133 287M126 361Q123 378 113 393M124 339Q99 349 94 376M123 327Q115 337 102 338M117 331Q111 342 105 351M249 182Q224 188 215 212M142 238Q147 260 150 283M204 188Q202 204 188 211M153 228Q142 233 137 245M153 248Q140 274 149 301M168 238Q166 254 161 269M179 197Q167 222 139 225M174 227Q162 243 151 258M142 244Q134 251 127 260M123 364Q114 384 102 402M169 222Q138 221 136 252M175 237Q169 258 176 280M161 225Q141 235 118 235M134 268Q123 276 110 277M124 319Q123 339 115 358M136 305Q119 325 119 351M173 241Q156 253 147 272M143 246Q135 266 116 274M130 309Q117 326 122 347M132 282Q126 293 117 302M144 299Q147 320 154 340M138 369Q131 383 129 399M280 169Q268 175 259 186M116 344Q100 355 93 373M113 313Q99 319 89 330M144 294Q129 311 121 332M129 294Q117 315 122 339M189 203Q166 212 152 231M199 209Q195 219 192 230M208 207Q189 221 172 237M277 171Q268 185 280 198M136 352Q130 364 122 375M141 228Q132 240 118 247M125 296Q116 306 116 318M123 283Q119 302 116 321M259 170Q246 178 236 191M240 184Q224 193 215 209M129 267Q105 262 88 280M133 286Q140 301 139 316M267 167Q260 193 251 219M134 340Q118 348 121 366M111 309Q102 334 94 359M246 181Q233 196 214 201M206 201Q186 215 169 233M153 225Q131 227 113 238M120 297Q135 317 145 339M162 221Q161 246 149 268M117 361Q111 375 111 390M122 304Q115 323 96 333M117 337Q114 354 118 372M193 206Q185 219 180 233M181 216Q165 230 153 248M190 202Q174 222 170 246M136 263Q138 286 126 307M141 231Q123 225 109 239M115 304Q109 318 93 322M262 167Q268 188 248 197" fill="none" stroke="#9c8264" stroke-opacity="0.466" stroke-width="0.6" stroke-dasharray="3 1.5"/><path d="M182 183Q178 158 163 137M457 197Q456 192 461 192M414 171Q419 169 424 169M508 286Q515 287 521 289M504 271Q518 266 515 251M255 157Q273 145 268 124M408 168Q417 154 418 138M284 153Q290 131 294 109M448 191Q462 190 464 176M374 158Q382 148 382 136M121 257Q112 255 112 246M136 229Q130 219 123 210M363 156Q368 133 378 111M187 180Q178 156 157 141M355 155Q349 139 342 124M412 170Q423 153 420 134M504 271Q518 272 524 259M383 160Q387 134 411 122M120 259Q108 256 110 244M341 154Q347 137 365 136M116 273Q112 263 115 254M115 274Q110 266 106 256M109 308Q102 304 101 297M216 167Q206 145 195 124M364 156Q366 149 361 143M163 198Q163 194 165 191M389 162Q406 157 409 140M493 245Q500 249 503 241M240 160Q239 136 254 119M174 188Q181 170 170 153M511 306Q513 302 514 297M112 288Q111 277 106 267M167 194Q163 192 160 188M111 296Q101 291 92 297M160 201Q160 197 158 195M262 156Q269 144 270 130M465 205Q467 199 470 193M483 227Q486 224 484 219M455 196Q462 191 470 190M336 154Q331 148 328 141M238 160Q227 153 232 141M120 260Q120 253 118 246M232 162Q223 140 233 118M113 281Q112 273 103 274M211 169Q194 159 192 140M301 153Q305 146 299 140M453 194Q455 185 448 179M494 246Q497 238 505 235M365 157Q369 150 369 142M112 289Q107 280 98 275M491 240Q494 234 494 228M506 279Q506 266 517 260M114 277Q112 277 109 277M451 192Q462 191 470 183M125 249Q121 248 121 243M132 235Q124 228 123 218M327 153Q321 139 315 124M488 235Q494 224 507 221M371 158Q383 155 381 142M117 268Q111 268 115 263M129 239Q123 236 123 229M121 257Q116 257 113 253M110 301Q106 298 102 300M205 171Q191 152 183 130M254 157Q264 146 262 132M227 163Q224 155 228 147M486 232Q497 228 507 223M182 184Q184 175 178 169M124 251Q113 245 107 234M321 153Q302 136 302 111M109 304Q107 301 104 298M495 249Q498 247 500 245M506 278Q517 282 525 273M232 162Q230 137 230 112M480 223Q486 213 496 206M339 154Q339 131 348 109M135 229Q134 224 132 219M380 160Q384 154 380 148M192 178Q197 173 195 166M234 161Q233 141 226 123M124 249Q120 243 113 241M432 180Q424 157 417 133M184 182Q167 177 170 160M363 156Q361 150 359 144M472 213Q488 216 491 200M191 178Q196 173 200 167M338 154Q335 141 341 129M499 258Q503 260 507 258M300 153Q276 132 297 109M507 282Q515 281 522 285M187 180Q186 168 174 163M313 153Q305 140 299 126M492 242Q496 247 502 246M303 153Q292 145 290 132M345 154Q350 134 346 114M328 153Q339 133 339 111M397 164Q407 151 409 135M181 184Q182 162 196 144M111 293Q108 285 100 283M392 163Q389 154 391 145M208 170Q195 157 193 139M349 154Q361 155 363 144M254 157Q234 138 249 116M125 248Q117 243 109 245M109 309Q102 302 93 306M381 160Q378 146 392 143M481 223Q490 222 493 213M354 155Q355 147 352 140M452 193Q449 180 456 169M172 190Q162 188 165 177M127 244Q129 240 125 238M384 161Q398 155 395 141M494 245Q503 240 512 236M405 167Q408 154 410 141M423 175Q424 163 422 152M438 183Q453 164 463 142M121 258Q112 253 107 245M511 306Q526 302 525 287M500 258Q502 255 501 251M453 194Q456 188 454 181M450 191Q455 188 460 185M147 214Q145 209 143 205M469 209Q465 197 469 184M286 153Q274 134 263 115M220 165Q200 152 190 130M510 302Q516 299 523 297M112 286Q102 279 92 286M419 173Q432 149 419 125M489 236Q491 234 494 233M259 156Q265 131 243 117M511 307Q522 308 524 297M475 216Q475 204 480 194M486 231Q494 223 491 212M450 192Q457 185 465 180M151 209Q148 204 142 200M484 228Q499 228 500 214M194 176Q179 157 166 136M124 251Q119 251 115 247M113 285Q111 279 106 276M490 238Q492 235 491 232M378 159Q387 150 392 137M343 154Q350 148 344 141M121 256Q119 251 115 246M502 266Q505 258 510 251M350 155Q355 144 361 135M204 172Q192 160 181 149M338 154Q319 142 325 121M456 197Q459 188 468 184M399 165Q405 157 400 148M425 176Q433 167 424 159M503 268Q508 265 511 260M509 290Q514 285 522 285M109 305Q106 304 106 300M124 251Q118 241 118 230M511 310Q516 299 527 299M110 297Q103 296 97 292M133 233Q126 231 122 225M466 206Q470 201 469 196M477 218Q488 213 487 200M116 270Q110 269 105 265M427 177Q433 168 430 158M314 153Q314 130 293 120M116 271Q109 272 103 268M170 192Q171 168 173 145M503 267Q511 265 518 270M277 154Q268 147 267 137M373 158Q390 143 392 120M156 204Q153 197 148 192M429 178Q445 171 458 158M260 156Q245 132 260 108M448 191Q451 172 466 161M412 170Q419 163 428 163M310 153Q314 148 312 142M498 254Q502 250 508 250M332 153Q319 144 309 132M346 154Q357 131 381 137M260 156Q259 147 263 138M444 187Q448 173 456 160M336 153Q335 136 352 134M488 234Q496 234 504 230M128 241Q127 231 121 223M508 286Q512 287 516 283M277 154Q258 139 251 117M351 155Q356 134 345 116M509 294Q512 291 517 292M341 154Q343 126 322 108M109 310Q111 302 105 298M494 245Q501 242 507 236M215 167Q205 156 195 144M222 165Q213 155 208 144M302 153Q277 152 284 129M201 173Q186 162 199 149M428 178Q433 163 426 149M461 201Q468 192 478 187M113 283Q114 280 115 278M138 226Q132 224 133 219M119 262Q123 251 112 249M209 169Q209 155 197 148M131 236Q120 236 112 227M120 259Q110 260 111 250" fill="none" stroke="#8a7050" stroke-opacity="0.32" stroke-width="0.6" stroke-dasharray="2 1.5"/></svg></div>
<div class="a" style="left:374px;top:900px;width:214px;height:16px;background:#000;"></div>
<div class="t" style="left:377px;top:905.19px;font-size:11px;color:#ffffff;letter-spacing:0.03px;">Frame  38:  2018-06-28  05:21:54  (0.00s)</div>
<div class="t" style="left:64px;top:951.27px;font-size:11.5px;color:#c6c6c6;">Progressive Rendering...</div>
<div class="a" style="left:797px;top:948px;width:97px;height:15px;border:1px solid #333;border-bottom-color:#5a5a5a;border-right-color:#5a5a5a;box-sizing:border-box;"></div>
<div class="t" style="left:836px;top:951.27px;font-size:11.5px;color:#7a7a7a;">1%</div>
<div class="a" style="left:907px;top:936px;width:14px;height:16px;background:#383838;border:1px solid #555;box-sizing:border-box;"></div>
<svg class="a" style="left:910px;top:939px;" width="8" height="5" viewBox="0 0 8 5"><path d="M0 0H8L4 5Z" fill="#888"/></svg>
<div class="a" style="left:907px;top:952px;width:14px;height:17px;background:#383838;border:1px solid #555;box-sizing:border-box;"></div>
<svg class="a" style="left:911px;top:954px;" width="6" height="12" viewBox="0 0 6 12"><path d="M0 5L3 0L6 5Z M0 7L3 12L6 7Z" fill="#999"/></svg>
<div class="a" style="left:929px;top:48px;width:61px;height:21px;background:linear-gradient(#606060,#585858);border-radius:4px 4px 0 0;"></div>
<div class="t" style="left:935px;top:54.27px;font-size:11.5px;color:#f0a830;">Attributes</div>
<div class="a" style="left:993px;top:50px;width:42px;height:19px;background:#3a3a3a;border-radius:3px 3px 0 0;"></div>
<div class="t" style="left:998px;top:54.27px;font-size:11.5px;color:#8a8a8a;">Layers</div>
<div class="a" style="left:929px;top:69px;width:520px;height:1px;background:#5c5c5c;"></div>
<div class="a" style="left:929px;top:70px;width:520px;height:20px;background:#474747;border-left:1px solid #5c5c5c;box-sizing:border-box;"></div>
<svg class="a" style="left:935px;top:73px" width="12" height="12"><rect width="12" height="12" fill="url(#gp)"/></svg>
<div class="t" style="left:956px;top:75.27px;font-size:11.5px;color:#c4c4c4;">Mode</div>
<div class="t" style="left:1001px;top:75.27px;font-size:11.5px;color:#c4c4c4;">Edit</div>
<div class="t" style="left:1034px;top:75.27px;font-size:11.5px;color:#c4c4c4;">User Data</div>
<svg class="a" style="left:1303px;top:71px;" width="36" height="16" viewBox="0 0 36 16"><path d="M1 8L15 2L12 8L15 14Z" fill="#111"/><path d="M14 3L34 8L14 13L18 8Z" fill="none" stroke="#5e5e5e" stroke-width="0.8"/></svg>
<svg class="a" style="left:1348px;top:71px;" width="14" height="17" viewBox="0 0 14 17"><path d="M7 1L13 16H1Z" fill="#111"/></svg>
<svg class="a" style="left:1374px;top:71px;" width="14" height="16" viewBox="0 0 14 16"><circle cx="5.5" cy="5.5" r="4" fill="none" stroke="#111" stroke-width="1.2"/><path d="M8.5 8.5L12.5 14" stroke="#111" stroke-width="1.6"/></svg>
<svg class="a" style="left:1397px;top:71px;" width="13" height="16" viewBox="0 0 13 16"><path d="M3 7V4.5A3.5 3.5 0 0 1 10 4.5V5" fill="none" stroke="#111" stroke-width="1.3"/><rect x="1" y="7" width="11" height="9" rx="1" fill="none" stroke="#111" stroke-width="1.2"/><rect x="6" y="10" width="1.5" height="3" fill="#111"/></svg>
<svg class="a" style="left:1413px;top:71px;" width="15" height="15" viewBox="0 0 15 15"><circle cx="7.5" cy="7.5" r="6.5" fill="none" stroke="#111" stroke-width="1.3"/><circle cx="7.5" cy="7.5" r="3.5" fill="none" stroke="#111" stroke-width="1.2"/><circle cx="7.5" cy="7.5" r="1" fill="#111"/></svg>
<svg class="a" style="left:1433px;top:71px;" width="12" height="16" viewBox="0 0 12 16"><rect x="0.5" y="2.5" width="11" height="13" fill="#3f3f3f" stroke="#222"/><rect x="0.5" y="0.5" width="11" height="2" fill="#111"/><path d="M6 6V13M2.5 9.5H9.5" stroke="#111" stroke-width="1.4"/></svg>
<div class="a" style="left:1449px;top:69px;width:1px;height:17px;background:#5a5a5a;"></div>
<div class="a" style="left:929px;top:942px;width:1px;height:74px;background:#606060;"></div>
<div class="a" style="left:1453px;top:48px;width:446px;height:513px;background:#484848;border:1px solid #5e5e5e;box-sizing:border-box;"></div>
<svg class="a" style="left:1459px;top:53px" width="12" height="12"><rect width="12" height="12" fill="url(#gp)"/></svg>
<div class="t" style="left:1480px;top:55.27px;font-size:11.5px;color:#c4c4c4;">File</div>
<div class="t" style="left:1512px;top:55.27px;font-size:11.5px;color:#c4c4c4;">Edit</div>
<div class="t" style="left:1546px;top:55.27px;font-size:11.5px;color:#c4c4c4;">View</div>
<div class="t" style="left:1585px;top:55.27px;font-size:11.5px;color:#c4c4c4;">Objects</div>
<div class="t" style="left:1637.5px;top:55.27px;font-size:11.5px;color:#c4c4c4;">Tags</div>
<div class="t" style="left:1675px;top:55.27px;font-size:11.5px;color:#c4c4c4;">Bookmarks</div>
<div class="a" style="left:1454px;top:70px;width:444px;height:1px;background:#353535;"></div>
<div class="a" style="left:1454px;top:71px;width:444px;height:1px;background:#5e5e5e;"></div>
<svg class="a" style="left:1828px;top:52px;" width="13" height="16" viewBox="0 0 13 16"><circle cx="5" cy="5" r="4" fill="none" stroke="#111" stroke-width="1.2"/><path d="M8 8L12 14" stroke="#111" stroke-width="1.8"/></svg>
<svg class="a" style="left:1845px;top:51px;" width="14" height="16" viewBox="0 0 14 16"><path d="M1 8L7 1.5L13 8H10.5V14.5H3.5V8Z" fill="none" stroke="#111" stroke-width="1.8"/></svg>
<svg class="a" style="left:1864px;top:55px;" width="14" height="8" viewBox="0 0 14 8"><ellipse cx="7" cy="4" rx="6" ry="2.5" fill="none" stroke="#222" stroke-width="0.9"/></svg>
<svg class="a" style="left:1883px;top:52px;" width="12" height="15" viewBox="0 0 12 15"><rect x="0.5" y="2.5" width="11" height="12" fill="#3f3f3f" stroke="#222"/><rect x="0.5" y="0.5" width="11" height="2" fill="#111"/><path d="M6 5.5V12M2.5 8.5H9.5" stroke="#111" stroke-width="1.4"/></svg>
<div class="a" style="left:1455px;top:72px;width:442px;height:488px;background:#484848;"></div>
<div class="a" style="left:1455px;top:73px;width:442px;height:140px;background:repeating-linear-gradient(#4c4c4c 0px,#4c4c4c 20px,#464646 20px,#464646 40px);"></div>
<div class="a" style="left:1457px;top:73px;width:126px;height:14px;background:#565656;"></div>
<div class="a" style="left:1584px;top:73px;width:38px;height:14px;background:#525252;"></div>
<div class="a" style="left:1583px;top:72px;width:1px;height:20px;background:#3a3a3a;"></div>
<div class="a" style="left:1622px;top:72px;width:1px;height:20px;background:#3a3a3a;"></div>
<svg class="a" style="left:1458px;top:76px;" width="30" height="12" viewBox="0 0 30 12"><path d="M3 0V6M0 6H6V11H0Z M6 9H9" fill="none" stroke="#ccc" stroke-width="0.9"/><rect x="13" y="3" width="2" height="9" fill="#ddd"/></svg>
<div class="t" style="left:1477px;top:76.84px;font-size:12px;color:#9ec8f0;font-weight:bold;">0</div>
<div class="t" style="left:1490px;top:80.84px;font-size:12px;color:#d0d0d0;">Lights</div>
<div class="a" style="left:1588px;top:77px;width:10px;height:9px;background:linear-gradient(135deg,#777 50%,#555 50%);"></div>
<div class="a" style="left:1603px;top:76px;width:5px;height:5px;border-radius:50%;background:#e04040;"></div>
<div class="a" style="left:1899px;top:48px;width:21px;height:968px;background:#484848;"></div>
<div class="a" style="left:1900px;top:49px;width:18px;height:51px;background:linear-gradient(90deg,#626262,#585858);border-radius:0 4px 4px 0;"></div>
<div class="a" style="left:1883.5px;top:65.5px;width:51px;height:18px;transform:rotate(90deg);text-align:center;font-size:11px;line-height:18px;color:#f0a830;white-space:pre;">Objects</div>
<div class="a" style="left:1900px;top:100px;width:18px;height:39px;background:#3a3a3a;border-radius:0 4px 4px 0;"></div>
<div class="a" style="left:1889.5px;top:110.5px;width:39px;height:18px;transform:rotate(90deg);text-align:center;font-size:11px;line-height:18px;color:#8a8a8a;white-space:pre;">Takes</div>
<div class="a" style="left:1900px;top:141px;width:18px;height:96px;background:#3a3a3a;border-radius:0 4px 4px 0;"></div>
<div class="a" style="left:1861.0px;top:180.0px;width:96px;height:18px;transform:rotate(90deg);text-align:center;font-size:11px;line-height:18px;color:#8a8a8a;white-space:pre;">Content Browser</div>
<div class="a" style="left:1900px;top:239px;width:18px;height:57px;background:#3a3a3a;border-radius:0 4px 4px 0;"></div>
<div class="a" style="left:1880.5px;top:258.5px;width:57px;height:18px;transform:rotate(90deg);text-align:center;font-size:11px;line-height:18px;color:#8a8a8a;white-space:pre;">Structure</div>
<div class="a" style="left:1791px;top:565px;width:129px;height:1px;background:#5a5a5a;"></div>
<div class="a" style="left:1791px;top:587px;width:129px;height:1px;background:#5a5a5a;"></div>
<div class="a" style="left:1897px;top:72px;width:1px;height:489px;background:#5e5e5e;"></div>
<div class="a" style="left:865px;top:86px;width:926px;height:856px;background:#484848;box-shadow:0 1px 8px 1px rgba(0,0,0,0.38);border-bottom:1px solid #5a5a5a;box-sizing:border-box;"></div>
<div class="a" style="left:865px;top:86px;width:926px;height:30px;background:#fff;"></div>
<svg class="a" style="left:873px;top:92px;" width="16" height="16" viewBox="0 0 16 16"><circle cx="8" cy="8" r="7.4" fill="#ececf0" stroke="#c4c4cc" stroke-width="0.7"/><ellipse cx="7.6" cy="8.4" rx="6" ry="5.2" transform="rotate(-35 8 8)" fill="#06062a"/><ellipse cx="7.6" cy="9" rx="3.8" ry="2.8" transform="rotate(-35 8 8)" fill="#2838b8"/><ellipse cx="6.5" cy="9.5" rx="1.8" ry="1.1" transform="rotate(-35 8 8)" fill="#7a90f0"/><circle cx="12.3" cy="3.6" r="1.1" fill="#5a78d8"/></svg>
<div class="t" style="left:894px;top:95.01px;font-size:11.8px;color:#8a8a8a;">Material Editor</div>
<div class="a" style="left:1672px;top:100px;width:10px;height:1px;background:#333;"></div>
<div class="a" style="left:1717px;top:95px;width:10px;height:10px;border:1px solid #333;box-sizing:border-box;"></div>
<svg class="a" style="left:1762px;top:94px;" width="12" height="12" viewBox="0 0 12 12"><path d="M1 1L11 11M11 1L1 11" stroke="#333" stroke-width="1"/></svg>
<div class="a" style="left:865px;top:116px;width:926px;height:20px;background:#474747;border-top:1px solid #363636;box-sizing:border-box;"></div>
<svg class="a" style="left:870px;top:119px" width="12" height="12"><rect width="12" height="12" fill="url(#gp)"/></svg>
<svg class="a" style="left:1688px;top:118px;" width="36" height="16" viewBox="0 0 36 16"><path d="M2 8L16 2L13 8L16 14Z" fill="#111"/><path d="M15 3L34 8L15 13L19 8Z" fill="none" stroke="#5e5e5e" stroke-width="0.8"/></svg>
<svg class="a" style="left:1734px;top:117px;" width="14" height="18" viewBox="0 0 14 18"><path d="M7 1L13 17H1Z" fill="none" stroke="#5a5a5a" stroke-width="0.8"/></svg>
<svg class="a" style="left:1757px;top:118px;" width="13" height="16" viewBox="0 0 13 16"><path d="M3 7V4.5A3.5 3.5 0 0 1 10 4.5V5" fill="none" stroke="#111" stroke-width="1.3"/><rect x="1" y="7" width="11" height="8.5" rx="1" fill="none" stroke="#111" stroke-width="1.2"/><rect x="6" y="10" width="1.5" height="3" fill="#111"/></svg>
<svg class="a" style="left:1776px;top:118px;" width="12" height="16" viewBox="0 0 12 16"><rect x="0.5" y="2.5" width="11" height="13" fill="#3f3f3f" stroke="#222"/><rect x="0.5" y="0.5" width="11" height="2" fill="#111"/><path d="M6 6V13M2.5 9.5H9.5" stroke="#111" stroke-width="1.4"/></svg>
<div class="a" style="left:865px;top:135px;width:926px;height:1px;background:#333;"></div>
<div class="a" style="left:865px;top:136px;width:926px;height:1px;background:#5e5e5e;"></div>
<div class="a" style="left:865px;top:137px;width:926px;height:1px;background:#3a3a3a;"></div>
<div class="a" style="left:866px;top:138px;width:91px;height:91px;background:repeating-linear-gradient(-45deg,#cfcfcf 0px,#cfcfcf 11px,#b2b2b2 11px,#b2b2b2 22px);"></div>
<svg class="a" style="left:866px;top:138px;" width="91" height="91" viewBox="0 0 91 91"><path d="M38 0Q30 20 45 40Q55 60 40 85" fill="none" stroke="#a09080" stroke-width="0.6" opacity="0.5"/><path d="M30 0Q22 25 35 45Q48 65 35 90" fill="none" stroke="#a09080" stroke-width="0.6" opacity="0.4"/><path d="M45 0Q38 20 50 35Q60 50 52 70" fill="none" stroke="#a09080" stroke-width="0.6" opacity="0.4"/></svg>
<div class="a" style="left:989px;top:138px;width:1px;height:804px;background:#383838;"></div>
<div class="a" style="left:990px;top:138px;width:1px;height:804px;background:#5a5a5a;"></div>
<div class="a" style="left:866px;top:234px;width:114px;height:17px;background:#383838;border-radius:4px;box-shadow:inset 0 1px 1px #2e2e2e;"></div>
<div class="t" style="left:870px;top:237.77px;font-size:11.5px;color:#c8c8c8;">Hair Mat</div>
<div class="a" style="left:866px;top:254px;width:87px;height:17px;background:#383838;border-radius:4px 0 0 4px;"></div>
<div class="a" style="left:952px;top:254px;width:11px;height:17px;background:linear-gradient(90deg,#6a6a6a,#5a5a5a);border-radius:0 3px 3px 0;"></div>
<svg class="a" style="left:955px;top:259px;" width="5" height="7" viewBox="0 0 5 7"><path d="M0 0L5 3.5L0 7Z" fill="#ddd"/></svg>
<svg class="a" style="left:964px;top:253px;" width="18" height="18" viewBox="0 0 18 18"><circle cx="9" cy="9" r="8.5" fill="#d4d4d4" stroke="#444" stroke-width="0.8"/><path d="M5 4L13 9.5L9.5 10L12 14L10.5 15L8 11L5.5 13.5Z" fill="#111"/></svg>
<div class="a" style="left:867.5px;top:275.5px;width:13.0px;height:13.0px;border-radius:50%;background:#7a7a7a;box-shadow:inset 0 0 0 1.5px #2f2f2f, 0 0 0 1.5px #606060;"></div>
<div class="t" style="left:885px;top:277.27px;font-size:11.5px;color:#f0a830;">Color</div>
<div class="a" style="left:949px;top:285px;width:1px;height:1px;background:#a8a8a8;"></div>
<div class="a" style="left:943px;top:285px;width:1px;height:1px;background:#a8a8a8;"></div>
<div class="a" style="left:937px;top:285px;width:1px;height:1px;background:#a8a8a8;"></div>
<div class="a" style="left:931px;top:285px;width:1px;height:1px;background:#a8a8a8;"></div>
<div class="a" style="left:925px;top:285px;width:1px;height:1px;background:#a8a8a8;"></div>
<div class="a" style="left:918px;top:285px;width:1px;height:1px;background:#a8a8a8;"></div>
<div class="a" style="left:956px;top:276px;width:12px;height:13px;background:linear-gradient(135deg,#1e1e1e,#333);border-radius:3px;"></div>
<svg class="a" style="left:957px;top:277px;" width="11" height="11" viewBox="0 0 11 11"><path d="M1.5 6L4.5 10L10 1.5" fill="none" stroke="#e8e8e8" stroke-width="2"/></svg>
<div class="a" style="left:867.5px;top:293.5px;width:13.0px;height:13.0px;border-radius:50%;background:#7a7a7a;box-shadow:inset 0 0 0 1.5px #2f2f2f, 0 0 0 1.5px #606060;"></div>
<div class="t" style="left:885px;top:295.27px;font-size:11.5px;color:#c8c8c8;">Backlit Color</div>
<div class="a" style="left:956px;top:294px;width:12px;height:13px;background:linear-gradient(#6a6a6a,#565656);border-radius:3px;"></div>
<div class="a" style="left:867.5px;top:311.5px;width:13.0px;height:13.0px;border-radius:50%;background:#7a7a7a;box-shadow:inset 0 0 0 1.5px #2f2f2f, 0 0 0 1.5px #606060;"></div>
<div class="t" style="left:885px;top:313.27px;font-size:11.5px;color:#c8c8c8;">Specular</div>
<div class="a" style="left:949px;top:321px;width:1px;height:1px;background:#a8a8a8;"></div>
<div class="a" style="left:943px;top:321px;width:1px;height:1px;background:#a8a8a8;"></div>
<div class="a" style="left:937px;top:321px;width:1px;height:1px;background:#a8a8a8;"></div>
<div class="a" style="left:956px;top:312px;width:12px;height:13px;background:linear-gradient(135deg,#1e1e1e,#333);border-radius:3px;"></div>
<svg class="a" style="left:957px;top:313px;" width="11" height="11" viewBox="0 0 11 11"><path d="M1.5 6L4.5 10L10 1.5" fill="none" stroke="#e8e8e8" stroke-width="2"/></svg>
<div class="a" style="left:867.5px;top:329.5px;width:13.0px;height:13.0px;border-radius:50%;background:#7a7a7a;box-shadow:inset 0 0 0 1.5px #2f2f2f, 0 0 0 1.5px #606060;"></div>
<div class="t" style="left:885px;top:331.27px;font-size:11.5px;color:#c8c8c8;">Transparency</div>
<div class="a" style="left:956px;top:330px;width:12px;height:13px;background:linear-gradient(#6a6a6a,#565656);border-radius:3px;"></div>
<div class="a" style="left:867.5px;top:347.5px;width:13.0px;height:13.0px;border-radius:50%;background:#7a7a7a;box-shadow:inset 0 0 0 1.5px #2f2f2f, 0 0 0 1.5px #606060;"></div>
<div class="t" style="left:885px;top:349.27px;font-size:11.5px;color:#c8c8c8;">Thickness</div>
<div class="a" style="left:949px;top:357px;width:1px;height:1px;background:#a8a8a8;"></div>
<div class="a" style="left:943px;top:357px;width:1px;height:1px;background:#a8a8a8;"></div>
<div class="a" style="left:956px;top:348px;width:12px;height:13px;background:linear-gradient(135deg,#1e1e1e,#333);border-radius:3px;"></div>
<svg class="a" style="left:957px;top:349px;" width="11" height="11" viewBox="0 0 11 11"><path d="M1.5 6L4.5 10L10 1.5" fill="none" stroke="#e8e8e8" stroke-width="2"/></svg>
<div class="a" style="left:867.5px;top:365.5px;width:13.0px;height:13.0px;border-radius:50%;background:#7a7a7a;box-shadow:inset 0 0 0 1.5px #2f2f2f, 0 0 0 1.5px #606060;"></div>
<div class="t" style="left:885px;top:367.27px;font-size:11.5px;color:#c8c8c8;">Length</div>
<div class="a" style="left:949px;top:375px;width:1px;height:1px;background:#a8a8a8;"></div>
<div class="a" style="left:943px;top:375px;width:1px;height:1px;background:#a8a8a8;"></div>
<div class="a" style="left:937px;top:375px;width:1px;height:1px;background:#a8a8a8;"></div>
<div class="a" style="left:931px;top:375px;width:1px;height:1px;background:#a8a8a8;"></div>
<div class="a" style="left:925px;top:375px;width:1px;height:1px;background:#a8a8a8;"></div>
<div class="a" style="left:956px;top:366px;width:12px;height:13px;background:linear-gradient(135deg,#1e1e1e,#333);border-radius:3px;"></div>
<svg class="a" style="left:957px;top:367px;" width="11" height="11" viewBox="0 0 11 11"><path d="M1.5 6L4.5 10L10 1.5" fill="none" stroke="#e8e8e8" stroke-width="2"/></svg>
<div class="a" style="left:867.5px;top:383.5px;width:13.0px;height:13.0px;border-radius:50%;background:#7a7a7a;box-shadow:inset 0 0 0 1.5px #2f2f2f, 0 0 0 1.5px #606060;"></div>
<div class="t" style="left:885px;top:385.27px;font-size:11.5px;color:#c8c8c8;">Scale</div>
<div class="a" style="left:949px;top:393px;width:1px;height:1px;background:#a8a8a8;"></div>
<div class="a" style="left:943px;top:393px;width:1px;height:1px;background:#a8a8a8;"></div>
<div class="a" style="left:937px;top:393px;width:1px;height:1px;background:#a8a8a8;"></div>
<div class="a" style="left:931px;top:393px;width:1px;height:1px;background:#a8a8a8;"></div>
<div class="a" style="left:925px;top:393px;width:1px;height:1px;background:#a8a8a8;"></div>
<div class="a" style="left:918px;top:393px;width:1px;height:1px;background:#a8a8a8;"></div>
<div class="a" style="left:956px;top:384px;width:12px;height:13px;background:linear-gradient(#6a6a6a,#565656);border-radius:3px;"></div>
<div class="a" style="left:867.5px;top:401.5px;width:13.0px;height:13.0px;border-radius:50%;background:#7a7a7a;box-shadow:inset 0 0 0 1.5px #2f2f2f, 0 0 0 1.5px #606060;"></div>
<div class="t" style="left:885px;top:403.27px;font-size:11.5px;color:#c8c8c8;">Frizz</div>
<div class="a" style="left:949px;top:411px;width:1px;height:1px;background:#a8a8a8;"></div>
<div class="a" style="left:943px;top:411px;width:1px;height:1px;background:#a8a8a8;"></div>
<div class="a" style="left:937px;top:411px;width:1px;height:1px;background:#a8a8a8;"></div>
<div class="a" style="left:931px;top:411px;width:1px;height:1px;background:#a8a8a8;"></div>
<div class="a" style="left:925px;top:411px;width:1px;height:1px;background:#a8a8a8;"></div>
<div class="a" style="left:918px;top:411px;width:1px;height:1px;background:#a8a8a8;"></div>
<div class="a" style="left:912px;top:411px;width:1px;height:1px;background:#a8a8a8;"></div>
<div class="a" style="left:956px;top:402px;width:12px;height:13px;background:linear-gradient(135deg,#1e1e1e,#333);border-radius:3px;"></div>
<svg class="a" style="left:957px;top:403px;" width="11" height="11" viewBox="0 0 11 11"><path d="M1.5 6L4.5 10L10 1.5" fill="none" stroke="#e8e8e8" stroke-width="2"/></svg>
<div class="a" style="left:867.5px;top:419.5px;width:13.0px;height:13.0px;border-radius:50%;background:#7a7a7a;box-shadow:inset 0 0 0 1.5px #2f2f2f, 0 0 0 1.5px #606060;"></div>
<div class="t" style="left:885px;top:421.27px;font-size:11.5px;color:#c8c8c8;">Kink</div>
<div class="a" style="left:949px;top:429px;width:1px;height:1px;background:#a8a8a8;"></div>
<div class="a" style="left:943px;top:429px;width:1px;height:1px;background:#a8a8a8;"></div>
<div class="a" style="left:937px;top:429px;width:1px;height:1px;background:#a8a8a8;"></div>
<div class="a" style="left:931px;top:429px;width:1px;height:1px;background:#a8a8a8;"></div>
<div class="a" style="left:925px;top:429px;width:1px;height:1px;background:#a8a8a8;"></div>
<div class="a" style="left:918px;top:429px;width:1px;height:1px;background:#a8a8a8;"></div>
<div class="a" style="left:912px;top:429px;width:1px;height:1px;background:#a8a8a8;"></div>
<div class="a" style="left:956px;top:420px;width:12px;height:13px;background:linear-gradient(135deg,#1e1e1e,#333);border-radius:3px;"></div>
<svg class="a" style="left:957px;top:421px;" width="11" height="11" viewBox="0 0 11 11"><path d="M1.5 6L4.5 10L10 1.5" fill="none" stroke="#e8e8e8" stroke-width="2"/></svg>
<div class="a" style="left:867.5px;top:437.5px;width:13.0px;height:13.0px;border-radius:50%;background:#7a7a7a;box-shadow:inset 0 0 0 1.5px #2f2f2f, 0 0 0 1.5px #606060;"></div>
<div class="t" style="left:885px;top:439.27px;font-size:11.5px;color:#c8c8c8;">Density</div>
<div class="a" style="left:949px;top:447px;width:1px;height:1px;background:#a8a8a8;"></div>
<div class="a" style="left:943px;top:447px;width:1px;height:1px;background:#a8a8a8;"></div>
<div class="a" style="left:937px;top:447px;width:1px;height:1px;background:#a8a8a8;"></div>
<div class="a" style="left:931px;top:447px;width:1px;height:1px;background:#a8a8a8;"></div>
<div class="a" style="left:925px;top:447px;width:1px;height:1px;background:#a8a8a8;"></div>
<div class="a" style="left:956px;top:438px;width:12px;height:13px;background:linear-gradient(#6a6a6a,#565656);border-radius:3px;"></div>
<div class="a" style="left:867.5px;top:455.5px;width:13.0px;height:13.0px;border-radius:50%;background:#7a7a7a;box-shadow:inset 0 0 0 1.5px #2f2f2f, 0 0 0 1.5px #606060;"></div>
<div class="t" style="left:885px;top:457.27px;font-size:11.5px;color:#c8c8c8;">Clump</div>
<div class="a" style="left:949px;top:465px;width:1px;height:1px;background:#a8a8a8;"></div>
<div class="a" style="left:943px;top:465px;width:1px;height:1px;background:#a8a8a8;"></div>
<div class="a" style="left:937px;top:465px;width:1px;height:1px;background:#a8a8a8;"></div>
<div class="a" style="left:931px;top:465px;width:1px;height:1px;background:#a8a8a8;"></div>
<div class="a" style="left:925px;top:465px;width:1px;height:1px;background:#a8a8a8;"></div>
<div class="a" style="left:956px;top:456px;width:12px;height:13px;background:linear-gradient(#6a6a6a,#565656);border-radius:3px;"></div>
<div class="a" style="left:867.5px;top:473.5px;width:13.0px;height:13.0px;border-radius:50%;background:#7a7a7a;box-shadow:inset 0 0 0 1.5px #2f2f2f, 0 0 0 1.5px #606060;"></div>
<div class="t" style="left:885px;top:475.27px;font-size:11.5px;color:#c8c8c8;">Tighten</div>
<div class="a" style="left:949px;top:483px;width:1px;height:1px;background:#a8a8a8;"></div>
<div class="a" style="left:943px;top:483px;width:1px;height:1px;background:#a8a8a8;"></div>
<div class="a" style="left:937px;top:483px;width:1px;height:1px;background:#a8a8a8;"></div>
<div class="a" style="left:931px;top:483px;width:1px;height:1px;background:#a8a8a8;"></div>
<div class="a" style="left:925px;top:483px;width:1px;height:1px;background:#a8a8a8;"></div>
<div class="a" style="left:956px;top:474px;width:12px;height:13px;background:linear-gradient(#6a6a6a,#565656);border-radius:3px;"></div>
<div class="a" style="left:867.5px;top:491.5px;width:13.0px;height:13.0px;border-radius:50%;background:#7a7a7a;box-shadow:inset 0 0 0 1.5px #2f2f2f, 0 0 0 1.5px #606060;"></div>
<div class="t" style="left:885px;top:493.27px;font-size:11.5px;color:#c8c8c8;">Displace</div>
<div class="a" style="left:949px;top:501px;width:1px;height:1px;background:#a8a8a8;"></div>
<div class="a" style="left:943px;top:501px;width:1px;height:1px;background:#a8a8a8;"></div>
<div class="a" style="left:937px;top:501px;width:1px;height:1px;background:#a8a8a8;"></div>
<div class="a" style="left:931px;top:501px;width:1px;height:1px;background:#a8a8a8;"></div>
<div class="a" style="left:956px;top:492px;width:12px;height:13px;background:linear-gradient(#6a6a6a,#565656);border-radius:3px;"></div>
<div class="a" style="left:867.5px;top:509.5px;width:13.0px;height:13.0px;border-radius:50%;background:#7a7a7a;box-shadow:inset 0 0 0 1.5px #2f2f2f, 0 0 0 1.5px #606060;"></div>
<div class="t" style="left:885px;top:511.27px;font-size:11.5px;color:#c8c8c8;">Bend</div>
<div class="a" style="left:949px;top:519px;width:1px;height:1px;background:#a8a8a8;"></div>
<div class="a" style="left:943px;top:519px;width:1px;height:1px;background:#a8a8a8;"></div>
<div class="a" style="left:937px;top:519px;width:1px;height:1px;background:#a8a8a8;"></div>
<div class="a" style="left:931px;top:519px;width:1px;height:1px;background:#a8a8a8;"></div>
<div class="a" style="left:925px;top:519px;width:1px;height:1px;background:#a8a8a8;"></div>
<div class="a" style="left:918px;top:519px;width:1px;height:1px;background:#a8a8a8;"></div>
<div class="a" style="left:912px;top:519px;width:1px;height:1px;background:#a8a8a8;"></div>
<div class="a" style="left:956px;top:510px;width:12px;height:13px;background:linear-gradient(#6a6a6a,#565656);border-radius:3px;"></div>
<div class="a" style="left:867.5px;top:527.5px;width:13.0px;height:13.0px;border-radius:50%;background:#7a7a7a;box-shadow:inset 0 0 0 1.5px #2f2f2f, 0 0 0 1.5px #606060;"></div>
<div class="t" style="left:885px;top:529.27px;font-size:11.5px;color:#c8c8c8;">Curl</div>
<div class="a" style="left:949px;top:537px;width:1px;height:1px;background:#a8a8a8;"></div>
<div class="a" style="left:943px;top:537px;width:1px;height:1px;background:#a8a8a8;"></div>
<div class="a" style="left:937px;top:537px;width:1px;height:1px;background:#a8a8a8;"></div>
<div class="a" style="left:931px;top:537px;width:1px;height:1px;background:#a8a8a8;"></div>
<div class="a" style="left:925px;top:537px;width:1px;height:1px;background:#a8a8a8;"></div>
<div class="a" style="left:918px;top:537px;width:1px;height:1px;background:#a8a8a8;"></div>
<div class="a" style="left:912px;top:537px;width:1px;height:1px;background:#a8a8a8;"></div>
<div class="a" style="left:956px;top:528px;width:12px;height:13px;background:linear-gradient(135deg,#1e1e1e,#333);border-radius:3px;"></div>
<svg class="a" style="left:957px;top:529px;" width="11" height="11" viewBox="0 0 11 11"><path d="M1.5 6L4.5 10L10 1.5" fill="none" stroke="#e8e8e8" stroke-width="2"/></svg>
<div class="a" style="left:867.5px;top:545.5px;width:13.0px;height:13.0px;border-radius:50%;background:#7a7a7a;box-shadow:inset 0 0 0 1.5px #2f2f2f, 0 0 0 1.5px #606060;"></div>
<div class="t" style="left:885px;top:547.27px;font-size:11.5px;color:#c8c8c8;">Twist</div>
<div class="a" style="left:949px;top:555px;width:1px;height:1px;background:#a8a8a8;"></div>
<div class="a" style="left:943px;top:555px;width:1px;height:1px;background:#a8a8a8;"></div>
<div class="a" style="left:937px;top:555px;width:1px;height:1px;background:#a8a8a8;"></div>
<div class="a" style="left:931px;top:555px;width:1px;height:1px;background:#a8a8a8;"></div>
<div class="a" style="left:925px;top:555px;width:1px;height:1px;background:#a8a8a8;"></div>
<div class="a" style="left:918px;top:555px;width:1px;height:1px;background:#a8a8a8;"></div>
<div class="a" style="left:912px;top:555px;width:1px;height:1px;background:#a8a8a8;"></div>
<div class="a" style="left:956px;top:546px;width:12px;height:13px;background:linear-gradient(#6a6a6a,#565656);border-radius:3px;"></div>
<div class="a" style="left:867.5px;top:563.5px;width:13.0px;height:13.0px;border-radius:50%;background:#7a7a7a;box-shadow:inset 0 0 0 1.5px #2f2f2f, 0 0 0 1.5px #606060;"></div>
<div class="t" style="left:885px;top:565.27px;font-size:11.5px;color:#c8c8c8;">Wave</div>
<div class="a" style="left:949px;top:573px;width:1px;height:1px;background:#a8a8a8;"></div>
<div class="a" style="left:943px;top:573px;width:1px;height:1px;background:#a8a8a8;"></div>
<div class="a" style="left:937px;top:573px;width:1px;height:1px;background:#a8a8a8;"></div>
<div class="a" style="left:931px;top:573px;width:1px;height:1px;background:#a8a8a8;"></div>
<div class="a" style="left:925px;top:573px;width:1px;height:1px;background:#a8a8a8;"></div>
<div class="a" style="left:918px;top:573px;width:1px;height:1px;background:#a8a8a8;"></div>
<div class="a" style="left:956px;top:564px;width:12px;height:13px;background:linear-gradient(#6a6a6a,#565656);border-radius:3px;"></div>
<div class="a" style="left:867.5px;top:581.5px;width:13.0px;height:13.0px;border-radius:50%;background:#7a7a7a;box-shadow:inset 0 0 0 1.5px #2f2f2f, 0 0 0 1.5px #606060;"></div>
<div class="t" style="left:885px;top:583.27px;font-size:11.5px;color:#c8c8c8;">Straighten</div>
<div class="a" style="left:949px;top:591px;width:1px;height:1px;background:#a8a8a8;"></div>
<div class="a" style="left:943px;top:591px;width:1px;height:1px;background:#a8a8a8;"></div>
<div class="a" style="left:956px;top:582px;width:12px;height:13px;background:linear-gradient(#6a6a6a,#565656);border-radius:3px;"></div>
<div class="t" style="left:885px;top:601.27px;font-size:11.5px;color:#c8c8c8;">Assign</div>
<div class="a" style="left:949px;top:609px;width:1px;height:1px;background:#a8a8a8;"></div>
<div class="a" style="left:943px;top:609px;width:1px;height:1px;background:#a8a8a8;"></div>
<div class="a" style="left:937px;top:609px;width:1px;height:1px;background:#a8a8a8;"></div>
<div class="a" style="left:931px;top:609px;width:1px;height:1px;background:#a8a8a8;"></div>
<div class="a" style="left:925px;top:609px;width:1px;height:1px;background:#a8a8a8;"></div>
<div class="t" style="left:885px;top:619.27px;font-size:11.5px;color:#c8c8c8;">Illumination</div>
<div class="a" style="left:995px;top:143px;width:794px;height:15px;background:#333;"></div>
<div class="t" style="left:997px;top:145.77px;font-size:11.5px;color:#c8c8c8;">Color</div>
<div class="a" style="left:997.5px;top:164.5px;width:13.0px;height:13.0px;border-radius:50%;background:#7a7a7a;box-shadow:inset 0 0 0 1.5px #2f2f2f, 0 0 0 1.5px #606060;"></div>
<div class="t" style="left:1015px;top:166.27px;font-size:11.5px;color:#c8c8c8;">Color</div>
<div class="a" style="left:1055px;top:174px;width:1px;height:1px;background:#a8a8a8;"></div>
<div class="a" style="left:1049px;top:174px;width:1px;height:1px;background:#a8a8a8;"></div>
<svg class="a" style="left:1065px;top:166px;" width="5" height="8" viewBox="0 0 5 8"><path d="M0 0L5 4L0 8Z" fill="#111"/></svg>
<div class="a" style="left:1075px;top:163px;width:712px;height:15px;background:#000;"></div>
<div class="a" style="left:1076px;top:164px;width:711px;height:12px;background:linear-gradient(90deg,#7d6a5c,#ad9888);"></div>
<div class="a" style="left:1076px;top:164px;width:711px;height:12px;background-image:radial-gradient(rgba(80,110,90,0.35) 0.7px, transparent 0.8px);background-size:4px 3px;"></div>
<div class="a" style="left:1075px;top:176px;width:712px;height:2px;background:#fff;"></div>
<div class="a" style="left:1785px;top:163px;width:2px;height:15px;background:#fff;"></div>
<svg class="a" style="left:1426px;top:164px;" width="10" height="10" viewBox="0 0 10 10"><path d="M5 0.5L9.5 5L5 9.5L0.5 5Z" fill="#fff" stroke="#111" stroke-width="1"/></svg>
<svg class="a" style="left:1074px;top:176px;" width="10" height="15" viewBox="0 0 10 15"><path d="M5 0.5L9.5 5V14.5H0.5V5Z" fill="#fff" stroke="#111" stroke-width="1"/><rect x="2.5" y="7" width="5" height="6" fill="#7d6a5c"/></svg>
<svg class="a" style="left:1780px;top:176px;" width="10" height="15" viewBox="0 0 10 15"><path d="M5 0.5L9.5 5V14.5H0.5V5Z" fill="#fff" stroke="#111" stroke-width="1"/><rect x="2.5" y="7" width="5" height="6" fill="#ad9888"/></svg>
<div class="a" style="left:997.5px;top:195.5px;width:13.0px;height:13.0px;border-radius:50%;background:#7a7a7a;box-shadow:inset 0 0 0 1.5px #2f2f2f, 0 0 0 1.5px #606060;"></div>
<div class="t" style="left:1015px;top:197.27px;font-size:11.5px;color:#c8c8c8;">Brightness</div>
<div class="a" style="left:1075px;top:194px;width:67px;height:16px;background:#333;border-radius:3px 0 0 3px;"></div>
<div class="t" style="left:1080px;top:197.27px;font-size:11.5px;color:#c8c8c8;">100 %</div>
<svg class="a" style="left:1133px;top:197px;" width="6" height="10" viewBox="0 0 6 10"><path d="M0 4L3 0L6 4Z M0 6L3 10L6 6Z" fill="#aaa"/></svg>
<div class="a" style="left:1142px;top:194px;width:644px;height:15px;background:#7f7f7f;"></div>
<div class="a" style="left:1784px;top:195px;width:2px;height:13px;background:#f0a830;"></div>
<div class="a" style="left:1465px;top:204px;width:1px;height:3px;background:#c08a30;"></div>
<div class="t" style="left:1015px;top:225.27px;font-size:11.5px;color:#c8c8c8;">Texture</div>
<div class="a" style="left:1065px;top:233px;width:1px;height:1px;background:#a8a8a8;"></div>
<div class="a" style="left:1059px;top:233px;width:1px;height:1px;background:#a8a8a8;"></div>
<div class="a" style="left:1075px;top:220px;width:18px;height:17px;border-radius:9px;background:linear-gradient(#707070,#5e5e5e);box-shadow:0 0 0 1px #2e2e2e;"></div>
<svg class="a" style="left:1082px;top:225px;" width="5" height="7" viewBox="0 0 5 7"><path d="M0 0L5 3.5L0 7Z" fill="#ddd"/></svg>
<div class="a" style="left:1096px;top:220px;width:657px;height:17px;background:linear-gradient(#6e6e6e,#646464);border-radius:8px;box-shadow:0 0 0 1px #2e2e2e;"></div>
<div class="a" style="left:1757px;top:220px;width:31px;height:17px;background:linear-gradient(#6e6e6e,#646464);border-radius:8px;box-shadow:0 0 0 1px #2e2e2e;"></div>
<div class="t" style="left:1766px;top:224.69px;font-size:11px;color:#e0e0e0;">...</div>
<div class="a" style="left:999px;top:244px;width:10px;height:10px;border-radius:50%;background:#4e4e4e;box-shadow:inset 1px 1px 1px #333,0 0 0 1px #555;"></div>
<div class="t" style="left:1015px;top:244.27px;font-size:11.5px;color:#8c8c8c;">Blend</div>
<div class="a" style="left:1050px;top:241px;width:86px;height:16px;background:#555;border-radius:4px;box-shadow:0 0 0 1px #404040;"></div>
<div class="t" style="left:1057px;top:244.27px;font-size:11.5px;color:#888;">Normal</div>
<svg class="a" style="left:1122px;top:247px;" width="9" height="5" viewBox="0 0 9 5"><path d="M0 0H9L4.5 5Z" fill="#8a8a8a"/></svg>
<div class="a" style="left:1142px;top:244px;width:10px;height:10px;border-radius:50%;background:#4e4e4e;box-shadow:inset 1px 1px 1px #333,0 0 0 1px #555;"></div>
<div class="t" style="left:1158px;top:244.27px;font-size:11.5px;color:#8c8c8c;">Mix</div>
<div class="a" style="left:1181px;top:241px;width:67px;height:16px;background:#454545;border-radius:3px;"></div>
<div class="t" style="left:1186px;top:244.27px;font-size:11.5px;color:#888;">100 %</div>
<svg class="a" style="left:1239px;top:244px;" width="6" height="10" viewBox="0 0 6 10"><path d="M0 4L3 0L6 4Z M0 6L3 10L6 6Z" fill="#888"/></svg>
<div class="a" style="left:1248px;top:241px;width:538px;height:15px;background:#7b7b7b;"></div>
<div class="a" style="left:1518px;top:252px;width:1px;height:4px;background:#555;"></div>
<div class="t" style="left:1007px;top:272.27px;font-size:11.5px;color:#c8c8c8;">Var:</div>
<div class="a" style="left:1031.5px;top:270.5px;width:13.0px;height:13.0px;border-radius:50%;background:#7a7a7a;box-shadow:inset 0 0 0 1.5px #2f2f2f, 0 0 0 1.5px #606060;"></div>
<div class="t" style="left:1050px;top:272.27px;font-size:11.5px;color:#c8c8c8;">H</div>
<div class="a" style="left:1062px;top:268px;width:66px;height:17px;background:#333;border-radius:3px;"></div>
<div class="t" style="left:1067px;top:272.27px;font-size:11.5px;color:#c8c8c8;">0 %</div>
<svg class="a" style="left:1119px;top:271px;" width="6" height="10" viewBox="0 0 6 10"><path d="M0 4L3 0L6 4Z M0 6L3 10L6 6Z" fill="#aaa"/></svg>
<div class="a" style="left:1131.5px;top:270.5px;width:13.0px;height:13.0px;border-radius:50%;background:#7a7a7a;box-shadow:inset 0 0 0 1.5px #2f2f2f, 0 0 0 1.5px #606060;"></div>
<div class="t" style="left:1149px;top:272.27px;font-size:11.5px;color:#c8c8c8;">S</div>
<div class="a" style="left:1160px;top:268px;width:66px;height:17px;background:#333;border-radius:3px;"></div>
<div class="t" style="left:1165px;top:272.27px;font-size:11.5px;color:#c8c8c8;">0 %</div>
<svg class="a" style="left:1217px;top:271px;" width="6" height="10" viewBox="0 0 6 10"><path d="M0 4L3 0L6 4Z M0 6L3 10L6 6Z" fill="#aaa"/></svg>
<div class="a" style="left:1229.5px;top:270.5px;width:13.0px;height:13.0px;border-radius:50%;background:#7a7a7a;box-shadow:inset 0 0 0 1.5px #2f2f2f, 0 0 0 1.5px #606060;"></div>
<div class="t" style="left:1248px;top:272.27px;font-size:11.5px;color:#c8c8c8;">V</div>
<div class="a" style="left:1258px;top:268px;width:66px;height:17px;background:#333;border-radius:3px;"></div>
<div class="t" style="left:1263px;top:272.27px;font-size:11.5px;color:#c8c8c8;">0 %</div>
<svg class="a" style="left:1315px;top:271px;" width="6" height="10" viewBox="0 0 6 10"><path d="M0 4L3 0L6 4Z M0 6L3 10L6 6Z" fill="#aaa"/></svg>
<div class="a" style="left:995px;top:289px;width:794px;height:15px;background:#6a6a6a;"></div>
<svg class="a" style="left:1006px;top:294px;" width="8" height="6" viewBox="0 0 8 6"><path d="M0 0H8L4 6Z" fill="#e0e0e0"/></svg>
<div class="t" style="left:1015px;top:292.27px;font-size:11.5px;color:#d8d8d8;">Roots</div>
<div class="a" style="left:995px;top:304px;width:794px;height:48px;background:#4a4a4a;"></div>
<div class="t" style="left:1023px;top:313.27px;font-size:11.5px;color:#c8c8c8;">Texture</div>
<div class="a" style="left:1065px;top:308px;width:18px;height:17px;border-radius:9px;background:linear-gradient(#707070,#5e5e5e);box-shadow:0 0 0 1px #2e2e2e;"></div>
<svg class="a" style="left:1072px;top:313px;" width="5" height="7" viewBox="0 0 5 7"><path d="M0 0L5 3.5L0 7Z" fill="#ddd"/></svg>
<div class="a" style="left:1086px;top:308px;width:660px;height:17px;background:linear-gradient(#6e6e6e,#646464);border-radius:8px;box-shadow:0 0 0 1px #2e2e2e;"></div>
<div class="a" style="left:1749px;top:308px;width:32px;height:17px;background:linear-gradient(#6e6e6e,#646464);border-radius:8px;box-shadow:0 0 0 1px #2e2e2e;"></div>
<div class="t" style="left:1758px;top:312.69px;font-size:11px;color:#e0e0e0;">...</div>
<div class="a" style="left:1007px;top:332px;width:10px;height:10px;border-radius:50%;background:#4e4e4e;box-shadow:inset 1px 1px 1px #333,0 0 0 1px #555;"></div>
<div class="t" style="left:1023px;top:332.27px;font-size:11.5px;color:#8c8c8c;">Blend</div>
<div class="a" style="left:1058px;top:329px;width:86px;height:16px;background:#555;border-radius:4px;box-shadow:0 0 0 1px #404040;"></div>
<div class="t" style="left:1065px;top:332.27px;font-size:11.5px;color:#888;">Normal</div>
<svg class="a" style="left:1130px;top:335px;" width="9" height="5" viewBox="0 0 9 5"><path d="M0 0H9L4.5 5Z" fill="#8a8a8a"/></svg>
<div class="a" style="left:1150px;top:332px;width:10px;height:10px;border-radius:50%;background:#4e4e4e;box-shadow:inset 1px 1px 1px #333,0 0 0 1px #555;"></div>
<div class="t" style="left:1166px;top:332.27px;font-size:11.5px;color:#8c8c8c;">Mix</div>
<div class="a" style="left:1189px;top:329px;width:66px;height:16px;background:#454545;border-radius:3px;"></div>
<div class="t" style="left:1194px;top:332.27px;font-size:11.5px;color:#888;">100 %</div>
<svg class="a" style="left:1246px;top:332px;" width="6" height="10" viewBox="0 0 6 10"><path d="M0 4L3 0L6 4Z M0 6L3 10L6 6Z" fill="#888"/></svg>
<div class="a" style="left:1255px;top:330px;width:523px;height:15px;background:#7b7b7b;"></div>
<div class="a" style="left:1518px;top:341px;width:1px;height:4px;background:#555;"></div>
<div class="a" style="left:995px;top:354px;width:794px;height:15px;background:#6a6a6a;"></div>
<svg class="a" style="left:1007px;top:357px;" width="5" height="9" viewBox="0 0 5 9"><path d="M0 0L5 4.5L0 9Z" fill="#e0e0e0"/></svg>
<div class="t" style="left:1015px;top:357.27px;font-size:11.5px;color:#d8d8d8;">Tips</div>
<div class="a" style="left:995px;top:372px;width:794px;height:15px;background:#6a6a6a;"></div>
<svg class="a" style="left:1007px;top:375px;" width="5" height="9" viewBox="0 0 5 9"><path d="M0 0L5 4.5L0 9Z" fill="#e0e0e0"/></svg>
<div class="t" style="left:1015px;top:375.27px;font-size:11.5px;color:#d8d8d8;">Tint</div>
<div class="a" style="left:995px;top:390px;width:794px;height:15px;background:#6a6a6a;"></div>
<svg class="a" style="left:1007px;top:393px;" width="5" height="9" viewBox="0 0 5 9"><path d="M0 0L5 4.5L0 9Z" fill="#e0e0e0"/></svg>
<div class="t" style="left:1015px;top:393.27px;font-size:11.5px;color:#d8d8d8;">Surface</div>
<svg class="a" style="left:356px;top:25px;" width="14" height="20" viewBox="0 0 14 20"><path d="M1 1V16L4.5 12.5L7.5 19L10 18L7 11.5H12Z" fill="#fff" stroke="#000" stroke-width="1"/></svg>
</body></html>
